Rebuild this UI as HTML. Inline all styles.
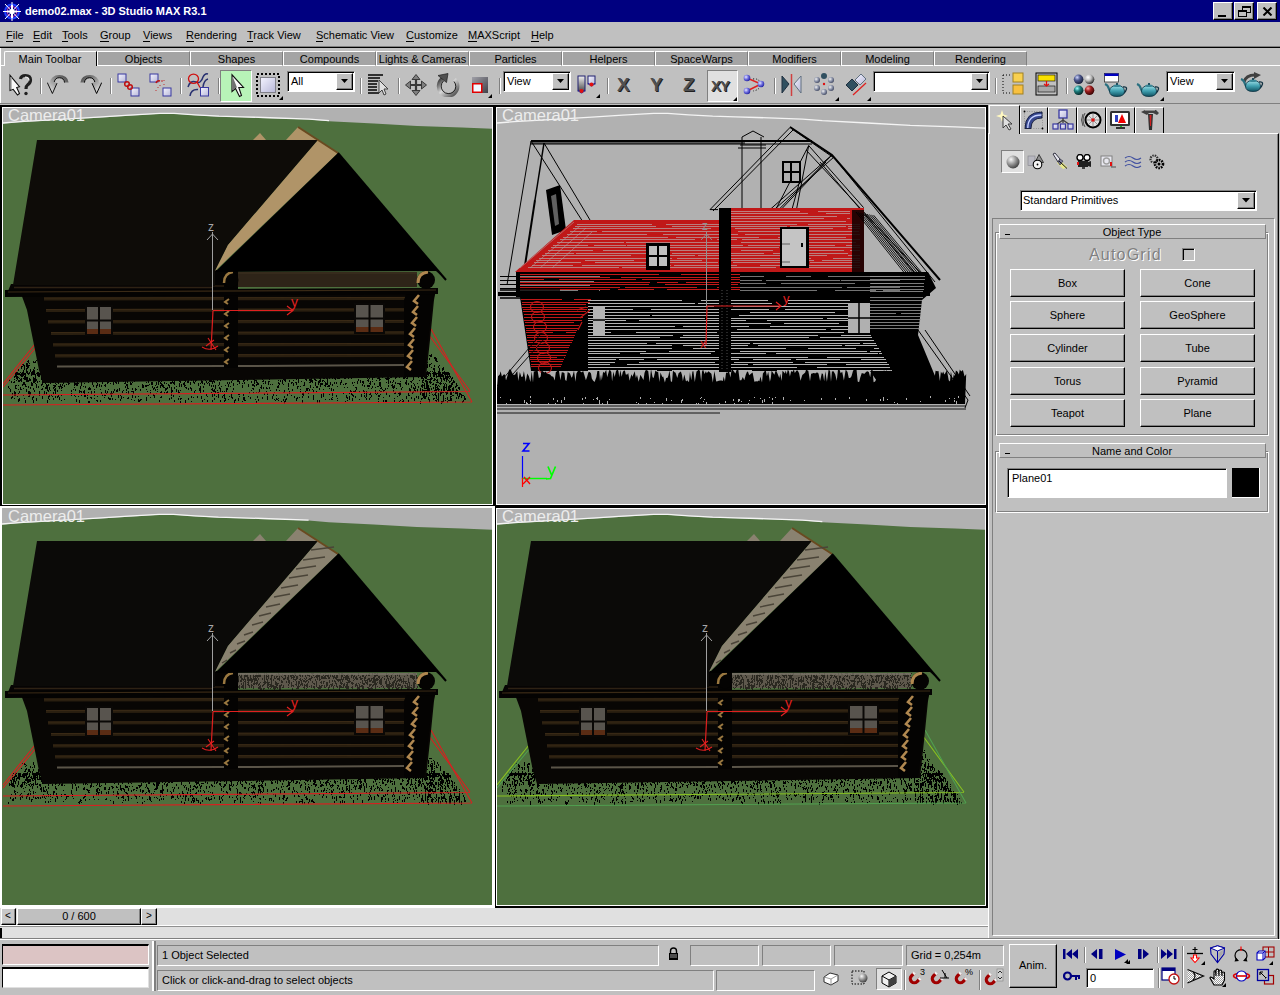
<!DOCTYPE html><html><head><meta charset="utf-8"><style>
*{margin:0;padding:0;box-sizing:border-box}
html,body{width:1280px;height:995px;overflow:hidden;background:#c0c0c0;position:relative;font-family:"Liberation Sans",sans-serif;font-size:11px;color:#000}
.a{position:absolute}
.rz{position:absolute;border-top:1px solid #fff;border-left:1px solid #fff;border-right:1px solid #000;border-bottom:1px solid #000;box-shadow:inset -1px -1px 0 #808080}
.sk{position:absolute;border-top:1px solid #808080;border-left:1px solid #808080;border-right:1px solid #fff;border-bottom:1px solid #fff;box-shadow:inset 1px 1px 0 #000}
.t{position:absolute;white-space:nowrap;line-height:1}
u{text-decoration:none;border-bottom:1px solid #000}
</style></head><body>
<div class="a" style="left:0;top:0;width:1280px;height:22px;background:#000080"></div>
<svg class="a" style="left:1px;top:1px" width="22" height="21" viewBox="0 0 22 21"><circle cx="11" cy="10.5" r="7" fill="none" stroke="#2040ff" stroke-width="2"/><circle cx="11" cy="10.5" r="5" fill="none" stroke="#e040c0" stroke-width="1"/><path d="M11 1V20M2 10.5H20M4 3L18 18M18 3L4 18" stroke="#fff" stroke-width="1"/><path d="M11 4V17M6 10.5H16" stroke="#fff" stroke-width="2"/><circle cx="11" cy="10.5" r="2.5" fill="#fff"/></svg>
<div class="t" style="left:25px;top:6px;color:#fff;font-weight:bold;font-size:11px">demo02.max - 3D Studio MAX R3.1</div>
<div class="rz" style="left:1213px;top:2px;width:20px;height:18px;background:#c0c0c0"></div>
<div class="rz" style="left:1234px;top:2px;width:20px;height:18px;background:#c0c0c0"></div>
<div class="rz" style="left:1257px;top:2px;width:20px;height:18px;background:#c0c0c0"></div>
<div class="a" style="left:1218px;top:15px;width:8px;height:2px;background:#000"></div>
<div class="a" style="left:1242px;top:6px;width:9px;height:7px;border:1px solid #000;border-top-width:2px"></div>
<div class="a" style="left:1238px;top:10px;width:9px;height:7px;border:1px solid #000;border-top-width:2px;background:#c0c0c0"></div>
<svg class="a" style="left:1262px;top:7px" width="11" height="9"><path d="M1.5 0.5L9.5 8.5M9.5 0.5L1.5 8.5" stroke="#000" stroke-width="2"/></svg>
<div class="t" style="left:6px;top:30px"><u>F</u>ile</div>
<div class="t" style="left:33px;top:30px"><u>E</u>dit</div>
<div class="t" style="left:62px;top:30px"><u>T</u>ools</div>
<div class="t" style="left:100px;top:30px"><u>G</u>roup</div>
<div class="t" style="left:143px;top:30px"><u>V</u>iews</div>
<div class="t" style="left:186px;top:30px"><u>R</u>endering</div>
<div class="t" style="left:247px;top:30px"><u>T</u>rack View</div>
<div class="t" style="left:316px;top:30px"><u>S</u>chematic View</div>
<div class="t" style="left:406px;top:30px"><u>C</u>ustomize</div>
<div class="t" style="left:468px;top:30px"><u>M</u>AXScript</div>
<div class="t" style="left:531px;top:30px"><u>H</u>elp</div>
<div class="a" style="left:0;top:46px;width:1280px;height:1px;background:#808080"></div>
<div class="a" style="left:0;top:47px;width:1280px;height:1px;background:#000"></div>
<div class="a" style="left:0;top:48px;width:1px;height:56px;background:#fff"></div>
<div class="a" style="left:0;top:65px;width:1280px;height:1px;background:#fff"></div>
<div class="a" style="left:4px;top:51px;width:93px;height:15px;background:#c0c0c0;border-left:1px solid #fff;border-top:1px solid #fff;border-right:1px solid #000;border-top-left-radius:2px"></div>
<div class="t" style="left:4px;top:54px;width:92px;text-align:center">Main Toolbar</div>
<div class="a" style="left:97px;top:51px;width:93px;height:15px;background:#a4a4a4;border-left:1px solid #fff;border-top:1px solid #fff;border-right:1px solid #808080;border-bottom:1px solid #fff"></div>
<div class="t" style="left:97px;top:54px;width:93px;text-align:center">Objects</div>
<div class="a" style="left:190px;top:51px;width:93px;height:15px;background:#a4a4a4;border-left:1px solid #fff;border-top:1px solid #fff;border-right:1px solid #808080;border-bottom:1px solid #fff"></div>
<div class="t" style="left:190px;top:54px;width:93px;text-align:center">Shapes</div>
<div class="a" style="left:283px;top:51px;width:93px;height:15px;background:#a4a4a4;border-left:1px solid #fff;border-top:1px solid #fff;border-right:1px solid #808080;border-bottom:1px solid #fff"></div>
<div class="t" style="left:283px;top:54px;width:93px;text-align:center">Compounds</div>
<div class="a" style="left:376px;top:51px;width:93px;height:15px;background:#a4a4a4;border-left:1px solid #fff;border-top:1px solid #fff;border-right:1px solid #808080;border-bottom:1px solid #fff"></div>
<div class="t" style="left:376px;top:54px;width:93px;text-align:center">Lights &amp; Cameras</div>
<div class="a" style="left:469px;top:51px;width:93px;height:15px;background:#a4a4a4;border-left:1px solid #fff;border-top:1px solid #fff;border-right:1px solid #808080;border-bottom:1px solid #fff"></div>
<div class="t" style="left:469px;top:54px;width:93px;text-align:center">Particles</div>
<div class="a" style="left:562px;top:51px;width:93px;height:15px;background:#a4a4a4;border-left:1px solid #fff;border-top:1px solid #fff;border-right:1px solid #808080;border-bottom:1px solid #fff"></div>
<div class="t" style="left:562px;top:54px;width:93px;text-align:center">Helpers</div>
<div class="a" style="left:655px;top:51px;width:93px;height:15px;background:#a4a4a4;border-left:1px solid #fff;border-top:1px solid #fff;border-right:1px solid #808080;border-bottom:1px solid #fff"></div>
<div class="t" style="left:655px;top:54px;width:93px;text-align:center">SpaceWarps</div>
<div class="a" style="left:748px;top:51px;width:93px;height:15px;background:#a4a4a4;border-left:1px solid #fff;border-top:1px solid #fff;border-right:1px solid #808080;border-bottom:1px solid #fff"></div>
<div class="t" style="left:748px;top:54px;width:93px;text-align:center">Modifiers</div>
<div class="a" style="left:841px;top:51px;width:93px;height:15px;background:#a4a4a4;border-left:1px solid #fff;border-top:1px solid #fff;border-right:1px solid #808080;border-bottom:1px solid #fff"></div>
<div class="t" style="left:841px;top:54px;width:93px;text-align:center">Modeling</div>
<div class="a" style="left:934px;top:51px;width:93px;height:15px;background:#a4a4a4;border-left:1px solid #fff;border-top:1px solid #fff;border-right:1px solid #808080;border-bottom:1px solid #fff"></div>
<div class="t" style="left:934px;top:54px;width:93px;text-align:center">Rendering</div>
<svg width="0" height="0" style="position:absolute"><defs>
<linearGradient id="gg" x1="0" y1="0" x2="0" y2="1"><stop offset="0" stop-color="#f0f0f0"/><stop offset="1" stop-color="#505050"/></linearGradient>
<linearGradient id="lav" x1="0" y1="0" x2="1" y2="1"><stop offset="0" stop-color="#f4f4ff"/><stop offset="1" stop-color="#b8b8d8"/></linearGradient>
<radialGradient id="ball" cx="0.35" cy="0.35" r="0.7"><stop offset="0" stop-color="#e8e8ff"/><stop offset="0.5" stop-color="#7070e0"/><stop offset="1" stop-color="#2020a0"/></radialGradient>
<radialGradient id="gball" cx="0.35" cy="0.35" r="0.7"><stop offset="0" stop-color="#f0f0f0"/><stop offset="0.6" stop-color="#8088a0"/><stop offset="1" stop-color="#404860"/></radialGradient>
<radialGradient id="sph" cx="0.35" cy="0.3" r="0.8"><stop offset="0" stop-color="#f8f8f8"/><stop offset="0.5" stop-color="#909090"/><stop offset="1" stop-color="#303030"/></radialGradient>
<linearGradient id="teal" x1="0" y1="0" x2="0" y2="1"><stop offset="0" stop-color="#a0e0e8"/><stop offset="0.5" stop-color="#40a0b0"/><stop offset="1" stop-color="#105060"/></linearGradient>
</defs></svg>
<svg class="a" style="left:8px;top:73px" width="25" height="24" viewBox="0 0 25 24"><path d="M2,2.3 L2,17.5 L5.2,16.3 L9.5,22 L11.5,20.5 L8.7,14.5 L11.5,13.7 Z" fill="#f8f8f8" stroke="#101010" stroke-width="1.1"/><path d="M3,4 L3,16" stroke="#909090" stroke-width="1.2"/><path d="M12.5,6 Q13,2.5 17.5,2.5 Q22.5,2.5 22.5,7 Q22.5,10 19.5,12 Q18,13 18,16" fill="none" stroke="#202020" stroke-width="3.2"/><path d="M17,4 Q21,4 21,7.5" fill="none" stroke="#f0f0f0" stroke-width="1.2"/><circle cx="18" cy="20.5" r="1.7" fill="#202020"/></svg>
<div class="a" style="left:40px;top:78px;width:1px;height:16px;background:#808080"></div><div class="a" style="left:41px;top:78px;width:1px;height:16px;background:#fff"></div>
<svg class="a" style="left:47px;top:74px" width="23" height="21" viewBox="0 0 23 21"><defs><linearGradient id="ug" x1="1" y1="0" x2="0" y2="1"><stop offset="0" stop-color="#404040"/><stop offset="0.6" stop-color="#a8a8a8"/><stop offset="1" stop-color="#f8f8f8"/></linearGradient></defs><path d="M3,8.8 A9.3,7.8 0 0 1 21.6,8.6 L17.6,8.6 A5.3,5.6 0 0 0 7.2,8 L10,9.2 L5.4,19.5 L0.3,8.6 Z" fill="url(#ug)"/><path d="M17.6,8.6 A5.3,5.6 0 0 0 7.2,8 M10,9.2 L5.4,19.5 L0.3,8.6" fill="none" stroke="#000" stroke-width="0.9"/></svg>
<svg class="a" style="left:79px;top:74px" width="23" height="21" viewBox="0 0 23 21"><g transform="translate(23,0) scale(-1,1)"><path d="M3,8.8 A9.3,7.8 0 0 1 21.6,8.6 L17.6,8.6 A5.3,5.6 0 0 0 7.2,8 L10,9.2 L5.4,19.5 L0.3,8.6 Z" fill="url(#ug)"/><path d="M17.6,8.6 A5.3,5.6 0 0 0 7.2,8 M10,9.2 L5.4,19.5 L0.3,8.6" fill="none" stroke="#000" stroke-width="1"/></g></svg>
<div class="a" style="left:110px;top:78px;width:1px;height:16px;background:#808080"></div><div class="a" style="left:111px;top:78px;width:1px;height:16px;background:#fff"></div>
<svg class="a" style="left:117px;top:73px" width="23" height="24" viewBox="0 0 23 24"><rect x="1" y="1" width="8" height="8" fill="url(#lav)" stroke="#3838a0"/><rect x="14" y="15" width="8" height="8" fill="url(#lav)" stroke="#3838a0"/><circle cx="10" cy="11" r="2.3" fill="none" stroke="#c01010" stroke-width="1.5"/><circle cx="13" cy="14" r="2.3" fill="none" stroke="#c01010" stroke-width="1.5"/></svg>
<svg class="a" style="left:149px;top:73px" width="23" height="24" viewBox="0 0 23 24"><rect x="1" y="1" width="8" height="8" fill="url(#lav)" stroke="#3838a0"/><rect x="14" y="15" width="8" height="8" fill="url(#lav)" stroke="#3838a0"/><path d="M7 10Q8 7 11 8" fill="none" stroke="#c01010" stroke-width="1.5"/><path d="M13 7V9M15 7V8M11 12V13M9 14V15M7 17V18M15 11V12" stroke="#c03030" stroke-width="1"/></svg>
<div class="a" style="left:180px;top:78px;width:1px;height:16px;background:#808080"></div><div class="a" style="left:181px;top:78px;width:1px;height:16px;background:#fff"></div>
<svg class="a" style="left:187px;top:73px" width="23" height="24" viewBox="0 0 23 24"><path d="M1,14 Q3,7 9,9 Q14,11 16,4 Q18,0 21,1 M3,23 Q4,16 11,16.5 M16,14 Q17,7 21,6" fill="none" stroke="#283070" stroke-width="1.5"/><ellipse cx="6.5" cy="5.8" rx="5" ry="4.6" fill="none" stroke="#d01010" stroke-width="1.3"/><path d="M10,9 L13,14.5" stroke="#d01010" stroke-width="1.3"/><rect x="13.5" y="14.5" width="8" height="8.5" fill="url(#lav)" stroke="#3838a0"/></svg>
<div class="a" style="left:218px;top:78px;width:1px;height:16px;background:#808080"></div><div class="a" style="left:219px;top:78px;width:1px;height:16px;background:#fff"></div>
<div class="a" style="left:220px;top:70px;width:32px;height:32px;background:#b8f4b8;border-top:1px solid #808080;border-left:1px solid #808080;border-right:1px solid #fff;border-bottom:1px solid #fff"></div>
<svg class="a" style="left:230px;top:73px" width="16" height="25" viewBox="0 0 16 25"><path d="M2,1.8 L2,18.5 L5.5,15.5 L9.5,23.5 L11.5,22.5 L8.8,14.5 L13.5,14.5 Z" fill="#f8f8f8" stroke="#101010" stroke-width="1.1"/><path d="M2.6,3.5 L2.6,17.5 L5.5,15 L7,14.5 Z" fill="#707070"/></svg>
<svg class="a" style="left:256px;top:73px" width="24" height="24" viewBox="0 0 24 24"><path d="M1,1 H23 V23 H1 Z" fill="none" stroke="#000" stroke-width="2" stroke-dasharray="2 2"/><rect x="4.5" y="4.5" width="15" height="15" fill="url(#lav)" stroke="#808088" stroke-width="1"/></svg>
<svg class="a" style="left:279px;top:96px" width="4" height="4" viewBox="0 0 4 4"><path d="M4 0V4H0Z" fill="#000"/></svg>
<div class="a" style="left:287px;top:71px;width:68px;height:21px;background:#fff;border-top:1px solid #808080;border-left:1px solid #808080;border-right:1px solid #fff;border-bottom:1px solid #fff"></div>
<div class="a" style="left:288px;top:72px;width:66px;height:19px;border-top:1px solid #000;border-left:1px solid #000"></div>
<div class="t" style="left:291px;top:76px">All</div>
<div class="rz" style="left:336px;top:73px;width:17px;height:17px;background:#c0c0c0"></div>
<svg class="a" style="left:341px;top:79px" width="7" height="4" viewBox="0 0 7 4"><path d="M0 0H7L3.5 4Z" fill="#000"/></svg>
<div class="a" style="left:360px;top:78px;width:1px;height:16px;background:#808080"></div><div class="a" style="left:361px;top:78px;width:1px;height:16px;background:#fff"></div>
<svg class="a" style="left:367px;top:73px" width="23" height="24" viewBox="0 0 23 24"><path d="M1 2H16M1 5H13M1 8H11M1 11H10M1 14H10M1 17H10M1 20H12" stroke="#000" stroke-width="1.4"/><path d="M12 7L12 20L15 17L17 22L19 21L17 16L21 16Z" fill="#e0e0e0" stroke="#404040"/></svg>
<div class="a" style="left:398px;top:78px;width:1px;height:16px;background:#808080"></div><div class="a" style="left:399px;top:78px;width:1px;height:16px;background:#fff"></div>
<svg class="a" style="left:404px;top:73px" width="24" height="24" viewBox="0 0 24 24"><path d="M12,1.5 L16,6.5 H8 Z M12,22.5 L16,17.5 H8 Z M1.5,12 L6.5,8 V16 Z M22.5,12 L17.5,8 V16 Z" fill="#808080" stroke="#303030" stroke-width="0.9"/><path d="M12,6 V18 M6,12 H18" stroke="#383838" stroke-width="2.2"/></svg>
<svg class="a" style="left:436px;top:73px" width="24" height="24" viewBox="0 0 24 24"><defs><linearGradient id="rg" x1="0" y1="0" x2="1" y2="1"><stop offset="0" stop-color="#303030"/><stop offset="0.45" stop-color="#d8d8d8"/><stop offset="1" stop-color="#404040"/></linearGradient></defs><path d="M18.5,6.5 A9.3,9.3 0 1 1 7,5.5" fill="none" stroke="url(#rg)" stroke-width="4"/><path d="M18,8.5 A7.3,7.3 0 1 1 7.5,8" fill="none" stroke="#000" stroke-width="0.8"/><path d="M2,2.5 L12,0.5 L10.5,9.5 Z" fill="#505050" stroke="#202020" stroke-width="0.7"/></svg>
<svg class="a" style="left:472px;top:77px" width="17" height="16" viewBox="0 0 17 16"><defs><linearGradient id="sg" x1="0" y1="0" x2="1" y2="1"><stop offset="0" stop-color="#a0a0a8"/><stop offset="1" stop-color="#404048"/></linearGradient></defs><rect x="0" y="0" width="16" height="16" fill="url(#sg)"/><rect x="0.75" y="6.75" width="9" height="8.5" fill="#f0f8ff" stroke="#e00000" stroke-width="1.5"/></svg>
<svg class="a" style="left:488px;top:94px" width="4" height="4" viewBox="0 0 4 4"><path d="M4 0V4H0Z" fill="#000"/></svg>
<div class="a" style="left:499px;top:78px;width:1px;height:16px;background:#808080"></div><div class="a" style="left:500px;top:78px;width:1px;height:16px;background:#fff"></div>
<div class="a" style="left:503px;top:71px;width:68px;height:21px;background:#fff;border-top:1px solid #808080;border-left:1px solid #808080;border-right:1px solid #fff;border-bottom:1px solid #fff"></div>
<div class="a" style="left:504px;top:72px;width:66px;height:19px;border-top:1px solid #000;border-left:1px solid #000"></div>
<div class="t" style="left:507px;top:76px">View</div>
<div class="rz" style="left:552px;top:73px;width:17px;height:17px;background:#c0c0c0"></div>
<svg class="a" style="left:557px;top:79px" width="7" height="4" viewBox="0 0 7 4"><path d="M0 0H7L3.5 4Z" fill="#000"/></svg>
<svg class="a" style="left:577px;top:75px" width="22" height="22" viewBox="0 0 22 22"><rect x="1" y="1" width="7" height="15" fill="url(#gg)" stroke="#202070"/><path d="M1 15Q4.5 21 8 15" fill="none" stroke="#2020a0"/><circle cx="4.5" cy="16" r="2" fill="#e01010"/><rect x="11" y="1" width="7" height="8" fill="url(#lav)" stroke="#202070"/><path d="M11 8Q14.5 14 18 8" fill="none" stroke="#2020a0"/><circle cx="14.5" cy="9.5" r="2" fill="#e01010"/></svg>
<svg class="a" style="left:596px;top:94px" width="4" height="4" viewBox="0 0 4 4"><path d="M4 0V4H0Z" fill="#000"/></svg>
<div class="a" style="left:607px;top:78px;width:1px;height:16px;background:#808080"></div><div class="a" style="left:608px;top:78px;width:1px;height:16px;background:#fff"></div>
<div class="t" style="left:617px;top:75px;font-size:19px;font-weight:bold;color:#505050;text-shadow:1px 1px 0 #202020">X</div>
<div class="t" style="left:650px;top:75px;font-size:19px;font-weight:bold;color:#505050;text-shadow:1px 1px 0 #202020">Y</div>
<div class="t" style="left:683px;top:75px;font-size:19px;font-weight:bold;color:#505050;text-shadow:1px 1px 0 #202020">Z</div>
<div class="a" style="left:707px;top:70px;width:31px;height:32px;background:#e0e0e0;border-top:1px solid #808080;border-left:1px solid #808080;border-right:1px solid #fff;border-bottom:1px solid #fff"></div>
<div class="t" style="left:711px;top:78px;font-size:15px;font-weight:bold;color:#505050;text-shadow:1px 1px 0 #202020;letter-spacing:-1px">XY</div>
<svg class="a" style="left:733px;top:97px" width="4" height="4" viewBox="0 0 4 4"><path d="M4 0V4H0Z" fill="#000"/></svg>
<svg class="a" style="left:743px;top:74px" width="23" height="22" viewBox="0 0 23 22"><path d="M4 4L18 10L4 17" fill="none" stroke="#e02020" stroke-width="1.5"/><path d="M10 5Q16 4 18 10Q17 16 10 17" fill="none" stroke="#000" stroke-dasharray="1 2"/><circle cx="4" cy="4" r="3.3" fill="url(#ball)"/><circle cx="18" cy="10" r="3.3" fill="url(#ball)"/><circle cx="4" cy="17" r="3.3" fill="url(#ball)"/></svg>
<div class="a" style="left:774px;top:78px;width:1px;height:16px;background:#808080"></div><div class="a" style="left:775px;top:78px;width:1px;height:16px;background:#fff"></div>
<svg class="a" style="left:781px;top:73px" width="22" height="24" viewBox="0 0 22 24"><path d="M1 3L8 11L1 20Z" fill="#305060" stroke="#203040"/><path d="M20 3L13 11L20 20Z" fill="url(#lav)" stroke="#607080"/><path d="M10.5 1V23" stroke="#d04040" stroke-width="1.5"/></svg>
<svg class="a" style="left:813px;top:73px" width="23" height="24" viewBox="0 0 23 24"><circle cx="11" cy="3" r="3" fill="#305060"/><circle cx="4" cy="7" r="3" fill="url(#gball)"/><circle cx="18" cy="7" r="3" fill="url(#gball)"/><circle cx="4" cy="15" r="3" fill="url(#gball)"/><circle cx="18" cy="15" r="3" fill="url(#gball)"/><circle cx="11" cy="19" r="3" fill="url(#gball)"/><circle cx="11" cy="11" r="1.2" fill="#e01010"/></svg>
<svg class="a" style="left:835px;top:97px" width="4" height="4" viewBox="0 0 4 4"><path d="M4 0V4H0Z" fill="#000"/></svg>
<svg class="a" style="left:845px;top:73px" width="23" height="24" viewBox="0 0 23 24"><path d="M1 12L7 6L13 12L7 18Z" fill="#305060" stroke="#203040"/><path d="M10 7L16 1L21 6L15 12Z" fill="url(#lav)" stroke="#607080"/><path d="M8 22L21 10" stroke="#e02020" stroke-width="1.3"/></svg>
<svg class="a" style="left:867px;top:97px" width="4" height="4" viewBox="0 0 4 4"><path d="M4 0V4H0Z" fill="#000"/></svg>
<div class="a" style="left:873px;top:71px;width:117px;height:21px;background:#fff;border-top:1px solid #808080;border-left:1px solid #808080;border-right:1px solid #fff;border-bottom:1px solid #fff"></div>
<div class="a" style="left:874px;top:72px;width:115px;height:19px;border-top:1px solid #000;border-left:1px solid #000"></div>
<div class="t" style="left:877px;top:76px"></div>
<div class="rz" style="left:971px;top:73px;width:17px;height:17px;background:#c0c0c0"></div>
<svg class="a" style="left:976px;top:79px" width="7" height="4" viewBox="0 0 7 4"><path d="M0 0H7L3.5 4Z" fill="#000"/></svg>
<div class="a" style="left:995px;top:78px;width:1px;height:16px;background:#808080"></div><div class="a" style="left:996px;top:78px;width:1px;height:16px;background:#fff"></div>
<svg class="a" style="left:1002px;top:72px" width="23" height="25" viewBox="0 0 23 25"><path d="M1 3V21M1 3H10M1 21H10" stroke="#000" stroke-dasharray="1 2"/><rect x="11" y="1" width="10" height="9" fill="#f8d050" stroke="#a08020"/><rect x="11" y="13" width="10" height="9" fill="#f8c040" stroke="#a08020"/></svg>
<svg class="a" style="left:1035px;top:72px" width="23" height="25" viewBox="0 0 23 25"><rect x="1" y="1" width="21" height="22" fill="#c0c0c0" stroke="#000"/><rect x="3" y="3" width="17" height="6" fill="#f8e000" stroke="#000" stroke-width="0.6"/><rect x="3" y="14" width="17" height="6" fill="#a8a8a8" stroke="#000" stroke-width="0.6"/><path d="M11.5 9V14M9 12L11.5 14L14 12" stroke="#e01010" stroke-width="1.3" fill="none"/></svg>
<div class="a" style="left:1066px;top:78px;width:1px;height:16px;background:#808080"></div><div class="a" style="left:1067px;top:78px;width:1px;height:16px;background:#fff"></div>
<svg class="a" style="left:1073px;top:73px" width="22" height="23" viewBox="0 0 22 23"><defs><radialGradient id="b1" cx="0.35" cy="0.3" r="0.75"><stop offset="0" stop-color="#d0d8ff"/><stop offset="0.4" stop-color="#505a90"/><stop offset="1" stop-color="#101830"/></radialGradient><radialGradient id="b2" cx="0.35" cy="0.3" r="0.75"><stop offset="0" stop-color="#ffffff"/><stop offset="0.45" stop-color="#c0c0c0"/><stop offset="1" stop-color="#202020"/></radialGradient><radialGradient id="b3" cx="0.35" cy="0.3" r="0.75"><stop offset="0" stop-color="#a0ffff"/><stop offset="0.4" stop-color="#208080"/><stop offset="1" stop-color="#002020"/></radialGradient><radialGradient id="b4" cx="0.35" cy="0.3" r="0.75"><stop offset="0" stop-color="#ffa0a0"/><stop offset="0.4" stop-color="#a02020"/><stop offset="1" stop-color="#300000"/></radialGradient></defs><circle cx="5.6" cy="6.3" r="4.8" fill="url(#b1)"/><circle cx="16.5" cy="6.3" r="4.8" fill="url(#b2)"/><circle cx="5.6" cy="17.3" r="4.8" fill="url(#b3)"/><circle cx="16.5" cy="17.3" r="4.8" fill="url(#b4)"/></svg>
<svg class="a" style="left:1103px;top:72px" width="25" height="25" viewBox="0 0 25 25"><rect x="1.5" y="1.5" width="14" height="8.5" fill="#fff" stroke="#303030" stroke-width="0.8"/><rect x="1.5" y="1.5" width="14" height="2.5" fill="#0000c0"/><g transform="translate(1,11)"><path d="M1,1 Q4,2 5,6 Q6,9 8,9" fill="none" stroke="#2a7080" stroke-width="2.2"/><path d="M19,4 Q23,3.5 22.5,6 Q22,9 19,11" fill="none" stroke="#103040" stroke-width="1.4"/><path d="M5.5,8 Q6,2.5 13,2.5 Q20,2.5 20.5,8 Q20.5,13.5 13,13.5 Q5.5,13.5 5.5,8 Z" fill="url(#teal)" stroke="#0a3040" stroke-width="0.8"/><ellipse cx="13" cy="2.8" rx="3.5" ry="1.2" fill="#3a8898"/><rect x="12" y="0" width="2" height="2" fill="#205060"/></g></svg>
<svg class="a" style="left:1135px;top:72px" width="25" height="25" viewBox="0 0 25 25"><g transform="translate(1,11)"><path d="M1,1 Q4,2 5,6 Q6,9 8,9" fill="none" stroke="#2a7080" stroke-width="2.2"/><path d="M19,4 Q23,3.5 22.5,6 Q22,9 19,11" fill="none" stroke="#103040" stroke-width="1.4"/><path d="M5.5,8 Q6,2.5 13,2.5 Q20,2.5 20.5,8 Q20.5,13.5 13,13.5 Q5.5,13.5 5.5,8 Z" fill="url(#teal)" stroke="#0a3040" stroke-width="0.8"/><ellipse cx="13" cy="2.8" rx="3.5" ry="1.2" fill="#3a8898"/><rect x="12" y="0" width="2" height="2" fill="#205060"/></g></svg>
<svg class="a" style="left:1160px;top:97px" width="4" height="4" viewBox="0 0 4 4"><path d="M4 0V4H0Z" fill="#000"/></svg>
<div class="a" style="left:1166px;top:71px;width:69px;height:21px;background:#fff;border-top:1px solid #808080;border-left:1px solid #808080;border-right:1px solid #fff;border-bottom:1px solid #fff"></div>
<div class="a" style="left:1167px;top:72px;width:67px;height:19px;border-top:1px solid #000;border-left:1px solid #000"></div>
<div class="t" style="left:1170px;top:76px">View</div>
<div class="rz" style="left:1216px;top:73px;width:17px;height:17px;background:#c0c0c0"></div>
<svg class="a" style="left:1221px;top:79px" width="7" height="4" viewBox="0 0 7 4"><path d="M0 0H7L3.5 4Z" fill="#000"/></svg>
<svg class="a" style="left:1240px;top:72px" width="24" height="25" viewBox="0 0 24 25"><path d="M4 10Q6 3 15 3" fill="none" stroke="#404040" stroke-width="3"/><path d="M14 0L21 3L14 7Z" fill="#404040"/><g transform="translate(0,6)"><path d="M1,1 Q4,2 5,6 Q6,9 8,9" fill="none" stroke="#2a7080" stroke-width="2.2"/><path d="M19,4 Q23,3.5 22.5,6 Q22,9 19,11" fill="none" stroke="#103040" stroke-width="1.4"/><path d="M5.5,8 Q6,2.5 13,2.5 Q20,2.5 20.5,8 Q20.5,13.5 13,13.5 Q5.5,13.5 5.5,8 Z" fill="url(#teal)" stroke="#0a3040" stroke-width="0.8"/><ellipse cx="13" cy="2.8" rx="3.5" ry="1.2" fill="#3a8898"/><rect x="12" y="0" width="2" height="2" fill="#205060"/></g></svg>
<div class="a" style="left:0;top:103px;width:1280px;height:1px;background:#808080"></div>
<svg class="a" style="left:0;top:0" width="1280" height="995" viewBox="0 0 1280 995">
<rect x="0" y="105" width="988" height="803" fill="#000"/>
<defs><clipPath id="c1"><rect x="3" y="108" width="489" height="396"/></clipPath><clipPath id="c2"><rect x="497" y="108" width="488" height="396"/></clipPath><clipPath id="c3"><rect x="2" y="508" width="490" height="397"/></clipPath><clipPath id="c4"><rect x="497" y="509" width="488" height="396"/></clipPath></defs>
<rect x="2" y="107" width="491" height="398" fill="#fff"/>
<g clip-path="url(#c1)"><rect x="3" y="108" width="489" height="396" fill="#4e703e"/><path d="M3,106 L3.0,123.5 L20.0,122.2 L65.0,119.6 L98.0,117.7 L129.0,115.7 L160.0,113.8 L174.0,113.8 L195.0,115.3 L219.0,116.7 L242.0,117.3 L263.0,118.0 L309.0,119.6 L329.0,121.2 L374.0,123.5 L417.0,125.9 L462.0,127.4 L495.0,128.8 L492,106 Z" fill="#b1b1b1"/><path d="M3.0,123.0 L20.0,121.7 L65.0,119.1 L98.0,117.2 L129.0,115.2 L160.0,113.3 L174.0,113.3 L195.0,114.8 L219.0,116.2 L242.0,116.8 L263.0,117.5 L309.0,119.1 L329.0,120.7" fill="none" stroke="#f4f4f4" stroke-width="1.3"/><path fill="#000" shape-rendering="crispEdges" d="M157,372h1v1h-1zM41,378h1v2h-1zM276,395h1v1h-1zM25,376h1v1h-1zM119,379h1v1h-1zM388,372h1v1h-1zM298,380h1v1h-1zM273,375h1v1h-1zM29,392h1v2h-1zM201,379h1v3h-1zM150,390h1v1h-1zM55,380h1v1h-1zM179,379h1v1h-1zM268,381h1v2h-1zM321,376h1v2h-1zM222,396h1v2h-1zM146,389h1v1h-1zM46,374h1v2h-1zM411,386h1v2h-1zM288,372h1v3h-1zM200,387h1v1h-1zM437,376h1v1h-1zM360,380h1v2h-1zM164,374h1v2h-1zM275,376h1v1h-1zM443,377h1v1h-1zM36,384h1v3h-1zM139,375h1v2h-1zM18,377h1v1h-1zM289,377h1v1h-1zM361,372h1v1h-1zM191,396h1v2h-1zM45,376h1v3h-1zM136,372h1v2h-1zM405,373h1v2h-1zM183,373h1v1h-1zM89,373h1v1h-1zM14,391h1v1h-1zM129,372h1v2h-1zM254,381h1v2h-1zM446,384h1v3h-1zM445,383h1v1h-1zM218,393h1v3h-1zM188,375h1v1h-1zM230,375h1v1h-1zM39,373h1v1h-1zM59,381h1v1h-1zM55,375h1v1h-1zM40,373h1v2h-1zM76,373h1v2h-1zM285,377h1v1h-1zM399,401h1v2h-1zM229,374h1v1h-1zM55,374h1v2h-1zM228,384h1v3h-1zM19,398h1v3h-1zM174,384h1v1h-1zM357,374h1v1h-1zM328,373h1v2h-1zM426,374h1v1h-1zM253,388h1v2h-1zM301,381h1v1h-1zM379,390h1v1h-1zM100,377h1v1h-1zM225,373h1v3h-1zM448,376h1v2h-1zM447,375h1v1h-1zM55,377h1v2h-1zM102,381h1v3h-1zM395,377h1v2h-1zM376,372h1v1h-1zM426,388h1v1h-1zM228,372h1v2h-1zM48,397h1v2h-1zM221,386h1v1h-1zM341,372h1v1h-1zM21,380h1v2h-1zM379,372h1v3h-1zM169,379h1v1h-1zM18,389h1v1h-1zM250,397h1v2h-1zM410,372h1v1h-1zM143,373h1v3h-1zM158,379h1v1h-1zM36,386h1v2h-1zM313,390h1v3h-1zM201,396h1v3h-1zM68,372h1v3h-1zM17,376h1v1h-1zM288,388h1v1h-1zM87,377h1v1h-1zM264,374h1v3h-1zM252,377h1v1h-1zM414,372h1v1h-1zM135,388h1v3h-1zM216,372h1v1h-1zM212,381h1v3h-1zM287,373h1v2h-1zM216,378h1v2h-1zM242,373h1v3h-1zM411,397h1v2h-1zM432,394h1v1h-1zM394,372h1v1h-1zM188,374h1v1h-1zM205,373h1v2h-1zM369,394h1v1h-1zM440,382h1v2h-1zM74,394h1v2h-1zM109,398h1v2h-1zM415,372h1v1h-1zM82,376h1v3h-1zM194,376h1v2h-1zM155,385h1v1h-1zM163,376h1v1h-1zM185,378h1v2h-1zM244,372h1v1h-1zM130,372h1v1h-1zM132,372h1v2h-1zM399,383h1v2h-1zM195,379h1v3h-1zM270,384h1v1h-1zM136,389h1v1h-1zM204,372h1v1h-1zM300,389h1v1h-1zM288,373h1v2h-1zM405,376h1v2h-1zM429,381h1v1h-1zM250,373h1v1h-1zM91,397h1v2h-1zM252,373h1v2h-1zM238,372h1v2h-1zM378,401h1v1h-1zM15,386h1v3h-1zM121,376h1v2h-1zM310,379h1v2h-1zM107,373h1v1h-1zM391,385h1v1h-1zM194,374h1v1h-1zM393,372h1v2h-1zM206,372h1v2h-1zM408,383h1v2h-1zM283,384h1v1h-1zM219,372h1v2h-1zM159,400h1v2h-1zM120,399h1v2h-1zM108,372h1v2h-1zM184,377h1v3h-1zM310,373h1v1h-1zM50,390h1v1h-1zM192,372h1v1h-1zM146,382h1v1h-1zM277,378h1v1h-1zM310,385h1v3h-1zM187,374h1v2h-1zM77,385h1v1h-1zM28,391h1v3h-1zM297,386h1v3h-1zM72,378h1v3h-1zM270,390h1v1h-1zM388,380h1v1h-1zM47,372h1v2h-1zM449,375h1v2h-1zM265,381h1v3h-1zM321,377h1v1h-1zM218,372h1v3h-1zM421,372h1v3h-1zM38,386h1v2h-1zM380,391h1v1h-1zM343,373h1v2h-1zM235,375h1v2h-1zM427,373h1v1h-1zM292,382h1v1h-1zM284,374h1v2h-1zM294,372h1v2h-1zM36,373h1v1h-1zM326,383h1v2h-1zM334,373h1v2h-1zM223,372h1v3h-1zM100,400h1v2h-1zM16,376h1v3h-1zM132,373h1v1h-1zM42,372h1v3h-1zM128,374h1v3h-1zM385,378h1v1h-1zM332,373h1v2h-1zM189,372h1v2h-1zM322,375h1v1h-1zM199,375h1v1h-1zM395,372h1v2h-1zM394,372h1v1h-1zM336,395h1v2h-1zM124,372h1v2h-1zM174,376h1v2h-1zM401,373h1v1h-1zM392,373h1v1h-1zM123,373h1v3h-1zM153,388h1v2h-1zM415,390h1v2h-1zM428,397h1v3h-1zM102,372h1v2h-1zM215,387h1v2h-1zM231,395h1v3h-1zM67,377h1v2h-1zM138,373h1v2h-1zM195,373h1v2h-1zM264,375h1v1h-1zM304,372h1v3h-1zM425,377h1v1h-1zM216,374h1v2h-1zM205,379h1v1h-1zM50,374h1v1h-1zM155,375h1v3h-1zM101,372h1v2h-1zM184,386h1v1h-1zM181,374h1v1h-1zM237,380h1v2h-1zM66,378h1v1h-1zM51,394h1v2h-1zM192,376h1v2h-1zM398,393h1v1h-1zM67,376h1v2h-1zM42,396h1v3h-1zM402,399h1v1h-1zM368,373h1v1h-1zM248,384h1v2h-1zM47,388h1v1h-1zM368,373h1v1h-1zM305,374h1v1h-1zM296,378h1v2h-1zM329,372h1v1h-1zM146,397h1v1h-1zM187,373h1v3h-1zM9,379h1v2h-1zM136,374h1v1h-1zM227,373h1v1h-1zM21,375h1v2h-1zM33,373h1v2h-1zM45,373h1v2h-1zM434,373h1v1h-1zM328,385h1v2h-1zM322,373h1v2h-1zM348,378h1v1h-1zM236,373h1v1h-1zM114,373h1v2h-1zM58,381h1v3h-1zM94,373h1v2h-1zM427,372h1v3h-1zM75,375h1v1h-1zM19,380h1v2h-1zM32,372h1v2h-1zM215,385h1v2h-1zM345,401h1v1h-1zM159,373h1v3h-1zM351,372h1v2h-1zM394,400h1v2h-1zM86,372h1v2h-1zM45,376h1v1h-1zM266,387h1v2h-1zM172,390h1v2h-1zM48,385h1v1h-1zM179,396h1v1h-1zM157,386h1v2h-1zM22,375h1v2h-1zM27,372h1v1h-1zM378,372h1v1h-1zM352,394h1v2h-1zM175,374h1v3h-1zM28,386h1v2h-1zM433,374h1v3h-1zM430,382h1v1h-1zM19,373h1v2h-1zM337,377h1v2h-1zM371,395h1v2h-1zM69,377h1v1h-1zM377,386h1v1h-1zM287,374h1v2h-1zM220,388h1v3h-1zM44,373h1v1h-1zM122,372h1v1h-1zM230,379h1v1h-1zM459,394h1v1h-1zM130,372h1v1h-1zM202,400h1v2h-1zM88,372h1v2h-1zM293,383h1v3h-1zM398,383h1v1h-1zM367,374h1v2h-1zM269,375h1v2h-1zM100,373h1v1h-1zM116,373h1v3h-1zM95,372h1v2h-1zM114,389h1v2h-1zM226,390h1v2h-1zM429,372h1v2h-1zM115,372h1v3h-1zM436,375h1v1h-1zM215,373h1v1h-1zM57,380h1v3h-1zM169,372h1v2h-1zM73,373h1v2h-1zM26,386h1v1h-1zM383,390h1v2h-1zM320,373h1v2h-1zM44,372h1v2h-1zM260,372h1v1h-1zM374,383h1v1h-1zM302,372h1v1h-1zM191,373h1v2h-1zM315,376h1v1h-1zM152,379h1v2h-1zM198,372h1v2h-1zM304,375h1v2h-1zM102,372h1v1h-1zM203,390h1v2h-1zM274,375h1v1h-1zM68,372h1v1h-1zM303,395h1v1h-1zM272,396h1v3h-1zM87,374h1v1h-1zM248,396h1v1h-1zM185,387h1v1h-1zM147,391h1v1h-1zM33,396h1v2h-1zM48,385h1v1h-1zM303,392h1v3h-1zM194,391h1v2h-1zM92,373h1v2h-1zM440,372h1v2h-1zM65,373h1v1h-1zM27,379h1v1h-1zM315,374h1v2h-1zM284,379h1v2h-1zM307,374h1v1h-1zM204,383h1v2h-1zM240,372h1v1h-1zM293,377h1v1h-1zM214,381h1v2h-1zM393,390h1v2h-1zM57,372h1v2h-1zM176,389h1v3h-1zM243,372h1v1h-1zM46,386h1v3h-1zM45,387h1v2h-1zM308,388h1v1h-1zM402,401h1v1h-1zM97,400h1v2h-1zM140,390h1v1h-1zM324,385h1v1h-1zM38,374h1v2h-1zM81,394h1v2h-1zM424,376h1v2h-1zM239,396h1v1h-1zM280,381h1v1h-1zM155,372h1v1h-1zM194,382h1v2h-1zM321,394h1v1h-1zM372,373h1v3h-1zM30,392h1v2h-1zM263,380h1v1h-1zM124,378h1v2h-1zM347,375h1v2h-1zM174,387h1v2h-1zM114,381h1v1h-1zM144,378h1v2h-1zM302,400h1v3h-1zM435,394h1v1h-1zM352,373h1v2h-1zM291,376h1v3h-1zM175,372h1v2h-1zM113,382h1v1h-1zM33,379h1v2h-1zM57,374h1v1h-1zM198,374h1v1h-1zM102,381h1v2h-1zM81,372h1v1h-1zM333,376h1v1h-1zM302,393h1v2h-1zM193,373h1v1h-1zM34,390h1v2h-1zM282,380h1v3h-1zM439,386h1v1h-1zM84,372h1v1h-1zM253,375h1v1h-1zM81,395h1v1h-1zM14,379h1v1h-1zM73,373h1v3h-1zM304,382h1v2h-1zM382,372h1v2h-1zM37,381h1v2h-1zM337,372h1v2h-1zM351,377h1v2h-1zM89,401h1v2h-1zM115,372h1v2h-1zM418,396h1v2h-1zM335,373h1v3h-1zM320,384h1v3h-1zM435,394h1v1h-1zM413,372h1v2h-1zM424,391h1v1h-1zM443,386h1v2h-1zM96,375h1v3h-1zM118,395h1v3h-1zM224,391h1v1h-1zM402,376h1v1h-1zM270,374h1v1h-1zM188,380h1v3h-1zM427,372h1v1h-1zM59,381h1v1h-1zM167,372h1v1h-1zM22,372h1v1h-1zM329,386h1v1h-1zM402,387h1v1h-1zM384,390h1v1h-1zM413,387h1v2h-1zM57,373h1v1h-1zM24,398h1v1h-1zM388,382h1v2h-1zM227,372h1v1h-1zM143,374h1v2h-1zM18,373h1v2h-1zM30,387h1v2h-1zM362,381h1v2h-1zM400,381h1v1h-1zM371,372h1v3h-1zM364,374h1v1h-1zM255,373h1v1h-1zM272,373h1v2h-1zM359,399h1v1h-1zM168,372h1v1h-1zM453,380h1v3h-1zM128,397h1v2h-1zM383,397h1v1h-1zM237,372h1v1h-1zM234,400h1v3h-1zM370,381h1v2h-1zM52,396h1v1h-1zM202,382h1v2h-1zM103,373h1v3h-1zM239,375h1v1h-1zM442,372h1v3h-1zM355,387h1v1h-1zM168,374h1v1h-1zM407,376h1v3h-1zM349,372h1v2h-1zM325,373h1v1h-1zM66,377h1v1h-1zM242,373h1v3h-1zM79,372h1v1h-1zM341,381h1v2h-1zM82,374h1v1h-1zM127,398h1v1h-1zM84,383h1v1h-1zM185,400h1v2h-1zM345,376h1v1h-1zM58,395h1v2h-1zM103,375h1v1h-1zM14,392h1v2h-1zM327,378h1v2h-1zM221,372h1v3h-1zM348,372h1v1h-1zM426,376h1v3h-1zM278,382h1v1h-1zM315,382h1v3h-1zM400,383h1v1h-1zM217,374h1v1h-1zM420,373h1v2h-1zM336,382h1v2h-1zM399,377h1v1h-1zM294,375h1v1h-1zM419,374h1v1h-1zM187,377h1v1h-1zM26,379h1v1h-1zM337,398h1v1h-1zM247,372h1v3h-1zM218,373h1v2h-1zM244,382h1v2h-1zM248,375h1v2h-1zM105,384h1v2h-1zM244,397h1v3h-1zM172,372h1v2h-1zM184,372h1v1h-1zM201,376h1v2h-1zM275,372h1v2h-1zM349,397h1v3h-1zM455,401h1v2h-1zM221,372h1v1h-1zM380,382h1v2h-1zM303,385h1v1h-1zM170,382h1v2h-1zM223,374h1v3h-1zM307,388h1v2h-1zM171,392h1v2h-1zM332,384h1v2h-1zM320,377h1v2h-1zM173,382h1v2h-1zM229,376h1v1h-1zM311,375h1v2h-1zM401,372h1v3h-1zM425,388h1v1h-1zM252,374h1v3h-1zM15,372h1v1h-1zM310,373h1v1h-1zM274,392h1v1h-1zM365,374h1v1h-1zM104,375h1v3h-1zM85,394h1v3h-1zM423,379h1v2h-1zM99,384h1v3h-1zM44,391h1v1h-1zM263,373h1v1h-1zM388,377h1v3h-1zM35,377h1v1h-1zM330,373h1v1h-1zM256,392h1v1h-1zM82,374h1v3h-1zM237,374h1v2h-1zM180,376h1v1h-1zM91,375h1v1h-1zM17,372h1v2h-1zM380,372h1v2h-1zM231,394h1v1h-1zM106,376h1v1h-1zM164,392h1v2h-1zM165,388h1v3h-1zM362,373h1v2h-1zM165,373h1v1h-1zM388,374h1v2h-1zM194,378h1v2h-1zM410,374h1v1h-1zM309,389h1v2h-1zM96,385h1v1h-1zM278,382h1v1h-1zM191,379h1v2h-1zM259,372h1v2h-1zM58,372h1v2h-1zM288,383h1v3h-1zM427,381h1v3h-1zM76,383h1v3h-1zM411,372h1v1h-1zM315,376h1v1h-1zM55,372h1v1h-1zM202,372h1v1h-1zM178,390h1v2h-1zM267,373h1v2h-1zM93,372h1v1h-1zM206,382h1v1h-1zM237,378h1v1h-1zM364,376h1v2h-1zM213,372h1v2h-1zM281,401h1v1h-1zM227,375h1v1h-1zM46,377h1v1h-1zM296,376h1v1h-1zM323,372h1v1h-1zM108,372h1v2h-1zM16,385h1v1h-1zM215,386h1v1h-1zM176,386h1v1h-1zM344,372h1v3h-1zM334,377h1v2h-1zM428,372h1v1h-1zM307,390h1v1h-1zM187,374h1v3h-1zM84,392h1v2h-1zM288,374h1v3h-1zM343,377h1v1h-1zM75,389h1v2h-1zM447,372h1v2h-1zM227,388h1v2h-1zM443,388h1v3h-1zM162,373h1v3h-1zM456,384h1v3h-1zM161,381h1v1h-1zM390,381h1v2h-1zM277,399h1v1h-1zM181,384h1v3h-1zM363,373h1v2h-1zM138,372h1v2h-1zM131,372h1v1h-1zM141,372h1v3h-1zM76,399h1v3h-1zM323,395h1v2h-1zM254,379h1v2h-1zM375,373h1v1h-1zM150,372h1v2h-1zM222,373h1v2h-1zM278,372h1v2h-1zM219,372h1v2h-1zM363,373h1v3h-1zM248,373h1v3h-1zM156,378h1v1h-1zM95,373h1v1h-1zM379,373h1v3h-1zM268,375h1v3h-1zM402,373h1v2h-1zM180,372h1v2h-1zM370,372h1v3h-1zM22,373h1v3h-1zM17,372h1v3h-1zM232,379h1v2h-1zM434,373h1v1h-1zM443,387h1v3h-1zM25,373h1v1h-1zM182,372h1v1h-1zM264,393h1v2h-1zM232,391h1v1h-1zM405,382h1v1h-1zM333,372h1v2h-1zM268,382h1v3h-1zM189,376h1v1h-1zM179,373h1v1h-1zM87,397h1v2h-1zM35,379h1v1h-1zM393,372h1v3h-1zM334,382h1v2h-1zM34,372h1v1h-1zM440,383h1v2h-1zM279,376h1v1h-1zM225,375h1v2h-1zM65,377h1v1h-1zM211,389h1v1h-1zM223,395h1v1h-1zM80,391h1v1h-1zM438,393h1v1h-1zM366,398h1v2h-1zM395,382h1v2h-1zM116,372h1v2h-1zM74,373h1v1h-1zM91,376h1v1h-1zM210,372h1v2h-1zM197,372h1v2h-1zM271,374h1v1h-1zM128,372h1v2h-1zM423,372h1v3h-1zM34,394h1v1h-1zM266,391h1v1h-1zM127,373h1v2h-1zM207,373h1v1h-1zM434,372h1v2h-1zM199,372h1v2h-1zM74,382h1v2h-1zM379,374h1v1h-1zM212,388h1v3h-1zM140,374h1v1h-1zM428,373h1v3h-1zM91,391h1v3h-1zM362,385h1v1h-1zM284,390h1v3h-1zM344,387h1v1h-1zM103,381h1v1h-1zM276,373h1v1h-1zM326,378h1v1h-1zM246,374h1v2h-1zM395,392h1v2h-1zM50,375h1v2h-1zM69,383h1v1h-1zM94,391h1v2h-1zM25,384h1v3h-1zM282,372h1v3h-1zM437,399h1v1h-1zM64,385h1v2h-1zM366,393h1v3h-1zM354,372h1v1h-1zM447,377h1v3h-1zM20,389h1v1h-1zM18,399h1v1h-1zM293,372h1v2h-1zM123,390h1v1h-1zM17,396h1v1h-1zM128,391h1v3h-1zM221,373h1v2h-1zM55,393h1v1h-1zM29,372h1v2h-1zM278,387h1v1h-1zM64,375h1v1h-1zM257,373h1v1h-1zM76,380h1v2h-1zM84,390h1v2h-1zM327,380h1v3h-1zM250,375h1v1h-1zM365,374h1v1h-1zM394,385h1v3h-1zM378,395h1v2h-1zM398,372h1v3h-1zM75,383h1v2h-1zM123,376h1v1h-1zM176,378h1v1h-1zM157,373h1v1h-1zM112,376h1v2h-1zM365,397h1v1h-1zM380,394h1v1h-1zM24,382h1v2h-1zM430,381h1v3h-1zM379,372h1v1h-1zM123,378h1v2h-1zM117,372h1v1h-1zM148,382h1v1h-1zM36,398h1v3h-1zM423,372h1v3h-1zM254,372h1v1h-1zM243,394h1v2h-1zM274,373h1v1h-1zM349,373h1v2h-1zM289,380h1v2h-1zM101,385h1v2h-1zM418,374h1v2h-1zM224,374h1v1h-1zM161,373h1v3h-1zM184,380h1v1h-1zM433,372h1v1h-1zM157,374h1v2h-1zM139,400h1v2h-1zM34,372h1v3h-1zM39,393h1v2h-1zM311,378h1v2h-1zM171,387h1v3h-1zM112,398h1v1h-1zM200,383h1v1h-1zM319,381h1v2h-1zM386,378h1v2h-1zM132,382h1v1h-1zM198,372h1v2h-1zM360,380h1v2h-1zM191,401h1v1h-1zM200,388h1v3h-1zM287,375h1v2h-1zM327,373h1v2h-1zM143,375h1v3h-1zM282,382h1v1h-1zM370,392h1v2h-1zM183,374h1v3h-1zM148,372h1v3h-1zM181,373h1v2h-1zM157,391h1v1h-1zM449,373h1v2h-1zM418,398h1v1h-1zM30,379h1v2h-1zM146,379h1v2h-1zM256,401h1v3h-1zM388,385h1v2h-1zM187,374h1v3h-1zM319,376h1v1h-1zM319,378h1v1h-1zM196,378h1v3h-1zM435,372h1v1h-1zM452,377h1v2h-1zM361,394h1v3h-1zM166,378h1v1h-1zM87,374h1v1h-1zM388,378h1v1h-1zM310,374h1v2h-1zM385,400h1v2h-1zM298,378h1v3h-1zM104,394h1v2h-1zM92,382h1v3h-1zM57,380h1v1h-1zM326,372h1v1h-1zM149,384h1v1h-1zM430,375h1v1h-1zM278,383h1v1h-1zM89,387h1v3h-1zM130,382h1v3h-1zM245,372h1v1h-1zM197,372h1v1h-1zM246,378h1v1h-1zM54,372h1v3h-1zM234,377h1v2h-1zM379,372h1v1h-1zM323,380h1v1h-1zM337,374h1v1h-1zM23,382h1v3h-1zM37,373h1v3h-1zM185,372h1v2h-1zM276,398h1v2h-1zM33,373h1v1h-1zM28,396h1v1h-1zM153,394h1v2h-1zM148,381h1v2h-1zM320,383h1v3h-1zM110,374h1v2h-1zM18,393h1v1h-1zM88,374h1v1h-1zM12,393h1v2h-1zM266,372h1v3h-1zM409,374h1v1h-1zM450,376h1v2h-1zM263,375h1v2h-1zM138,373h1v1h-1zM136,372h1v1h-1zM119,372h1v1h-1zM132,391h1v1h-1zM263,377h1v1h-1zM81,374h1v2h-1zM181,398h1v1h-1zM145,377h1v1h-1zM113,376h1v1h-1zM441,401h1v3h-1zM422,380h1v2h-1zM254,375h1v3h-1zM106,393h1v1h-1zM320,372h1v2h-1zM347,387h1v1h-1zM310,379h1v2h-1zM15,385h1v1h-1zM365,373h1v1h-1zM313,372h1v3h-1zM428,389h1v2h-1zM97,385h1v1h-1zM112,372h1v2h-1zM138,375h1v2h-1zM364,393h1v1h-1zM439,372h1v2h-1zM321,383h1v2h-1zM421,372h1v2h-1zM122,391h1v2h-1zM425,372h1v2h-1zM61,395h1v1h-1zM336,372h1v1h-1zM288,376h1v2h-1zM80,386h1v3h-1zM151,382h1v1h-1zM268,373h1v2h-1zM338,373h1v2h-1zM316,380h1v1h-1zM59,387h1v2h-1zM422,393h1v3h-1zM287,372h1v1h-1zM321,372h1v2h-1zM105,395h1v1h-1zM200,386h1v3h-1zM389,373h1v1h-1zM169,398h1v2h-1zM436,384h1v2h-1zM242,383h1v1h-1zM205,378h1v1h-1zM233,373h1v3h-1zM128,379h1v1h-1zM258,373h1v1h-1zM85,374h1v1h-1zM101,374h1v1h-1zM324,377h1v2h-1zM117,373h1v3h-1zM326,372h1v2h-1zM329,372h1v1h-1zM278,373h1v1h-1zM260,387h1v1h-1zM319,372h1v2h-1zM394,375h1v1h-1zM61,373h1v2h-1zM232,372h1v2h-1zM148,372h1v2h-1zM214,372h1v2h-1zM213,379h1v2h-1zM85,372h1v1h-1zM224,400h1v2h-1zM47,385h1v3h-1zM130,382h1v2h-1zM233,388h1v2h-1zM12,396h1v2h-1zM297,397h1v2h-1zM308,372h1v1h-1zM20,375h1v1h-1zM144,373h1v3h-1zM397,396h1v1h-1zM55,385h1v2h-1zM349,374h1v1h-1zM306,374h1v1h-1zM178,379h1v2h-1zM393,373h1v1h-1zM27,379h1v2h-1zM424,397h1v2h-1zM203,386h1v2h-1zM285,381h1v1h-1zM324,372h1v2h-1zM301,375h1v1h-1zM399,377h1v1h-1zM341,372h1v3h-1zM401,388h1v2h-1zM74,372h1v1h-1zM245,376h1v2h-1zM37,372h1v1h-1zM424,372h1v2h-1zM10,389h1v2h-1zM269,377h1v3h-1zM157,377h1v3h-1zM426,392h1v2h-1zM450,381h1v1h-1zM340,374h1v2h-1zM268,376h1v2h-1zM229,382h1v2h-1zM406,378h1v1h-1zM398,373h1v2h-1zM326,372h1v3h-1zM179,380h1v2h-1zM174,373h1v2h-1zM190,372h1v1h-1zM353,373h1v2h-1zM307,373h1v2h-1zM334,373h1v2h-1zM112,380h1v1h-1zM346,395h1v3h-1zM45,375h1v1h-1zM376,372h1v3h-1zM261,385h1v1h-1zM296,398h1v3h-1zM55,391h1v2h-1zM258,399h1v1h-1zM267,388h1v1h-1zM180,381h1v2h-1zM117,375h1v1h-1zM331,398h1v2h-1zM146,385h1v2h-1zM426,372h1v1h-1zM267,396h1v2h-1zM85,386h1v2h-1zM378,386h1v1h-1zM388,372h1v2h-1zM244,378h1v2h-1zM340,372h1v3h-1zM171,374h1v2h-1zM377,372h1v1h-1zM125,373h1v2h-1zM18,400h1v2h-1zM60,372h1v1h-1zM42,373h1v1h-1zM263,373h1v2h-1zM393,380h1v2h-1zM256,384h1v2h-1zM444,372h1v2h-1zM231,372h1v1h-1zM42,381h1v3h-1zM189,377h1v1h-1zM327,376h1v1h-1zM410,381h1v1h-1zM174,378h1v2h-1zM419,380h1v1h-1zM105,390h1v2h-1zM160,377h1v2h-1zM153,374h1v2h-1zM162,372h1v2h-1zM411,381h1v1h-1zM342,372h1v2h-1zM134,377h1v2h-1zM172,380h1v3h-1zM448,400h1v1h-1zM429,395h1v1h-1zM409,388h1v3h-1zM300,375h1v2h-1zM373,373h1v1h-1zM321,374h1v2h-1zM348,378h1v1h-1zM169,379h1v2h-1zM162,384h1v2h-1zM414,388h1v3h-1zM177,373h1v1h-1zM102,394h1v2h-1zM194,375h1v2h-1zM436,380h1v1h-1zM147,374h1v3h-1zM262,397h1v2h-1zM42,373h1v1h-1zM277,374h1v2h-1zM364,376h1v1h-1zM394,374h1v1h-1zM135,373h1v1h-1zM357,381h1v1h-1zM332,373h1v2h-1zM214,394h1v2h-1zM405,382h1v1h-1zM119,372h1v1h-1zM284,372h1v3h-1zM165,372h1v1h-1zM132,382h1v1h-1zM302,396h1v1h-1zM156,393h1v1h-1zM307,375h1v2h-1zM88,392h1v1h-1zM48,381h1v2h-1zM441,393h1v1h-1zM434,379h1v2h-1zM34,381h1v2h-1zM80,372h1v1h-1zM74,387h1v1h-1zM173,375h1v2h-1zM256,380h1v3h-1zM79,400h1v3h-1zM160,386h1v2h-1zM382,377h1v1h-1zM365,374h1v3h-1zM136,378h1v2h-1zM69,372h1v2h-1zM54,389h1v2h-1zM77,382h1v2h-1zM356,372h1v1h-1zM295,372h1v3h-1zM239,379h1v1h-1zM127,381h1v1h-1zM423,393h1v1h-1zM251,374h1v1h-1zM211,392h1v1h-1zM301,374h1v2h-1zM220,374h1v1h-1zM58,386h1v1h-1zM379,395h1v2h-1zM36,379h1v2h-1zM425,375h1v1h-1zM22,372h1v2h-1zM119,374h1v2h-1zM357,382h1v2h-1zM413,377h1v3h-1zM372,377h1v2h-1zM447,372h1v2h-1zM138,374h1v2h-1zM409,373h1v2h-1zM322,380h1v2h-1zM106,372h1v1h-1zM400,386h1v1h-1zM367,392h1v1h-1zM208,372h1v2h-1zM323,389h1v1h-1zM427,372h1v2h-1zM53,372h1v2h-1zM50,374h1v2h-1zM414,400h1v1h-1zM277,373h1v1h-1zM25,378h1v1h-1zM272,384h1v1h-1zM30,394h1v1h-1zM412,372h1v2h-1zM257,382h1v3h-1zM238,372h1v2h-1zM394,398h1v1h-1zM169,373h1v1h-1zM344,373h1v1h-1zM15,373h1v1h-1zM98,372h1v3h-1zM446,373h1v2h-1zM325,382h1v3h-1zM138,374h1v2h-1zM460,393h1v2h-1zM192,374h1v2h-1zM184,372h1v2h-1zM414,389h1v1h-1zM118,378h1v2h-1zM327,386h1v1h-1zM388,383h1v1h-1zM396,388h1v1h-1zM195,379h1v2h-1zM261,374h1v3h-1zM8,386h1v2h-1zM243,380h1v2h-1zM116,382h1v2h-1zM171,372h1v3h-1zM131,383h1v2h-1zM41,389h1v1h-1zM433,387h1v2h-1zM426,377h1v2h-1zM248,377h1v1h-1zM356,375h1v1h-1zM251,390h1v1h-1zM318,372h1v2h-1zM90,397h1v1h-1zM156,375h1v2h-1zM65,372h1v2h-1zM181,375h1v3h-1zM248,376h1v1h-1zM135,373h1v2h-1zM328,376h1v2h-1zM344,372h1v3h-1zM77,383h1v2h-1zM233,383h1v3h-1zM179,374h1v2h-1zM124,379h1v1h-1zM270,372h1v1h-1zM149,379h1v2h-1zM126,373h1v2h-1zM50,382h1v1h-1zM101,376h1v2h-1zM292,375h1v1h-1zM338,375h1v1h-1zM336,374h1v2h-1zM206,381h1v2h-1zM170,375h1v3h-1zM68,381h1v3h-1zM179,383h1v2h-1zM404,372h1v2h-1zM183,378h1v2h-1zM438,382h1v1h-1zM58,379h1v2h-1zM330,376h1v2h-1zM89,372h1v2h-1zM234,378h1v1h-1zM316,386h1v2h-1zM257,396h1v2h-1zM263,387h1v2h-1zM62,373h1v1h-1zM271,372h1v2h-1zM49,387h1v3h-1zM217,390h1v1h-1zM335,377h1v1h-1zM261,386h1v3h-1zM73,375h1v1h-1zM409,372h1v2h-1zM96,400h1v1h-1zM129,374h1v2h-1zM313,374h1v2h-1zM243,376h1v1h-1zM149,373h1v2h-1zM377,392h1v2h-1zM148,372h1v1h-1zM255,375h1v2h-1zM310,385h1v1h-1zM176,389h1v1h-1zM218,385h1v1h-1zM343,372h1v1h-1zM196,379h1v2h-1zM24,373h1v2h-1zM142,385h1v3h-1zM289,375h1v2h-1zM102,373h1v1h-1zM208,382h1v1h-1zM71,393h1v3h-1zM237,372h1v3h-1zM347,372h1v1h-1zM318,383h1v2h-1zM377,378h1v1h-1zM75,396h1v1h-1zM245,377h1v1h-1zM369,398h1v2h-1zM111,391h1v2h-1zM324,372h1v1h-1zM433,372h1v1h-1zM393,374h1v1h-1zM410,389h1v3h-1zM339,374h1v2h-1zM157,391h1v1h-1zM443,383h1v1h-1zM188,372h1v2h-1zM80,373h1v3h-1zM327,373h1v1h-1zM343,376h1v2h-1zM61,390h1v1h-1zM310,373h1v3h-1zM250,373h1v2h-1zM16,388h1v1h-1zM100,373h1v2h-1zM283,379h1v1h-1zM101,377h1v1h-1zM274,374h1v3h-1zM283,399h1v2h-1zM97,372h1v2h-1zM31,374h1v2h-1zM229,374h1v2h-1zM90,388h1v2h-1zM380,385h1v2h-1zM52,379h1v1h-1zM282,377h1v1h-1zM26,380h1v2h-1zM306,372h1v3h-1zM393,372h1v1h-1zM173,383h1v1h-1zM161,391h1v2h-1zM148,373h1v1h-1zM412,372h1v2h-1zM132,379h1v2h-1zM223,372h1v3h-1zM27,373h1v1h-1zM138,379h1v1h-1zM426,385h1v3h-1zM239,394h1v1h-1zM57,372h1v3h-1zM105,386h1v1h-1zM353,372h1v2h-1zM295,372h1v3h-1zM418,372h1v3h-1zM108,373h1v3h-1zM335,372h1v1h-1zM42,374h1v1h-1zM27,381h1v1h-1zM383,374h1v2h-1zM280,372h1v2h-1zM441,375h1v2h-1zM23,388h1v1h-1zM346,383h1v1h-1zM375,387h1v1h-1zM99,373h1v2h-1zM334,372h1v1h-1zM372,377h1v2h-1zM250,374h1v1h-1zM354,382h1v1h-1zM407,372h1v2h-1zM370,372h1v2h-1zM276,389h1v2h-1zM317,386h1v1h-1zM127,384h1v2h-1zM424,386h1v3h-1zM84,375h1v3h-1zM146,398h1v3h-1zM309,382h1v1h-1zM453,388h1v2h-1zM353,391h1v1h-1zM99,376h1v1h-1zM412,380h1v1h-1zM188,388h1v2h-1zM388,375h1v1h-1zM113,383h1v2h-1zM313,395h1v2h-1zM373,372h1v2h-1zM286,398h1v2h-1zM201,381h1v2h-1zM75,379h1v1h-1zM171,391h1v3h-1zM23,374h1v2h-1zM94,394h1v2h-1zM312,389h1v1h-1zM108,381h1v2h-1zM387,372h1v2h-1zM161,372h1v1h-1zM111,394h1v3h-1zM414,398h1v2h-1zM238,398h1v3h-1zM372,381h1v1h-1zM188,372h1v1h-1zM56,373h1v3h-1zM380,373h1v2h-1zM319,400h1v3h-1zM314,372h1v2h-1zM315,372h1v3h-1zM160,373h1v2h-1zM174,383h1v2h-1zM439,389h1v1h-1zM425,377h1v2h-1zM326,372h1v1h-1zM264,376h1v3h-1zM418,386h1v2h-1zM24,374h1v1h-1zM11,397h1v2h-1zM74,380h1v3h-1zM242,401h1v1h-1zM352,382h1v2h-1zM297,373h1v3h-1zM20,379h1v2h-1zM306,389h1v2h-1zM235,399h1v2h-1zM326,373h1v1h-1zM391,377h1v1h-1zM373,374h1v1h-1zM100,389h1v1h-1zM83,386h1v1h-1zM321,395h1v3h-1zM145,375h1v2h-1zM150,397h1v1h-1zM294,396h1v2h-1zM58,373h1v2h-1zM155,389h1v2h-1zM131,373h1v3h-1zM215,391h1v1h-1zM366,374h1v1h-1zM136,378h1v3h-1zM398,375h1v1h-1zM135,375h1v2h-1zM251,373h1v1h-1zM127,388h1v1h-1zM253,384h1v2h-1zM171,397h1v2h-1zM459,394h1v3h-1zM52,381h1v2h-1zM392,385h1v2h-1zM84,372h1v1h-1zM364,375h1v2h-1zM192,377h1v2h-1zM169,373h1v1h-1zM253,378h1v2h-1zM69,374h1v1h-1zM433,372h1v1h-1zM400,383h1v3h-1zM207,373h1v2h-1zM369,383h1v1h-1zM78,383h1v1h-1zM238,394h1v1h-1zM350,390h1v2h-1zM412,372h1v2h-1zM290,373h1v1h-1zM363,381h1v3h-1zM134,373h1v1h-1zM150,374h1v3h-1zM456,389h1v2h-1zM19,378h1v1h-1zM394,374h1v1h-1zM219,387h1v2h-1zM135,372h1v2h-1zM280,380h1v1h-1zM26,390h1v1h-1zM231,374h1v2h-1zM452,378h1v1h-1zM108,389h1v1h-1zM138,399h1v3h-1zM255,372h1v1h-1zM21,378h1v2h-1zM180,398h1v2h-1zM341,380h1v2h-1zM188,398h1v2h-1zM112,393h1v1h-1zM378,398h1v2h-1zM311,373h1v2h-1zM273,376h1v3h-1zM217,374h1v1h-1zM59,372h1v1h-1zM43,394h1v1h-1zM210,373h1v1h-1zM364,373h1v2h-1zM352,398h1v3h-1zM339,372h1v1h-1zM200,391h1v3h-1zM129,374h1v1h-1zM268,374h1v2h-1zM149,372h1v1h-1zM326,376h1v1h-1zM378,376h1v1h-1zM166,392h1v2h-1zM366,377h1v1h-1zM427,389h1v2h-1zM421,399h1v1h-1zM251,373h1v2h-1zM104,373h1v1h-1zM439,373h1v2h-1zM443,400h1v2h-1zM364,385h1v1h-1zM381,391h1v1h-1zM72,372h1v3h-1zM252,372h1v1h-1zM221,372h1v3h-1zM254,372h1v2h-1zM164,379h1v2h-1zM231,382h1v1h-1zM171,393h1v1h-1zM280,372h1v1h-1zM210,380h1v2h-1zM358,380h1v1h-1zM404,372h1v1h-1zM338,377h1v2h-1zM287,372h1v2h-1zM284,372h1v1h-1zM376,394h1v1h-1zM188,388h1v1h-1zM300,386h1v1h-1zM120,395h1v1h-1zM377,372h1v1h-1zM193,397h1v1h-1zM365,372h1v3h-1zM302,396h1v2h-1zM27,377h1v2h-1zM356,372h1v1h-1zM94,389h1v1h-1zM291,374h1v3h-1zM370,394h1v1h-1zM41,372h1v1h-1zM239,381h1v3h-1zM372,379h1v1h-1zM312,381h1v2h-1zM191,372h1v1h-1zM19,391h1v2h-1zM104,385h1v1h-1zM317,400h1v3h-1zM170,372h1v1h-1zM399,392h1v1h-1zM49,373h1v2h-1zM359,372h1v3h-1zM273,374h1v1h-1zM60,384h1v3h-1zM106,375h1v2h-1zM433,380h1v1h-1zM430,386h1v1h-1zM428,391h1v1h-1zM316,372h1v2h-1zM377,372h1v3h-1zM442,376h1v1h-1zM124,374h1v2h-1zM21,375h1v1h-1zM212,400h1v2h-1zM359,391h1v2h-1zM134,373h1v2h-1zM255,374h1v3h-1zM416,396h1v2h-1zM9,388h1v1h-1zM417,389h1v3h-1zM82,372h1v2h-1zM204,374h1v1h-1zM255,399h1v1h-1zM105,372h1v3h-1zM121,396h1v3h-1zM325,399h1v1h-1zM306,373h1v1h-1zM337,376h1v1h-1zM209,384h1v2h-1zM354,373h1v2h-1zM406,382h1v3h-1zM452,382h1v3h-1zM73,372h1v1h-1zM328,374h1v1h-1zM344,378h1v1h-1zM174,372h1v1h-1zM340,382h1v3h-1zM324,373h1v2h-1zM90,372h1v2h-1zM190,384h1v1h-1zM213,386h1v1h-1zM404,377h1v2h-1zM391,372h1v1h-1zM57,373h1v2h-1zM317,373h1v1h-1zM397,372h1v1h-1zM81,383h1v3h-1zM152,373h1v1h-1zM74,372h1v1h-1zM184,382h1v3h-1zM276,372h1v2h-1zM15,392h1v1h-1zM439,374h1v3h-1zM340,372h1v2h-1zM178,372h1v1h-1zM409,395h1v1h-1zM139,375h1v1h-1zM111,373h1v1h-1zM359,392h1v1h-1zM303,377h1v1h-1zM31,383h1v2h-1zM116,372h1v2h-1zM232,372h1v3h-1zM335,372h1v1h-1zM231,396h1v1h-1zM204,372h1v1h-1zM39,375h1v2h-1zM118,374h1v1h-1zM41,373h1v1h-1zM267,393h1v2h-1zM59,397h1v3h-1zM34,378h1v3h-1zM406,373h1v1h-1zM228,377h1v2h-1zM369,372h1v2h-1zM298,372h1v2h-1zM313,375h1v1h-1zM332,377h1v2h-1zM91,372h1v3h-1zM423,382h1v1h-1zM255,373h1v2h-1zM314,372h1v2h-1zM75,389h1v2h-1zM349,392h1v2h-1zM310,382h1v1h-1zM15,376h1v1h-1zM215,392h1v2h-1zM210,372h1v1h-1zM148,374h1v1h-1zM440,375h1v1h-1zM14,398h1v1h-1zM38,375h1v2h-1zM317,373h1v1h-1zM97,377h1v2h-1zM112,398h1v2h-1zM23,372h1v2h-1zM316,372h1v2h-1zM362,373h1v1h-1zM79,390h1v3h-1zM217,379h1v2h-1zM71,373h1v1h-1zM134,376h1v1h-1zM156,387h1v1h-1zM116,372h1v3h-1zM385,388h1v2h-1zM417,383h1v1h-1zM448,373h1v2h-1zM52,376h1v1h-1zM453,395h1v1h-1zM141,399h1v1h-1zM201,378h1v2h-1zM379,382h1v3h-1zM276,376h1v2h-1zM311,380h1v2h-1zM421,398h1v1h-1zM209,380h1v2h-1zM270,372h1v2h-1zM304,375h1v3h-1zM126,390h1v1h-1zM295,377h1v2h-1zM376,372h1v2h-1zM164,387h1v1h-1zM222,374h1v1h-1zM192,372h1v1h-1zM179,385h1v2h-1zM313,387h1v1h-1zM412,372h1v3h-1zM71,375h1v2h-1zM305,377h1v2h-1zM441,380h1v2h-1zM167,387h1v2h-1zM89,377h1v1h-1zM319,388h1v2h-1zM178,398h1v2h-1zM392,382h1v1h-1zM332,399h1v1h-1zM178,392h1v2h-1zM83,372h1v2h-1zM399,393h1v3h-1zM29,394h1v3h-1zM254,385h1v2h-1zM21,389h1v1h-1zM47,373h1v1h-1zM114,373h1v1h-1zM17,372h1v1h-1zM162,378h1v2h-1zM142,386h1v2h-1zM161,396h1v2h-1zM83,372h1v3h-1zM32,399h1v1h-1zM372,386h1v2h-1zM239,372h1v3h-1zM435,379h1v1h-1zM354,391h1v2h-1zM185,385h1v1h-1zM151,372h1v2h-1zM51,380h1v1h-1zM373,376h1v2h-1zM372,373h1v1h-1zM387,377h1v2h-1zM72,373h1v3h-1zM107,391h1v2h-1zM119,373h1v2h-1zM248,374h1v1h-1zM22,385h1v1h-1zM244,373h1v2h-1zM291,395h1v1h-1zM462,401h1v2h-1zM68,372h1v2h-1zM363,390h1v2h-1zM190,378h1v2h-1zM34,381h1v1h-1zM143,374h1v1h-1zM78,396h1v1h-1zM220,373h1v1h-1zM369,385h1v2h-1zM323,377h1v2h-1zM365,372h1v1h-1zM295,376h1v1h-1zM124,383h1v1h-1zM215,392h1v2h-1zM362,375h1v2h-1zM367,385h1v2h-1zM293,372h1v2h-1zM48,396h1v1h-1zM25,400h1v3h-1zM67,377h1v3h-1zM24,383h1v2h-1zM209,372h1v2h-1zM329,385h1v1h-1zM23,395h1v1h-1zM252,384h1v2h-1zM83,378h1v2h-1zM86,372h1v2h-1zM334,375h1v1h-1zM219,379h1v1h-1zM127,386h1v2h-1zM225,398h1v3h-1zM381,387h1v2h-1zM337,386h1v1h-1zM353,395h1v2h-1zM57,390h1v2h-1zM377,372h1v3h-1zM224,400h1v1h-1zM152,386h1v2h-1zM322,383h1v1h-1zM386,392h1v3h-1zM166,388h1v2h-1zM287,394h1v2h-1zM113,374h1v2h-1zM445,374h1v3h-1zM170,375h1v1h-1zM442,372h1v2h-1zM356,387h1v3h-1zM356,373h1v1h-1zM355,390h1v2h-1zM240,374h1v2h-1zM394,372h1v3h-1zM336,383h1v1h-1zM167,391h1v2h-1zM412,372h1v3h-1zM308,372h1v3h-1zM458,397h1v2h-1zM368,388h1v1h-1zM344,375h1v1h-1zM54,374h1v1h-1zM423,372h1v2h-1zM41,372h1v1h-1zM99,377h1v2h-1zM151,377h1v2h-1zM151,382h1v3h-1zM224,395h1v2h-1zM348,374h1v1h-1zM284,401h1v3h-1zM39,376h1v1h-1zM413,383h1v1h-1zM104,379h1v1h-1zM309,379h1v2h-1zM280,376h1v1h-1zM205,372h1v3h-1zM142,378h1v2h-1zM55,389h1v3h-1zM377,373h1v2h-1zM81,382h1v1h-1zM436,373h1v2h-1zM354,372h1v1h-1zM286,375h1v3h-1zM422,372h1v1h-1zM427,379h1v1h-1zM407,375h1v1h-1zM103,372h1v3h-1zM400,385h1v1h-1zM243,397h1v3h-1zM106,372h1v2h-1zM378,376h1v3h-1zM324,381h1v1h-1zM201,378h1v2h-1zM33,388h1v2h-1zM423,372h1v1h-1zM256,373h1v1h-1zM115,372h1v1h-1zM457,385h1v1h-1zM353,385h1v1h-1zM133,391h1v3h-1zM32,397h1v2h-1zM408,393h1v3h-1zM320,372h1v2h-1zM87,373h1v3h-1zM163,387h1v1h-1zM408,374h1v2h-1zM147,372h1v1h-1zM213,372h1v3h-1zM153,378h1v1h-1zM200,391h1v3h-1zM232,397h1v2h-1zM247,377h1v3h-1zM75,372h1v1h-1zM170,375h1v1h-1zM194,374h1v2h-1zM162,385h1v2h-1zM305,377h1v3h-1zM260,372h1v2h-1zM171,382h1v2h-1zM446,381h1v1h-1zM263,383h1v1h-1zM445,372h1v2h-1zM320,375h1v2h-1zM279,383h1v2h-1zM376,372h1v3h-1zM193,372h1v1h-1zM71,395h1v1h-1zM292,389h1v2h-1zM236,375h1v1h-1zM169,378h1v2h-1zM302,377h1v2h-1zM125,381h1v3h-1zM370,373h1v2h-1zM376,372h1v3h-1zM14,394h1v2h-1zM386,372h1v2h-1zM18,373h1v1h-1zM347,372h1v2h-1zM113,372h1v2h-1zM64,399h1v1h-1zM444,379h1v1h-1zM364,372h1v1h-1zM26,377h1v2h-1zM202,382h1v1h-1zM283,399h1v1h-1zM47,372h1v1h-1zM18,385h1v1h-1zM60,372h1v1h-1zM99,374h1v1h-1zM174,400h1v2h-1zM158,375h1v2h-1zM115,399h1v1h-1zM84,394h1v2h-1zM296,383h1v2h-1zM252,384h1v1h-1zM368,379h1v3h-1zM14,376h1v1h-1zM284,374h1v2h-1zM243,372h1v1h-1zM429,379h1v1h-1zM237,384h1v1h-1zM326,372h1v3h-1zM440,391h1v2h-1zM198,383h1v3h-1zM183,383h1v2h-1zM450,398h1v3h-1zM82,394h1v1h-1zM132,395h1v3h-1zM386,400h1v2h-1zM154,387h1v2h-1zM376,374h1v3h-1zM403,377h1v2h-1zM403,400h1v2h-1zM436,387h1v1h-1zM205,372h1v2h-1zM425,380h1v2h-1zM332,372h1v3h-1zM365,372h1v2h-1zM411,381h1v2h-1zM211,385h1v2h-1zM45,376h1v2h-1zM53,377h1v2h-1zM107,382h1v2h-1zM368,373h1v3h-1zM442,401h1v2h-1zM362,384h1v2h-1zM218,392h1v2h-1zM322,384h1v1h-1zM29,391h1v2h-1zM33,400h1v3h-1zM347,397h1v2h-1zM301,375h1v1h-1zM127,378h1v2h-1zM228,372h1v1h-1zM107,381h1v1h-1zM343,374h1v3h-1zM93,372h1v1h-1zM305,391h1v2h-1zM163,372h1v1h-1zM226,388h1v2h-1zM127,372h1v1h-1zM425,381h1v1h-1zM298,378h1v2h-1zM106,376h1v2h-1zM379,384h1v2h-1zM115,377h1v3h-1zM451,396h1v1h-1zM248,372h1v2h-1zM194,372h1v1h-1zM421,377h1v2h-1zM267,372h1v2h-1zM358,380h1v1h-1zM166,372h1v2h-1zM449,400h1v1h-1zM237,373h1v2h-1zM185,379h1v2h-1zM362,374h1v2h-1zM65,373h1v2h-1zM267,398h1v2h-1zM229,396h1v1h-1zM258,392h1v1h-1zM174,381h1v2h-1zM143,385h1v3h-1zM38,372h1v3h-1zM41,378h1v1h-1zM354,373h1v1h-1zM323,396h1v1h-1zM320,385h1v1h-1zM131,399h1v1h-1zM269,372h1v2h-1zM169,385h1v3h-1zM387,372h1v1h-1zM463,395h1v1h-1zM55,396h1v2h-1zM277,386h1v2h-1zM318,375h1v1h-1zM39,391h1v2h-1zM59,386h1v2h-1zM245,376h1v1h-1zM447,401h1v2h-1zM295,382h1v1h-1zM179,375h1v1h-1zM173,395h1v2h-1zM258,372h1v1h-1zM77,380h1v1h-1zM82,378h1v3h-1zM52,377h1v2h-1zM258,372h1v1h-1zM117,372h1v1h-1zM119,390h1v1h-1zM364,391h1v3h-1zM186,374h1v1h-1zM110,383h1v1h-1zM216,378h1v1h-1zM286,372h1v1h-1zM128,388h1v1h-1zM164,372h1v2h-1zM42,388h1v2h-1zM120,372h1v2h-1zM207,396h1v1h-1zM333,376h1v1h-1zM278,377h1v1h-1zM385,388h1v2h-1zM241,374h1v1h-1zM248,386h1v1h-1zM243,372h1v1h-1zM207,383h1v1h-1zM118,377h1v1h-1zM312,372h1v2h-1zM48,384h1v2h-1zM162,373h1v2h-1zM110,375h1v2h-1zM40,372h1v1h-1zM258,400h1v1h-1zM184,384h1v2h-1zM97,383h1v2h-1zM267,376h1v1h-1zM438,390h1v2h-1zM66,372h1v2h-1zM66,384h1v1h-1zM274,399h1v1h-1zM371,388h1v1h-1zM60,374h1v1h-1zM110,398h1v2h-1zM168,384h1v2h-1zM195,390h1v1h-1zM342,392h1v1h-1zM311,373h1v1h-1zM61,375h1v1h-1zM171,393h1v3h-1zM154,395h1v3h-1zM406,380h1v3h-1zM253,374h1v1h-1zM230,374h1v2h-1zM171,379h1v1h-1zM293,383h1v1h-1zM240,376h1v3h-1zM93,378h1v2h-1zM63,382h1v2h-1zM367,378h1v1h-1zM332,393h1v3h-1zM181,373h1v2h-1zM390,372h1v2h-1zM230,386h1v1h-1zM343,392h1v2h-1zM217,372h1v2h-1zM345,373h1v1h-1zM346,373h1v2h-1zM327,373h1v1h-1zM165,375h1v2h-1zM451,378h1v2h-1zM378,373h1v2h-1zM225,385h1v1h-1zM232,375h1v2h-1zM420,372h1v1h-1zM420,392h1v2h-1zM141,372h1v1h-1zM81,373h1v1h-1zM160,392h1v1h-1zM205,373h1v2h-1zM242,372h1v2h-1zM210,375h1v3h-1zM463,400h1v2h-1zM187,375h1v1h-1zM346,372h1v2h-1zM161,383h1v3h-1zM338,373h1v3h-1zM318,381h1v2h-1zM53,385h1v1h-1zM115,380h1v3h-1zM414,372h1v3h-1zM158,382h1v3h-1zM49,377h1v1h-1zM106,374h1v2h-1zM429,372h1v1h-1zM61,400h1v1h-1zM309,376h1v2h-1zM278,375h1v1h-1zM247,379h1v2h-1zM132,388h1v2h-1zM223,372h1v2h-1zM220,380h1v1h-1zM366,391h1v3h-1zM448,372h1v1h-1zM458,387h1v2h-1zM440,393h1v2h-1zM220,373h1v1h-1zM39,395h1v1h-1zM178,376h1v3h-1zM218,396h1v2h-1zM245,400h1v1h-1zM54,378h1v1h-1zM179,392h1v1h-1zM109,375h1v2h-1zM285,379h1v2h-1zM139,372h1v2h-1zM396,375h1v3h-1zM303,372h1v1h-1zM164,376h1v2h-1zM110,372h1v1h-1zM314,376h1v2h-1zM127,372h1v2h-1zM84,396h1v1h-1zM21,373h1v2h-1zM322,383h1v2h-1zM259,389h1v3h-1zM88,382h1v1h-1zM127,382h1v1h-1zM331,388h1v3h-1zM408,373h1v3h-1zM70,377h1v3h-1zM59,373h1v2h-1zM320,379h1v3h-1zM370,397h1v1h-1zM317,386h1v2h-1zM269,387h1v2h-1zM235,379h1v1h-1zM386,382h1v1h-1zM45,381h1v3h-1zM438,399h1v1h-1zM131,391h1v1h-1zM425,398h1v1h-1zM15,394h1v2h-1zM48,390h1v2h-1zM253,392h1v1h-1zM152,382h1v3h-1zM20,374h1v1h-1zM426,372h1v1h-1zM31,384h1v2h-1zM146,386h1v1h-1zM408,400h1v2h-1zM285,399h1v3h-1zM434,390h1v2h-1zM113,372h1v3h-1zM231,381h1v1h-1zM184,379h1v2h-1zM370,376h1v1h-1zM440,373h1v2h-1zM351,391h1v1h-1zM69,374h1v1h-1zM111,373h1v2h-1zM220,374h1v2h-1zM20,387h1v2h-1zM193,372h1v2h-1zM345,383h1v2h-1zM80,387h1v2h-1zM431,377h1v3h-1zM104,397h1v1h-1zM171,390h1v1h-1zM129,374h1v1h-1zM230,375h1v3h-1zM395,374h1v1h-1zM409,374h1v1h-1zM262,381h1v1h-1zM330,372h1v1h-1zM370,383h1v2h-1zM209,383h1v2h-1zM95,372h1v2h-1zM87,394h1v2h-1zM110,393h1v2h-1zM136,372h1v3h-1zM395,372h1v3h-1zM255,376h1v3h-1zM232,372h1v1h-1zM212,394h1v3h-1zM55,376h1v2h-1zM298,380h1v3h-1zM87,374h1v1h-1zM229,372h1v1h-1zM326,372h1v3h-1zM382,389h1v1h-1zM394,393h1v1h-1zM99,373h1v2h-1zM124,372h1v2h-1zM92,372h1v2h-1zM111,373h1v2h-1zM60,373h1v1h-1zM61,387h1v2h-1zM329,388h1v1h-1zM104,372h1v2h-1zM197,396h1v2h-1zM111,376h1v3h-1zM444,378h1v2h-1zM319,380h1v3h-1zM390,377h1v1h-1zM389,395h1v2h-1zM105,372h1v1h-1zM220,380h1v1h-1zM62,384h1v2h-1zM296,382h1v1h-1zM224,372h1v2h-1zM208,382h1v1h-1zM74,375h1v1h-1zM311,372h1v2h-1zM339,378h1v1h-1zM163,372h1v1h-1zM140,389h1v2h-1zM374,384h1v1h-1zM61,386h1v1h-1zM366,396h1v1h-1zM291,382h1v2h-1zM420,372h1v2h-1zM146,399h1v2h-1zM57,396h1v2h-1zM305,391h1v2h-1zM247,379h1v1h-1zM278,382h1v2h-1zM410,373h1v2h-1zM187,381h1v2h-1zM78,378h1v2h-1zM76,373h1v1h-1zM64,372h1v1h-1zM24,376h1v2h-1zM427,376h1v1h-1zM55,389h1v2h-1zM147,385h1v1h-1zM381,375h1v2h-1zM49,372h1v3h-1zM110,372h1v1h-1zM262,381h1v1h-1zM71,390h1v2h-1zM211,380h1v2h-1zM394,372h1v1h-1zM258,383h1v2h-1zM283,392h1v1h-1zM205,380h1v1h-1zM278,385h1v2h-1zM320,373h1v3h-1zM209,373h1v3h-1zM158,379h1v3h-1zM47,389h1v2h-1zM165,375h1v2h-1zM242,378h1v2h-1zM180,375h1v3h-1zM134,400h1v1h-1zM464,397h1v2h-1zM443,392h1v1h-1zM70,379h1v1h-1zM380,379h1v1h-1zM126,384h1v2h-1zM127,381h1v1h-1zM192,372h1v1h-1zM146,389h1v1h-1zM227,382h1v2h-1zM28,373h1v2h-1zM188,376h1v2h-1zM315,379h1v2h-1zM193,380h1v3h-1zM190,375h1v1h-1zM452,388h1v3h-1zM222,391h1v1h-1zM322,372h1v3h-1zM440,391h1v2h-1zM418,376h1v2h-1zM152,375h1v1h-1zM397,383h1v1h-1zM49,394h1v3h-1zM106,374h1v1h-1zM249,372h1v3h-1zM111,392h1v2h-1zM46,373h1v1h-1zM445,373h1v2h-1zM14,392h1v2h-1zM370,372h1v1h-1zM193,373h1v3h-1zM54,385h1v3h-1zM315,372h1v2h-1zM140,399h1v2h-1zM272,372h1v1h-1zM360,380h1v3h-1zM380,384h1v3h-1zM75,375h1v3h-1zM221,374h1v1h-1zM96,385h1v3h-1zM370,383h1v2h-1zM284,396h1v2h-1zM269,374h1v3h-1zM179,372h1v2h-1zM125,386h1v2h-1zM313,397h1v3h-1zM213,377h1v3h-1zM154,372h1v3h-1zM89,372h1v1h-1zM104,373h1v2h-1zM95,374h1v2h-1zM230,372h1v1h-1zM382,372h1v2h-1zM43,376h1v1h-1zM415,386h1v3h-1zM447,375h1v1h-1zM367,380h1v1h-1zM164,382h1v2h-1zM190,382h1v3h-1zM370,376h1v1h-1zM162,372h1v1h-1zM395,392h1v2h-1zM329,399h1v1h-1zM278,380h1v1h-1zM449,381h1v2h-1zM294,372h1v3h-1zM250,372h1v1h-1zM194,372h1v2h-1zM376,380h1v1h-1zM345,377h1v2h-1zM29,393h1v3h-1zM135,396h1v2h-1zM420,373h1v3h-1zM224,372h1v3h-1zM292,374h1v3h-1zM116,390h1v2h-1zM428,379h1v1h-1zM206,393h1v3h-1zM454,381h1v2h-1zM148,395h1v1h-1zM332,397h1v1h-1zM76,385h1v1h-1zM360,373h1v1h-1zM376,373h1v2h-1zM393,386h1v3h-1zM459,387h1v3h-1zM278,398h1v1h-1zM122,378h1v2h-1zM446,372h1v2h-1zM88,379h1v2h-1zM438,372h1v2h-1zM374,372h1v1h-1zM83,391h1v2h-1zM392,384h1v1h-1zM158,372h1v2h-1zM70,374h1v1h-1zM275,372h1v2h-1zM241,372h1v1h-1zM108,397h1v2h-1zM113,372h1v2h-1zM53,387h1v2h-1zM300,391h1v2h-1zM93,385h1v2h-1zM323,392h1v3h-1zM214,389h1v3h-1zM258,372h1v2h-1zM417,373h1v1h-1zM318,372h1v2h-1zM361,374h1v1h-1zM349,396h1v2h-1zM379,379h1v2h-1zM57,374h1v1h-1zM82,372h1v1h-1zM50,383h1v1h-1zM66,376h1v1h-1zM410,375h1v2h-1zM62,375h1v1h-1zM119,388h1v2h-1zM369,378h1v1h-1zM411,372h1v2h-1zM138,386h1v1h-1zM209,376h1v1h-1zM405,382h1v2h-1zM148,381h1v1h-1zM440,376h1v3h-1zM212,376h1v2h-1zM127,372h1v3h-1zM330,382h1v3h-1zM207,400h1v2h-1zM413,391h1v2h-1zM181,372h1v1h-1zM433,383h1v2h-1zM197,372h1v2h-1zM213,377h1v3h-1zM228,399h1v1h-1zM88,373h1v3h-1zM409,375h1v1h-1zM134,378h1v2h-1zM180,390h1v1h-1zM204,372h1v2h-1zM343,384h1v1h-1zM49,399h1v1h-1zM151,373h1v2h-1zM273,394h1v2h-1zM299,375h1v1h-1zM112,374h1v1h-1zM276,376h1v2h-1zM312,380h1v1h-1zM118,381h1v3h-1zM258,376h1v2h-1zM185,401h1v2h-1zM25,377h1v3h-1zM103,372h1v1h-1zM34,374h1v1h-1zM417,373h1v2h-1zM211,379h1v3h-1zM43,386h1v1h-1zM315,384h1v2h-1zM78,378h1v2h-1zM174,372h1v2h-1zM309,373h1v1h-1zM44,374h1v2h-1zM296,373h1v2h-1zM223,372h1v2h-1zM443,395h1v1h-1zM282,382h1v2h-1zM359,372h1v2h-1zM456,383h1v3h-1zM117,389h1v3h-1zM162,373h1v2h-1zM14,376h1v2h-1zM368,385h1v2h-1zM238,380h1v1h-1zM145,385h1v2h-1zM266,377h1v2h-1zM383,400h1v2h-1zM46,392h1v3h-1zM412,372h1v3h-1zM327,382h1v2h-1zM237,376h1v3h-1zM283,373h1v1h-1zM224,394h1v2h-1zM225,372h1v2h-1zM142,384h1v1h-1zM301,376h1v3h-1zM316,373h1v3h-1zM234,372h1v1h-1zM18,374h1v1h-1zM274,372h1v2h-1zM62,387h1v1h-1zM358,375h1v2h-1zM440,373h1v3h-1zM166,383h1v1h-1zM110,373h1v1h-1zM375,373h1v2h-1zM19,391h1v2h-1zM138,378h1v2h-1zM71,375h1v2h-1zM165,378h1v2h-1zM123,380h1v2h-1zM237,375h1v3h-1zM364,385h1v2h-1zM202,381h1v2h-1zM266,377h1v2h-1zM428,373h1v2h-1zM288,372h1v1h-1zM416,372h1v3h-1zM118,378h1v2h-1zM169,377h1v1h-1zM96,381h1v2h-1zM246,377h1v1h-1zM335,372h1v2h-1zM169,377h1v3h-1zM251,372h1v1h-1zM246,372h1v2h-1zM66,373h1v2h-1zM224,397h1v2h-1zM369,373h1v2h-1zM17,377h1v2h-1zM100,379h1v1h-1zM325,377h1v1h-1zM284,372h1v1h-1zM55,388h1v2h-1zM174,372h1v1h-1zM353,372h1v2h-1zM379,377h1v2h-1zM382,374h1v3h-1zM390,373h1v1h-1zM44,392h1v3h-1zM204,399h1v1h-1zM448,372h1v1h-1zM287,372h1v2h-1zM210,380h1v2h-1zM135,372h1v3h-1zM132,372h1v1h-1zM220,373h1v1h-1zM120,372h1v3h-1zM132,377h1v2h-1zM443,372h1v2h-1zM329,378h1v1h-1zM237,380h1v1h-1zM194,372h1v2h-1zM88,388h1v2h-1zM377,372h1v2h-1zM136,372h1v1h-1zM219,382h1v3h-1zM53,392h1v3h-1zM244,400h1v1h-1zM71,372h1v1h-1zM152,372h1v2h-1zM91,372h1v2h-1zM231,393h1v1h-1zM357,374h1v1h-1zM74,384h1v2h-1zM365,372h1v2h-1zM264,373h1v2h-1zM105,372h1v2h-1zM306,388h1v3h-1zM274,372h1v1h-1zM310,380h1v2h-1zM274,376h1v1h-1zM67,376h1v2h-1zM39,373h1v3h-1zM174,375h1v2h-1zM128,374h1v3h-1zM50,372h1v1h-1zM190,376h1v3h-1zM63,372h1v3h-1zM15,393h1v2h-1zM408,383h1v1h-1zM426,373h1v1h-1zM214,390h1v2h-1zM212,372h1v1h-1zM375,392h1v2h-1zM61,380h1v2h-1zM429,399h1v2h-1zM345,372h1v2h-1zM314,377h1v3h-1zM68,384h1v1h-1zM202,373h1v1h-1zM278,376h1v1h-1zM272,374h1v2h-1zM289,391h1v3h-1zM160,397h1v1h-1zM159,381h1v1h-1zM123,397h1v1h-1zM302,374h1v1h-1zM214,374h1v1h-1zM87,374h1v3h-1zM76,400h1v2h-1zM125,380h1v2h-1zM213,385h1v2h-1zM129,376h1v3h-1zM84,373h1v1h-1zM411,385h1v1h-1zM190,387h1v2h-1zM400,400h1v1h-1zM364,395h1v2h-1zM388,382h1v1h-1zM322,375h1v2h-1zM388,372h1v2h-1zM244,380h1v1h-1zM89,374h1v3h-1zM130,383h1v2h-1zM94,398h1v1h-1zM105,390h1v3h-1zM238,380h1v2h-1zM387,388h1v1h-1zM329,394h1v1h-1zM271,372h1v3h-1zM127,378h1v3h-1zM406,373h1v2h-1zM165,372h1v2h-1zM126,392h1v1h-1zM191,388h1v3h-1zM145,372h1v1h-1zM446,392h1v3h-1zM304,384h1v2h-1zM134,381h1v1h-1zM290,374h1v1h-1zM309,374h1v2h-1zM122,372h1v3h-1zM243,372h1v1h-1zM262,372h1v2h-1zM244,377h1v3h-1zM445,376h1v3h-1zM223,372h1v1h-1zM16,374h1v1h-1zM20,372h1v1h-1zM67,374h1v1h-1zM241,372h1v2h-1zM306,379h1v2h-1zM155,372h1v1h-1zM213,372h1v2h-1zM185,379h1v3h-1zM118,375h1v1h-1zM251,381h1v2h-1zM406,396h1v3h-1zM263,381h1v1h-1zM269,381h1v1h-1zM411,374h1v2h-1zM17,372h1v1h-1zM333,389h1v2h-1zM154,372h1v2h-1zM327,375h1v2h-1zM308,396h1v2h-1zM220,390h1v2h-1zM148,385h1v1h-1zM351,393h1v2h-1zM335,378h1v2h-1zM358,379h1v2h-1zM215,372h1v1h-1zM376,374h1v1h-1zM327,383h1v2h-1zM26,389h1v3h-1zM138,396h1v1h-1zM197,379h1v1h-1zM69,373h1v1h-1zM447,376h1v3h-1zM379,384h1v1h-1zM32,372h1v1h-1zM355,396h1v2h-1zM252,388h1v1h-1zM400,392h1v3h-1zM191,377h1v2h-1zM10,391h1v1h-1zM321,374h1v2h-1zM433,372h1v2h-1zM414,384h1v2h-1zM67,380h1v3h-1zM160,382h1v2h-1zM262,379h1v1h-1zM163,385h1v2h-1zM180,401h1v2h-1zM29,372h1v1h-1zM49,375h1v1h-1zM128,376h1v1h-1zM213,379h1v3h-1zM437,380h1v3h-1zM285,374h1v1h-1zM388,372h1v1h-1zM242,385h1v3h-1zM202,400h1v1h-1zM449,373h1v1h-1zM165,375h1v2h-1zM34,378h1v2h-1zM431,388h1v2h-1zM283,374h1v3h-1zM325,385h1v2h-1zM217,392h1v2h-1zM26,377h1v3h-1zM156,382h1v3h-1zM412,392h1v2h-1zM407,373h1v2h-1zM347,400h1v1h-1zM159,380h1v2h-1zM186,387h1v2h-1zM160,385h1v2h-1zM73,389h1v1h-1zM279,390h1v1h-1zM220,400h1v2h-1zM461,397h1v1h-1zM196,373h1v2h-1zM125,372h1v3h-1zM129,379h1v2h-1zM42,379h1v2h-1zM411,373h1v1h-1zM167,372h1v2h-1zM125,375h1v3h-1zM35,379h1v3h-1zM308,372h1v2h-1zM41,384h1v2h-1zM53,398h1v2h-1zM215,373h1v1h-1zM434,378h1v2h-1zM438,374h1v2h-1zM316,391h1v2h-1zM293,380h1v1h-1zM47,400h1v3h-1zM255,380h1v1h-1zM375,390h1v2h-1zM93,375h1v3h-1zM144,373h1v1h-1zM387,379h1v1h-1zM126,389h1v1h-1zM337,400h1v1h-1zM283,375h1v1h-1zM36,373h1v1h-1zM278,400h1v1h-1zM437,382h1v1h-1zM58,373h1v2h-1zM277,372h1v2h-1zM153,377h1v1h-1zM374,377h1v1h-1zM157,389h1v1h-1zM254,383h1v1h-1zM216,396h1v1h-1zM42,373h1v2h-1zM400,372h1v2h-1zM225,377h1v1h-1zM288,376h1v1h-1zM436,373h1v1h-1zM420,401h1v3h-1zM81,375h1v3h-1zM298,386h1v1h-1zM213,390h1v2h-1zM240,377h1v3h-1zM308,393h1v1h-1zM113,391h1v2h-1zM38,374h1v2h-1zM91,377h1v2h-1zM25,376h1v1h-1zM461,397h1v1h-1zM101,392h1v2h-1zM158,373h1v3h-1zM97,396h1v1h-1zM367,372h1v1h-1zM448,386h1v3h-1zM35,383h1v1h-1zM288,389h1v1h-1zM19,398h1v3h-1zM392,386h1v2h-1zM464,396h1v3h-1zM330,372h1v1h-1zM81,391h1v2h-1zM152,373h1v3h-1zM223,373h1v2h-1zM16,388h1v1h-1zM423,390h1v1h-1zM249,392h1v2h-1zM380,388h1v1h-1zM132,375h1v3h-1zM389,378h1v1h-1zM190,373h1v2h-1zM288,384h1v3h-1zM199,388h1v3h-1zM275,400h1v1h-1zM46,387h1v1h-1zM88,401h1v2h-1zM208,372h1v2h-1zM100,374h1v1h-1zM361,374h1v2h-1zM103,376h1v1h-1zM150,392h1v2h-1zM272,375h1v3h-1zM185,372h1v1h-1zM151,372h1v1h-1zM405,372h1v3h-1zM23,372h1v1h-1zM388,381h1v1h-1zM294,376h1v1h-1zM132,372h1v2h-1zM299,397h1v1h-1zM214,398h1v2h-1zM35,374h1v3h-1zM113,374h1v3h-1z"/><path fill="#000" shape-rendering="crispEdges" d="M43,374h1v3h-1zM28,360h1v3h-1zM50,363h1v1h-1zM60,378h1v1h-1zM52,364h1v1h-1zM29,365h1v1h-1zM51,376h1v2h-1zM26,364h1v3h-1zM52,378h1v2h-1zM43,376h1v1h-1zM55,371h1v1h-1zM52,372h1v1h-1zM16,372h1v3h-1zM59,360h1v1h-1zM41,376h1v3h-1zM41,369h1v1h-1zM43,365h1v3h-1zM53,382h1v1h-1zM54,363h1v2h-1zM27,365h1v2h-1zM24,365h1v2h-1zM39,376h1v1h-1zM23,370h1v2h-1zM50,364h1v1h-1zM53,364h1v1h-1zM36,380h1v1h-1zM35,383h1v1h-1zM22,364h1v1h-1zM33,377h1v2h-1zM43,362h1v1h-1zM13,382h1v1h-1zM38,374h1v1h-1zM57,370h1v2h-1zM29,378h1v3h-1zM31,373h1v1h-1zM48,373h1v1h-1zM59,378h1v1h-1zM18,370h1v1h-1zM32,371h1v1h-1zM34,370h1v2h-1zM46,384h1v2h-1zM50,366h1v2h-1zM45,361h1v2h-1zM28,361h1v2h-1zM18,380h1v2h-1zM15,372h1v1h-1zM54,371h1v2h-1zM34,367h1v2h-1zM29,363h1v1h-1zM41,362h1v2h-1zM24,368h1v2h-1zM26,370h1v3h-1zM50,360h1v1h-1zM58,382h1v1h-1zM30,369h1v3h-1zM32,374h1v1h-1zM42,374h1v1h-1zM27,361h1v1h-1zM37,374h1v1h-1zM55,367h1v2h-1zM42,367h1v3h-1zM28,367h1v1h-1zM21,367h1v2h-1zM47,373h1v1h-1zM33,381h1v2h-1zM35,377h1v2h-1zM50,363h1v1h-1zM28,380h1v2h-1zM14,381h1v2h-1zM23,364h1v2h-1zM16,380h1v1h-1zM39,381h1v1h-1zM21,366h1v1h-1zM56,377h1v3h-1zM52,367h1v1h-1zM58,374h1v1h-1zM23,375h1v1h-1zM42,375h1v3h-1zM58,363h1v1h-1zM17,377h1v3h-1zM27,367h1v1h-1zM56,384h1v1h-1zM22,366h1v1h-1zM23,378h1v1h-1zM17,372h1v1h-1zM54,371h1v1h-1zM26,368h1v2h-1zM49,364h1v2h-1zM58,370h1v3h-1zM34,362h1v1h-1zM31,382h1v1h-1zM47,363h1v1h-1zM59,369h1v1h-1zM51,363h1v3h-1zM15,374h1v2h-1zM52,362h1v2h-1zM45,363h1v1h-1zM27,366h1v3h-1zM42,383h1v2h-1zM53,363h1v2h-1zM58,366h1v2h-1zM16,375h1v3h-1zM48,377h1v1h-1zM39,365h1v1h-1zM22,384h1v1h-1zM31,372h1v1h-1zM43,362h1v1h-1zM24,378h1v2h-1zM37,369h1v1h-1zM39,366h1v3h-1zM33,361h1v2h-1zM33,369h1v3h-1zM42,364h1v3h-1zM52,374h1v1h-1zM46,360h1v3h-1zM23,373h1v2h-1zM51,371h1v1h-1zM24,366h1v3h-1zM11,381h1v2h-1zM48,372h1v2h-1zM26,363h1v2h-1zM55,383h1v1h-1zM25,374h1v3h-1zM11,381h1v2h-1zM27,371h1v2h-1zM18,369h1v1h-1zM44,374h1v1h-1zM16,372h1v1h-1zM25,376h1v2h-1zM56,373h1v2h-1zM33,372h1v2h-1zM57,369h1v2h-1zM28,365h1v3h-1zM28,366h1v1h-1zM45,374h1v3h-1zM35,361h1v2h-1zM36,360h1v1h-1zM55,373h1v1h-1zM20,380h1v1h-1zM23,383h1v2h-1zM27,363h1v3h-1zM45,360h1v1h-1zM57,380h1v3h-1zM32,383h1v3h-1z"/><path fill="#000" shape-rendering="crispEdges" d="M424,393h1v4h-1zM439,365h1v1h-1zM436,395h1v4h-1zM435,357h1v4h-1zM434,368h1v4h-1zM431,354h1v3h-1zM438,366h1v2h-1zM425,350h1v1h-1zM422,384h1v4h-1zM441,389h1v1h-1zM435,392h1v4h-1zM433,373h1v1h-1zM450,386h1v2h-1zM435,390h1v1h-1zM433,368h1v2h-1zM448,387h1v4h-1zM447,393h1v1h-1zM423,349h1v1h-1zM447,372h1v2h-1zM423,346h1v4h-1zM465,398h1v2h-1zM425,361h1v4h-1zM445,398h1v1h-1zM423,397h1v1h-1zM439,368h1v4h-1zM438,388h1v2h-1zM420,388h1v4h-1zM424,349h1v2h-1zM445,400h1v1h-1zM430,380h1v1h-1zM436,373h1v4h-1zM428,387h1v2h-1zM447,390h1v4h-1zM429,364h1v2h-1zM444,386h1v1h-1zM435,400h1v1h-1zM423,370h1v1h-1zM423,357h1v3h-1zM447,390h1v4h-1zM434,374h1v3h-1zM440,395h1v1h-1zM425,370h1v3h-1zM436,389h1v2h-1zM423,373h1v1h-1zM459,396h1v1h-1zM443,376h1v4h-1zM424,351h1v1h-1zM437,379h1v2h-1zM432,391h1v1h-1zM455,386h1v2h-1zM424,349h1v3h-1zM441,378h1v4h-1zM438,397h1v2h-1zM426,349h1v3h-1zM459,393h1v2h-1zM436,400h1v2h-1zM421,392h1v1h-1zM464,397h1v3h-1zM421,352h1v2h-1zM426,393h1v4h-1zM449,387h1v4h-1zM424,391h1v1h-1zM424,372h1v4h-1zM439,373h1v1h-1zM424,384h1v3h-1zM438,373h1v2h-1zM437,361h1v1h-1zM458,396h1v1h-1zM422,385h1v1h-1zM439,391h1v1h-1zM431,367h1v1h-1zM422,370h1v3h-1zM456,397h1v2h-1zM438,373h1v4h-1zM433,395h1v1h-1zM443,367h1v3h-1zM421,371h1v1h-1zM422,377h1v1h-1zM427,386h1v3h-1zM438,385h1v1h-1zM441,383h1v1h-1zM427,371h1v1h-1zM437,373h1v1h-1zM444,384h1v2h-1zM437,388h1v2h-1zM423,356h1v1h-1zM427,382h1v4h-1zM436,382h1v1h-1zM432,378h1v1h-1zM450,389h1v3h-1zM435,386h1v4h-1zM429,388h1v4h-1zM429,355h1v1h-1zM423,368h1v2h-1zM446,394h1v1h-1zM444,374h1v1h-1zM428,391h1v1h-1zM421,385h1v2h-1zM424,383h1v1h-1zM428,386h1v1h-1zM436,373h1v1h-1zM437,386h1v3h-1zM424,372h1v1h-1zM430,379h1v2h-1zM423,365h1v2h-1zM424,392h1v4h-1zM438,399h1v3h-1zM450,398h1v2h-1zM427,362h1v1h-1zM427,390h1v2h-1zM444,371h1v1h-1zM443,379h1v1h-1zM426,374h1v3h-1zM444,387h1v4h-1zM424,390h1v1h-1zM435,384h1v3h-1zM443,395h1v2h-1zM449,385h1v3h-1zM447,397h1v3h-1zM446,377h1v4h-1zM420,369h1v3h-1zM430,371h1v1h-1zM434,370h1v1h-1zM422,389h1v3h-1zM443,397h1v4h-1zM424,385h1v3h-1zM425,390h1v1h-1zM448,380h1v1h-1zM462,395h1v1h-1zM426,363h1v3h-1zM432,371h1v1h-1zM457,392h1v4h-1zM447,373h1v4h-1zM433,398h1v2h-1zM453,392h1v1h-1zM429,399h1v4h-1zM445,392h1v1h-1zM434,365h1v2h-1zM443,375h1v4h-1zM434,394h1v1h-1zM432,384h1v1h-1zM432,373h1v1h-1zM450,391h1v4h-1zM426,363h1v1h-1zM427,383h1v4h-1zM422,389h1v1h-1zM422,398h1v1h-1zM426,390h1v1h-1zM435,372h1v3h-1zM423,394h1v4h-1zM430,378h1v4h-1zM420,374h1v1h-1zM430,373h1v4h-1zM420,347h1v3h-1zM426,359h1v2h-1zM434,357h1v2h-1zM436,374h1v4h-1zM451,398h1v3h-1zM444,378h1v3h-1zM438,371h1v3h-1zM430,364h1v1h-1zM431,363h1v1h-1zM433,383h1v1h-1zM420,394h1v1h-1zM434,368h1v1h-1zM451,380h1v1h-1zM457,390h1v1h-1zM429,358h1v1h-1zM431,392h1v1h-1zM434,398h1v1h-1zM434,394h1v1h-1zM422,375h1v1h-1zM445,387h1v1h-1zM439,383h1v1h-1zM428,385h1v1h-1zM450,385h1v1h-1zM422,380h1v3h-1zM420,391h1v4h-1zM438,374h1v3h-1zM446,387h1v3h-1zM431,382h1v1h-1zM446,386h1v3h-1zM443,395h1v4h-1zM429,392h1v2h-1zM453,387h1v4h-1zM449,378h1v1h-1zM449,378h1v1h-1zM450,396h1v2h-1zM452,395h1v1h-1zM461,394h1v4h-1zM427,357h1v3h-1zM427,364h1v4h-1zM429,366h1v1h-1zM424,348h1v1h-1zM427,389h1v1h-1zM436,358h1v4h-1zM426,382h1v3h-1zM422,377h1v2h-1zM421,367h1v1h-1zM442,374h1v3h-1zM423,367h1v3h-1zM427,351h1v4h-1zM423,385h1v1h-1zM430,355h1v2h-1zM464,399h1v1h-1zM451,391h1v4h-1zM442,392h1v1h-1zM429,381h1v2h-1zM424,374h1v4h-1zM431,355h1v2h-1zM442,368h1v3h-1zM449,388h1v3h-1zM438,393h1v4h-1zM455,391h1v3h-1zM441,374h1v1h-1zM446,376h1v1h-1zM437,387h1v3h-1zM451,383h1v4h-1zM431,377h1v1h-1zM425,396h1v3h-1zM456,392h1v2h-1zM423,378h1v1h-1zM436,389h1v4h-1zM421,364h1v4h-1zM429,358h1v2h-1zM445,372h1v1h-1zM441,390h1v3h-1zM426,380h1v4h-1z"/><path d="M3,395 L470,391.5 M3,384 L35,344 M426,331 L470,391" fill="none" stroke="#d82020" stroke-width="1.1"/><path d="M3,405 L472,402 M3,387 L37,346 M431,329 L472,402" fill="none" stroke="#d82020" stroke-width="1.1"/><path d="M20,291 L436,289 L434,300 L430,340 L426,377 L43,383 L39,370 L35,350 L31,330 L27,310 Z" fill="#080604"/><path d="M11,284 L216,284 L216,291 L8,291 Z" fill="#070504"/><path d="M14,287.5 H214" stroke="#2e2214" stroke-width="1.5"/><path d="M44,299 L224,298.7" stroke="#2a1f10" stroke-width="3"/><path d="M44,298 L224,297.7" stroke="#3a2a16" stroke-width="1"/><path d="M238,298.7 L410,298.4" stroke="#2a1f10" stroke-width="3"/><path d="M238,297.7 L410,297.4" stroke="#3a2a16" stroke-width="1"/><path d="M46,310.5 L224,310.2" stroke="#2a1f10" stroke-width="3"/><path d="M46,309.5 L224,309.2" stroke="#3a2a16" stroke-width="1"/><path d="M238,310.2 L410,309.9" stroke="#2a1f10" stroke-width="3"/><path d="M238,309.2 L410,308.9" stroke="#3a2a16" stroke-width="1"/><path d="M48,322 L224,321.7" stroke="#2a1f10" stroke-width="3"/><path d="M48,321 L224,320.7" stroke="#3a2a16" stroke-width="1"/><path d="M238,321.7 L410,321.4" stroke="#2a1f10" stroke-width="3"/><path d="M238,320.7 L410,320.4" stroke="#3a2a16" stroke-width="1"/><path d="M51,333.5 L224,333.2" stroke="#2a1f10" stroke-width="3"/><path d="M51,332.5 L224,332.2" stroke="#3a2a16" stroke-width="1"/><path d="M238,333.2 L410,332.9" stroke="#2a1f10" stroke-width="3"/><path d="M238,332.2 L410,331.9" stroke="#3a2a16" stroke-width="1"/><path d="M53,345 L224,344.7" stroke="#2a1f10" stroke-width="3"/><path d="M53,344 L224,343.7" stroke="#3a2a16" stroke-width="1"/><path d="M238,344.7 L410,344.4" stroke="#2a1f10" stroke-width="3"/><path d="M238,343.7 L410,343.4" stroke="#3a2a16" stroke-width="1"/><path d="M55,356 L224,355.7" stroke="#2a1f10" stroke-width="3"/><path d="M55,355 L224,354.7" stroke="#3a2a16" stroke-width="1"/><path d="M238,355.7 L410,355.4" stroke="#2a1f10" stroke-width="3"/><path d="M238,354.7 L410,354.4" stroke="#3a2a16" stroke-width="1"/><path d="M57,366.5 L224,366 M238,366 L405,365" stroke="#5a5448" stroke-width="2"/><rect x="224" y="272" width="14" height="96" fill="#040302"/><path d="M229,299 L225,302 L228,304" stroke="#9a7840" stroke-width="2" fill="none"/><path d="M229,311 L225,314 L228,316" stroke="#9a7840" stroke-width="2" fill="none"/><path d="M229,323 L225,326 L228,328" stroke="#9a7840" stroke-width="2" fill="none"/><path d="M229,335 L225,338 L228,340" stroke="#9a7840" stroke-width="2" fill="none"/><path d="M229,347 L225,350 L228,352" stroke="#9a7840" stroke-width="2" fill="none"/><path d="M229,359 L225,362 L228,364" stroke="#9a7840" stroke-width="2" fill="none"/><path d="M408,289 L436,289 L432,305 L428,340 L424,377 L404,377 L404,300 Z" fill="#040302"/><path d="M419,295 L414,301 L418,304" stroke="#b08850" stroke-width="2.6" fill="none"/><path d="M418,306 L413,312 L417,315" stroke="#b08850" stroke-width="2.6" fill="none"/><path d="M417,317 L412,323 L416,326" stroke="#b08850" stroke-width="2.6" fill="none"/><path d="M415,328 L410,334 L414,337" stroke="#b08850" stroke-width="2.6" fill="none"/><path d="M414,339 L409,345 L413,348" stroke="#b08850" stroke-width="2.6" fill="none"/><path d="M413,350 L408,356 L412,359" stroke="#b08850" stroke-width="2.6" fill="none"/><path d="M412,361 L407,367 L411,370" stroke="#b08850" stroke-width="2.6" fill="none"/><rect x="238" y="272" width="179" height="15" fill="#2e2418"/><path d="M238,273 H417" stroke="#3a2e1e" stroke-width="1.5"/><circle cx="426" cy="280" r="9" fill="#040302"/><path d="M418,283 Q418,273 428,272" stroke="#b08850" stroke-width="3" fill="none"/><rect x="212" y="270" width="26" height="20" fill="#040302"/><circle cx="231" cy="280" r="7.5" fill="#040302"/><path d="M224,283 Q224,273 233,272" stroke="#9a7840" stroke-width="2.5" fill="none"/><path d="M5,290 L438,288 L438,294 L5,297 Z" fill="#040302"/><path d="M8,292 L436,290" stroke="#3a2a16" stroke-width="1.2"/><path d="M213,286 H224" stroke="#3a2a16" stroke-width="1"/><rect x="85" y="305" width="28" height="31" fill="#0a0806"/><rect x="87" y="307" width="24" height="26" fill="#58544e"/><rect x="87" y="329" width="24" height="5" fill="#5a2c14"/><path d="M99.0,305 V336 M85,320.5 H113" stroke="#0a0806" stroke-width="2"/><rect x="354" y="303" width="31" height="31" fill="#0a0806"/><rect x="356" y="305" width="27" height="26" fill="#58544e"/><rect x="356" y="327" width="27" height="5" fill="#5a2c14"/><path d="M369.5,303 V334 M354,318.5 H385" stroke="#0a0806" stroke-width="2"/><path d="M37,140 L318,140 L228,245 L215,271 L215,286 L13,285 Z" fill="#0e0c08"/><path d="M298,127 L338,153 L215,271 L228,245 L318,140 L286,140 Z" fill="#b09468"/><path d="M298,127 L338,153" stroke="#6a4a20" stroke-width="2"/><path d="M253,140 L260,133 L266,140 Z" fill="#b09468"/><path d="M338,153 L446,280 L436,271 L215,272 Z" fill="#000"/><path d="M338,153 L446,280" stroke="#000" stroke-width="2"/><path d="M212.5,232 V310" stroke="#a0a0a0" stroke-width="1"/><path d="M207,240 L212.5,234 L218,240" stroke="#a0a0a0" fill="none"/><text x="208" y="231" font-size="12" fill="#a8a8a8" font-family="Liberation Sans">z</text><path d="M213,310.5 H293 M287,306 L293,310.5 L287,315 M213,310.5 L211,350" stroke="#e02020" stroke-width="1.2" fill="none"/><text x="291" y="307" font-size="14" fill="#e02020" font-family="Liberation Sans">y</text><path d="M206,346 L214,340 M208,338 L216,350 M202,347 Q210,352 218,346" stroke="#e02020" stroke-width="1.1" fill="none"/></g>
<rect x="496" y="107" width="490" height="398" fill="#fff"/>
<g clip-path="url(#c2)"><rect x="497" y="108" width="488" height="396" fill="#b1b1b1"/><path d="M497.0,123.0 L514.0,121.7 L558.9,119.1 L591.8,117.2 L622.7,115.2 L653.7,113.3 L667.7,113.3 L688.6,114.8 L712.6,116.2 L735.5,116.8 L756.5,117.5 L802.4,119.1 L822.3,120.7 L867.2,123.0 L910.2,125.4 L955.1,126.9 L988.0,128.3" fill="none" stroke="#f4f4f4" stroke-width="1.3"/><g fill="none" stroke="#000" stroke-width="1"><path d="M531,141 H745 M531,143 H745 M531,141 L507,285 M544,143 L590,220 M531,141 L583,222"/><path d="M790,127 L832,155 L940,280 M792,129 L834,158 M790,127.5 L710,209.6 M793,130 L713,211 M831,155.7 L735.5,240 M834,157 L738.5,241 M808.7,145.6 L760,240 M808.7,145.6 L794.5,219.8 M808.7,145.6 L863.6,207.6 M832,155 L935,282 M806,150 L930,283 M820,162 L925,285 M710,209.6 H718"/><path d="M742,137 L753,131 L764,137 M742,137 V262 M761,137 V262 M740,145 H766 M738,148 L766,148" stroke="#000"/><path d="M832,155 L720,270 M826,162 L705,290 M800,180 L770,290 M790,210 L760,270"/></g><path d="M531,141 H812" stroke="#000" stroke-width="2"/><path d="M531,144 H812" stroke="#000" stroke-width="1"/><path d="M535,200 L524,272" stroke="#000" stroke-width="2"/><path d="M544,143 L535,200" stroke="#000" stroke-width="1.5"/><path d="M790,127 L832,155 L940,280" stroke="#000" stroke-width="2" fill="none"/><path d="M546,190 L560,185 L566,230 L552,235 Z" fill="#000"/><path d="M551,196 L556,194 L559,224 L555,226 Z" fill="#606060"/><path d="M574,220 H720 V272 H515 Z" fill="#c01818"/><rect x="720" y="208" width="144" height="64" fill="#c01818"/><path d="M577,224.5H652M666,224.5H797M808,224.5H860M575,226.5H656M672,226.5H787M790,226.5H846M848,226.5H860M573,228.5H711M735,228.5H833M848,228.5H860M570,231.5H597M602,231.5H651M651,231.5H727M738,231.5H859M567,234.5H647M663,234.5H738M745,234.5H860M563,237.5H668M676,237.5H724M731,237.5H759M778,237.5H846M560,239.5H695M717,239.5H737M742,239.5H860M557,242.5H624M626,242.5H722M741,242.5H794M796,242.5H856M553,245.5H588M594,245.5H626M627,245.5H743M748,245.5H835M846,245.5H860M551,247.5H648M651,247.5H722M727,247.5H779M804,247.5H860M548,250.5H593M603,250.5H725M741,250.5H773M798,250.5H844M850,250.5H860M545,253.5H574M576,253.5H666M672,253.5H764M773,253.5H848M542,255.5H631M653,255.5H695M698,255.5H827M848,255.5H860M539,258.5H672M677,258.5H811M833,258.5H860M536,260.5H561M585,260.5H634M651,260.5H702M723,260.5H814M822,260.5H860M534,262.5H581M595,262.5H718M733,262.5H787M810,262.5H854M854,262.5H860M532,265.5H573M582,265.5H671M674,265.5H737M760,265.5H860M528,267.5H619M622,267.5H646M647,267.5H776M794,267.5H860" stroke="#b8a8a8" stroke-width="0.7" fill="none" shape-rendering="crispEdges"/><path d="M722,211.5H800M818,211.5H850M722,213.5H808M826,213.5H850M722,216.5H837M722,218.5H824M847,218.5H850M722,221.5H846" stroke="#c0a8a8" stroke-width="0.7" fill="none" shape-rendering="crispEdges"/><path d="M520,268 L574,222 M530,268 L580,226 M540,268 L586,228 M552,268 L592,232" stroke="#b0a0a0" stroke-width="0.6" fill="none"/><path d="M852,210 L864,210 L864,272 L852,272 Z" fill="#200000" opacity="0.7"/><path d="M856.0,212.0 L918.0,290.0M858.2,212.4 L919.6,289.2M860.4,212.8 L921.2,288.4M862.6,213.2 L922.8,287.6M864.8,213.6 L924.4,286.8M867.0,214.0 L926.0,286.0M869.2,214.4 L927.6,285.2M871.4,214.8 L929.2,284.4M873.6,215.2 L930.8,283.6" stroke="#000" stroke-width="0.9" fill="none"/><path d="M852,210 L864,210 L864,272 L852,272 Z" fill="#000" opacity="0.5"/><rect x="646" y="243" width="24" height="27" fill="#000"/><rect x="649" y="246" width="8" height="9" fill="#c0c0c0"/><rect x="659" y="246" width="8" height="9" fill="#c0c0c0"/><rect x="649" y="257" width="8" height="9" fill="#c0c0c0"/><rect x="659" y="257" width="8" height="9" fill="#c0c0c0"/><rect x="780" y="227" width="29" height="41" fill="#000"/><rect x="782" y="229" width="24" height="37" fill="#c4c4c4"/><rect x="801" y="243" width="2" height="4" fill="#000"/><path d="M782,244 H790 M782,262 H790" stroke="#606060"/><rect x="782" y="161" width="19" height="22" fill="#000"/><rect x="784" y="163" width="6" height="8" fill="#b0b0b0"/><rect x="792" y="163" width="7" height="8" fill="#b0b0b0"/><rect x="784" y="173" width="6" height="8" fill="#b0b0b0"/><rect x="792" y="173" width="7" height="8" fill="#b0b0b0"/><path d="M516,272 H928 L936,288 L922,300 L918,335 L945,400 L890,400 L870,371 H531 L520,297 L516,297 Z" fill="#000"/><path d="M500,276.5H516M500,280.5H516M500,284.5H516M500,288.5H516M500,292.5H516" stroke="#000" stroke-width="1" fill="none" shape-rendering="crispEdges"/><path d="M520,274.5H659M681,274.5H740M520,277.5H610M621,277.5H740M520,279.5H544M559,279.5H636M642,279.5H740M520,282.5H650M657,282.5H678M686,282.5H740M520,284.5H649M665,284.5H738M520,287.5H620M625,287.5H697M717,287.5H740M520,289.5H610M618,289.5H654M667,289.5H740" stroke="#c01818" stroke-width="1.1" fill="none" shape-rendering="crispEdges"/><path d="M520,276.5H600M520,281.5H594M520,285.5H590M520,290.5H578M599,290.5H600" stroke="#a0a0a0" stroke-width="0.8" fill="none" shape-rendering="crispEdges"/><path d="M740,276.5H764M786,276.5H811M828,276.5H900M740,280.5H762M766,280.5H840M841,280.5H900M740,283.5H766M781,283.5H855M871,283.5H900M740,287.5H842M847,287.5H900M740,290.5H817M835,290.5H876M883,290.5H900" stroke="#909090" stroke-width="0.8" fill="none" shape-rendering="crispEdges"/><path d="M588,300.5H682M701,300.5H768M788,300.5H850M588,303.5H695M698,303.5H772M788,303.5H852M588,306.5H714M733,306.5H854M588,309.5H633M651,309.5H769M785,309.5H855M588,312.5H726M750,312.5H835M854,312.5H857M588,315.5H650M652,315.5H725M739,315.5H851M588,318.5H705M707,318.5H823M827,318.5H861M588,320.5H626M639,320.5H746M767,320.5H862M588,323.5H722M724,323.5H771M784,323.5H839M857,323.5H864M588,326.5H675M683,326.5H749M770,326.5H866M588,329.5H724M737,329.5H826M831,329.5H868M588,332.5H611M636,332.5H717M728,332.5H844M858,332.5H869M588,335.5H673M683,335.5H818M841,335.5H871M588,337.5H660M680,337.5H809M820,337.5H872M588,340.5H719M722,340.5H836M836,340.5H874M588,343.5H647M656,343.5H750M753,343.5H860M863,343.5H876M588,345.5H672M683,345.5H748M758,345.5H842M845,345.5H877M588,348.5H672M693,348.5H786M808,348.5H856M874,348.5H879M588,351.5H646M669,351.5H715M740,351.5H867M870,351.5H881M588,353.5H620M640,353.5H711M731,353.5H766M776,353.5H878M879,353.5H882M588,357.5H724M727,357.5H808M827,357.5H884M588,359.5H616M619,359.5H644M657,359.5H739M753,359.5H791M796,359.5H840M861,359.5H886M588,362.5H615M639,362.5H715M734,362.5H793M805,362.5H887M588,364.5H610M627,364.5H748M753,364.5H827M846,364.5H889M588,367.5H670M670,367.5H797M817,367.5H890M588,370.5H657M672,370.5H752M777,370.5H892" stroke="#b4b4b4" stroke-width="1.5" fill="none" shape-rendering="crispEdges"/><path d="M870,276.5H925M870,279.5H925M870,283.5H924M870,286.5H924M870,289.5H924M870,291.5H923M870,294.5H918M870,297.5H923M870,300.5H922M870,304.5H922M870,307.5H922M870,310.5H921M870,313.5H896M901,313.5H921M870,316.5H921M870,319.5H921M870,322.5H920M870,325.5H920M870,328.5H920" stroke="#9a9a9a" stroke-width="0.8" fill="none" shape-rendering="crispEdges"/><path d="M521,299.5H562M574,299.5H591M522,302.5H590M522,304.5H586M522,307.5H588M523,309.5H578M579,309.5H587M523,311.5H586M524,314.5H584M524,317.5H583M524,320.5H582M525,322.5H574M525,325.5H579M526,328.5H578M526,330.5H577M526,332.5H553M566,332.5H576M527,335.5H575M527,337.5H574M527,340.5H573M528,342.5H572M528,345.5H570M529,347.5H569M529,350.5H568M529,352.5H567M530,355.5H566M530,357.5H557M564,357.5H565M530,359.5H564M531,361.5H563M531,364.5H562M531,366.5H561" stroke="#c01818" stroke-width="1" fill="none" shape-rendering="crispEdges"/><ellipse cx="537" cy="307" rx="6.5" ry="5.5" fill="none" stroke="#c01818" stroke-width="1.1"/><ellipse cx="538" cy="317" rx="6.5" ry="5.5" fill="none" stroke="#c01818" stroke-width="1.1"/><ellipse cx="540" cy="327" rx="6.5" ry="5.5" fill="none" stroke="#c01818" stroke-width="1.1"/><ellipse cx="541" cy="338" rx="6.5" ry="5.5" fill="none" stroke="#c01818" stroke-width="1.1"/><ellipse cx="543" cy="348" rx="6.5" ry="5.5" fill="none" stroke="#c01818" stroke-width="1.1"/><ellipse cx="544" cy="358" rx="6.5" ry="5.5" fill="none" stroke="#c01818" stroke-width="1.1"/><ellipse cx="545" cy="368" rx="6.5" ry="5.5" fill="none" stroke="#c01818" stroke-width="1.1"/><path d="M577,310 L586,307 M580,318 L590,310 M582,322 L578,330" stroke="#c01818" stroke-width="1.2"/><path d="M498,294 H930" stroke="#000" stroke-width="4"/><path d="M500,290 H560 M500,298 H540" stroke="#000" stroke-width="1.5"/><rect x="593" y="306" width="12" height="30" fill="#b4b4b4"/><path d="M593,320 H605" stroke="#000" stroke-width="1.5"/><rect x="848" y="303" width="22" height="30" fill="#b0b0b0"/><path d="M848,318 H870 M859,303 V333" stroke="#000" stroke-width="1.5"/><rect x="719" y="208" width="12" height="164" fill="#000"/><path d="M722,290 V370 M727,290 V370" stroke="#707070" stroke-width="0.7" stroke-dasharray="1 2"/><path d="M497,404 L497,388 L498.0,376.3 L499.8,374.6 L500.6,371.3 L501.9,376.6 L503.7,374.4 L505.0,374.6 L506.0,380.4 L507.7,374.9 L509.2,369.4 L510.9,369.8 L511.8,372.2 L513.3,374.8 L515.0,374.8 L516.4,372.2 L517.3,371.2 L518.3,381.1 L519.8,372.1 L521.4,376.9 L522.8,376.6 L523.9,371.1 L525.7,381.7 L527.2,373.4 L528.9,376.3 L530.4,382.1 L531.7,371.3 L533.0,382.5 L533.9,370.0 L534.9,372.1 L536.1,369.1 L537.5,369.9 L538.9,378.2 L540.7,376.6 L541.5,369.2 L542.9,371.4 L544.7,372.5 L545.6,371.4 L546.8,373.4 L548.5,373.9 L550.1,374.6 L551.5,376.3 L553.3,376.7 L554.7,380.6 L555.8,372.3 L557.2,371.0 L559.0,371.1 L560.4,380.3 L561.8,372.2 L563.3,372.5 L564.4,373.1 L565.2,380.1 L566.4,381.1 L567.8,371.4 L568.8,373.1 L569.9,373.3 L571.5,377.7 L572.4,376.6 L574.0,370.8 L575.5,381.7 L576.4,373.4 L577.9,371.1 L579.5,370.2 L581.1,372.2 L582.3,372.0 L583.1,370.8 L584.8,376.5 L585.9,380.2 L587.3,376.3 L588.4,372.2 L589.8,372.0 L591.0,373.4 L591.8,378.5 L593.0,380.6 L594.6,381.9 L596.4,376.9 L597.4,371.1 L599.2,371.0 L600.0,381.3 L601.0,374.4 L601.8,380.3 L603.1,371.7 L604.4,373.1 L606.2,369.9 L607.2,377.2 L608.8,371.6 L609.7,369.4 L611.3,372.1 L612.1,381.4 L613.3,371.6 L614.7,377.1 L616.0,371.1 L617.6,369.3 L618.4,371.1 L619.3,377.2 L620.3,369.9 L621.7,376.8 L622.8,372.1 L623.7,370.8 L624.9,370.4 L625.8,374.5 L627.3,374.6 L628.2,373.1 L629.6,380.8 L631.4,374.2 L632.4,376.7 L633.8,373.6 L634.7,371.3 L635.9,378.0 L637.0,374.7 L638.7,381.7 L640.4,374.7 L641.9,377.3 L643.5,380.0 L644.5,373.1 L645.4,370.6 L646.5,369.9 L648.2,371.1 L649.7,382.4 L651.0,369.1 L652.6,377.3 L653.7,377.9 L655.4,370.4 L657.1,372.1 L658.1,371.6 L659.4,381.9 L660.5,372.5 L662.3,377.0 L663.2,376.6 L664.9,382.4 L666.1,377.9 L667.6,377.7 L668.5,375.2 L669.5,370.2 L670.8,381.3 L672.0,382.1 L673.0,370.4 L674.3,372.1 L675.6,372.7 L677.3,378.1 L678.6,373.2 L679.8,372.2 L680.9,371.4 L682.0,374.9 L682.9,381.2 L684.3,374.5 L686.0,381.4 L687.3,380.2 L689.0,382.2 L689.9,372.2 L691.3,380.2 L692.4,371.6 L693.4,371.3 L694.8,382.1 L696.5,371.4 L697.3,371.1 L698.8,369.3 L699.9,371.1 L701.2,381.7 L702.0,371.8 L703.1,369.5 L704.5,374.0 L705.9,371.2 L706.8,373.3 L708.4,371.2 L710.2,372.7 L711.4,373.7 L712.8,382.4 L714.4,370.9 L716.2,381.4 L717.5,381.2 L718.7,380.7 L720.2,380.5 L721.7,380.4 L722.8,381.1 L723.7,376.4 L724.9,381.6 L726.1,372.6 L727.3,373.0 L728.9,370.8 L730.4,377.4 L731.6,369.7 L732.8,370.1 L734.1,371.7 L735.4,373.4 L736.6,369.9 L738.3,369.4 L739.7,380.3 L741.3,380.3 L742.8,377.0 L744.3,380.3 L745.7,375.0 L747.1,371.4 L748.1,371.9 L749.2,375.2 L750.9,373.8 L752.6,372.6 L754.4,381.8 L756.1,381.2 L757.5,381.6 L758.4,380.6 L759.4,381.2 L760.4,376.5 L762.0,382.4 L762.9,373.4 L764.6,371.2 L765.5,369.1 L766.9,376.2 L768.2,371.8 L769.9,381.7 L770.8,377.9 L771.6,370.8 L772.7,372.3 L774.4,374.7 L775.4,371.3 L776.3,371.1 L777.8,374.2 L779.3,378.1 L780.3,373.8 L781.6,381.0 L782.5,370.8 L783.7,372.1 L784.9,373.6 L785.7,370.6 L786.8,374.3 L787.8,369.4 L789.0,371.6 L789.9,376.4 L791.2,371.1 L792.4,372.0 L793.9,369.6 L794.8,373.1 L796.5,370.6 L797.7,370.4 L799.1,373.3 L800.5,380.7 L802.3,375.0 L804.1,373.6 L805.2,372.6 L806.3,369.1 L807.5,370.5 L808.3,370.7 L809.2,376.1 L810.0,381.3 L811.1,373.8 L812.4,373.4 L813.3,372.9 L814.7,373.2 L815.8,373.3 L817.0,372.3 L818.5,373.4 L820.1,381.0 L821.8,373.3 L823.0,374.1 L824.2,381.2 L825.3,371.3 L826.9,381.7 L828.6,369.4 L830.1,371.1 L831.0,381.7 L831.9,371.5 L833.5,371.2 L835.2,374.2 L836.8,380.8 L838.0,369.5 L839.6,369.8 L840.7,373.2 L842.2,371.7 L843.9,380.4 L845.7,369.6 L847.5,372.1 L848.8,378.0 L850.2,378.0 L851.5,376.2 L853.1,370.5 L854.8,369.5 L856.5,369.3 L857.7,381.5 L859.1,382.2 L860.2,377.7 L861.8,373.1 L863.2,373.5 L864.6,373.7 L866.0,371.9 L867.3,371.3 L868.8,372.1 L870.2,377.3 L871.3,369.8 L872.5,369.6 L873.6,382.3 L875.1,381.5 L876.9,378.1 L878.0,372.3 L879.8,375.2 L881.6,375.5 L883.3,373.4 L884.1,369.1 L885.1,377.3 L886.5,369.5 L887.5,374.1 L888.7,380.5 L890.2,370.3 L891.3,374.1 L892.3,374.9 L893.8,375.4 L895.5,373.4 L896.8,374.2 L898.6,370.9 L900.2,371.1 L901.4,373.0 L902.5,372.3 L903.8,369.3 L905.1,376.1 L906.9,369.5 L908.4,373.9 L910.2,373.4 L911.0,370.6 L912.1,373.1 L913.5,370.1 L914.6,382.0 L915.8,371.8 L916.6,370.6 L918.1,376.6 L919.0,374.3 L920.7,376.3 L921.5,369.0 L922.9,374.2 L924.4,377.3 L925.6,380.4 L926.6,380.3 L928.2,370.0 L929.3,373.7 L930.4,373.4 L931.4,371.3 L932.2,375.1 L933.8,377.5 L934.6,377.5 L935.6,370.7 L937.1,371.3 L938.5,371.1 L939.8,381.1 L940.9,371.5 L942.1,373.8 L943.2,371.4 L944.3,374.4 L945.1,373.6 L946.9,370.2 L948.7,380.2 L950.0,381.6 L950.9,371.4 L952.7,380.2 L953.8,374.2 L954.9,376.1 L955.9,370.4 L957.6,371.7 L958.9,374.6 L959.8,369.5 L961.2,371.5 L962.9,370.1 L964.6,376.5 L966.2,374.0 L965,404 Z" fill="#000"/><path fill="#b0b0b0" shape-rendering="crispEdges" d="M954,398h1v1h-1zM553,398h1v2h-1zM662,403h1v1h-1zM930,396h1v2h-1zM959,404h1v1h-1zM530,400h1v2h-1zM548,403h1v2h-1zM510,399h1v2h-1zM762,400h1v3h-1zM640,397h1v2h-1zM883,398h1v3h-1zM636,402h1v1h-1zM638,403h1v1h-1zM646,403h1v1h-1zM524,404h1v2h-1zM783,397h1v3h-1zM506,403h1v2h-1zM956,401h1v3h-1zM821,398h1v2h-1zM749,400h1v1h-1zM772,398h1v2h-1zM733,399h1v2h-1zM772,402h1v2h-1zM897,403h1v2h-1zM949,398h1v1h-1zM557,400h1v2h-1zM835,398h1v2h-1zM945,400h1v2h-1zM654,402h1v1h-1zM954,400h1v2h-1zM958,396h1v2h-1zM696,403h1v2h-1zM527,403h1v2h-1zM597,397h1v3h-1zM599,400h1v1h-1zM698,403h1v3h-1zM666,398h1v3h-1zM671,400h1v1h-1zM769,397h1v1h-1zM500,397h1v1h-1zM564,397h1v2h-1zM700,398h1v1h-1zM748,403h1v3h-1zM704,399h1v1h-1zM703,401h1v1h-1zM734,403h1v1h-1zM719,403h1v2h-1zM754,397h1v1h-1zM775,397h1v1h-1zM866,399h1v2h-1zM883,397h1v2h-1zM564,398h1v2h-1zM770,404h1v2h-1zM701,397h1v1h-1zM530,403h1v2h-1zM530,396h1v2h-1zM920,401h1v1h-1zM880,399h1v2h-1zM906,398h1v2h-1zM593,399h1v1h-1zM524,400h1v3h-1zM741,401h1v1h-1zM583,403h1v3h-1zM682,399h1v2h-1zM804,400h1v1h-1zM764,399h1v3h-1zM561,400h1v3h-1zM738,399h1v3h-1zM894,402h1v1h-1zM706,402h1v2h-1zM790,400h1v1h-1zM585,397h1v2h-1zM555,403h1v2h-1zM887,399h1v1h-1zM650,398h1v1h-1zM609,399h1v1h-1zM582,398h1v2h-1zM524,404h1v1h-1zM596,398h1v1h-1zM760,398h1v1h-1zM599,401h1v3h-1zM607,401h1v3h-1zM681,400h1v3h-1zM582,398h1v2h-1zM526,402h1v2h-1zM725,401h1v2h-1zM739,399h1v2h-1zM602,403h1v2h-1zM659,404h1v2h-1zM849,397h1v2h-1z"/><path d="M497,386 L540,335 M497,392 L545,338" stroke="#000" stroke-width="0.9"/><path d="M918,330 L968,400 L965,408 M925,330 L970,396" stroke="#000" stroke-width="1" fill="none"/><path d="M497,406 H966 M497,409 H966 M497,413 H720" stroke="#000" stroke-width="0.9"/><path d="M706.5,232 V306" stroke="#909090"/><path d="M701,240 L706.5,234 L712,240" stroke="#909090" fill="none"/><text x="702" y="230" font-size="12" fill="#909090" font-family="Liberation Sans">z</text><path d="M707,306 H780 M776,302 L781,306 L776,310 M707,306 L706,345" stroke="#e02020" stroke-width="1.2" fill="none"/><text x="783" y="303" font-size="13" fill="#e02020" font-family="Liberation Sans">y</text><text x="700" y="348" font-size="12" fill="#e02020" font-family="Liberation Sans">x</text><path d="M522.5,456 V479" stroke="#0000ff" stroke-width="1.2"/><path d="M522,478.5 H547" stroke="#00ff00" stroke-width="1.4"/><path d="M522.5,478 V487" stroke="#ff0000" stroke-width="1.2"/><path d="M524,477 L530,484 M530,477 L523,484" stroke="#ff0000" stroke-width="1.3"/><path d="M523,443.5 H529 L523,451 H529.5" stroke="#0000ff" stroke-width="1.6" fill="none"/><path d="M548,466.5 L552,476 M555.5,466.5 L550.5,478.5 L546,479" stroke="#00ff00" stroke-width="1.7" fill="none"/></g>
<rect x="0" y="506" width="495" height="402" fill="#fff"/>
<g clip-path="url(#c3)"><rect x="2" y="508" width="490" height="397" fill="#4e703e"/><path d="M2,507 L2.0,524.5 L19.0,523.2 L64.1,520.6 L97.2,518.7 L128.3,516.7 L159.3,514.8 L173.3,514.8 L194.4,516.3 L218.4,517.7 L241.5,518.3 L262.5,519.0 L308.6,520.6 L328.7,522.2 L373.8,524.5 L416.8,526.9 L461.9,528.4 L495.0,529.8 L492,507 Z" fill="#b1b1b1"/><path d="M2.0,524.0 L19.0,522.7 L64.1,520.1 L97.2,518.2 L128.3,516.2 L159.3,514.3 L173.3,514.3 L194.4,515.8 L218.4,517.2 L241.5,517.8 L262.5,518.5 L308.6,520.1" fill="none" stroke="#f4f4f4" stroke-width="1.3"/><g transform="translate(0,401)"><path fill="#000" shape-rendering="crispEdges" d="M85,393h1v1h-1zM209,373h1v2h-1zM131,389h1v2h-1zM284,374h1v1h-1zM48,383h1v2h-1zM55,383h1v1h-1zM379,372h1v2h-1zM202,372h1v2h-1zM120,386h1v3h-1zM276,372h1v1h-1zM38,396h1v2h-1zM19,372h1v2h-1zM103,373h1v1h-1zM147,377h1v3h-1zM400,373h1v1h-1zM153,383h1v1h-1zM31,377h1v1h-1zM292,372h1v1h-1zM394,383h1v1h-1zM275,380h1v2h-1zM167,373h1v2h-1zM37,396h1v1h-1zM312,398h1v3h-1zM117,372h1v2h-1zM110,372h1v2h-1zM216,372h1v3h-1zM60,376h1v2h-1zM411,381h1v3h-1zM209,376h1v2h-1zM114,374h1v1h-1zM415,374h1v1h-1zM101,372h1v2h-1zM365,374h1v1h-1zM339,374h1v1h-1zM233,372h1v2h-1zM308,383h1v1h-1zM251,374h1v1h-1zM357,379h1v1h-1zM190,392h1v1h-1zM73,397h1v1h-1zM263,378h1v1h-1zM232,377h1v3h-1zM415,372h1v3h-1zM242,379h1v1h-1zM322,395h1v1h-1zM79,372h1v2h-1zM432,389h1v2h-1zM33,373h1v1h-1zM156,386h1v1h-1zM338,374h1v3h-1zM333,374h1v2h-1zM322,395h1v2h-1zM83,382h1v2h-1zM394,373h1v2h-1zM189,381h1v2h-1zM79,400h1v3h-1zM51,372h1v1h-1zM131,382h1v1h-1zM142,373h1v2h-1zM154,372h1v2h-1zM441,372h1v1h-1zM231,373h1v3h-1zM156,374h1v1h-1zM353,381h1v1h-1zM200,385h1v3h-1zM357,397h1v2h-1zM304,372h1v2h-1zM307,372h1v1h-1zM213,376h1v2h-1zM221,373h1v2h-1zM33,373h1v3h-1zM138,374h1v3h-1zM29,380h1v1h-1zM111,372h1v2h-1zM394,380h1v3h-1zM415,372h1v1h-1zM17,376h1v2h-1zM70,376h1v2h-1zM221,385h1v1h-1zM201,382h1v1h-1zM225,372h1v1h-1zM415,372h1v1h-1zM78,401h1v1h-1zM359,372h1v3h-1zM144,372h1v2h-1zM374,374h1v1h-1zM143,372h1v3h-1zM144,380h1v1h-1zM381,399h1v2h-1zM372,373h1v2h-1zM280,377h1v1h-1zM401,375h1v2h-1zM339,391h1v2h-1zM355,385h1v1h-1zM431,398h1v3h-1zM166,374h1v1h-1zM80,372h1v2h-1zM437,372h1v2h-1zM372,372h1v2h-1zM233,372h1v3h-1zM358,377h1v3h-1zM82,376h1v2h-1zM227,377h1v2h-1zM162,388h1v2h-1zM321,390h1v1h-1zM422,397h1v1h-1zM183,374h1v2h-1zM419,380h1v3h-1zM139,378h1v3h-1zM106,375h1v2h-1zM339,387h1v2h-1zM293,373h1v3h-1zM412,385h1v1h-1zM287,377h1v2h-1zM370,389h1v2h-1zM457,395h1v1h-1zM118,372h1v3h-1zM283,379h1v2h-1zM146,383h1v2h-1zM393,391h1v3h-1zM304,401h1v2h-1zM114,374h1v1h-1zM249,382h1v2h-1zM232,375h1v2h-1zM342,391h1v2h-1zM379,373h1v2h-1zM79,373h1v1h-1zM92,372h1v3h-1zM242,379h1v1h-1zM410,375h1v2h-1zM370,387h1v1h-1zM400,382h1v2h-1zM345,383h1v1h-1zM356,384h1v2h-1zM93,379h1v2h-1zM340,381h1v2h-1zM442,373h1v2h-1zM98,380h1v1h-1zM262,380h1v3h-1zM318,376h1v3h-1zM454,381h1v2h-1zM170,373h1v2h-1zM282,372h1v3h-1zM81,401h1v1h-1zM229,373h1v1h-1zM124,372h1v1h-1zM147,374h1v1h-1zM216,372h1v1h-1zM302,374h1v3h-1zM77,372h1v3h-1zM237,372h1v1h-1zM155,374h1v2h-1zM434,384h1v1h-1zM193,385h1v1h-1zM408,393h1v1h-1zM426,387h1v2h-1zM277,378h1v2h-1zM464,396h1v2h-1zM418,379h1v3h-1zM207,375h1v1h-1zM46,395h1v1h-1zM307,373h1v1h-1zM274,388h1v1h-1zM295,382h1v1h-1zM305,383h1v1h-1zM230,379h1v2h-1zM448,391h1v2h-1zM189,376h1v1h-1zM343,381h1v2h-1zM50,375h1v1h-1zM360,384h1v3h-1zM232,372h1v3h-1zM191,400h1v2h-1zM350,373h1v2h-1zM139,386h1v1h-1zM235,375h1v1h-1zM444,393h1v1h-1zM62,372h1v2h-1zM354,376h1v1h-1zM409,374h1v3h-1zM404,372h1v1h-1zM385,373h1v3h-1zM32,383h1v1h-1zM114,373h1v1h-1zM50,372h1v3h-1zM349,386h1v3h-1zM337,380h1v1h-1zM161,372h1v2h-1zM109,372h1v1h-1zM402,399h1v2h-1zM217,377h1v1h-1zM404,387h1v2h-1zM50,372h1v1h-1zM397,398h1v2h-1zM379,372h1v3h-1zM411,374h1v1h-1zM433,398h1v1h-1zM307,387h1v2h-1zM450,400h1v3h-1zM339,395h1v2h-1zM399,376h1v3h-1zM233,372h1v1h-1zM125,372h1v1h-1zM244,397h1v1h-1zM150,374h1v1h-1zM326,376h1v1h-1zM350,373h1v1h-1zM202,399h1v2h-1zM282,382h1v2h-1zM43,388h1v3h-1zM33,375h1v2h-1zM62,374h1v2h-1zM442,396h1v2h-1zM263,372h1v2h-1zM309,372h1v2h-1zM358,373h1v1h-1zM191,374h1v1h-1zM153,375h1v1h-1zM205,372h1v2h-1zM433,379h1v2h-1zM418,374h1v1h-1zM26,382h1v1h-1zM296,390h1v1h-1zM251,384h1v1h-1zM153,392h1v1h-1zM149,397h1v2h-1zM196,380h1v2h-1zM440,374h1v2h-1zM270,397h1v1h-1zM353,379h1v1h-1zM432,372h1v2h-1zM62,382h1v2h-1zM81,372h1v2h-1zM395,386h1v2h-1zM241,372h1v3h-1zM416,379h1v1h-1zM346,385h1v2h-1zM98,387h1v1h-1zM84,395h1v2h-1zM226,390h1v2h-1zM328,372h1v2h-1zM196,372h1v1h-1zM85,376h1v1h-1zM261,379h1v2h-1zM342,373h1v1h-1zM76,378h1v1h-1zM99,381h1v3h-1zM188,387h1v3h-1zM227,391h1v3h-1zM321,389h1v2h-1zM412,372h1v2h-1zM250,395h1v1h-1zM436,381h1v2h-1zM336,375h1v2h-1zM32,372h1v2h-1zM357,373h1v2h-1zM73,373h1v2h-1zM248,387h1v3h-1zM98,374h1v3h-1zM373,380h1v2h-1zM68,394h1v1h-1zM288,387h1v2h-1zM195,379h1v3h-1zM148,372h1v1h-1zM178,386h1v2h-1zM328,372h1v2h-1zM374,373h1v1h-1zM168,381h1v1h-1zM177,380h1v1h-1zM251,391h1v1h-1zM409,376h1v2h-1zM355,385h1v2h-1zM406,387h1v3h-1zM81,381h1v1h-1zM120,384h1v2h-1zM346,387h1v3h-1zM48,386h1v2h-1zM127,374h1v2h-1zM378,376h1v1h-1zM108,378h1v1h-1zM14,389h1v3h-1zM231,382h1v3h-1zM323,393h1v2h-1zM160,372h1v1h-1zM263,374h1v1h-1zM282,375h1v2h-1zM409,391h1v3h-1zM136,374h1v3h-1zM255,374h1v2h-1zM418,383h1v3h-1zM13,383h1v3h-1zM195,385h1v2h-1zM53,390h1v3h-1zM48,372h1v2h-1zM97,390h1v2h-1zM45,390h1v1h-1zM205,381h1v1h-1zM77,380h1v1h-1zM413,387h1v2h-1zM223,372h1v3h-1zM334,373h1v2h-1zM209,385h1v2h-1zM129,385h1v1h-1zM34,374h1v3h-1zM30,392h1v2h-1zM265,375h1v1h-1zM332,372h1v2h-1zM425,372h1v3h-1zM448,373h1v1h-1zM414,374h1v1h-1zM153,372h1v3h-1zM310,374h1v2h-1zM157,384h1v3h-1zM118,374h1v2h-1zM166,384h1v2h-1zM241,376h1v2h-1zM227,372h1v2h-1zM94,373h1v2h-1zM336,395h1v2h-1zM321,374h1v1h-1zM126,385h1v2h-1zM212,392h1v1h-1zM19,375h1v2h-1zM414,389h1v3h-1zM240,379h1v2h-1zM192,378h1v1h-1zM26,372h1v1h-1zM275,373h1v2h-1zM351,391h1v2h-1zM87,383h1v1h-1zM14,376h1v1h-1zM350,395h1v2h-1zM55,380h1v3h-1zM384,379h1v1h-1zM213,394h1v1h-1zM229,372h1v2h-1zM109,373h1v2h-1zM345,372h1v1h-1zM323,372h1v2h-1zM315,374h1v1h-1zM252,374h1v3h-1zM197,375h1v1h-1zM433,384h1v2h-1zM162,377h1v2h-1zM249,386h1v1h-1zM205,376h1v2h-1zM242,372h1v2h-1zM165,379h1v1h-1zM387,379h1v3h-1zM69,372h1v1h-1zM148,387h1v3h-1zM334,375h1v3h-1zM363,383h1v1h-1zM185,398h1v2h-1zM317,376h1v3h-1zM145,375h1v1h-1zM390,380h1v2h-1zM203,372h1v2h-1zM192,373h1v3h-1zM292,374h1v2h-1zM197,372h1v1h-1zM213,377h1v2h-1zM142,396h1v1h-1zM229,387h1v2h-1zM156,377h1v3h-1zM245,386h1v2h-1zM302,400h1v1h-1zM208,373h1v1h-1zM319,373h1v2h-1zM382,389h1v1h-1zM315,372h1v2h-1zM299,381h1v2h-1zM57,372h1v1h-1zM170,377h1v2h-1zM283,395h1v1h-1zM392,382h1v1h-1zM89,375h1v2h-1zM68,378h1v3h-1zM205,372h1v1h-1zM85,381h1v3h-1zM141,382h1v3h-1zM456,386h1v1h-1zM403,379h1v1h-1zM330,384h1v2h-1zM388,389h1v1h-1zM223,385h1v1h-1zM345,375h1v1h-1zM75,372h1v3h-1zM210,373h1v1h-1zM100,385h1v1h-1zM70,372h1v3h-1zM298,372h1v2h-1zM260,397h1v2h-1zM309,390h1v3h-1zM120,379h1v2h-1zM332,383h1v3h-1zM58,374h1v2h-1zM29,388h1v2h-1zM80,377h1v2h-1zM374,397h1v2h-1zM123,399h1v1h-1zM104,376h1v1h-1zM150,396h1v3h-1zM196,377h1v1h-1zM156,384h1v2h-1zM433,372h1v1h-1zM315,378h1v3h-1zM380,378h1v1h-1zM322,373h1v2h-1zM118,396h1v2h-1zM354,374h1v1h-1zM449,400h1v3h-1zM207,373h1v3h-1zM200,376h1v1h-1zM145,376h1v1h-1zM149,379h1v2h-1zM69,374h1v2h-1zM390,379h1v3h-1zM273,393h1v1h-1zM76,375h1v2h-1zM333,376h1v2h-1zM249,377h1v1h-1zM39,372h1v3h-1zM27,393h1v3h-1zM205,374h1v1h-1zM196,374h1v2h-1zM176,373h1v3h-1zM244,386h1v2h-1zM444,373h1v2h-1zM438,400h1v3h-1zM310,378h1v3h-1zM319,393h1v1h-1zM125,385h1v2h-1zM137,378h1v1h-1zM18,373h1v3h-1zM120,374h1v3h-1zM92,378h1v2h-1zM40,373h1v2h-1zM193,387h1v2h-1zM325,373h1v2h-1zM288,382h1v1h-1zM362,373h1v1h-1zM432,383h1v1h-1zM114,373h1v2h-1zM56,393h1v3h-1zM321,373h1v2h-1zM208,396h1v3h-1zM166,373h1v1h-1zM91,376h1v2h-1zM117,386h1v1h-1zM206,373h1v2h-1zM127,377h1v1h-1zM74,372h1v2h-1zM177,374h1v2h-1zM178,379h1v1h-1zM41,389h1v2h-1zM384,395h1v1h-1zM97,373h1v2h-1zM307,379h1v2h-1zM112,372h1v3h-1zM288,376h1v1h-1zM301,372h1v1h-1zM358,376h1v2h-1zM35,380h1v2h-1zM328,375h1v3h-1zM28,392h1v2h-1zM83,387h1v2h-1zM305,372h1v1h-1zM167,373h1v3h-1zM223,372h1v1h-1zM433,384h1v2h-1zM202,376h1v1h-1zM86,382h1v1h-1zM139,395h1v1h-1zM406,372h1v2h-1zM131,378h1v3h-1zM253,379h1v1h-1zM200,389h1v2h-1zM87,388h1v2h-1zM201,372h1v3h-1zM331,384h1v1h-1zM334,379h1v2h-1zM220,382h1v2h-1zM430,374h1v3h-1zM309,398h1v3h-1zM26,384h1v1h-1zM257,372h1v1h-1zM183,392h1v3h-1zM236,395h1v2h-1zM415,381h1v2h-1zM61,393h1v3h-1zM280,390h1v3h-1zM148,388h1v3h-1zM229,385h1v2h-1zM419,378h1v2h-1zM179,372h1v2h-1zM292,376h1v1h-1zM240,376h1v3h-1zM96,392h1v3h-1zM159,374h1v3h-1zM363,373h1v2h-1zM34,372h1v3h-1zM355,375h1v1h-1zM433,373h1v1h-1zM167,388h1v2h-1zM279,397h1v2h-1zM139,384h1v3h-1zM173,395h1v2h-1zM126,374h1v1h-1zM211,395h1v1h-1zM176,372h1v3h-1zM251,386h1v1h-1zM310,372h1v1h-1zM163,373h1v3h-1zM48,373h1v2h-1zM226,372h1v2h-1zM50,395h1v1h-1zM427,383h1v2h-1zM340,395h1v2h-1zM123,380h1v1h-1zM134,388h1v1h-1zM372,374h1v2h-1zM165,373h1v2h-1zM134,393h1v2h-1zM89,391h1v1h-1zM270,374h1v1h-1zM256,380h1v2h-1zM449,398h1v2h-1zM275,393h1v3h-1zM177,395h1v2h-1zM140,372h1v1h-1zM55,385h1v3h-1zM193,396h1v2h-1zM258,389h1v3h-1zM262,372h1v3h-1zM201,373h1v2h-1zM293,379h1v1h-1zM234,376h1v1h-1zM382,396h1v2h-1zM177,379h1v2h-1zM356,372h1v1h-1zM154,396h1v1h-1zM411,372h1v3h-1zM106,397h1v2h-1zM159,381h1v1h-1zM164,382h1v2h-1zM321,383h1v2h-1zM40,376h1v2h-1zM115,372h1v3h-1zM26,374h1v2h-1zM145,375h1v2h-1zM364,377h1v3h-1zM267,372h1v2h-1zM382,378h1v3h-1zM287,372h1v1h-1zM69,372h1v1h-1zM27,376h1v3h-1zM432,373h1v3h-1zM216,381h1v2h-1zM445,374h1v3h-1zM64,379h1v2h-1zM72,375h1v1h-1zM176,383h1v2h-1zM63,373h1v2h-1zM31,375h1v2h-1zM154,384h1v1h-1zM47,373h1v1h-1zM251,381h1v1h-1zM419,372h1v2h-1zM167,389h1v2h-1zM192,372h1v1h-1zM341,390h1v3h-1zM35,378h1v3h-1zM198,381h1v2h-1zM208,374h1v2h-1zM219,396h1v3h-1zM40,377h1v2h-1zM230,377h1v3h-1zM116,394h1v2h-1zM235,399h1v1h-1zM263,374h1v1h-1zM305,396h1v1h-1zM207,373h1v2h-1zM266,372h1v1h-1zM360,372h1v1h-1zM225,383h1v2h-1zM18,372h1v1h-1zM71,389h1v3h-1zM433,385h1v2h-1zM329,374h1v3h-1zM305,387h1v2h-1zM162,374h1v1h-1zM333,388h1v2h-1zM118,373h1v1h-1zM19,373h1v3h-1zM333,372h1v2h-1zM383,394h1v2h-1zM20,396h1v3h-1zM181,372h1v1h-1zM271,397h1v3h-1zM410,383h1v1h-1zM90,373h1v2h-1zM293,374h1v1h-1zM406,383h1v2h-1zM125,384h1v1h-1zM339,388h1v1h-1zM444,375h1v3h-1zM100,375h1v2h-1zM454,401h1v3h-1zM233,383h1v2h-1zM65,373h1v2h-1zM243,396h1v1h-1zM108,388h1v1h-1zM57,395h1v3h-1zM385,378h1v2h-1zM236,378h1v2h-1zM119,374h1v2h-1zM412,374h1v1h-1zM117,393h1v1h-1zM437,388h1v1h-1zM108,392h1v1h-1zM379,373h1v2h-1zM344,394h1v3h-1zM120,386h1v3h-1zM214,380h1v3h-1zM426,373h1v1h-1zM349,388h1v2h-1zM246,372h1v2h-1zM326,389h1v1h-1zM101,390h1v3h-1zM347,372h1v3h-1zM426,387h1v2h-1zM164,375h1v2h-1zM349,384h1v2h-1zM145,386h1v1h-1zM374,378h1v1h-1zM360,381h1v2h-1zM328,377h1v3h-1zM462,392h1v1h-1zM149,389h1v1h-1zM452,384h1v3h-1zM192,388h1v1h-1zM442,386h1v2h-1zM298,394h1v2h-1zM205,375h1v1h-1zM251,397h1v1h-1zM136,386h1v2h-1zM282,373h1v3h-1zM258,388h1v2h-1zM171,395h1v3h-1zM49,372h1v2h-1zM78,373h1v2h-1zM308,401h1v2h-1zM410,387h1v2h-1zM283,375h1v2h-1zM276,377h1v2h-1zM326,374h1v1h-1zM287,384h1v2h-1zM194,399h1v2h-1zM219,375h1v1h-1zM318,377h1v1h-1zM303,372h1v2h-1zM59,379h1v3h-1zM166,383h1v3h-1zM194,375h1v1h-1zM214,396h1v2h-1zM379,372h1v2h-1zM429,375h1v3h-1zM313,379h1v2h-1zM448,377h1v3h-1zM209,379h1v1h-1zM14,375h1v3h-1zM85,378h1v3h-1zM250,377h1v3h-1zM202,400h1v1h-1zM112,385h1v3h-1zM184,375h1v2h-1zM121,372h1v2h-1zM405,373h1v3h-1zM208,372h1v3h-1zM345,378h1v2h-1zM427,395h1v2h-1zM166,374h1v1h-1zM58,384h1v1h-1zM189,374h1v3h-1zM48,393h1v3h-1zM105,386h1v3h-1zM112,385h1v2h-1zM49,378h1v1h-1zM177,374h1v1h-1zM148,374h1v3h-1zM29,396h1v3h-1zM80,398h1v3h-1zM394,374h1v1h-1zM303,372h1v2h-1zM302,372h1v1h-1zM393,400h1v2h-1zM163,380h1v1h-1zM48,377h1v2h-1zM313,400h1v2h-1zM370,373h1v1h-1zM273,399h1v2h-1zM16,374h1v2h-1zM72,374h1v3h-1zM416,389h1v2h-1zM148,378h1v1h-1zM403,386h1v2h-1zM73,372h1v1h-1zM139,372h1v1h-1zM44,373h1v3h-1zM133,373h1v3h-1zM157,373h1v2h-1zM58,381h1v1h-1zM377,393h1v2h-1zM263,373h1v2h-1zM10,396h1v1h-1zM366,391h1v1h-1zM217,379h1v2h-1zM244,394h1v2h-1zM352,374h1v3h-1zM214,385h1v1h-1zM236,374h1v2h-1zM308,392h1v1h-1zM426,372h1v2h-1zM436,372h1v3h-1zM436,373h1v2h-1zM287,376h1v1h-1zM49,378h1v2h-1zM371,386h1v1h-1zM88,373h1v1h-1zM34,372h1v3h-1zM53,374h1v1h-1zM293,386h1v3h-1zM338,373h1v2h-1zM37,375h1v1h-1zM194,379h1v1h-1zM313,372h1v3h-1zM340,376h1v2h-1zM32,385h1v2h-1zM340,373h1v2h-1zM42,395h1v2h-1zM19,372h1v2h-1zM142,389h1v3h-1zM121,373h1v2h-1zM116,376h1v3h-1zM338,373h1v2h-1zM88,375h1v1h-1zM126,378h1v1h-1zM52,373h1v2h-1zM93,385h1v1h-1zM63,372h1v1h-1zM277,380h1v3h-1zM465,399h1v2h-1zM178,393h1v1h-1zM448,372h1v1h-1zM459,395h1v3h-1zM450,374h1v3h-1zM357,379h1v2h-1zM254,395h1v1h-1zM100,377h1v1h-1zM163,377h1v2h-1zM390,379h1v1h-1zM233,372h1v2h-1zM233,375h1v1h-1zM71,391h1v2h-1zM452,383h1v1h-1zM330,373h1v1h-1zM175,376h1v3h-1zM228,374h1v1h-1zM206,372h1v1h-1zM300,372h1v2h-1zM238,372h1v2h-1zM273,373h1v1h-1zM239,391h1v3h-1zM325,381h1v2h-1zM46,372h1v1h-1zM150,375h1v2h-1zM136,372h1v1h-1zM75,383h1v2h-1zM121,372h1v1h-1zM385,384h1v1h-1zM48,383h1v2h-1zM156,386h1v3h-1zM309,386h1v2h-1zM50,372h1v2h-1zM262,381h1v1h-1zM301,398h1v1h-1zM348,389h1v1h-1zM99,383h1v3h-1zM242,400h1v2h-1zM435,372h1v3h-1zM59,377h1v2h-1zM358,387h1v1h-1zM292,372h1v1h-1zM332,395h1v3h-1zM443,397h1v1h-1zM351,382h1v1h-1zM427,372h1v3h-1zM398,375h1v1h-1zM179,373h1v1h-1zM101,373h1v2h-1zM123,394h1v2h-1zM172,380h1v2h-1zM72,393h1v1h-1zM264,372h1v2h-1zM26,373h1v2h-1zM202,393h1v1h-1zM402,385h1v3h-1zM351,392h1v1h-1zM285,399h1v1h-1zM342,373h1v2h-1zM97,387h1v2h-1zM188,380h1v1h-1zM82,375h1v3h-1zM431,374h1v2h-1zM415,384h1v3h-1zM371,387h1v2h-1zM457,397h1v1h-1zM177,372h1v1h-1zM228,375h1v2h-1zM359,374h1v3h-1zM416,373h1v2h-1zM39,383h1v2h-1zM438,396h1v3h-1zM316,372h1v3h-1zM299,395h1v1h-1zM245,376h1v1h-1zM21,395h1v1h-1zM169,372h1v2h-1zM35,373h1v1h-1zM265,372h1v2h-1zM136,389h1v1h-1zM304,381h1v1h-1zM402,378h1v3h-1zM252,373h1v1h-1zM113,386h1v1h-1zM154,373h1v3h-1zM339,374h1v2h-1zM22,395h1v2h-1zM105,398h1v1h-1zM31,398h1v3h-1zM93,394h1v3h-1zM427,372h1v1h-1zM196,377h1v1h-1zM309,372h1v1h-1zM258,389h1v1h-1zM368,395h1v1h-1zM96,375h1v1h-1zM161,397h1v2h-1zM353,372h1v1h-1zM341,373h1v2h-1zM286,372h1v1h-1zM332,395h1v3h-1zM361,383h1v1h-1zM116,377h1v1h-1zM343,379h1v2h-1zM318,374h1v2h-1zM211,384h1v1h-1zM291,380h1v1h-1zM368,372h1v1h-1zM386,383h1v1h-1zM314,388h1v3h-1zM282,378h1v1h-1zM157,381h1v3h-1zM59,375h1v2h-1zM149,390h1v2h-1zM96,380h1v1h-1zM223,373h1v1h-1zM308,377h1v3h-1zM379,392h1v1h-1zM36,372h1v1h-1zM180,374h1v1h-1zM252,374h1v1h-1zM151,400h1v1h-1zM425,372h1v1h-1zM292,374h1v1h-1zM233,378h1v2h-1zM311,384h1v1h-1zM381,372h1v3h-1zM253,395h1v2h-1zM29,373h1v3h-1zM231,376h1v2h-1zM293,379h1v3h-1zM111,378h1v2h-1zM68,372h1v1h-1zM338,384h1v2h-1zM263,389h1v2h-1zM446,372h1v1h-1zM201,375h1v1h-1zM229,376h1v3h-1zM203,373h1v2h-1zM36,397h1v1h-1zM363,374h1v2h-1zM65,398h1v1h-1zM364,385h1v3h-1zM389,373h1v1h-1zM391,388h1v3h-1zM334,400h1v2h-1zM33,391h1v1h-1zM129,372h1v2h-1zM407,396h1v2h-1zM158,381h1v2h-1zM160,372h1v3h-1zM71,372h1v2h-1zM428,373h1v1h-1zM338,373h1v2h-1zM254,373h1v3h-1zM127,392h1v2h-1zM69,378h1v2h-1zM434,396h1v1h-1zM260,397h1v1h-1zM300,384h1v3h-1zM244,373h1v3h-1zM430,376h1v1h-1zM181,400h1v2h-1zM212,372h1v3h-1zM222,372h1v2h-1zM195,392h1v1h-1zM9,382h1v3h-1zM190,373h1v3h-1zM340,378h1v2h-1zM448,386h1v1h-1zM169,374h1v2h-1zM392,394h1v2h-1zM122,387h1v1h-1zM74,373h1v2h-1zM147,376h1v2h-1zM382,397h1v2h-1zM154,372h1v2h-1zM229,395h1v2h-1zM235,372h1v1h-1zM321,375h1v2h-1zM138,376h1v3h-1zM124,388h1v3h-1zM263,380h1v1h-1zM423,372h1v2h-1zM398,389h1v2h-1zM211,372h1v2h-1zM48,372h1v3h-1zM31,375h1v2h-1zM407,390h1v3h-1zM156,382h1v1h-1zM447,384h1v2h-1zM373,372h1v3h-1zM313,374h1v1h-1zM190,375h1v1h-1zM123,394h1v1h-1zM104,372h1v3h-1zM435,373h1v1h-1zM259,382h1v1h-1zM112,376h1v1h-1zM211,372h1v2h-1zM131,376h1v1h-1zM168,374h1v2h-1zM10,383h1v1h-1zM150,373h1v3h-1zM349,389h1v3h-1zM205,374h1v1h-1zM168,372h1v3h-1zM104,374h1v1h-1zM50,377h1v2h-1zM320,380h1v2h-1zM214,373h1v1h-1zM82,375h1v2h-1zM128,373h1v3h-1zM418,377h1v1h-1zM396,373h1v1h-1zM86,388h1v1h-1zM283,397h1v2h-1zM133,372h1v2h-1zM405,396h1v2h-1zM111,372h1v1h-1zM103,379h1v3h-1zM414,398h1v1h-1zM318,375h1v1h-1zM283,373h1v2h-1zM389,376h1v1h-1zM378,394h1v2h-1zM355,386h1v3h-1zM438,381h1v1h-1zM342,373h1v1h-1zM271,389h1v2h-1zM212,384h1v2h-1zM210,378h1v2h-1zM319,379h1v1h-1zM186,375h1v1h-1zM377,385h1v1h-1zM128,387h1v3h-1zM127,395h1v1h-1zM45,380h1v3h-1zM41,376h1v2h-1zM147,386h1v2h-1zM192,379h1v1h-1zM144,400h1v1h-1zM405,396h1v1h-1zM356,374h1v1h-1zM95,375h1v2h-1zM280,372h1v2h-1zM394,397h1v1h-1zM272,378h1v1h-1zM315,383h1v3h-1zM182,397h1v1h-1zM358,372h1v2h-1zM448,382h1v1h-1zM331,386h1v1h-1zM93,376h1v2h-1zM140,384h1v2h-1zM351,379h1v3h-1zM410,384h1v1h-1zM368,398h1v2h-1zM120,372h1v1h-1zM258,373h1v2h-1zM143,374h1v1h-1zM170,390h1v1h-1zM248,374h1v2h-1zM163,397h1v2h-1zM420,380h1v3h-1zM179,374h1v1h-1zM49,372h1v3h-1zM437,372h1v2h-1zM98,398h1v1h-1zM38,373h1v1h-1zM263,373h1v3h-1zM331,389h1v1h-1zM99,391h1v1h-1zM372,372h1v1h-1zM286,377h1v2h-1zM245,374h1v1h-1zM231,379h1v3h-1zM41,379h1v1h-1zM322,376h1v3h-1zM263,387h1v2h-1zM394,374h1v1h-1zM24,374h1v3h-1zM85,373h1v3h-1zM396,374h1v1h-1zM205,373h1v1h-1zM54,390h1v2h-1zM164,373h1v2h-1zM96,378h1v3h-1zM344,391h1v3h-1zM371,372h1v1h-1zM59,373h1v2h-1zM199,383h1v2h-1zM75,373h1v2h-1zM382,373h1v2h-1zM126,385h1v1h-1zM211,375h1v1h-1zM334,379h1v3h-1zM319,375h1v1h-1zM235,374h1v2h-1zM27,380h1v2h-1zM141,376h1v1h-1zM287,396h1v2h-1zM229,372h1v2h-1zM300,392h1v1h-1zM78,377h1v2h-1zM309,372h1v2h-1zM50,393h1v1h-1zM284,373h1v3h-1zM133,372h1v2h-1zM177,394h1v2h-1zM326,391h1v1h-1zM293,377h1v2h-1zM232,396h1v1h-1zM380,373h1v3h-1zM407,379h1v2h-1zM30,382h1v1h-1zM448,373h1v2h-1zM284,394h1v3h-1zM369,373h1v2h-1zM221,373h1v3h-1zM335,375h1v3h-1zM318,378h1v1h-1zM290,373h1v2h-1zM456,391h1v1h-1zM156,380h1v3h-1zM121,375h1v3h-1zM413,394h1v2h-1zM371,375h1v2h-1zM323,372h1v2h-1zM441,389h1v2h-1zM242,380h1v1h-1zM352,382h1v1h-1zM175,374h1v1h-1zM300,379h1v1h-1zM361,373h1v2h-1zM292,373h1v1h-1zM194,374h1v1h-1zM101,377h1v2h-1zM44,395h1v2h-1zM125,374h1v2h-1zM175,375h1v2h-1zM118,374h1v2h-1zM103,372h1v2h-1zM429,374h1v2h-1zM24,380h1v3h-1zM370,394h1v2h-1zM112,373h1v1h-1zM284,390h1v2h-1zM196,386h1v2h-1zM364,373h1v1h-1zM10,397h1v1h-1zM273,373h1v1h-1zM244,376h1v2h-1zM424,372h1v2h-1zM41,386h1v3h-1zM94,375h1v3h-1zM407,372h1v3h-1zM100,373h1v3h-1zM167,372h1v3h-1zM327,372h1v1h-1zM226,381h1v2h-1zM271,380h1v1h-1zM306,395h1v2h-1zM286,379h1v1h-1zM249,372h1v2h-1zM192,375h1v3h-1zM297,377h1v1h-1zM432,372h1v1h-1zM441,384h1v2h-1zM248,372h1v1h-1zM201,374h1v1h-1zM282,372h1v2h-1zM362,372h1v1h-1zM241,374h1v2h-1zM435,382h1v2h-1zM139,375h1v1h-1zM167,382h1v3h-1zM109,386h1v3h-1zM442,373h1v2h-1zM344,400h1v2h-1zM110,399h1v1h-1zM209,398h1v2h-1zM96,380h1v2h-1zM143,380h1v1h-1zM34,372h1v3h-1zM235,378h1v2h-1zM65,393h1v1h-1zM385,383h1v2h-1zM128,397h1v3h-1zM116,372h1v1h-1zM254,391h1v3h-1zM50,395h1v1h-1zM181,381h1v3h-1zM185,394h1v2h-1zM237,373h1v1h-1zM285,375h1v3h-1zM123,376h1v1h-1zM45,374h1v1h-1zM78,378h1v1h-1zM46,372h1v1h-1zM436,396h1v1h-1zM138,384h1v1h-1zM427,382h1v1h-1zM25,372h1v1h-1zM299,400h1v2h-1zM371,374h1v1h-1zM13,379h1v2h-1zM246,372h1v3h-1zM200,373h1v1h-1zM265,382h1v2h-1zM353,382h1v1h-1zM131,378h1v1h-1zM15,392h1v1h-1zM329,391h1v1h-1zM72,385h1v3h-1zM401,373h1v2h-1zM428,401h1v3h-1zM127,385h1v2h-1zM309,374h1v2h-1zM374,395h1v2h-1zM430,379h1v1h-1zM228,376h1v1h-1zM97,373h1v3h-1zM13,376h1v1h-1zM145,380h1v2h-1zM429,372h1v3h-1zM416,386h1v2h-1zM145,378h1v2h-1zM432,373h1v3h-1zM204,390h1v2h-1zM269,397h1v1h-1zM292,378h1v2h-1zM64,384h1v1h-1zM263,386h1v3h-1zM436,398h1v2h-1zM68,372h1v3h-1zM211,375h1v2h-1zM448,373h1v1h-1zM64,375h1v2h-1zM301,383h1v2h-1zM321,383h1v3h-1zM60,373h1v1h-1zM308,374h1v3h-1zM68,394h1v2h-1zM12,377h1v2h-1zM258,401h1v1h-1zM354,375h1v2h-1zM112,373h1v2h-1zM251,374h1v2h-1zM397,375h1v1h-1zM208,372h1v2h-1zM98,378h1v1h-1zM417,372h1v3h-1zM93,373h1v2h-1zM221,388h1v1h-1zM258,392h1v1h-1zM414,374h1v3h-1zM336,397h1v3h-1zM80,374h1v1h-1zM322,372h1v1h-1zM154,390h1v1h-1zM118,388h1v1h-1zM158,383h1v2h-1zM350,372h1v1h-1zM152,372h1v1h-1zM441,379h1v2h-1zM260,401h1v2h-1zM251,372h1v2h-1zM48,393h1v2h-1zM219,378h1v2h-1zM335,377h1v1h-1zM279,374h1v2h-1zM319,372h1v1h-1zM186,386h1v1h-1zM439,383h1v1h-1zM155,372h1v1h-1zM15,390h1v1h-1zM312,373h1v2h-1zM317,374h1v1h-1zM264,374h1v2h-1zM50,382h1v1h-1zM254,374h1v2h-1zM424,385h1v3h-1zM255,394h1v3h-1zM224,379h1v2h-1zM377,386h1v2h-1zM199,375h1v2h-1zM297,372h1v3h-1zM429,388h1v2h-1zM243,377h1v1h-1zM160,393h1v3h-1zM267,388h1v3h-1zM247,376h1v3h-1zM375,380h1v1h-1zM76,387h1v3h-1zM354,373h1v3h-1zM343,390h1v1h-1zM421,400h1v1h-1zM325,374h1v1h-1zM162,372h1v2h-1zM35,396h1v2h-1zM237,377h1v1h-1zM359,377h1v2h-1zM310,372h1v3h-1zM101,384h1v1h-1zM103,377h1v2h-1zM297,380h1v2h-1zM37,385h1v2h-1zM257,375h1v3h-1zM89,389h1v1h-1zM418,373h1v2h-1zM15,393h1v1h-1zM374,376h1v3h-1zM240,396h1v2h-1zM78,385h1v2h-1zM440,375h1v3h-1zM439,372h1v1h-1zM257,393h1v2h-1zM202,382h1v1h-1zM348,379h1v1h-1zM33,372h1v1h-1zM202,377h1v1h-1zM435,372h1v3h-1zM380,386h1v1h-1zM237,390h1v2h-1zM380,373h1v2h-1zM339,377h1v1h-1zM166,377h1v2h-1zM463,394h1v1h-1zM340,372h1v1h-1zM337,372h1v1h-1zM49,374h1v2h-1zM360,387h1v2h-1zM178,397h1v1h-1zM231,372h1v2h-1zM288,372h1v3h-1zM350,374h1v3h-1zM171,375h1v3h-1zM85,398h1v2h-1zM382,388h1v1h-1zM385,393h1v2h-1zM379,381h1v1h-1zM204,373h1v2h-1zM77,377h1v1h-1zM157,385h1v3h-1zM177,393h1v2h-1zM407,382h1v2h-1zM302,401h1v1h-1zM263,379h1v2h-1zM356,374h1v2h-1zM309,372h1v3h-1zM113,378h1v2h-1zM305,382h1v1h-1zM438,372h1v2h-1zM33,394h1v3h-1zM90,372h1v2h-1zM442,399h1v2h-1zM131,372h1v3h-1zM203,389h1v1h-1zM293,372h1v3h-1zM142,401h1v2h-1zM385,383h1v2h-1zM97,375h1v3h-1zM409,377h1v1h-1zM168,377h1v1h-1zM191,375h1v2h-1zM335,372h1v2h-1zM246,376h1v3h-1zM147,398h1v1h-1zM265,383h1v2h-1zM351,374h1v2h-1zM276,373h1v1h-1zM259,373h1v2h-1zM445,390h1v1h-1zM279,373h1v2h-1zM205,380h1v1h-1zM16,372h1v1h-1zM115,381h1v1h-1zM175,376h1v1h-1zM122,381h1v2h-1zM409,386h1v1h-1zM365,378h1v1h-1zM335,380h1v2h-1zM360,374h1v2h-1zM270,372h1v3h-1zM260,388h1v2h-1zM95,376h1v3h-1zM355,372h1v2h-1zM23,387h1v1h-1zM93,381h1v1h-1zM428,373h1v1h-1zM32,378h1v1h-1zM343,372h1v1h-1zM296,380h1v3h-1zM344,395h1v1h-1zM237,372h1v2h-1zM32,398h1v1h-1zM383,372h1v2h-1zM74,382h1v1h-1zM359,385h1v3h-1zM131,376h1v1h-1zM62,383h1v2h-1zM277,375h1v1h-1zM145,392h1v2h-1zM430,388h1v1h-1zM18,380h1v2h-1zM183,372h1v2h-1zM217,372h1v1h-1zM333,384h1v1h-1zM72,379h1v2h-1zM361,380h1v2h-1zM57,372h1v1h-1zM244,373h1v3h-1zM283,394h1v3h-1zM429,395h1v1h-1zM77,372h1v1h-1zM56,375h1v2h-1zM450,397h1v1h-1zM20,384h1v2h-1zM272,378h1v2h-1zM350,372h1v2h-1zM434,373h1v2h-1zM95,375h1v1h-1zM434,373h1v3h-1zM148,372h1v2h-1zM301,374h1v1h-1zM419,381h1v2h-1zM365,372h1v1h-1zM277,376h1v1h-1zM147,373h1v3h-1zM322,377h1v2h-1zM37,372h1v2h-1zM161,375h1v2h-1zM165,381h1v1h-1zM222,376h1v2h-1zM399,373h1v1h-1zM145,374h1v2h-1zM249,375h1v2h-1zM407,372h1v2h-1zM116,377h1v2h-1zM232,377h1v2h-1zM101,372h1v3h-1zM377,378h1v1h-1zM392,383h1v1h-1zM205,397h1v1h-1zM227,376h1v3h-1zM96,373h1v3h-1zM314,378h1v1h-1zM131,377h1v2h-1zM69,375h1v3h-1zM98,372h1v2h-1zM393,373h1v3h-1zM142,397h1v1h-1zM283,375h1v1h-1zM421,397h1v1h-1zM322,383h1v2h-1zM132,385h1v1h-1zM290,378h1v1h-1zM368,372h1v2h-1zM217,379h1v3h-1zM176,373h1v2h-1zM101,376h1v1h-1zM80,372h1v2h-1zM146,391h1v1h-1zM99,372h1v2h-1zM392,380h1v1h-1zM379,372h1v3h-1zM113,400h1v3h-1zM398,372h1v1h-1zM52,374h1v1h-1zM317,373h1v1h-1zM402,394h1v1h-1zM284,372h1v1h-1zM324,374h1v2h-1zM422,374h1v1h-1zM126,385h1v1h-1zM431,388h1v2h-1zM391,375h1v3h-1zM14,384h1v2h-1zM449,387h1v1h-1zM277,381h1v1h-1zM376,382h1v2h-1zM332,396h1v1h-1zM301,372h1v2h-1zM34,373h1v3h-1zM201,384h1v2h-1zM305,382h1v2h-1zM198,380h1v1h-1zM97,388h1v2h-1zM344,374h1v1h-1zM140,372h1v2h-1zM182,390h1v3h-1zM211,383h1v2h-1zM159,373h1v3h-1zM220,380h1v1h-1zM206,372h1v3h-1zM339,375h1v1h-1zM353,386h1v1h-1zM435,373h1v3h-1zM85,395h1v1h-1zM391,380h1v1h-1zM81,373h1v3h-1zM385,374h1v2h-1zM302,373h1v1h-1zM296,400h1v2h-1zM227,375h1v1h-1zM443,395h1v1h-1zM397,377h1v1h-1zM192,397h1v1h-1zM61,372h1v2h-1zM438,387h1v2h-1zM119,378h1v1h-1zM281,385h1v2h-1zM22,394h1v1h-1zM55,398h1v3h-1zM223,393h1v2h-1zM22,385h1v1h-1zM376,377h1v2h-1zM35,373h1v2h-1zM268,372h1v3h-1zM269,398h1v2h-1zM350,372h1v2h-1zM146,374h1v2h-1zM348,380h1v1h-1zM33,373h1v3h-1zM35,376h1v3h-1zM345,375h1v1h-1zM299,372h1v2h-1zM260,384h1v1h-1zM15,372h1v2h-1zM444,384h1v1h-1zM145,373h1v2h-1zM349,372h1v3h-1zM136,395h1v3h-1zM362,399h1v3h-1zM346,374h1v1h-1zM229,383h1v2h-1zM320,384h1v2h-1zM388,378h1v3h-1zM81,373h1v2h-1zM29,372h1v2h-1zM212,391h1v2h-1zM170,378h1v2h-1zM399,395h1v2h-1zM113,393h1v1h-1zM251,397h1v2h-1zM329,382h1v2h-1zM398,376h1v2h-1zM373,375h1v2h-1zM314,381h1v3h-1zM77,374h1v1h-1zM220,400h1v2h-1zM159,372h1v1h-1zM96,384h1v1h-1zM35,374h1v2h-1zM231,372h1v1h-1zM183,395h1v1h-1zM213,373h1v3h-1zM118,392h1v2h-1zM286,385h1v1h-1zM120,373h1v1h-1zM431,381h1v2h-1zM64,394h1v1h-1zM275,373h1v2h-1zM245,380h1v2h-1zM249,377h1v1h-1zM226,380h1v2h-1zM377,372h1v1h-1zM280,372h1v1h-1zM40,383h1v3h-1zM463,395h1v1h-1zM386,372h1v1h-1zM446,375h1v3h-1zM323,389h1v2h-1zM385,374h1v3h-1zM428,391h1v3h-1zM328,376h1v2h-1zM75,372h1v2h-1zM452,398h1v2h-1zM63,373h1v2h-1zM400,372h1v1h-1zM191,372h1v1h-1zM279,396h1v2h-1zM68,375h1v1h-1zM408,372h1v1h-1zM404,394h1v1h-1zM242,376h1v2h-1zM185,393h1v1h-1zM346,375h1v1h-1zM361,374h1v2h-1zM403,372h1v2h-1zM374,374h1v3h-1zM206,385h1v2h-1zM128,394h1v2h-1zM429,381h1v2h-1zM186,386h1v3h-1zM208,376h1v3h-1zM439,396h1v2h-1zM286,397h1v3h-1zM254,372h1v3h-1zM374,373h1v2h-1zM378,375h1v1h-1zM108,390h1v3h-1zM32,386h1v1h-1zM281,372h1v3h-1zM162,384h1v2h-1zM209,379h1v1h-1zM321,376h1v2h-1zM88,372h1v1h-1zM282,388h1v1h-1zM59,380h1v2h-1zM177,395h1v1h-1zM307,372h1v2h-1zM139,374h1v1h-1zM294,389h1v2h-1zM152,374h1v3h-1zM241,375h1v1h-1zM70,374h1v3h-1zM207,372h1v1h-1zM33,372h1v3h-1zM154,383h1v1h-1zM29,372h1v1h-1zM90,384h1v1h-1zM306,374h1v2h-1zM223,385h1v2h-1zM419,382h1v3h-1zM99,374h1v2h-1zM73,376h1v1h-1zM46,388h1v2h-1zM205,374h1v3h-1zM142,379h1v2h-1zM252,391h1v3h-1zM357,394h1v2h-1zM188,373h1v2h-1zM441,372h1v1h-1zM75,374h1v1h-1zM125,398h1v2h-1zM343,372h1v2h-1zM449,374h1v2h-1zM96,379h1v1h-1zM397,401h1v1h-1zM366,376h1v1h-1zM265,375h1v2h-1zM387,375h1v1h-1zM395,399h1v1h-1zM236,375h1v3h-1zM121,396h1v1h-1zM413,376h1v2h-1zM340,400h1v3h-1zM58,373h1v1h-1zM114,372h1v1h-1zM327,387h1v1h-1zM37,374h1v1h-1zM442,379h1v1h-1zM158,376h1v3h-1zM315,375h1v1h-1zM53,392h1v3h-1zM417,373h1v2h-1zM281,373h1v2h-1zM195,372h1v2h-1zM136,379h1v2h-1zM162,386h1v2h-1zM128,398h1v2h-1zM344,375h1v2h-1zM178,386h1v2h-1zM50,398h1v1h-1zM25,372h1v3h-1zM33,373h1v2h-1zM45,397h1v1h-1zM95,379h1v2h-1zM20,393h1v2h-1zM285,373h1v2h-1zM318,375h1v3h-1zM273,373h1v2h-1zM48,400h1v2h-1zM353,372h1v1h-1zM143,389h1v2h-1zM194,375h1v2h-1zM127,372h1v1h-1zM439,377h1v2h-1zM316,374h1v1h-1zM223,390h1v1h-1zM355,380h1v1h-1zM279,378h1v2h-1zM164,372h1v2h-1zM16,377h1v2h-1zM193,399h1v3h-1zM184,372h1v1h-1zM45,374h1v2h-1zM110,376h1v1h-1zM117,372h1v2h-1zM328,372h1v2h-1zM259,384h1v1h-1zM170,379h1v2h-1zM341,374h1v3h-1zM381,387h1v1h-1zM363,372h1v1h-1zM259,372h1v1h-1zM155,378h1v2h-1zM399,397h1v2h-1zM294,394h1v2h-1zM179,392h1v2h-1zM330,373h1v1h-1zM434,372h1v3h-1zM64,372h1v2h-1zM248,376h1v2h-1zM197,385h1v2h-1zM13,372h1v1h-1zM79,374h1v2h-1zM370,372h1v2h-1zM337,372h1v1h-1zM442,378h1v2h-1zM335,382h1v1h-1zM314,401h1v1h-1zM49,375h1v1h-1zM416,392h1v2h-1zM50,372h1v2h-1zM256,375h1v2h-1zM191,379h1v1h-1zM199,372h1v2h-1zM27,373h1v1h-1zM45,385h1v2h-1zM54,378h1v3h-1zM93,374h1v1h-1zM342,373h1v2h-1zM275,373h1v1h-1zM292,390h1v3h-1zM284,373h1v1h-1zM447,380h1v1h-1zM35,375h1v2h-1zM23,375h1v2h-1zM123,374h1v1h-1zM432,375h1v3h-1zM373,374h1v1h-1zM20,373h1v3h-1zM211,375h1v2h-1zM24,390h1v1h-1zM428,398h1v1h-1zM444,373h1v1h-1zM42,372h1v3h-1zM259,397h1v1h-1zM354,384h1v2h-1zM216,373h1v1h-1zM353,373h1v1h-1zM168,375h1v1h-1zM309,388h1v1h-1zM172,394h1v3h-1zM446,376h1v2h-1zM220,375h1v2h-1zM302,401h1v2h-1zM412,372h1v1h-1zM267,392h1v1h-1zM13,397h1v3h-1zM367,372h1v2h-1zM220,382h1v3h-1zM414,374h1v1h-1zM185,378h1v2h-1zM52,396h1v1h-1zM236,373h1v2h-1zM380,384h1v1h-1zM38,378h1v1h-1zM66,372h1v1h-1zM447,372h1v3h-1zM433,390h1v3h-1zM198,380h1v3h-1zM407,373h1v2h-1zM185,384h1v1h-1zM59,382h1v2h-1zM343,372h1v1h-1zM351,388h1v1h-1zM353,374h1v1h-1zM344,393h1v3h-1zM301,372h1v1h-1zM111,380h1v2h-1zM240,398h1v3h-1zM155,387h1v2h-1zM283,385h1v1h-1zM238,373h1v2h-1zM201,373h1v2h-1zM220,377h1v3h-1zM120,374h1v1h-1zM144,372h1v1h-1zM206,396h1v3h-1zM193,372h1v1h-1zM407,373h1v1h-1zM47,376h1v1h-1zM80,377h1v3h-1zM307,397h1v2h-1zM109,375h1v1h-1zM159,375h1v1h-1zM61,379h1v2h-1zM360,377h1v1h-1zM48,372h1v2h-1zM353,373h1v2h-1zM366,385h1v2h-1zM138,372h1v1h-1zM203,382h1v1h-1zM183,384h1v1h-1zM259,378h1v1h-1zM161,389h1v3h-1zM91,383h1v3h-1zM277,378h1v2h-1zM341,372h1v2h-1zM265,398h1v1h-1zM135,394h1v2h-1zM198,399h1v3h-1zM123,372h1v2h-1zM285,373h1v1h-1zM411,373h1v2h-1zM409,377h1v2h-1zM135,373h1v2h-1zM237,388h1v2h-1zM50,373h1v2h-1zM214,374h1v1h-1zM113,390h1v1h-1zM43,393h1v1h-1zM201,372h1v1h-1zM319,377h1v3h-1zM99,388h1v2h-1zM193,375h1v1h-1zM43,388h1v2h-1zM100,372h1v2h-1zM107,372h1v1h-1zM390,372h1v1h-1zM172,374h1v2h-1zM237,392h1v3h-1zM283,401h1v2h-1zM154,373h1v3h-1zM246,381h1v2h-1zM234,399h1v3h-1zM252,384h1v2h-1zM236,384h1v1h-1zM40,396h1v2h-1zM145,377h1v1h-1zM145,375h1v2h-1zM387,372h1v2h-1zM353,373h1v2h-1zM75,383h1v1h-1zM312,374h1v1h-1zM131,380h1v1h-1zM456,396h1v1h-1zM363,372h1v2h-1zM180,379h1v1h-1zM262,384h1v3h-1zM357,397h1v2h-1zM73,373h1v1h-1zM182,376h1v2h-1zM196,391h1v3h-1zM392,372h1v2h-1zM324,388h1v2h-1zM50,380h1v2h-1zM185,396h1v2h-1zM306,374h1v2h-1zM369,385h1v1h-1zM378,386h1v1h-1zM430,372h1v2h-1zM70,374h1v2h-1zM243,373h1v2h-1zM78,376h1v1h-1zM373,376h1v2h-1zM136,373h1v2h-1zM443,372h1v3h-1zM206,385h1v3h-1zM184,401h1v2h-1zM360,372h1v2h-1zM438,378h1v1h-1zM83,396h1v2h-1zM17,391h1v1h-1zM230,387h1v3h-1zM245,394h1v1h-1zM294,376h1v2h-1zM261,390h1v1h-1zM259,384h1v3h-1zM416,376h1v2h-1zM415,377h1v3h-1zM136,372h1v3h-1zM254,376h1v2h-1zM421,373h1v1h-1zM340,372h1v3h-1zM272,372h1v3h-1zM319,374h1v1h-1zM236,387h1v1h-1zM169,376h1v1h-1zM323,384h1v1h-1zM21,392h1v1h-1zM303,392h1v1h-1zM238,372h1v2h-1zM262,385h1v2h-1zM423,372h1v1h-1zM408,379h1v2h-1zM194,397h1v2h-1zM273,373h1v2h-1zM263,374h1v3h-1zM375,378h1v2h-1zM262,391h1v1h-1zM15,380h1v2h-1zM241,375h1v3h-1zM80,377h1v1h-1zM50,373h1v2h-1zM190,388h1v3h-1zM94,373h1v1h-1zM363,382h1v3h-1zM129,375h1v2h-1zM249,394h1v1h-1zM84,386h1v2h-1zM30,376h1v1h-1zM366,382h1v2h-1zM103,380h1v2h-1zM98,392h1v3h-1zM161,373h1v1h-1zM332,372h1v1h-1zM120,374h1v3h-1zM215,378h1v1h-1zM425,395h1v3h-1zM46,377h1v1h-1zM142,372h1v1h-1zM212,372h1v1h-1zM104,376h1v3h-1zM253,390h1v2h-1zM398,375h1v1h-1zM300,386h1v1h-1zM174,386h1v2h-1zM192,399h1v1h-1zM441,375h1v2h-1zM186,373h1v1h-1zM200,401h1v2h-1zM35,391h1v1h-1zM276,386h1v2h-1zM249,372h1v1h-1zM25,372h1v1h-1zM302,372h1v2h-1zM207,372h1v2h-1zM122,395h1v2h-1zM316,378h1v1h-1zM171,378h1v1h-1zM163,374h1v2h-1zM365,379h1v3h-1zM75,372h1v1h-1zM303,372h1v3h-1zM357,381h1v2h-1zM254,372h1v1h-1zM116,373h1v1h-1zM40,372h1v1h-1zM76,386h1v3h-1zM367,372h1v3h-1zM137,401h1v1h-1zM156,373h1v2h-1zM148,387h1v2h-1zM280,379h1v2h-1zM137,372h1v3h-1zM306,378h1v2h-1zM196,397h1v3h-1zM289,381h1v3h-1zM258,384h1v2h-1zM358,372h1v1h-1zM47,372h1v2h-1zM435,397h1v1h-1zM36,383h1v1h-1zM203,372h1v2h-1zM317,389h1v2h-1zM50,373h1v1h-1zM143,380h1v2h-1zM301,390h1v1h-1zM358,377h1v2h-1zM156,396h1v1h-1zM401,382h1v2h-1zM56,392h1v1h-1zM185,373h1v3h-1zM153,372h1v1h-1zM75,379h1v3h-1zM248,373h1v3h-1zM206,373h1v1h-1zM387,377h1v1h-1zM123,387h1v2h-1zM25,381h1v1h-1zM112,376h1v1h-1zM246,392h1v2h-1zM289,383h1v2h-1zM177,380h1v1h-1zM122,387h1v1h-1zM324,392h1v1h-1zM157,397h1v1h-1zM434,377h1v2h-1zM64,375h1v1h-1zM165,373h1v1h-1zM272,381h1v2h-1zM100,374h1v2h-1zM316,372h1v1h-1zM230,384h1v1h-1zM106,391h1v2h-1zM160,389h1v3h-1zM263,395h1v2h-1zM306,397h1v2h-1zM224,372h1v1h-1zM341,377h1v1h-1zM100,380h1v1h-1zM369,372h1v2h-1zM360,393h1v2h-1zM324,387h1v2h-1zM259,387h1v3h-1zM343,374h1v3h-1zM438,372h1v1h-1zM173,372h1v3h-1zM409,396h1v1h-1zM72,373h1v2h-1zM159,398h1v2h-1zM278,377h1v1h-1zM381,373h1v3h-1zM152,373h1v1h-1zM21,386h1v1h-1zM207,372h1v1h-1zM196,381h1v3h-1zM415,378h1v2h-1zM194,384h1v2h-1zM91,382h1v1h-1zM149,380h1v3h-1zM207,381h1v2h-1zM271,372h1v1h-1zM157,375h1v1h-1zM154,388h1v1h-1zM297,372h1v2h-1zM319,372h1v1h-1zM271,373h1v1h-1zM241,383h1v1h-1zM230,372h1v1h-1zM200,373h1v1h-1zM27,379h1v1h-1zM98,373h1v3h-1zM266,374h1v3h-1zM9,383h1v2h-1zM347,387h1v2h-1zM114,377h1v2h-1zM190,394h1v2h-1zM122,401h1v1h-1zM429,376h1v3h-1zM172,386h1v1h-1zM188,397h1v3h-1zM267,374h1v1h-1zM30,390h1v1h-1zM113,373h1v3h-1zM116,385h1v2h-1zM76,388h1v2h-1zM414,383h1v1h-1zM128,379h1v1h-1zM342,386h1v3h-1zM157,383h1v2h-1zM110,375h1v2h-1zM22,382h1v3h-1zM392,372h1v1h-1zM187,377h1v1h-1zM67,372h1v1h-1zM28,394h1v1h-1zM67,395h1v1h-1zM167,389h1v1h-1zM176,372h1v1h-1zM308,385h1v2h-1zM169,372h1v3h-1zM271,382h1v1h-1zM238,379h1v2h-1zM51,373h1v2h-1zM237,374h1v3h-1zM90,384h1v3h-1zM416,375h1v2h-1zM165,377h1v1h-1zM87,372h1v2h-1zM82,373h1v1h-1zM239,375h1v2h-1zM420,381h1v2h-1zM369,392h1v2h-1zM331,389h1v1h-1zM16,378h1v2h-1zM27,372h1v2h-1zM337,384h1v1h-1zM408,380h1v3h-1zM73,376h1v2h-1zM96,388h1v3h-1zM71,380h1v3h-1zM398,375h1v2h-1zM386,372h1v1h-1zM419,401h1v1h-1zM219,395h1v3h-1zM128,381h1v2h-1zM40,373h1v1h-1zM318,372h1v1h-1zM387,389h1v2h-1zM211,397h1v2h-1zM375,387h1v1h-1zM343,372h1v2h-1zM173,373h1v3h-1zM184,377h1v2h-1zM341,396h1v1h-1zM229,387h1v2h-1zM404,398h1v3h-1zM317,372h1v1h-1zM243,376h1v2h-1zM443,396h1v1h-1zM201,376h1v1h-1zM163,388h1v2h-1zM291,373h1v1h-1zM342,390h1v3h-1zM387,392h1v2h-1zM385,397h1v2h-1zM156,396h1v1h-1zM323,373h1v3h-1zM270,377h1v3h-1zM38,372h1v2h-1zM147,398h1v1h-1zM439,373h1v1h-1zM190,384h1v3h-1zM232,385h1v1h-1zM74,372h1v1h-1zM192,394h1v2h-1zM343,389h1v2h-1zM188,374h1v1h-1zM311,373h1v3h-1zM334,396h1v2h-1zM254,385h1v2h-1zM104,374h1v1h-1zM331,373h1v1h-1zM353,399h1v3h-1zM257,379h1v2h-1zM311,399h1v2h-1zM346,378h1v3h-1zM260,390h1v3h-1zM288,380h1v2h-1zM400,390h1v3h-1zM379,377h1v2h-1zM185,372h1v3h-1zM162,380h1v2h-1zM156,382h1v3h-1zM253,372h1v1h-1zM59,381h1v1h-1zM349,374h1v1h-1zM317,373h1v2h-1zM305,385h1v2h-1zM448,379h1v1h-1zM328,381h1v1h-1zM287,372h1v2h-1zM134,376h1v1h-1zM444,375h1v3h-1zM153,382h1v2h-1zM173,373h1v2h-1zM240,391h1v3h-1zM253,374h1v1h-1zM304,373h1v1h-1zM318,375h1v1h-1zM84,388h1v1h-1zM383,374h1v3h-1zM128,396h1v1h-1zM406,376h1v2h-1zM360,378h1v3h-1zM114,373h1v2h-1zM30,385h1v1h-1zM218,377h1v3h-1zM12,398h1v2h-1zM106,377h1v1h-1zM351,374h1v1h-1zM130,381h1v1h-1zM387,372h1v1h-1zM383,378h1v1h-1zM366,383h1v2h-1zM414,373h1v2h-1zM52,383h1v2h-1zM199,375h1v1h-1zM447,375h1v1h-1zM104,379h1v3h-1zM328,372h1v1h-1zM33,390h1v3h-1zM344,372h1v1h-1zM123,396h1v2h-1zM335,373h1v2h-1zM180,373h1v1h-1zM148,380h1v3h-1zM182,390h1v1h-1zM430,382h1v3h-1zM419,393h1v3h-1zM427,376h1v3h-1zM381,396h1v3h-1zM401,372h1v1h-1zM64,373h1v1h-1zM239,377h1v2h-1zM373,377h1v1h-1zM163,395h1v1h-1zM340,372h1v3h-1zM307,387h1v3h-1zM240,378h1v1h-1zM128,374h1v3h-1zM360,374h1v1h-1zM379,387h1v3h-1zM184,385h1v2h-1zM15,373h1v3h-1zM72,377h1v1h-1zM186,373h1v1h-1zM118,382h1v2h-1zM265,373h1v1h-1zM58,373h1v2h-1zM89,398h1v1h-1zM232,374h1v2h-1zM420,373h1v2h-1zM381,389h1v1h-1zM148,377h1v3h-1zM135,372h1v2h-1zM308,372h1v2h-1zM56,381h1v2h-1zM190,372h1v3h-1zM243,372h1v2h-1zM290,381h1v1h-1zM240,381h1v2h-1zM121,387h1v3h-1zM388,397h1v3h-1zM250,372h1v1h-1zM372,375h1v2h-1zM120,385h1v1h-1zM459,391h1v2h-1zM210,372h1v2h-1zM111,385h1v1h-1zM404,372h1v2h-1zM150,399h1v1h-1zM126,391h1v2h-1zM47,390h1v3h-1zM330,373h1v2h-1zM172,372h1v1h-1zM45,400h1v2h-1zM428,389h1v1h-1zM353,394h1v2h-1zM285,376h1v2h-1zM149,373h1v1h-1zM304,377h1v2h-1zM200,376h1v1h-1zM137,374h1v2h-1zM23,372h1v1h-1zM61,383h1v2h-1zM91,376h1v2h-1zM377,376h1v2h-1zM183,376h1v2h-1zM283,372h1v2h-1zM8,401h1v2h-1zM106,376h1v1h-1zM364,388h1v3h-1zM94,398h1v1h-1zM274,372h1v1h-1zM383,372h1v3h-1zM159,382h1v1h-1zM317,372h1v2h-1zM146,385h1v1h-1zM206,393h1v1h-1zM451,379h1v2h-1zM388,386h1v1h-1zM434,374h1v3h-1zM269,376h1v3h-1zM253,384h1v2h-1zM177,372h1v3h-1zM113,380h1v2h-1zM248,372h1v3h-1zM25,386h1v1h-1zM388,372h1v1h-1zM99,380h1v2h-1zM371,396h1v3h-1zM302,398h1v2h-1zM37,376h1v3h-1zM271,372h1v2h-1zM221,396h1v2h-1zM54,390h1v1h-1zM382,380h1v3h-1zM148,377h1v2h-1zM171,391h1v2h-1zM220,372h1v3h-1zM84,386h1v1h-1zM432,378h1v2h-1zM383,381h1v2h-1zM247,374h1v1h-1zM434,375h1v1h-1zM373,384h1v2h-1zM102,375h1v1h-1zM221,373h1v1h-1zM347,377h1v1h-1zM87,378h1v1h-1zM18,372h1v2h-1zM263,377h1v2h-1zM398,372h1v1h-1zM443,372h1v3h-1zM187,391h1v3h-1zM449,395h1v1h-1zM297,391h1v2h-1zM304,393h1v2h-1zM18,376h1v2h-1zM397,373h1v2h-1zM219,374h1v1h-1zM422,372h1v2h-1zM305,378h1v2h-1zM281,375h1v2h-1zM11,383h1v1h-1zM420,380h1v1h-1zM147,372h1v2h-1zM411,378h1v3h-1zM303,373h1v1h-1zM335,372h1v1h-1zM87,372h1v3h-1zM369,396h1v3h-1zM81,374h1v3h-1zM56,387h1v2h-1zM133,388h1v2h-1zM17,384h1v2h-1zM422,373h1v2h-1zM278,387h1v2h-1zM391,372h1v1h-1zM20,374h1v1h-1zM437,375h1v1h-1zM311,375h1v2h-1zM417,396h1v1h-1zM46,377h1v3h-1zM393,398h1v1h-1zM208,390h1v1h-1zM117,375h1v2h-1zM264,372h1v2h-1zM184,386h1v1h-1zM32,377h1v3h-1zM406,372h1v1h-1zM237,397h1v2h-1zM208,396h1v2h-1zM391,372h1v1h-1zM391,373h1v2h-1zM175,398h1v1h-1zM88,389h1v3h-1zM330,380h1v1h-1zM425,377h1v3h-1zM79,379h1v2h-1zM56,395h1v1h-1zM440,376h1v1h-1zM323,381h1v1h-1zM385,400h1v1h-1zM66,395h1v3h-1zM435,375h1v1h-1zM174,377h1v3h-1zM44,389h1v2h-1zM35,372h1v2h-1zM163,372h1v3h-1zM214,381h1v1h-1zM245,373h1v2h-1zM332,373h1v3h-1zM159,378h1v2h-1zM124,373h1v1h-1zM26,395h1v3h-1zM72,386h1v1h-1zM155,372h1v2h-1zM84,376h1v3h-1zM300,372h1v3h-1zM40,387h1v2h-1zM445,375h1v3h-1zM327,379h1v3h-1zM326,395h1v2h-1zM197,381h1v2h-1zM163,379h1v2h-1zM330,380h1v1h-1zM11,393h1v1h-1zM326,380h1v2h-1zM320,381h1v2h-1zM305,375h1v2h-1zM120,372h1v2h-1zM357,372h1v3h-1zM131,397h1v1h-1zM443,379h1v3h-1zM175,375h1v2h-1zM351,397h1v1h-1zM242,375h1v3h-1zM434,390h1v2h-1zM359,384h1v2h-1zM219,372h1v2h-1zM198,389h1v2h-1zM316,383h1v2h-1zM259,378h1v3h-1zM125,391h1v1h-1zM313,382h1v2h-1zM240,377h1v3h-1zM50,400h1v1h-1zM280,389h1v2h-1zM427,372h1v3h-1zM242,374h1v2h-1zM114,382h1v1h-1zM318,386h1v1h-1zM393,377h1v2h-1zM105,381h1v3h-1zM222,395h1v1h-1zM74,380h1v1h-1zM354,385h1v1h-1zM446,379h1v2h-1zM363,373h1v1h-1zM384,372h1v1h-1zM98,391h1v3h-1zM289,386h1v3h-1zM271,380h1v2h-1zM231,377h1v2h-1zM186,394h1v2h-1zM237,381h1v3h-1zM314,379h1v2h-1zM32,386h1v1h-1zM162,390h1v3h-1zM401,372h1v3h-1zM62,373h1v1h-1zM371,385h1v2h-1zM223,375h1v2h-1zM347,385h1v1h-1zM292,377h1v1h-1zM254,383h1v3h-1zM422,375h1v3h-1zM139,376h1v2h-1zM186,373h1v1h-1zM234,393h1v1h-1zM32,387h1v1h-1zM415,387h1v1h-1zM97,382h1v2h-1zM88,372h1v2h-1zM305,372h1v1h-1zM300,400h1v1h-1zM395,388h1v3h-1zM253,400h1v1h-1zM342,399h1v3h-1zM343,380h1v1h-1zM221,387h1v3h-1zM58,372h1v2h-1zM365,375h1v1h-1zM299,378h1v1h-1zM158,374h1v2h-1zM151,392h1v2h-1zM15,396h1v2h-1zM374,372h1v1h-1zM200,372h1v2h-1zM149,372h1v2h-1zM156,382h1v1h-1zM219,382h1v2h-1zM63,389h1v1h-1zM196,380h1v2h-1zM315,379h1v3h-1zM367,372h1v2h-1zM191,393h1v2h-1zM12,374h1v2h-1zM335,373h1v2h-1zM239,372h1v1h-1zM245,373h1v1h-1zM197,399h1v1h-1zM261,383h1v3h-1zM459,388h1v1h-1zM92,380h1v2h-1zM457,391h1v1h-1zM346,381h1v3h-1zM374,388h1v2h-1zM387,379h1v1h-1zM433,383h1v1h-1zM57,375h1v2h-1zM113,390h1v2h-1zM81,399h1v1h-1zM19,394h1v1h-1zM210,398h1v1h-1zM344,400h1v2h-1zM245,380h1v1h-1zM98,375h1v2h-1zM104,386h1v3h-1zM201,394h1v1h-1zM369,391h1v1h-1zM443,374h1v2h-1zM363,383h1v1h-1zM367,372h1v3h-1zM391,372h1v3h-1zM387,373h1v1h-1zM357,372h1v1h-1zM161,374h1v1h-1zM88,372h1v1h-1zM289,374h1v1h-1zM364,379h1v2h-1zM36,373h1v2h-1zM137,386h1v2h-1zM326,382h1v3h-1zM372,372h1v1h-1zM358,372h1v1h-1zM195,375h1v1h-1zM408,377h1v3h-1zM39,373h1v1h-1zM337,386h1v2h-1zM171,380h1v2h-1zM332,390h1v3h-1zM65,394h1v1h-1zM278,372h1v1h-1zM324,375h1v2h-1zM301,400h1v1h-1zM136,372h1v2h-1zM408,372h1v2h-1zM180,393h1v3h-1zM64,393h1v2h-1zM259,387h1v1h-1zM116,377h1v1h-1zM328,372h1v2h-1zM117,390h1v3h-1zM169,379h1v3h-1zM282,397h1v1h-1zM12,385h1v1h-1zM72,383h1v2h-1zM364,374h1v3h-1zM173,388h1v3h-1zM306,372h1v2h-1zM89,377h1v2h-1zM434,376h1v1h-1zM84,372h1v2h-1zM332,374h1v2h-1zM63,400h1v1h-1zM26,373h1v2h-1zM288,383h1v2h-1zM24,372h1v2h-1zM273,388h1v2h-1zM446,377h1v2h-1zM237,372h1v2h-1zM222,398h1v2h-1zM271,373h1v3h-1zM423,382h1v2h-1zM87,376h1v1h-1zM20,374h1v1h-1zM140,388h1v3h-1zM72,395h1v1h-1zM253,386h1v2h-1zM429,381h1v2h-1zM240,399h1v3h-1zM440,400h1v3h-1zM359,380h1v1h-1zM282,373h1v1h-1zM300,372h1v2h-1zM102,378h1v2h-1zM386,374h1v1h-1zM210,391h1v1h-1zM28,381h1v1h-1zM13,378h1v2h-1zM272,372h1v2h-1zM233,373h1v1h-1zM314,394h1v1h-1zM331,392h1v2h-1zM192,398h1v2h-1zM166,394h1v1h-1zM223,372h1v1h-1zM394,394h1v2h-1zM287,373h1v3h-1zM332,392h1v1h-1zM329,388h1v1h-1zM412,383h1v1h-1zM242,383h1v3h-1zM343,396h1v1h-1zM55,397h1v1h-1zM47,376h1v3h-1zM291,378h1v3h-1zM21,375h1v1h-1zM41,377h1v2h-1zM149,395h1v2h-1zM361,384h1v3h-1zM331,390h1v2h-1zM43,386h1v2h-1zM241,392h1v2h-1zM255,386h1v3h-1zM224,383h1v3h-1zM172,375h1v2h-1z"/><path fill="#000" shape-rendering="crispEdges" d="M49,366h1v3h-1zM40,368h1v1h-1zM13,381h1v2h-1zM28,368h1v3h-1zM50,373h1v3h-1zM42,365h1v3h-1zM51,381h1v1h-1zM24,370h1v1h-1zM11,379h1v2h-1zM57,377h1v2h-1zM38,368h1v2h-1zM59,371h1v1h-1zM60,377h1v2h-1zM53,373h1v1h-1zM28,380h1v2h-1zM39,375h1v2h-1zM50,375h1v2h-1zM44,362h1v1h-1zM43,376h1v1h-1zM25,363h1v1h-1zM49,367h1v2h-1zM23,373h1v2h-1zM20,372h1v1h-1zM14,378h1v3h-1zM32,379h1v1h-1zM59,374h1v1h-1zM43,380h1v2h-1zM42,381h1v2h-1zM39,367h1v1h-1zM22,375h1v1h-1zM26,367h1v2h-1zM56,372h1v1h-1zM33,368h1v2h-1zM22,362h1v2h-1zM25,378h1v2h-1zM29,368h1v3h-1zM57,373h1v2h-1zM33,376h1v2h-1zM54,373h1v3h-1zM22,373h1v1h-1zM39,369h1v1h-1zM51,365h1v1h-1zM52,371h1v3h-1zM49,376h1v1h-1zM25,365h1v1h-1zM30,365h1v2h-1zM17,376h1v2h-1zM25,368h1v3h-1zM18,376h1v2h-1zM30,370h1v2h-1zM45,365h1v2h-1zM47,370h1v1h-1zM14,376h1v2h-1zM33,382h1v3h-1zM50,370h1v1h-1zM40,361h1v2h-1zM35,382h1v2h-1zM39,361h1v3h-1zM11,382h1v3h-1zM47,363h1v2h-1zM35,376h1v3h-1zM19,376h1v3h-1zM59,368h1v2h-1zM39,368h1v1h-1zM57,378h1v3h-1zM29,372h1v3h-1zM44,380h1v1h-1zM43,382h1v1h-1zM39,377h1v2h-1zM30,366h1v1h-1zM31,383h1v2h-1zM24,362h1v2h-1zM42,372h1v2h-1zM45,382h1v1h-1zM52,380h1v1h-1zM26,376h1v2h-1zM21,383h1v3h-1zM11,381h1v3h-1zM36,376h1v1h-1zM42,380h1v1h-1zM12,376h1v2h-1zM22,373h1v2h-1zM41,379h1v2h-1zM58,370h1v3h-1zM24,382h1v2h-1zM54,372h1v2h-1zM33,361h1v3h-1zM28,383h1v1h-1zM59,372h1v3h-1zM18,380h1v3h-1zM55,382h1v2h-1zM32,370h1v2h-1zM29,379h1v2h-1zM57,381h1v1h-1zM26,364h1v1h-1zM18,374h1v3h-1zM33,379h1v1h-1zM34,364h1v3h-1zM60,362h1v1h-1zM24,373h1v2h-1zM28,375h1v2h-1zM60,380h1v1h-1zM37,382h1v2h-1zM43,366h1v1h-1zM29,378h1v2h-1zM32,371h1v3h-1zM54,361h1v2h-1zM52,363h1v1h-1zM37,373h1v2h-1zM46,379h1v1h-1zM59,364h1v2h-1zM59,381h1v3h-1zM42,375h1v2h-1zM21,367h1v1h-1zM22,382h1v1h-1zM18,381h1v3h-1zM32,366h1v1h-1zM27,378h1v2h-1zM29,383h1v2h-1zM15,371h1v1h-1zM57,378h1v2h-1zM58,362h1v1h-1zM51,367h1v2h-1zM41,365h1v2h-1zM34,376h1v3h-1zM26,378h1v2h-1zM22,381h1v3h-1zM12,382h1v3h-1zM51,366h1v2h-1zM28,378h1v3h-1zM23,381h1v1h-1zM15,381h1v1h-1zM27,371h1v3h-1zM36,371h1v3h-1zM59,361h1v1h-1zM48,379h1v2h-1zM55,376h1v2h-1zM30,378h1v3h-1zM10,378h1v2h-1zM32,373h1v1h-1zM37,371h1v1h-1zM15,380h1v3h-1zM38,370h1v3h-1zM47,371h1v1h-1zM14,384h1v3h-1zM56,361h1v1h-1z"/><path fill="#000" shape-rendering="crispEdges" d="M427,355h1v1h-1zM430,357h1v1h-1zM426,382h1v1h-1zM424,360h1v1h-1zM428,393h1v4h-1zM447,379h1v1h-1zM436,395h1v1h-1zM457,398h1v2h-1zM430,396h1v1h-1zM438,382h1v4h-1zM431,378h1v1h-1zM432,373h1v3h-1zM441,395h1v4h-1zM429,357h1v1h-1zM431,367h1v3h-1zM438,375h1v1h-1zM433,359h1v1h-1zM437,361h1v2h-1zM431,396h1v1h-1zM441,376h1v4h-1zM445,397h1v4h-1zM447,380h1v3h-1zM423,363h1v2h-1zM429,370h1v1h-1zM435,386h1v3h-1zM454,399h1v2h-1zM431,357h1v1h-1zM431,379h1v1h-1zM440,387h1v2h-1zM424,371h1v3h-1zM440,365h1v2h-1zM432,388h1v1h-1zM454,386h1v4h-1zM427,354h1v2h-1zM427,355h1v1h-1zM448,374h1v4h-1zM440,366h1v4h-1zM453,389h1v1h-1zM426,351h1v3h-1zM428,364h1v2h-1zM428,389h1v4h-1zM446,374h1v1h-1zM445,381h1v1h-1zM430,380h1v4h-1zM440,382h1v3h-1zM430,378h1v2h-1zM449,396h1v2h-1zM431,360h1v1h-1zM429,390h1v2h-1zM459,393h1v3h-1zM427,398h1v4h-1zM452,380h1v3h-1zM429,393h1v2h-1zM422,382h1v1h-1zM454,399h1v4h-1zM456,388h1v2h-1zM456,385h1v3h-1zM440,390h1v1h-1zM441,381h1v2h-1zM450,397h1v4h-1zM442,380h1v4h-1zM425,385h1v4h-1zM439,372h1v3h-1zM425,369h1v2h-1zM433,370h1v4h-1zM436,372h1v4h-1zM427,386h1v2h-1zM435,400h1v1h-1zM434,365h1v1h-1zM432,397h1v1h-1zM440,389h1v4h-1zM434,384h1v3h-1zM458,397h1v1h-1zM428,382h1v1h-1zM453,396h1v1h-1zM434,375h1v2h-1zM444,387h1v1h-1zM429,373h1v1h-1zM436,373h1v2h-1zM429,384h1v3h-1zM436,383h1v1h-1zM431,370h1v3h-1zM451,394h1v4h-1zM440,365h1v1h-1zM435,381h1v2h-1zM424,375h1v4h-1zM423,356h1v1h-1zM428,396h1v1h-1zM455,388h1v2h-1zM434,360h1v4h-1zM436,393h1v2h-1zM430,393h1v4h-1zM444,370h1v4h-1zM459,391h1v2h-1zM450,392h1v4h-1zM440,377h1v2h-1zM437,366h1v1h-1zM430,387h1v4h-1zM421,383h1v2h-1zM435,388h1v4h-1zM444,395h1v3h-1zM453,388h1v1h-1zM464,399h1v1h-1zM424,384h1v2h-1zM433,390h1v3h-1zM450,389h1v2h-1zM422,398h1v2h-1zM438,398h1v3h-1zM426,357h1v1h-1zM447,381h1v3h-1zM449,382h1v1h-1zM447,375h1v2h-1zM459,390h1v1h-1zM433,383h1v3h-1zM433,383h1v3h-1zM448,379h1v1h-1zM442,385h1v2h-1zM434,371h1v1h-1zM425,355h1v2h-1zM425,390h1v2h-1zM428,373h1v2h-1zM422,377h1v4h-1zM449,399h1v4h-1zM423,374h1v1h-1zM461,400h1v4h-1zM436,364h1v3h-1zM433,384h1v1h-1zM435,388h1v2h-1zM434,362h1v1h-1zM428,383h1v1h-1zM443,392h1v1h-1zM446,400h1v3h-1zM432,370h1v1h-1zM425,369h1v1h-1zM432,367h1v1h-1zM429,394h1v2h-1zM455,395h1v2h-1zM438,383h1v1h-1zM441,372h1v1h-1zM429,372h1v4h-1zM422,346h1v3h-1zM421,385h1v1h-1zM427,388h1v1h-1zM435,397h1v1h-1zM449,379h1v3h-1zM442,389h1v3h-1zM438,372h1v3h-1zM427,397h1v1h-1zM439,378h1v2h-1zM456,398h1v3h-1zM456,395h1v2h-1zM446,375h1v2h-1zM425,395h1v3h-1zM433,370h1v3h-1zM426,358h1v2h-1zM454,391h1v4h-1zM429,371h1v2h-1zM432,381h1v3h-1zM440,381h1v3h-1zM453,396h1v1h-1zM446,398h1v1h-1zM449,396h1v3h-1zM420,377h1v1h-1zM464,397h1v4h-1zM442,396h1v1h-1zM430,393h1v4h-1zM432,363h1v1h-1zM428,359h1v4h-1zM422,394h1v3h-1zM431,374h1v1h-1zM442,383h1v1h-1zM429,372h1v2h-1zM426,372h1v4h-1zM447,391h1v1h-1zM431,362h1v1h-1zM434,367h1v1h-1zM459,398h1v4h-1zM421,389h1v1h-1zM443,370h1v3h-1zM426,375h1v4h-1zM440,380h1v1h-1zM434,375h1v1h-1zM421,397h1v3h-1zM426,365h1v1h-1zM433,373h1v4h-1zM430,363h1v3h-1zM431,392h1v1h-1zM425,375h1v1h-1zM434,369h1v4h-1zM450,400h1v1h-1zM438,379h1v1h-1zM445,382h1v1h-1zM446,391h1v1h-1zM427,349h1v4h-1zM451,384h1v1h-1zM442,379h1v4h-1zM425,392h1v4h-1zM432,362h1v4h-1zM427,368h1v1h-1zM438,363h1v2h-1zM441,391h1v3h-1zM448,384h1v2h-1zM420,373h1v2h-1zM435,381h1v2h-1zM423,399h1v3h-1zM425,356h1v1h-1zM458,395h1v4h-1zM444,394h1v3h-1zM448,374h1v4h-1zM450,399h1v2h-1zM437,372h1v1h-1zM442,378h1v1h-1zM454,384h1v1h-1zM434,374h1v4h-1zM456,396h1v4h-1zM431,364h1v4h-1zM421,392h1v1h-1zM445,385h1v4h-1zM426,362h1v1h-1zM431,383h1v3h-1zM452,380h1v2h-1zM447,390h1v2h-1zM426,381h1v2h-1zM425,397h1v3h-1zM440,386h1v4h-1zM427,389h1v1h-1zM438,388h1v1h-1zM432,365h1v4h-1zM445,387h1v1h-1zM425,388h1v3h-1zM427,368h1v1h-1zM432,398h1v4h-1z"/><path d="M3,395 L470,391.5 M3,384 L35,344 M426,331 L470,391" fill="none" stroke="#d82020" stroke-width="1.1"/><path d="M3,405 L472,402 M3,387 L37,346 M431,329 L472,402" fill="none" stroke="#d82020" stroke-width="1.1"/><path d="M20,291 L436,289 L434,300 L430,340 L426,377 L43,383 L39,370 L35,350 L31,330 L27,310 Z" fill="#080604"/><path d="M11,284 L216,284 L216,291 L8,291 Z" fill="#070504"/><path d="M14,287.5 H214" stroke="#2e2214" stroke-width="1.5"/><path d="M44,299 L224,298.7" stroke="#2a1f10" stroke-width="3"/><path d="M44,298 L224,297.7" stroke="#3a2a16" stroke-width="1"/><path d="M238,298.7 L410,298.4" stroke="#2a1f10" stroke-width="3"/><path d="M238,297.7 L410,297.4" stroke="#3a2a16" stroke-width="1"/><path d="M46,310.5 L224,310.2" stroke="#2a1f10" stroke-width="3"/><path d="M46,309.5 L224,309.2" stroke="#3a2a16" stroke-width="1"/><path d="M238,310.2 L410,309.9" stroke="#2a1f10" stroke-width="3"/><path d="M238,309.2 L410,308.9" stroke="#3a2a16" stroke-width="1"/><path d="M48,322 L224,321.7" stroke="#2a1f10" stroke-width="3"/><path d="M48,321 L224,320.7" stroke="#3a2a16" stroke-width="1"/><path d="M238,321.7 L410,321.4" stroke="#2a1f10" stroke-width="3"/><path d="M238,320.7 L410,320.4" stroke="#3a2a16" stroke-width="1"/><path d="M51,333.5 L224,333.2" stroke="#2a1f10" stroke-width="3"/><path d="M51,332.5 L224,332.2" stroke="#3a2a16" stroke-width="1"/><path d="M238,333.2 L410,332.9" stroke="#2a1f10" stroke-width="3"/><path d="M238,332.2 L410,331.9" stroke="#3a2a16" stroke-width="1"/><path d="M53,345 L224,344.7" stroke="#2a1f10" stroke-width="3"/><path d="M53,344 L224,343.7" stroke="#3a2a16" stroke-width="1"/><path d="M238,344.7 L410,344.4" stroke="#2a1f10" stroke-width="3"/><path d="M238,343.7 L410,343.4" stroke="#3a2a16" stroke-width="1"/><path d="M55,356 L224,355.7" stroke="#2a1f10" stroke-width="3"/><path d="M55,355 L224,354.7" stroke="#3a2a16" stroke-width="1"/><path d="M238,355.7 L410,355.4" stroke="#2a1f10" stroke-width="3"/><path d="M238,354.7 L410,354.4" stroke="#3a2a16" stroke-width="1"/><path d="M57,366.5 L224,366 M238,366 L405,365" stroke="#5a5448" stroke-width="2"/><rect x="224" y="272" width="14" height="96" fill="#040302"/><path d="M229,299 L225,302 L228,304" stroke="#9a7840" stroke-width="2" fill="none"/><path d="M229,311 L225,314 L228,316" stroke="#9a7840" stroke-width="2" fill="none"/><path d="M229,323 L225,326 L228,328" stroke="#9a7840" stroke-width="2" fill="none"/><path d="M229,335 L225,338 L228,340" stroke="#9a7840" stroke-width="2" fill="none"/><path d="M229,347 L225,350 L228,352" stroke="#9a7840" stroke-width="2" fill="none"/><path d="M229,359 L225,362 L228,364" stroke="#9a7840" stroke-width="2" fill="none"/><path d="M408,289 L436,289 L432,305 L428,340 L424,377 L404,377 L404,300 Z" fill="#040302"/><path d="M419,295 L414,301 L418,304" stroke="#b08850" stroke-width="2.6" fill="none"/><path d="M418,306 L413,312 L417,315" stroke="#b08850" stroke-width="2.6" fill="none"/><path d="M417,317 L412,323 L416,326" stroke="#b08850" stroke-width="2.6" fill="none"/><path d="M415,328 L410,334 L414,337" stroke="#b08850" stroke-width="2.6" fill="none"/><path d="M414,339 L409,345 L413,348" stroke="#b08850" stroke-width="2.6" fill="none"/><path d="M413,350 L408,356 L412,359" stroke="#b08850" stroke-width="2.6" fill="none"/><path d="M412,361 L407,367 L411,370" stroke="#b08850" stroke-width="2.6" fill="none"/><rect x="238" y="272" width="179" height="15" fill="#5e584c"/><path fill="#2a2820" shape-rendering="crispEdges" d="M248,283h1v2h-1zM260,273h1v3h-1zM348,285h1v2h-1zM266,281h1v1h-1zM246,274h1v2h-1zM386,272h1v2h-1zM388,273h1v1h-1zM393,282h1v3h-1zM297,275h1v1h-1zM389,275h1v1h-1zM275,285h1v3h-1zM342,272h1v3h-1zM408,285h1v2h-1zM302,282h1v2h-1zM304,279h1v2h-1zM343,273h1v1h-1zM355,284h1v2h-1zM401,286h1v3h-1zM387,274h1v2h-1zM340,281h1v2h-1zM351,274h1v2h-1zM253,276h1v3h-1zM412,287h1v2h-1zM341,277h1v2h-1zM359,287h1v2h-1zM293,280h1v1h-1zM413,284h1v2h-1zM390,276h1v3h-1zM395,282h1v2h-1zM400,283h1v2h-1zM355,283h1v2h-1zM346,275h1v2h-1zM339,284h1v1h-1zM381,277h1v3h-1zM280,284h1v2h-1zM296,280h1v3h-1zM341,285h1v2h-1zM412,275h1v2h-1zM315,275h1v1h-1zM256,281h1v3h-1zM271,273h1v3h-1zM401,278h1v1h-1zM370,280h1v1h-1zM267,279h1v2h-1zM352,286h1v1h-1zM319,274h1v3h-1zM322,284h1v1h-1zM271,280h1v2h-1zM260,286h1v3h-1zM270,283h1v1h-1zM359,283h1v2h-1zM285,275h1v3h-1zM253,282h1v2h-1zM292,276h1v1h-1zM326,274h1v1h-1zM407,283h1v1h-1zM403,281h1v2h-1zM291,276h1v2h-1zM381,285h1v1h-1zM382,284h1v1h-1zM354,274h1v2h-1zM367,286h1v1h-1zM346,283h1v2h-1zM372,287h1v1h-1zM316,281h1v3h-1zM415,272h1v2h-1zM386,279h1v2h-1zM386,273h1v2h-1zM281,279h1v3h-1zM323,273h1v1h-1zM348,285h1v2h-1zM271,278h1v3h-1zM360,285h1v1h-1zM243,281h1v3h-1zM309,274h1v2h-1zM399,283h1v2h-1zM292,284h1v1h-1zM379,279h1v2h-1zM279,287h1v1h-1zM285,275h1v1h-1zM395,274h1v1h-1zM288,279h1v2h-1zM409,286h1v2h-1zM275,281h1v3h-1zM305,278h1v1h-1zM345,275h1v2h-1zM305,280h1v2h-1zM284,277h1v2h-1zM306,279h1v2h-1zM310,279h1v1h-1zM410,286h1v1h-1zM413,286h1v2h-1zM358,286h1v2h-1zM238,279h1v2h-1zM378,278h1v1h-1zM251,283h1v1h-1zM389,282h1v2h-1zM262,278h1v1h-1zM254,275h1v1h-1zM258,275h1v1h-1zM340,278h1v2h-1zM363,282h1v2h-1zM290,274h1v2h-1zM253,273h1v2h-1zM388,283h1v3h-1zM314,286h1v2h-1zM252,278h1v2h-1zM370,283h1v2h-1zM326,283h1v1h-1zM263,287h1v2h-1zM272,273h1v2h-1zM388,277h1v3h-1zM410,275h1v2h-1zM393,276h1v1h-1zM288,280h1v2h-1zM388,286h1v2h-1zM368,286h1v3h-1zM264,287h1v1h-1zM403,277h1v3h-1zM329,284h1v2h-1zM370,287h1v1h-1zM267,278h1v2h-1zM262,284h1v2h-1zM250,275h1v3h-1zM339,278h1v2h-1zM323,280h1v2h-1zM258,273h1v2h-1zM361,277h1v1h-1zM372,285h1v1h-1zM369,287h1v2h-1zM276,273h1v1h-1zM308,280h1v1h-1zM333,276h1v1h-1zM380,282h1v2h-1zM243,279h1v1h-1zM357,284h1v1h-1zM346,278h1v1h-1zM259,274h1v2h-1zM291,283h1v3h-1zM330,273h1v3h-1zM367,286h1v1h-1zM274,285h1v2h-1zM336,274h1v2h-1zM303,280h1v1h-1zM404,284h1v1h-1zM395,275h1v2h-1zM367,279h1v2h-1zM282,276h1v1h-1zM301,279h1v3h-1zM414,279h1v3h-1zM351,281h1v2h-1zM362,284h1v3h-1zM417,276h1v3h-1zM324,284h1v1h-1zM293,278h1v1h-1zM356,276h1v3h-1zM299,280h1v2h-1zM296,276h1v2h-1zM390,284h1v2h-1zM405,280h1v3h-1zM357,277h1v2h-1zM412,274h1v3h-1zM356,275h1v2h-1zM332,283h1v2h-1zM357,278h1v1h-1zM294,278h1v1h-1zM386,274h1v2h-1zM360,281h1v1h-1zM276,275h1v1h-1zM320,278h1v1h-1zM320,285h1v1h-1zM342,279h1v2h-1zM414,284h1v2h-1zM302,278h1v1h-1zM298,283h1v3h-1zM269,285h1v1h-1zM368,277h1v1h-1zM362,284h1v3h-1zM316,274h1v3h-1zM300,283h1v2h-1zM364,282h1v1h-1zM346,274h1v3h-1zM371,277h1v3h-1zM412,276h1v1h-1zM323,276h1v2h-1zM411,286h1v3h-1zM379,280h1v3h-1zM414,282h1v3h-1zM247,283h1v1h-1zM327,274h1v2h-1zM280,286h1v1h-1zM254,283h1v1h-1zM277,278h1v1h-1zM398,278h1v2h-1zM409,281h1v1h-1zM251,283h1v2h-1zM243,278h1v2h-1zM352,285h1v3h-1zM259,273h1v2h-1zM273,285h1v3h-1zM410,286h1v1h-1zM382,276h1v1h-1zM271,280h1v3h-1zM331,283h1v3h-1zM257,279h1v1h-1zM309,277h1v2h-1zM334,275h1v1h-1zM397,287h1v2h-1zM264,279h1v2h-1zM372,280h1v2h-1zM372,284h1v1h-1zM387,284h1v2h-1zM367,280h1v1h-1zM401,279h1v3h-1zM412,273h1v3h-1zM398,282h1v3h-1zM296,287h1v1h-1zM306,284h1v1h-1zM279,276h1v1h-1zM373,278h1v3h-1zM271,273h1v1h-1zM300,283h1v1h-1zM362,281h1v1h-1zM372,277h1v1h-1zM353,279h1v1h-1zM375,282h1v2h-1zM286,280h1v1h-1zM266,276h1v3h-1zM258,283h1v2h-1zM348,280h1v1h-1zM359,286h1v1h-1zM351,276h1v1h-1zM372,272h1v2h-1zM288,283h1v1h-1zM346,276h1v1h-1zM395,278h1v1h-1zM409,285h1v2h-1zM297,285h1v2h-1zM375,284h1v3h-1zM238,275h1v3h-1zM391,274h1v1h-1zM255,277h1v2h-1zM341,281h1v3h-1zM415,280h1v1h-1zM285,274h1v2h-1zM355,276h1v2h-1zM305,284h1v1h-1zM309,285h1v1h-1zM320,286h1v2h-1zM326,282h1v2h-1zM269,283h1v1h-1zM400,278h1v2h-1zM387,276h1v2h-1zM241,273h1v3h-1zM387,284h1v3h-1zM288,279h1v2h-1zM401,287h1v1h-1zM253,275h1v2h-1zM395,285h1v1h-1zM243,286h1v2h-1zM298,285h1v3h-1zM379,280h1v1h-1zM347,282h1v1h-1zM252,284h1v1h-1zM331,284h1v2h-1zM403,279h1v1h-1zM394,279h1v2h-1zM347,283h1v2h-1zM413,283h1v1h-1zM347,281h1v2h-1zM340,279h1v2h-1zM328,287h1v1h-1zM338,279h1v2h-1zM389,280h1v3h-1zM313,272h1v1h-1zM413,282h1v1h-1zM312,280h1v2h-1zM357,284h1v2h-1zM411,273h1v1h-1zM374,272h1v1h-1zM395,285h1v2h-1zM414,276h1v2h-1zM385,281h1v2h-1zM273,284h1v1h-1zM274,287h1v3h-1zM357,285h1v1h-1zM325,274h1v2h-1zM261,287h1v2h-1zM416,277h1v1h-1zM335,276h1v2h-1zM348,276h1v2h-1zM380,281h1v3h-1zM288,275h1v1h-1zM395,277h1v3h-1zM253,286h1v2h-1zM304,277h1v1h-1zM311,284h1v3h-1zM244,276h1v2h-1zM299,285h1v1h-1zM303,279h1v2h-1zM346,274h1v2h-1zM307,285h1v2h-1zM263,287h1v3h-1zM255,282h1v1h-1zM247,277h1v3h-1zM361,277h1v2h-1zM342,278h1v1h-1zM402,286h1v1h-1zM392,277h1v1h-1zM319,285h1v3h-1zM308,278h1v1h-1zM245,282h1v1h-1zM303,286h1v1h-1zM369,279h1v1h-1zM266,277h1v1h-1zM363,285h1v3h-1zM386,279h1v3h-1zM368,273h1v2h-1zM291,274h1v2h-1zM311,277h1v1h-1zM310,277h1v3h-1zM411,275h1v2h-1zM351,276h1v1h-1zM377,285h1v1h-1zM414,273h1v1h-1zM308,274h1v1h-1zM389,284h1v2h-1zM300,279h1v1h-1zM306,283h1v1h-1zM337,285h1v1h-1zM349,280h1v2h-1zM345,285h1v2h-1zM324,276h1v2h-1zM270,277h1v2h-1zM406,282h1v1h-1zM380,278h1v2h-1zM244,276h1v3h-1zM377,274h1v1h-1zM311,272h1v1h-1zM413,272h1v1h-1zM407,287h1v2h-1zM323,282h1v1h-1zM289,281h1v2h-1zM346,278h1v1h-1zM409,283h1v3h-1zM247,281h1v1h-1zM397,279h1v1h-1zM408,286h1v3h-1zM277,278h1v1h-1zM249,278h1v2h-1zM367,280h1v2h-1zM262,277h1v1h-1zM299,273h1v1h-1zM362,280h1v3h-1zM364,282h1v1h-1zM282,273h1v1h-1zM415,280h1v1h-1zM299,274h1v1h-1zM381,280h1v1h-1zM307,282h1v3h-1zM362,286h1v2h-1zM393,276h1v1h-1zM359,276h1v1h-1zM414,272h1v2h-1zM289,282h1v1h-1zM324,284h1v3h-1zM260,284h1v1h-1zM386,281h1v3h-1zM334,275h1v2h-1zM391,274h1v2h-1zM369,283h1v3h-1zM400,276h1v3h-1zM399,278h1v1h-1zM347,277h1v2h-1zM266,275h1v1h-1zM254,281h1v1h-1zM295,278h1v2h-1zM337,275h1v2h-1zM249,286h1v1h-1zM394,280h1v2h-1zM362,279h1v2h-1zM258,286h1v2h-1zM259,285h1v2h-1zM375,280h1v2h-1zM291,282h1v1h-1zM298,280h1v3h-1zM365,275h1v3h-1zM241,285h1v2h-1zM414,275h1v1h-1zM391,274h1v3h-1zM270,284h1v2h-1zM255,274h1v2h-1zM247,275h1v2h-1zM267,281h1v3h-1zM410,274h1v2h-1zM253,285h1v2h-1zM278,277h1v2h-1zM396,282h1v2h-1zM358,282h1v1h-1zM253,277h1v2h-1zM415,282h1v1h-1zM413,281h1v1h-1zM347,277h1v2h-1zM351,286h1v1h-1zM259,286h1v2h-1zM281,283h1v2h-1zM256,277h1v3h-1zM392,281h1v3h-1zM412,276h1v2h-1zM374,274h1v2h-1zM318,274h1v2h-1zM245,273h1v3h-1zM270,287h1v1h-1zM381,278h1v1h-1zM336,276h1v3h-1zM296,275h1v3h-1zM373,276h1v1h-1zM264,281h1v2h-1zM293,284h1v2h-1zM359,285h1v2h-1zM263,283h1v2h-1zM279,275h1v3h-1zM367,278h1v3h-1zM328,275h1v3h-1zM238,285h1v2h-1zM336,284h1v2h-1zM364,282h1v2h-1zM330,283h1v1h-1zM412,274h1v3h-1zM267,286h1v1h-1zM296,278h1v1h-1zM317,273h1v2h-1zM299,281h1v1h-1zM305,275h1v1h-1zM277,287h1v1h-1zM397,280h1v1h-1zM416,287h1v3h-1zM380,280h1v3h-1zM384,275h1v1h-1zM376,282h1v2h-1zM296,284h1v1h-1zM333,285h1v3h-1zM389,280h1v1h-1zM241,279h1v2h-1zM416,274h1v2h-1zM289,281h1v2h-1zM381,281h1v1h-1zM250,274h1v1h-1zM248,281h1v2h-1zM352,281h1v2h-1zM379,276h1v1h-1zM365,276h1v2h-1zM277,277h1v2h-1zM375,278h1v2h-1zM406,280h1v1h-1zM280,285h1v2h-1zM258,272h1v2h-1zM324,275h1v2h-1zM267,284h1v2h-1zM306,287h1v1h-1zM306,277h1v1h-1zM318,286h1v2h-1zM313,274h1v1h-1zM245,278h1v2h-1zM288,284h1v1h-1zM248,278h1v1h-1zM250,274h1v2h-1zM357,286h1v3h-1zM353,275h1v3h-1zM242,277h1v2h-1zM306,276h1v2h-1zM364,277h1v3h-1zM347,273h1v3h-1zM374,281h1v3h-1zM386,282h1v1h-1zM408,281h1v1h-1zM342,282h1v1h-1zM297,287h1v1h-1zM300,277h1v2h-1zM343,276h1v3h-1zM408,278h1v3h-1zM403,280h1v1h-1zM336,282h1v3h-1zM260,274h1v1h-1zM284,274h1v1h-1zM271,282h1v1h-1zM374,275h1v2h-1zM243,284h1v1h-1zM333,287h1v1h-1zM342,274h1v2h-1zM239,286h1v2h-1zM260,284h1v2h-1zM315,278h1v2h-1zM314,282h1v2h-1zM275,280h1v3h-1zM283,277h1v2h-1zM387,283h1v2h-1zM356,283h1v2h-1zM294,272h1v2h-1zM260,281h1v1h-1zM332,282h1v2h-1zM328,286h1v3h-1zM260,274h1v1h-1zM254,281h1v1h-1zM250,276h1v3h-1zM310,277h1v1h-1zM360,275h1v3h-1zM366,273h1v2h-1zM361,284h1v2h-1zM363,285h1v1h-1zM367,279h1v2h-1zM267,279h1v1h-1zM279,278h1v2h-1zM324,275h1v1h-1zM262,284h1v1h-1zM274,275h1v3h-1zM274,287h1v3h-1zM326,284h1v1h-1zM266,273h1v3h-1zM407,286h1v2h-1zM288,276h1v3h-1zM358,272h1v2h-1zM278,272h1v1h-1zM404,280h1v1h-1zM414,275h1v2h-1zM401,278h1v1h-1zM245,286h1v2h-1zM291,275h1v1h-1zM343,285h1v2h-1zM366,279h1v1h-1zM272,284h1v2h-1zM268,281h1v3h-1zM271,285h1v2h-1zM255,279h1v1h-1zM256,282h1v2h-1zM365,279h1v3h-1zM313,282h1v1h-1zM413,275h1v3h-1zM354,278h1v1h-1zM338,278h1v1h-1zM265,280h1v2h-1zM395,279h1v1h-1zM352,273h1v2h-1zM341,275h1v2h-1zM289,282h1v1h-1zM319,284h1v1h-1zM289,279h1v1h-1zM243,284h1v2h-1zM292,273h1v2h-1zM413,278h1v1h-1zM324,280h1v1h-1zM323,273h1v2h-1zM334,279h1v2h-1zM325,276h1v2h-1zM293,274h1v1h-1zM350,280h1v1h-1zM293,275h1v2h-1zM281,283h1v2h-1zM373,283h1v2h-1zM395,284h1v2h-1zM360,278h1v1h-1zM251,279h1v3h-1zM391,283h1v2h-1zM264,283h1v1h-1zM375,272h1v1h-1zM405,284h1v3h-1zM392,273h1v1h-1zM400,277h1v1h-1zM278,282h1v1h-1zM411,286h1v3h-1zM406,286h1v1h-1zM302,275h1v1h-1zM414,285h1v2h-1zM282,280h1v2h-1zM311,275h1v3h-1zM240,275h1v2h-1zM322,276h1v2h-1zM322,275h1v2h-1zM396,286h1v2h-1zM393,280h1v2h-1zM310,278h1v1h-1zM393,286h1v1h-1zM276,281h1v2h-1zM343,277h1v1h-1zM340,284h1v3h-1zM264,277h1v2h-1zM279,287h1v3h-1zM241,277h1v1h-1zM251,278h1v1h-1zM413,283h1v3h-1zM297,276h1v2h-1zM325,272h1v1h-1zM347,275h1v2h-1zM363,274h1v2h-1zM348,286h1v2h-1zM248,276h1v2h-1zM281,283h1v1h-1zM367,281h1v1h-1zM339,287h1v2h-1zM238,278h1v2h-1zM393,282h1v1h-1zM379,280h1v1h-1zM390,282h1v1h-1zM288,274h1v2h-1zM353,282h1v1h-1zM341,272h1v3h-1zM397,277h1v1h-1zM241,276h1v3h-1zM329,279h1v2h-1zM398,286h1v2h-1zM377,279h1v1h-1zM341,275h1v1h-1zM373,280h1v2h-1zM362,274h1v2h-1zM338,278h1v3h-1zM384,287h1v1h-1zM239,273h1v2h-1zM384,277h1v2h-1zM362,277h1v1h-1zM379,280h1v3h-1zM256,272h1v2h-1zM249,284h1v3h-1zM383,285h1v2h-1zM376,277h1v3h-1zM329,286h1v1h-1zM280,286h1v3h-1zM292,287h1v3h-1zM245,279h1v1h-1zM277,282h1v1h-1zM326,283h1v3h-1zM399,279h1v2h-1zM294,278h1v1h-1zM337,278h1v1h-1zM320,272h1v1h-1zM250,279h1v1h-1zM349,277h1v1h-1zM282,286h1v1h-1zM346,281h1v1h-1zM375,274h1v2h-1zM309,274h1v2h-1zM402,280h1v1h-1zM304,283h1v2h-1zM395,276h1v1h-1zM372,272h1v1h-1zM317,274h1v3h-1zM257,282h1v1h-1zM325,286h1v1h-1zM244,276h1v1h-1zM305,274h1v1h-1zM374,277h1v2h-1zM334,274h1v1h-1zM276,276h1v1h-1zM329,279h1v3h-1zM404,275h1v1h-1zM414,284h1v2h-1zM264,272h1v2h-1zM313,285h1v1h-1zM392,286h1v1h-1zM379,275h1v3h-1zM406,273h1v1h-1zM254,280h1v3h-1zM376,273h1v2h-1zM407,282h1v1h-1zM389,275h1v1h-1zM368,278h1v1h-1zM344,274h1v1h-1zM348,273h1v1h-1zM247,276h1v2h-1zM376,273h1v2h-1zM398,286h1v2h-1zM316,280h1v3h-1zM416,276h1v2h-1zM349,278h1v2h-1zM402,284h1v3h-1zM304,285h1v3h-1zM371,286h1v2h-1zM275,277h1v1h-1zM313,285h1v2h-1zM321,280h1v2h-1zM387,277h1v1h-1zM381,282h1v2h-1zM321,281h1v2h-1zM373,277h1v2h-1zM374,275h1v2h-1zM399,286h1v1h-1zM411,284h1v1h-1zM407,273h1v2h-1zM351,275h1v1h-1zM247,273h1v3h-1zM347,273h1v2h-1zM388,279h1v1h-1zM343,285h1v1h-1zM320,281h1v1h-1zM291,281h1v2h-1zM329,276h1v2h-1zM377,272h1v1h-1zM332,279h1v2h-1zM268,283h1v2h-1zM314,276h1v1h-1zM379,279h1v2h-1zM409,282h1v2h-1zM279,284h1v3h-1zM395,274h1v2h-1zM335,280h1v3h-1zM287,276h1v3h-1zM412,275h1v3h-1zM258,277h1v2h-1zM297,275h1v2h-1zM281,275h1v1h-1zM408,272h1v1h-1zM392,286h1v2h-1zM342,275h1v1h-1zM241,282h1v2h-1zM338,272h1v1h-1zM375,285h1v3h-1zM294,275h1v2h-1zM244,275h1v2h-1zM379,286h1v1h-1zM360,276h1v2h-1zM306,284h1v2h-1zM300,273h1v3h-1zM337,279h1v1h-1zM319,277h1v2h-1zM413,277h1v2h-1zM377,277h1v2h-1zM314,285h1v1h-1zM389,282h1v1h-1zM399,273h1v3h-1zM312,273h1v1h-1zM356,277h1v2h-1zM295,274h1v1h-1zM238,276h1v3h-1zM397,284h1v2h-1zM339,285h1v2h-1zM307,285h1v1h-1zM248,278h1v1h-1zM255,276h1v1h-1zM273,278h1v2h-1zM283,284h1v2h-1zM321,284h1v2h-1zM356,278h1v1h-1zM332,274h1v2h-1zM343,283h1v2h-1zM265,282h1v1h-1zM242,284h1v3h-1zM332,279h1v2h-1zM244,274h1v1h-1zM258,284h1v1h-1zM364,279h1v1h-1zM341,276h1v2h-1zM312,272h1v1h-1zM248,279h1v3h-1zM245,278h1v2h-1zM276,282h1v3h-1zM366,281h1v2h-1zM295,283h1v1h-1zM321,284h1v3h-1zM379,275h1v3h-1zM256,274h1v2h-1zM271,283h1v2h-1zM316,284h1v2h-1zM241,285h1v2h-1zM251,277h1v2h-1zM392,283h1v2h-1zM408,277h1v1h-1zM351,273h1v2h-1zM254,277h1v3h-1zM253,276h1v3h-1zM245,283h1v3h-1zM278,273h1v1h-1zM264,280h1v3h-1zM266,272h1v2h-1zM286,280h1v2h-1zM345,276h1v2h-1zM296,283h1v2h-1zM348,275h1v3h-1zM268,286h1v2h-1zM343,273h1v1h-1zM346,277h1v1h-1zM360,275h1v2h-1zM367,282h1v2h-1zM328,273h1v2h-1zM327,281h1v2h-1zM245,283h1v1h-1zM403,277h1v1h-1zM358,273h1v2h-1zM389,286h1v3h-1zM289,280h1v3h-1zM377,281h1v1h-1zM414,281h1v3h-1zM369,272h1v3h-1zM254,279h1v3h-1zM251,285h1v2h-1zM247,277h1v1h-1zM308,280h1v2h-1zM397,273h1v2h-1zM347,285h1v3h-1zM299,281h1v2h-1zM277,275h1v1h-1zM410,273h1v1h-1zM246,274h1v2h-1zM317,286h1v1h-1zM396,280h1v3h-1zM403,282h1v1h-1zM345,278h1v1h-1zM330,273h1v2h-1zM371,283h1v1h-1zM252,279h1v2h-1zM276,284h1v3h-1zM312,276h1v1h-1zM277,286h1v1h-1zM347,278h1v2h-1zM267,286h1v1h-1zM414,282h1v3h-1zM388,273h1v1h-1zM245,286h1v1h-1zM344,282h1v3h-1zM342,286h1v1h-1zM282,280h1v2h-1zM307,279h1v1h-1zM293,275h1v3h-1zM257,280h1v3h-1zM301,282h1v2h-1zM267,275h1v1h-1zM407,286h1v1h-1zM320,281h1v1h-1zM326,277h1v1h-1zM289,280h1v1h-1zM317,276h1v3h-1zM378,275h1v2h-1zM239,284h1v2h-1zM259,282h1v2h-1zM396,287h1v2h-1zM348,279h1v3h-1zM321,275h1v3h-1zM240,279h1v2h-1zM337,274h1v2h-1zM386,278h1v2h-1zM349,278h1v2h-1zM241,280h1v1h-1zM263,281h1v1h-1zM245,280h1v3h-1zM243,285h1v3h-1zM356,282h1v1h-1zM417,285h1v2h-1zM391,284h1v2h-1zM374,278h1v3h-1zM393,283h1v3h-1zM277,283h1v2h-1zM393,272h1v1h-1zM335,281h1v1h-1zM337,285h1v2h-1zM377,273h1v1h-1zM319,276h1v2h-1zM269,281h1v1h-1zM255,276h1v2h-1zM334,284h1v1h-1zM407,284h1v3h-1zM288,286h1v1h-1zM339,272h1v2h-1zM271,276h1v2h-1zM367,280h1v3h-1zM327,283h1v2h-1zM283,286h1v1h-1zM244,280h1v1h-1zM299,278h1v1h-1zM386,284h1v2h-1zM308,280h1v1h-1zM268,276h1v2h-1zM247,275h1v1h-1zM307,273h1v2h-1zM260,286h1v1h-1zM257,274h1v3h-1zM370,279h1v2h-1zM364,276h1v2h-1zM302,274h1v2h-1zM333,277h1v1h-1zM302,283h1v2h-1zM333,275h1v2h-1zM268,273h1v3h-1zM369,277h1v3h-1zM411,274h1v2h-1zM385,280h1v1h-1zM267,273h1v1h-1zM264,274h1v3h-1zM413,277h1v2h-1zM275,281h1v1h-1zM352,281h1v3h-1zM279,273h1v1h-1zM346,285h1v3h-1zM326,281h1v2h-1zM340,281h1v1h-1zM344,276h1v1h-1zM319,277h1v3h-1zM261,287h1v2h-1zM369,280h1v1h-1zM401,285h1v3h-1zM348,281h1v1h-1zM364,278h1v2h-1zM295,272h1v3h-1z"/><path d="M238,273 H417" stroke="#7a7468" stroke-width="1.5"/><circle cx="426" cy="280" r="9" fill="#040302"/><path d="M418,283 Q418,273 428,272" stroke="#b08850" stroke-width="3" fill="none"/><rect x="212" y="270" width="26" height="20" fill="#040302"/><circle cx="231" cy="280" r="7.5" fill="#040302"/><path d="M224,283 Q224,273 233,272" stroke="#9a7840" stroke-width="2.5" fill="none"/><path d="M5,290 L438,288 L438,294 L5,297 Z" fill="#040302"/><path d="M8,292 L436,290" stroke="#3a2a16" stroke-width="1.2"/><path d="M213,286 H224" stroke="#3a2a16" stroke-width="1"/><rect x="85" y="305" width="28" height="31" fill="#0a0806"/><rect x="87" y="307" width="24" height="26" fill="#58544e"/><rect x="87" y="329" width="24" height="5" fill="#5a2c14"/><path d="M99.0,305 V336 M85,320.5 H113" stroke="#0a0806" stroke-width="2"/><rect x="354" y="303" width="31" height="31" fill="#0a0806"/><rect x="356" y="305" width="27" height="26" fill="#58544e"/><rect x="356" y="327" width="27" height="5" fill="#5a2c14"/><path d="M369.5,303 V334 M354,318.5 H385" stroke="#0a0806" stroke-width="2"/><path d="M37,140 L318,140 L228,245 L215,271 L215,286 L13,285 Z" fill="#0b0a08"/><path d="M298,127 L338,153 L215,271 L228,245 L318,140 L286,140 Z" fill="#8a8270"/><path d="M298,127 L338,153" stroke="#6a4a20" stroke-width="2"/><path d="M253,140 L260,133 L266,140 Z" fill="#8a8270"/><path d="M311,149 l23,-3" stroke="#4a4438" stroke-width="1.4"/><path d="M303,159 l22,-3" stroke="#4a4438" stroke-width="1.4"/><path d="M296,168 l20,-3" stroke="#4a4438" stroke-width="1.4"/><path d="M289,177 l19,-3" stroke="#4a4438" stroke-width="1.4"/><path d="M281,187 l17,-3" stroke="#4a4438" stroke-width="1.4"/><path d="M274,196 l16,-3" stroke="#4a4438" stroke-width="1.4"/><path d="M266,206 l14,-3" stroke="#4a4438" stroke-width="1.4"/><path d="M259,215 l12,-3" stroke="#4a4438" stroke-width="1.4"/><path d="M252,224 l11,-3" stroke="#4a4438" stroke-width="1.4"/><path d="M244,234 l9,-3" stroke="#4a4438" stroke-width="1.4"/><path d="M237,243 l8,-3" stroke="#4a4438" stroke-width="1.4"/><path d="M230,252 l6,-3" stroke="#4a4438" stroke-width="1.4"/><path d="M222,262 l5,-3" stroke="#4a4438" stroke-width="1.4"/><path d="M338,153 L446,280 L436,271 L215,272 Z" fill="#000"/><path d="M338,153 L446,280" stroke="#000" stroke-width="2"/><path d="M212.5,232 V310" stroke="#a0a0a0" stroke-width="1"/><path d="M207,240 L212.5,234 L218,240" stroke="#a0a0a0" fill="none"/><text x="208" y="231" font-size="12" fill="#a8a8a8" font-family="Liberation Sans">z</text><path d="M213,310.5 H293 M287,306 L293,310.5 L287,315 M213,310.5 L211,350" stroke="#e02020" stroke-width="1.2" fill="none"/><text x="291" y="307" font-size="14" fill="#e02020" font-family="Liberation Sans">y</text><path d="M206,346 L214,340 M208,338 L216,350 M202,347 Q210,352 218,346" stroke="#e02020" stroke-width="1.1" fill="none"/></g></g>
<rect x="496" y="508" width="490" height="398" fill="#fff"/>
<g clip-path="url(#c4)"><rect x="497" y="509" width="488" height="396" fill="#4e703e"/><path d="M497,507 L497.0,524.5 L514.0,523.2 L558.9,520.6 L591.8,518.7 L622.7,516.7 L653.7,514.8 L667.7,514.8 L688.6,516.3 L712.6,517.7 L735.5,518.3 L756.5,519.0 L802.4,520.6 L822.3,522.2 L867.2,524.5 L910.2,526.9 L955.1,528.4 L988.0,529.8 L985,507 Z" fill="#b1b1b1"/><path d="M497.0,524.0 L514.0,522.7 L558.9,520.1 L591.8,518.2 L622.7,516.2 L653.7,514.3 L667.7,514.3 L688.6,515.8 L712.6,517.2 L735.5,517.8 L756.5,518.5 L802.4,520.1 L822.3,521.7" fill="none" stroke="#f4f4f4" stroke-width="1.3"/><g transform="translate(494,401)"><path fill="#000" shape-rendering="crispEdges" d="M385,373h1v1h-1zM93,376h1v1h-1zM280,373h1v2h-1zM217,384h1v3h-1zM55,398h1v1h-1zM213,372h1v1h-1zM343,372h1v1h-1zM359,372h1v1h-1zM360,375h1v2h-1zM341,372h1v3h-1zM56,373h1v2h-1zM63,381h1v3h-1zM128,386h1v2h-1zM226,394h1v1h-1zM136,387h1v1h-1zM15,374h1v2h-1zM308,373h1v2h-1zM339,377h1v1h-1zM90,383h1v2h-1zM18,372h1v1h-1zM173,384h1v1h-1zM453,397h1v3h-1zM451,394h1v1h-1zM315,372h1v3h-1zM247,372h1v3h-1zM288,372h1v2h-1zM213,374h1v3h-1zM225,385h1v2h-1zM167,384h1v3h-1zM265,380h1v1h-1zM218,372h1v1h-1zM45,374h1v1h-1zM335,372h1v1h-1zM278,372h1v2h-1zM195,380h1v2h-1zM258,372h1v2h-1zM279,400h1v3h-1zM125,385h1v2h-1zM83,372h1v3h-1zM75,372h1v2h-1zM165,379h1v2h-1zM199,372h1v1h-1zM347,381h1v1h-1zM339,377h1v1h-1zM228,375h1v2h-1zM372,398h1v1h-1zM297,376h1v1h-1zM108,373h1v3h-1zM361,391h1v1h-1zM314,373h1v1h-1zM46,373h1v2h-1zM253,394h1v1h-1zM183,377h1v1h-1zM185,372h1v3h-1zM208,381h1v3h-1zM409,387h1v2h-1zM424,375h1v2h-1zM260,388h1v1h-1zM222,373h1v1h-1zM18,373h1v2h-1zM311,372h1v2h-1zM125,372h1v1h-1zM151,380h1v1h-1zM359,376h1v1h-1zM310,373h1v2h-1zM21,383h1v3h-1zM29,399h1v2h-1zM147,375h1v2h-1zM315,397h1v2h-1zM388,386h1v2h-1zM45,391h1v2h-1zM224,372h1v2h-1zM223,378h1v2h-1zM37,386h1v3h-1zM9,379h1v3h-1zM438,385h1v1h-1zM443,377h1v2h-1zM61,375h1v1h-1zM175,375h1v3h-1zM413,372h1v1h-1zM410,388h1v2h-1zM253,374h1v2h-1zM184,394h1v3h-1zM416,383h1v2h-1zM351,388h1v2h-1zM316,372h1v2h-1zM398,374h1v2h-1zM266,387h1v1h-1zM442,372h1v2h-1zM69,376h1v1h-1zM205,389h1v2h-1zM34,372h1v2h-1zM176,394h1v1h-1zM127,373h1v1h-1zM364,373h1v1h-1zM321,390h1v1h-1zM332,380h1v1h-1zM36,378h1v1h-1zM149,373h1v1h-1zM166,389h1v1h-1zM360,379h1v3h-1zM387,380h1v3h-1zM397,376h1v1h-1zM463,393h1v1h-1zM226,377h1v1h-1zM289,384h1v2h-1zM237,375h1v2h-1zM56,372h1v1h-1zM435,399h1v2h-1zM92,393h1v1h-1zM417,387h1v3h-1zM367,381h1v1h-1zM250,398h1v3h-1zM262,382h1v2h-1zM265,379h1v1h-1zM33,375h1v2h-1zM380,372h1v1h-1zM140,372h1v1h-1zM46,400h1v3h-1zM108,378h1v1h-1zM393,372h1v2h-1zM107,382h1v1h-1zM114,373h1v3h-1zM306,372h1v2h-1zM265,372h1v2h-1zM444,373h1v2h-1zM219,374h1v2h-1zM395,400h1v1h-1zM49,390h1v3h-1zM214,372h1v1h-1zM387,373h1v1h-1zM350,372h1v1h-1zM320,372h1v1h-1zM262,377h1v1h-1zM282,377h1v2h-1zM221,372h1v2h-1zM422,387h1v1h-1zM213,372h1v2h-1zM257,393h1v1h-1zM173,382h1v2h-1zM453,380h1v3h-1zM258,372h1v2h-1zM70,373h1v1h-1zM322,377h1v1h-1zM143,395h1v2h-1zM16,373h1v1h-1zM371,378h1v2h-1zM97,372h1v2h-1zM17,394h1v2h-1zM349,389h1v3h-1zM213,376h1v1h-1zM72,381h1v2h-1zM63,381h1v2h-1zM172,372h1v3h-1zM397,389h1v2h-1zM176,386h1v1h-1zM352,396h1v1h-1zM204,395h1v1h-1zM441,394h1v2h-1zM80,387h1v3h-1zM26,375h1v3h-1zM453,381h1v2h-1zM318,387h1v3h-1zM80,372h1v2h-1zM17,373h1v2h-1zM415,372h1v3h-1zM429,373h1v3h-1zM162,374h1v2h-1zM246,396h1v2h-1zM76,374h1v3h-1zM52,385h1v1h-1zM314,374h1v2h-1zM291,381h1v2h-1zM301,378h1v2h-1zM441,374h1v1h-1zM133,378h1v1h-1zM334,373h1v2h-1zM273,375h1v2h-1zM104,374h1v1h-1zM155,377h1v1h-1zM439,372h1v3h-1zM289,374h1v1h-1zM389,375h1v3h-1zM399,389h1v2h-1zM441,400h1v3h-1zM271,385h1v2h-1zM273,380h1v2h-1zM217,377h1v3h-1zM124,372h1v3h-1zM105,399h1v3h-1zM143,386h1v2h-1zM51,379h1v2h-1zM314,378h1v1h-1zM200,396h1v1h-1zM460,395h1v3h-1zM167,375h1v3h-1zM225,382h1v1h-1zM356,394h1v2h-1zM394,373h1v3h-1zM279,380h1v2h-1zM43,372h1v2h-1zM20,391h1v2h-1zM187,400h1v3h-1zM89,377h1v3h-1zM121,379h1v1h-1zM38,372h1v2h-1zM337,378h1v3h-1zM101,397h1v3h-1zM196,380h1v1h-1zM302,374h1v2h-1zM349,385h1v1h-1zM259,385h1v1h-1zM427,374h1v1h-1zM233,384h1v2h-1zM314,391h1v1h-1zM406,376h1v3h-1zM346,382h1v2h-1zM395,373h1v3h-1zM274,400h1v3h-1zM264,381h1v1h-1zM45,376h1v3h-1zM26,388h1v2h-1zM265,380h1v3h-1zM323,386h1v2h-1zM352,400h1v1h-1zM38,372h1v2h-1zM162,374h1v1h-1zM141,374h1v3h-1zM71,372h1v2h-1zM106,386h1v1h-1zM187,376h1v3h-1zM350,381h1v1h-1zM350,374h1v1h-1zM341,374h1v2h-1zM405,391h1v2h-1zM148,399h1v2h-1zM278,380h1v1h-1zM36,401h1v3h-1zM40,373h1v1h-1zM277,390h1v3h-1zM184,372h1v2h-1zM416,375h1v1h-1zM259,381h1v2h-1zM324,378h1v2h-1zM97,372h1v2h-1zM367,386h1v2h-1zM264,401h1v3h-1zM389,373h1v1h-1zM170,395h1v1h-1zM136,376h1v1h-1zM342,378h1v2h-1zM200,373h1v3h-1zM306,382h1v2h-1zM137,374h1v2h-1zM108,375h1v3h-1zM57,373h1v3h-1zM452,387h1v3h-1zM20,376h1v1h-1zM159,375h1v1h-1zM123,372h1v1h-1zM18,401h1v1h-1zM299,373h1v1h-1zM367,373h1v2h-1zM94,381h1v2h-1zM44,395h1v3h-1zM192,384h1v1h-1zM216,379h1v1h-1zM17,387h1v1h-1zM26,380h1v1h-1zM50,381h1v1h-1zM32,390h1v2h-1zM16,391h1v2h-1zM253,385h1v1h-1zM291,372h1v2h-1zM197,382h1v1h-1zM289,373h1v2h-1zM342,383h1v1h-1zM373,401h1v2h-1zM68,387h1v1h-1zM293,380h1v1h-1zM149,399h1v2h-1zM153,381h1v1h-1zM62,398h1v2h-1zM337,398h1v1h-1zM141,376h1v2h-1zM269,372h1v2h-1zM130,372h1v2h-1zM437,385h1v2h-1zM253,376h1v1h-1zM79,382h1v1h-1zM323,372h1v1h-1zM324,372h1v3h-1zM412,373h1v1h-1zM323,372h1v1h-1zM127,384h1v3h-1zM184,373h1v1h-1zM301,382h1v2h-1zM231,389h1v1h-1zM149,383h1v3h-1zM157,383h1v2h-1zM386,382h1v3h-1zM103,390h1v2h-1zM331,372h1v1h-1zM360,386h1v2h-1zM60,389h1v1h-1zM178,385h1v2h-1zM47,392h1v3h-1zM136,374h1v1h-1zM412,399h1v1h-1zM41,374h1v2h-1zM369,372h1v1h-1zM201,394h1v3h-1zM401,390h1v1h-1zM101,372h1v1h-1zM196,379h1v3h-1zM442,383h1v3h-1zM257,384h1v2h-1zM432,378h1v2h-1zM189,379h1v2h-1zM99,377h1v3h-1zM66,376h1v1h-1zM411,394h1v1h-1zM226,377h1v1h-1zM307,376h1v1h-1zM163,381h1v3h-1zM312,373h1v1h-1zM150,398h1v1h-1zM256,385h1v2h-1zM179,372h1v2h-1zM25,377h1v1h-1zM166,386h1v1h-1zM242,372h1v3h-1zM186,372h1v3h-1zM244,384h1v1h-1zM453,384h1v2h-1zM202,382h1v3h-1zM353,399h1v2h-1zM224,372h1v1h-1zM288,374h1v3h-1zM227,379h1v1h-1zM224,373h1v2h-1zM353,387h1v2h-1zM362,393h1v1h-1zM208,393h1v2h-1zM52,372h1v2h-1zM188,398h1v2h-1zM292,385h1v1h-1zM106,375h1v1h-1zM359,372h1v1h-1zM148,394h1v3h-1zM277,372h1v2h-1zM234,374h1v1h-1zM389,386h1v2h-1zM311,374h1v3h-1zM82,373h1v1h-1zM186,381h1v1h-1zM319,396h1v3h-1zM251,374h1v2h-1zM325,372h1v2h-1zM97,377h1v1h-1zM103,372h1v2h-1zM423,373h1v3h-1zM105,386h1v2h-1zM196,382h1v2h-1zM63,379h1v2h-1zM131,382h1v2h-1zM423,372h1v1h-1zM182,373h1v2h-1zM141,377h1v3h-1zM231,398h1v2h-1zM421,391h1v2h-1zM121,374h1v2h-1zM109,379h1v3h-1zM79,392h1v1h-1zM57,372h1v1h-1zM338,378h1v2h-1zM262,373h1v1h-1zM414,372h1v3h-1zM175,399h1v1h-1zM215,372h1v3h-1zM442,394h1v2h-1zM15,377h1v2h-1zM77,396h1v2h-1zM200,390h1v2h-1zM437,373h1v2h-1zM266,372h1v2h-1zM384,374h1v1h-1zM330,372h1v2h-1zM21,386h1v2h-1zM161,395h1v2h-1zM73,375h1v2h-1zM446,372h1v1h-1zM277,389h1v2h-1zM224,372h1v1h-1zM342,373h1v3h-1zM392,372h1v3h-1zM64,386h1v2h-1zM399,373h1v2h-1zM234,373h1v1h-1zM28,398h1v2h-1zM176,397h1v3h-1zM228,375h1v2h-1zM228,378h1v3h-1zM285,389h1v1h-1zM303,374h1v3h-1zM268,380h1v2h-1zM72,373h1v2h-1zM272,379h1v2h-1zM467,401h1v2h-1zM370,372h1v2h-1zM101,372h1v3h-1zM65,372h1v3h-1zM126,388h1v2h-1zM436,395h1v1h-1zM415,374h1v1h-1zM365,395h1v3h-1zM48,375h1v2h-1zM132,372h1v1h-1zM348,375h1v3h-1zM442,386h1v2h-1zM254,379h1v1h-1zM205,375h1v3h-1zM384,396h1v3h-1zM283,400h1v2h-1zM38,383h1v2h-1zM252,384h1v1h-1zM461,393h1v3h-1zM393,378h1v3h-1zM328,377h1v1h-1zM137,373h1v1h-1zM9,382h1v2h-1zM107,382h1v1h-1zM285,386h1v1h-1zM439,373h1v1h-1zM204,376h1v2h-1zM399,397h1v1h-1zM368,400h1v1h-1zM281,398h1v2h-1zM206,395h1v3h-1zM352,388h1v2h-1zM463,397h1v3h-1zM160,377h1v1h-1zM64,377h1v3h-1zM170,390h1v1h-1zM177,383h1v3h-1zM161,384h1v3h-1zM402,385h1v3h-1zM421,397h1v3h-1zM157,372h1v2h-1zM100,401h1v3h-1zM367,377h1v1h-1zM302,373h1v3h-1zM376,380h1v3h-1zM16,372h1v2h-1zM205,376h1v1h-1zM198,392h1v3h-1zM426,387h1v1h-1zM449,377h1v1h-1zM226,375h1v1h-1zM191,379h1v3h-1zM282,393h1v2h-1zM293,373h1v1h-1zM134,372h1v3h-1zM426,390h1v1h-1zM139,380h1v2h-1zM380,372h1v1h-1zM126,372h1v1h-1zM420,387h1v1h-1zM243,393h1v2h-1zM186,375h1v3h-1zM351,376h1v2h-1zM204,374h1v1h-1zM345,374h1v2h-1zM63,372h1v2h-1zM358,383h1v2h-1zM334,380h1v2h-1zM285,377h1v1h-1zM143,389h1v2h-1zM45,384h1v1h-1zM219,372h1v3h-1zM85,379h1v2h-1zM169,373h1v3h-1zM294,372h1v3h-1zM354,388h1v3h-1zM118,399h1v1h-1zM287,372h1v2h-1zM77,396h1v1h-1zM429,374h1v2h-1zM393,372h1v1h-1zM331,375h1v1h-1zM118,385h1v2h-1zM22,372h1v3h-1zM322,373h1v2h-1zM267,378h1v1h-1zM379,382h1v2h-1zM37,377h1v2h-1zM144,385h1v3h-1zM216,374h1v1h-1zM56,376h1v3h-1zM94,372h1v1h-1zM78,392h1v1h-1zM407,381h1v3h-1zM347,384h1v2h-1zM240,372h1v2h-1zM222,373h1v2h-1zM426,373h1v1h-1zM422,379h1v2h-1zM410,390h1v3h-1zM249,395h1v2h-1zM328,398h1v2h-1zM102,377h1v2h-1zM124,391h1v1h-1zM412,388h1v2h-1zM360,386h1v1h-1zM261,372h1v2h-1zM215,373h1v3h-1zM199,384h1v1h-1zM224,374h1v3h-1zM14,378h1v2h-1zM452,400h1v1h-1zM19,378h1v1h-1zM177,375h1v3h-1zM258,386h1v2h-1zM52,374h1v1h-1zM27,389h1v2h-1zM78,386h1v2h-1zM361,390h1v2h-1zM91,382h1v2h-1zM346,376h1v2h-1zM215,373h1v1h-1zM154,392h1v1h-1zM289,372h1v2h-1zM9,382h1v1h-1zM309,386h1v3h-1zM419,373h1v3h-1zM456,383h1v1h-1zM122,396h1v3h-1zM367,397h1v2h-1zM126,389h1v1h-1zM396,385h1v3h-1zM116,401h1v1h-1zM301,373h1v2h-1zM120,373h1v1h-1zM151,372h1v2h-1zM84,383h1v1h-1zM325,372h1v2h-1zM113,381h1v1h-1zM297,372h1v2h-1zM391,372h1v1h-1zM292,389h1v2h-1zM59,398h1v1h-1zM67,388h1v3h-1zM123,378h1v1h-1zM342,373h1v1h-1zM237,372h1v2h-1zM47,377h1v1h-1zM152,390h1v1h-1zM250,372h1v2h-1zM332,372h1v3h-1zM313,389h1v1h-1zM393,380h1v2h-1zM313,373h1v2h-1zM462,399h1v3h-1zM87,387h1v1h-1zM65,394h1v2h-1zM272,373h1v2h-1zM395,378h1v1h-1zM333,373h1v3h-1zM13,376h1v2h-1zM170,378h1v1h-1zM218,372h1v3h-1zM152,376h1v2h-1zM191,377h1v3h-1zM63,396h1v1h-1zM191,394h1v1h-1zM85,372h1v2h-1zM416,384h1v1h-1zM127,374h1v2h-1zM316,377h1v1h-1zM217,379h1v1h-1zM138,376h1v2h-1zM120,382h1v2h-1zM307,378h1v2h-1zM363,373h1v1h-1zM323,372h1v2h-1zM159,396h1v2h-1zM301,383h1v3h-1zM129,376h1v1h-1zM132,391h1v1h-1zM304,379h1v1h-1zM360,400h1v2h-1zM297,372h1v1h-1zM33,379h1v1h-1zM91,382h1v3h-1zM260,387h1v2h-1zM178,375h1v1h-1zM149,391h1v2h-1zM267,382h1v1h-1zM218,379h1v1h-1zM127,391h1v3h-1zM136,372h1v2h-1zM228,375h1v3h-1zM56,398h1v2h-1zM13,392h1v1h-1zM293,397h1v2h-1zM224,375h1v1h-1zM431,374h1v3h-1zM181,379h1v3h-1zM284,378h1v2h-1zM15,387h1v2h-1zM283,372h1v1h-1zM341,374h1v1h-1zM124,394h1v2h-1zM334,389h1v2h-1zM170,377h1v2h-1zM112,377h1v1h-1zM72,379h1v1h-1zM189,374h1v2h-1zM16,372h1v1h-1zM101,384h1v2h-1zM126,386h1v2h-1zM173,372h1v3h-1zM442,378h1v1h-1zM247,372h1v2h-1zM127,386h1v2h-1zM242,375h1v1h-1zM187,382h1v1h-1zM20,373h1v2h-1zM126,374h1v3h-1zM286,387h1v3h-1zM196,376h1v2h-1zM130,372h1v2h-1zM146,387h1v1h-1zM395,385h1v2h-1zM276,385h1v2h-1zM202,380h1v1h-1zM219,372h1v1h-1zM13,383h1v1h-1zM229,396h1v3h-1zM121,374h1v2h-1zM305,373h1v2h-1zM147,373h1v2h-1zM96,389h1v2h-1zM387,382h1v1h-1zM295,372h1v2h-1zM109,392h1v1h-1zM41,372h1v1h-1zM249,372h1v2h-1zM57,389h1v2h-1zM380,372h1v2h-1zM72,379h1v1h-1zM356,373h1v3h-1zM286,401h1v2h-1zM248,375h1v1h-1zM317,374h1v2h-1zM127,372h1v3h-1zM143,385h1v1h-1zM332,392h1v2h-1zM14,372h1v1h-1zM343,383h1v2h-1zM376,389h1v1h-1zM64,375h1v3h-1zM289,372h1v1h-1zM183,374h1v1h-1zM336,374h1v3h-1zM275,381h1v2h-1zM149,377h1v1h-1zM176,394h1v2h-1zM235,375h1v1h-1zM51,373h1v1h-1zM267,372h1v1h-1zM399,380h1v1h-1zM272,372h1v1h-1zM376,384h1v1h-1zM386,374h1v2h-1zM310,379h1v1h-1zM160,387h1v1h-1zM20,384h1v1h-1zM44,399h1v3h-1zM331,373h1v3h-1zM406,375h1v1h-1zM126,374h1v1h-1zM274,385h1v1h-1zM309,375h1v2h-1zM267,379h1v1h-1zM299,373h1v2h-1zM58,378h1v2h-1zM54,385h1v2h-1zM374,383h1v2h-1zM83,374h1v2h-1zM17,372h1v1h-1zM317,395h1v3h-1zM256,379h1v1h-1zM138,379h1v2h-1zM153,373h1v1h-1zM424,384h1v1h-1zM433,379h1v3h-1zM388,372h1v1h-1zM385,372h1v2h-1zM161,372h1v1h-1zM197,394h1v2h-1zM279,390h1v1h-1zM206,377h1v1h-1zM334,372h1v1h-1zM380,376h1v3h-1zM452,385h1v1h-1zM186,395h1v3h-1zM360,382h1v1h-1zM374,373h1v2h-1zM341,385h1v2h-1zM450,385h1v1h-1zM345,372h1v2h-1zM198,373h1v2h-1zM446,372h1v1h-1zM325,401h1v3h-1zM315,373h1v3h-1zM325,372h1v1h-1zM223,372h1v2h-1zM267,388h1v1h-1zM100,373h1v1h-1zM162,373h1v1h-1zM84,372h1v2h-1zM36,400h1v1h-1zM376,381h1v1h-1zM328,377h1v1h-1zM129,373h1v3h-1zM172,373h1v1h-1zM276,375h1v2h-1zM167,387h1v2h-1zM149,375h1v2h-1zM390,374h1v3h-1zM162,399h1v3h-1zM390,374h1v1h-1zM339,372h1v1h-1zM272,374h1v2h-1zM122,373h1v1h-1zM211,389h1v2h-1zM262,372h1v1h-1zM408,375h1v1h-1zM259,372h1v1h-1zM114,372h1v2h-1zM115,384h1v2h-1zM407,376h1v1h-1zM118,399h1v3h-1zM404,372h1v3h-1zM357,393h1v1h-1zM276,375h1v2h-1zM276,381h1v3h-1zM164,391h1v1h-1zM106,379h1v2h-1zM341,372h1v3h-1zM35,383h1v2h-1zM138,376h1v1h-1zM371,386h1v3h-1zM451,377h1v3h-1zM50,372h1v2h-1zM306,395h1v1h-1zM430,372h1v1h-1zM96,380h1v3h-1zM223,372h1v1h-1zM41,374h1v3h-1zM410,379h1v2h-1zM288,373h1v2h-1zM421,373h1v3h-1zM419,373h1v1h-1zM434,389h1v1h-1zM456,385h1v1h-1zM20,397h1v2h-1zM197,372h1v2h-1zM148,382h1v2h-1zM290,381h1v2h-1zM102,394h1v2h-1zM128,400h1v3h-1zM341,388h1v2h-1zM276,400h1v1h-1zM266,385h1v3h-1zM351,372h1v1h-1zM255,376h1v1h-1zM122,389h1v1h-1zM387,389h1v3h-1zM85,380h1v2h-1zM417,376h1v2h-1zM452,382h1v2h-1zM166,388h1v3h-1zM200,397h1v1h-1zM58,376h1v1h-1zM88,396h1v3h-1zM359,393h1v2h-1zM135,384h1v2h-1zM360,385h1v2h-1zM343,388h1v2h-1zM105,378h1v1h-1zM245,372h1v1h-1zM71,373h1v3h-1zM297,372h1v2h-1zM248,378h1v1h-1zM279,394h1v2h-1zM121,383h1v2h-1zM342,377h1v3h-1zM177,398h1v2h-1zM237,386h1v2h-1zM154,374h1v1h-1zM398,376h1v3h-1zM284,372h1v2h-1zM444,372h1v2h-1zM92,374h1v1h-1zM179,381h1v1h-1zM333,374h1v3h-1zM118,372h1v1h-1zM143,377h1v3h-1zM18,372h1v2h-1zM241,390h1v1h-1zM252,372h1v2h-1zM50,375h1v1h-1zM21,389h1v3h-1zM158,375h1v3h-1zM267,390h1v1h-1zM182,387h1v2h-1zM209,388h1v1h-1zM18,389h1v1h-1zM214,372h1v1h-1zM457,392h1v3h-1zM216,379h1v2h-1zM219,372h1v2h-1zM179,375h1v2h-1zM434,388h1v3h-1zM336,374h1v1h-1zM179,397h1v1h-1zM412,383h1v3h-1zM119,398h1v2h-1zM309,395h1v2h-1zM312,382h1v2h-1zM170,397h1v3h-1zM454,387h1v2h-1zM181,392h1v1h-1zM308,400h1v2h-1zM268,372h1v2h-1zM328,377h1v2h-1zM318,392h1v3h-1zM375,374h1v1h-1zM81,375h1v2h-1zM31,379h1v1h-1zM223,379h1v3h-1zM342,375h1v2h-1zM347,379h1v2h-1zM182,389h1v1h-1zM193,373h1v1h-1zM107,373h1v1h-1zM423,400h1v3h-1zM158,373h1v2h-1zM16,372h1v3h-1zM405,375h1v1h-1zM265,372h1v1h-1zM343,375h1v3h-1zM382,378h1v1h-1zM10,381h1v1h-1zM307,375h1v2h-1zM363,376h1v3h-1zM205,377h1v3h-1zM388,394h1v1h-1zM296,393h1v1h-1zM184,374h1v1h-1zM434,373h1v3h-1zM34,377h1v3h-1zM278,374h1v2h-1zM331,380h1v1h-1zM361,372h1v1h-1zM114,383h1v1h-1zM80,374h1v1h-1zM191,380h1v1h-1zM403,376h1v1h-1zM239,397h1v3h-1zM178,373h1v3h-1zM451,379h1v2h-1zM368,373h1v3h-1zM166,399h1v2h-1zM122,381h1v1h-1zM463,398h1v2h-1zM460,392h1v2h-1zM90,373h1v2h-1zM115,373h1v2h-1zM15,390h1v1h-1zM113,393h1v2h-1zM448,382h1v3h-1zM421,398h1v1h-1zM43,390h1v3h-1zM61,372h1v2h-1zM19,377h1v2h-1zM244,372h1v3h-1zM276,376h1v1h-1zM29,379h1v1h-1zM19,385h1v1h-1zM302,393h1v1h-1zM55,373h1v1h-1zM157,379h1v1h-1zM401,396h1v1h-1zM377,373h1v1h-1zM115,384h1v1h-1zM429,400h1v1h-1zM321,381h1v1h-1zM58,384h1v3h-1zM115,389h1v1h-1zM318,375h1v1h-1zM88,393h1v1h-1zM338,395h1v2h-1zM451,399h1v2h-1zM287,372h1v2h-1zM177,374h1v2h-1zM210,372h1v1h-1zM92,397h1v1h-1zM200,383h1v2h-1zM210,385h1v3h-1zM423,379h1v2h-1zM306,372h1v2h-1zM167,374h1v3h-1zM411,396h1v1h-1zM359,372h1v1h-1zM177,373h1v1h-1zM326,372h1v2h-1zM241,373h1v3h-1zM123,377h1v1h-1zM332,395h1v1h-1zM353,379h1v1h-1zM86,391h1v1h-1zM36,372h1v1h-1zM130,379h1v2h-1zM81,372h1v2h-1zM112,382h1v1h-1zM56,383h1v1h-1zM415,386h1v2h-1zM262,372h1v2h-1zM308,372h1v3h-1zM170,389h1v1h-1zM142,392h1v2h-1zM264,373h1v2h-1zM42,375h1v2h-1zM308,372h1v3h-1zM369,382h1v1h-1zM334,396h1v3h-1zM395,372h1v2h-1zM300,384h1v1h-1zM421,373h1v1h-1zM383,396h1v2h-1zM110,375h1v3h-1zM363,372h1v1h-1zM219,374h1v2h-1zM29,372h1v2h-1zM210,380h1v2h-1zM226,383h1v2h-1zM442,390h1v1h-1zM139,397h1v2h-1zM312,372h1v1h-1zM193,373h1v1h-1zM327,384h1v2h-1zM36,392h1v3h-1zM309,372h1v1h-1zM259,396h1v1h-1zM360,376h1v2h-1zM147,377h1v2h-1zM109,397h1v1h-1zM437,380h1v2h-1zM146,376h1v2h-1zM290,373h1v3h-1zM465,400h1v3h-1zM280,372h1v1h-1zM329,396h1v3h-1zM439,391h1v1h-1zM270,400h1v3h-1zM343,373h1v1h-1zM181,375h1v1h-1zM212,390h1v3h-1zM451,398h1v1h-1zM404,389h1v2h-1zM218,377h1v2h-1zM172,375h1v3h-1zM216,376h1v1h-1zM20,372h1v2h-1zM400,374h1v2h-1zM356,375h1v2h-1zM118,372h1v3h-1zM266,377h1v3h-1zM291,372h1v2h-1zM84,381h1v3h-1zM102,390h1v1h-1zM451,389h1v2h-1zM355,375h1v1h-1zM120,381h1v2h-1zM96,386h1v2h-1zM374,378h1v1h-1zM410,376h1v1h-1zM199,381h1v2h-1zM295,372h1v1h-1zM429,372h1v2h-1zM129,384h1v1h-1zM240,380h1v3h-1zM74,378h1v2h-1zM397,400h1v1h-1zM365,375h1v1h-1zM330,390h1v1h-1zM322,378h1v2h-1zM31,388h1v1h-1zM241,372h1v2h-1zM416,397h1v1h-1zM332,386h1v3h-1zM411,389h1v2h-1zM244,372h1v1h-1zM221,385h1v2h-1zM22,391h1v1h-1zM220,383h1v3h-1zM174,390h1v1h-1zM242,377h1v1h-1zM345,373h1v1h-1zM376,382h1v2h-1zM37,380h1v2h-1zM35,385h1v1h-1zM401,379h1v2h-1zM351,378h1v2h-1zM414,373h1v1h-1zM172,384h1v1h-1zM257,386h1v1h-1zM243,373h1v3h-1zM224,384h1v1h-1zM264,378h1v2h-1zM330,374h1v3h-1zM318,378h1v1h-1zM182,382h1v3h-1zM18,381h1v1h-1zM335,373h1v2h-1zM391,374h1v1h-1zM27,372h1v3h-1zM247,376h1v1h-1zM440,372h1v1h-1zM427,384h1v1h-1zM36,373h1v1h-1zM102,396h1v2h-1zM284,374h1v1h-1zM104,376h1v1h-1zM347,375h1v1h-1zM253,384h1v1h-1zM307,372h1v2h-1zM394,380h1v2h-1zM314,373h1v3h-1zM39,383h1v2h-1zM382,372h1v3h-1zM234,375h1v1h-1zM128,382h1v2h-1zM131,387h1v1h-1zM214,386h1v1h-1zM25,372h1v3h-1zM244,380h1v2h-1zM212,384h1v2h-1zM54,383h1v1h-1zM260,382h1v2h-1zM232,391h1v3h-1zM392,388h1v1h-1zM307,373h1v2h-1zM425,374h1v2h-1zM120,401h1v3h-1zM206,375h1v1h-1zM69,382h1v2h-1zM263,384h1v3h-1zM182,372h1v2h-1zM348,373h1v1h-1zM203,372h1v3h-1zM410,373h1v1h-1zM153,395h1v1h-1zM207,384h1v3h-1zM68,380h1v1h-1zM48,388h1v2h-1zM248,372h1v3h-1zM310,395h1v2h-1zM40,377h1v2h-1zM118,373h1v1h-1zM389,385h1v1h-1zM437,400h1v3h-1zM444,378h1v3h-1zM306,385h1v1h-1zM40,373h1v2h-1zM254,373h1v2h-1zM444,383h1v2h-1zM375,374h1v1h-1zM325,373h1v3h-1zM186,380h1v2h-1zM414,372h1v3h-1zM283,394h1v3h-1zM42,395h1v2h-1zM110,389h1v1h-1zM303,372h1v2h-1zM178,377h1v1h-1zM436,375h1v2h-1zM119,397h1v2h-1zM35,372h1v2h-1zM288,377h1v2h-1zM443,372h1v2h-1zM134,372h1v1h-1zM60,394h1v1h-1zM110,395h1v1h-1zM343,373h1v1h-1zM291,373h1v2h-1zM337,381h1v1h-1zM49,388h1v2h-1zM33,389h1v1h-1zM186,374h1v2h-1zM433,374h1v2h-1zM261,376h1v1h-1zM162,375h1v3h-1zM159,372h1v2h-1zM197,373h1v1h-1zM30,373h1v2h-1zM380,380h1v2h-1zM365,383h1v1h-1zM108,373h1v1h-1zM441,392h1v1h-1zM120,377h1v3h-1zM412,374h1v1h-1zM316,373h1v2h-1zM356,380h1v1h-1zM321,376h1v1h-1zM216,397h1v2h-1zM264,381h1v1h-1zM289,377h1v1h-1zM374,394h1v2h-1zM20,378h1v2h-1zM298,380h1v1h-1zM99,377h1v2h-1zM69,375h1v2h-1zM328,382h1v1h-1zM354,377h1v2h-1zM61,372h1v3h-1zM306,372h1v1h-1zM138,396h1v2h-1zM242,387h1v3h-1zM128,389h1v3h-1zM13,400h1v2h-1zM363,373h1v1h-1zM134,374h1v3h-1zM137,382h1v1h-1zM314,375h1v2h-1zM299,376h1v2h-1zM93,386h1v1h-1zM416,397h1v2h-1zM50,378h1v3h-1zM237,390h1v2h-1zM198,374h1v1h-1zM82,374h1v2h-1zM282,372h1v1h-1zM203,395h1v3h-1zM393,384h1v3h-1zM8,388h1v3h-1zM178,398h1v3h-1zM266,388h1v2h-1zM342,372h1v1h-1zM437,385h1v2h-1zM280,372h1v2h-1zM236,372h1v2h-1zM391,375h1v2h-1zM299,374h1v3h-1zM25,382h1v3h-1zM452,389h1v1h-1zM411,397h1v1h-1zM409,372h1v2h-1zM49,376h1v2h-1zM323,395h1v1h-1zM457,400h1v2h-1zM121,379h1v1h-1zM115,381h1v1h-1zM141,382h1v1h-1zM228,386h1v1h-1zM61,372h1v2h-1zM384,381h1v2h-1zM22,389h1v1h-1zM359,388h1v2h-1zM125,391h1v2h-1zM434,393h1v2h-1zM185,397h1v2h-1zM282,391h1v1h-1zM375,388h1v3h-1zM185,374h1v1h-1zM99,372h1v1h-1zM175,372h1v3h-1zM184,372h1v1h-1zM377,391h1v2h-1zM254,392h1v2h-1zM289,372h1v3h-1zM234,372h1v1h-1zM433,372h1v3h-1zM14,388h1v3h-1zM391,391h1v1h-1zM240,373h1v1h-1zM337,377h1v1h-1zM347,374h1v2h-1zM348,375h1v2h-1zM419,376h1v1h-1zM391,373h1v1h-1zM226,372h1v1h-1zM32,378h1v1h-1zM348,380h1v2h-1zM304,392h1v2h-1zM22,373h1v2h-1zM29,372h1v2h-1zM292,377h1v1h-1zM174,375h1v2h-1zM175,372h1v3h-1zM201,372h1v2h-1zM210,382h1v1h-1zM290,372h1v1h-1zM275,392h1v2h-1zM50,398h1v2h-1zM22,373h1v1h-1zM148,372h1v3h-1zM181,376h1v3h-1zM137,376h1v3h-1zM160,377h1v3h-1zM180,372h1v2h-1zM340,380h1v1h-1zM453,384h1v2h-1zM324,374h1v2h-1zM368,377h1v2h-1zM126,374h1v2h-1zM34,381h1v3h-1zM353,382h1v1h-1zM20,378h1v2h-1zM172,379h1v2h-1zM340,372h1v2h-1zM447,384h1v2h-1zM268,372h1v1h-1zM121,391h1v2h-1zM47,392h1v1h-1zM197,372h1v2h-1zM341,376h1v2h-1zM432,400h1v3h-1zM287,373h1v2h-1zM24,375h1v2h-1zM333,372h1v2h-1zM240,379h1v2h-1zM418,375h1v2h-1zM436,395h1v3h-1zM109,374h1v1h-1zM20,380h1v2h-1zM24,372h1v3h-1zM429,373h1v1h-1zM186,385h1v2h-1zM44,384h1v1h-1zM265,377h1v1h-1zM328,391h1v1h-1zM437,383h1v2h-1zM387,381h1v2h-1zM143,394h1v2h-1zM373,374h1v2h-1zM111,372h1v1h-1zM136,385h1v2h-1zM403,372h1v1h-1zM337,396h1v1h-1zM113,379h1v2h-1zM286,399h1v1h-1zM175,380h1v3h-1zM58,373h1v1h-1zM354,375h1v2h-1zM209,384h1v3h-1zM336,394h1v3h-1zM123,372h1v2h-1zM375,400h1v1h-1zM34,374h1v3h-1zM23,379h1v2h-1zM222,377h1v3h-1zM200,372h1v1h-1zM184,381h1v2h-1zM290,387h1v2h-1zM124,385h1v1h-1zM300,372h1v1h-1zM357,401h1v1h-1zM192,373h1v1h-1zM356,393h1v1h-1zM57,373h1v1h-1zM54,397h1v2h-1zM370,372h1v2h-1zM59,372h1v1h-1zM104,380h1v3h-1zM38,373h1v1h-1zM49,372h1v2h-1zM131,397h1v1h-1zM228,385h1v3h-1zM395,378h1v1h-1zM363,389h1v2h-1zM111,388h1v1h-1zM15,383h1v1h-1zM76,372h1v3h-1zM31,397h1v1h-1zM276,384h1v1h-1zM171,375h1v3h-1zM108,395h1v1h-1zM141,378h1v1h-1zM249,372h1v3h-1zM284,372h1v3h-1zM79,379h1v2h-1zM162,378h1v1h-1zM349,374h1v3h-1zM175,372h1v1h-1zM240,378h1v1h-1zM390,372h1v2h-1zM431,380h1v1h-1zM275,375h1v2h-1zM165,380h1v2h-1zM251,380h1v2h-1zM352,388h1v1h-1zM68,394h1v1h-1zM285,373h1v1h-1zM416,388h1v2h-1zM197,373h1v1h-1zM104,392h1v1h-1zM189,380h1v1h-1zM101,372h1v2h-1zM435,381h1v2h-1zM90,380h1v3h-1zM244,375h1v1h-1zM322,373h1v1h-1zM198,375h1v2h-1zM98,387h1v1h-1zM258,376h1v1h-1zM236,376h1v1h-1zM106,374h1v2h-1zM253,373h1v1h-1zM130,392h1v2h-1zM424,389h1v3h-1zM84,381h1v1h-1zM311,393h1v2h-1zM231,373h1v1h-1zM320,374h1v1h-1zM51,392h1v2h-1zM45,399h1v2h-1zM270,372h1v2h-1zM325,385h1v1h-1zM149,372h1v3h-1zM196,372h1v3h-1zM366,372h1v2h-1zM175,378h1v2h-1zM204,395h1v1h-1zM56,372h1v2h-1zM401,373h1v2h-1zM402,373h1v1h-1zM277,376h1v2h-1zM188,383h1v3h-1zM152,388h1v2h-1zM369,375h1v2h-1zM406,373h1v1h-1zM66,387h1v1h-1zM429,374h1v2h-1zM107,380h1v1h-1zM361,377h1v2h-1zM280,395h1v1h-1zM419,372h1v2h-1zM331,374h1v3h-1zM86,372h1v3h-1zM145,373h1v1h-1zM291,380h1v1h-1zM167,373h1v2h-1zM352,372h1v1h-1zM330,378h1v1h-1zM283,390h1v1h-1zM189,372h1v2h-1zM209,373h1v1h-1zM353,397h1v1h-1zM347,377h1v1h-1zM156,374h1v1h-1zM330,375h1v2h-1zM52,382h1v1h-1zM37,374h1v2h-1zM272,376h1v2h-1zM102,374h1v3h-1zM277,385h1v2h-1zM58,390h1v2h-1zM209,373h1v1h-1zM64,379h1v2h-1zM329,372h1v1h-1zM423,382h1v2h-1zM344,393h1v1h-1zM162,394h1v2h-1zM112,382h1v3h-1zM443,373h1v2h-1zM319,372h1v2h-1zM100,383h1v3h-1zM253,379h1v1h-1zM202,383h1v1h-1zM164,374h1v1h-1zM339,398h1v3h-1zM230,374h1v1h-1zM206,376h1v1h-1zM286,378h1v1h-1zM34,372h1v2h-1zM23,399h1v1h-1zM51,381h1v2h-1zM317,384h1v2h-1zM161,383h1v1h-1zM261,388h1v1h-1zM401,373h1v2h-1zM304,372h1v1h-1zM71,380h1v2h-1zM208,390h1v2h-1zM267,400h1v1h-1zM65,379h1v3h-1zM225,372h1v2h-1zM100,392h1v2h-1zM261,373h1v2h-1zM99,375h1v1h-1zM187,372h1v1h-1zM318,380h1v2h-1zM242,396h1v3h-1zM102,390h1v2h-1zM250,372h1v2h-1zM122,388h1v2h-1zM238,398h1v3h-1zM161,372h1v3h-1zM26,395h1v2h-1zM44,392h1v1h-1zM42,390h1v2h-1zM151,373h1v2h-1zM329,395h1v1h-1zM269,394h1v2h-1zM221,372h1v2h-1zM337,377h1v3h-1zM441,372h1v2h-1zM119,375h1v2h-1zM256,377h1v1h-1zM251,375h1v1h-1zM52,372h1v1h-1zM151,374h1v1h-1zM259,384h1v2h-1zM429,381h1v2h-1zM131,372h1v1h-1zM249,388h1v3h-1zM133,381h1v2h-1zM393,375h1v1h-1zM60,389h1v2h-1zM173,374h1v1h-1zM83,387h1v1h-1zM74,399h1v2h-1zM364,393h1v2h-1zM143,384h1v2h-1zM65,372h1v2h-1zM377,381h1v2h-1zM149,391h1v3h-1zM55,377h1v1h-1zM117,380h1v1h-1zM242,372h1v2h-1zM123,372h1v1h-1zM317,374h1v2h-1zM343,377h1v2h-1zM291,373h1v3h-1zM342,392h1v2h-1zM72,389h1v1h-1zM215,383h1v2h-1zM85,382h1v2h-1zM66,377h1v2h-1zM116,380h1v2h-1zM98,376h1v2h-1zM83,376h1v2h-1zM166,372h1v2h-1zM414,374h1v1h-1zM375,376h1v2h-1zM448,386h1v1h-1zM236,372h1v3h-1zM182,379h1v1h-1zM316,386h1v2h-1zM440,373h1v1h-1zM105,391h1v1h-1zM250,372h1v1h-1zM103,389h1v1h-1zM352,376h1v1h-1zM222,372h1v3h-1zM169,373h1v1h-1zM31,373h1v1h-1zM41,373h1v2h-1zM195,380h1v2h-1zM296,375h1v2h-1zM410,374h1v2h-1zM187,373h1v2h-1zM155,376h1v1h-1zM362,376h1v3h-1zM106,390h1v1h-1zM423,372h1v2h-1zM393,373h1v2h-1zM127,375h1v1h-1zM236,386h1v2h-1zM280,383h1v3h-1zM287,375h1v1h-1zM174,384h1v1h-1zM358,374h1v3h-1zM388,399h1v2h-1zM301,383h1v3h-1zM147,378h1v3h-1zM160,388h1v3h-1zM179,386h1v1h-1zM200,372h1v2h-1zM117,372h1v1h-1zM203,380h1v2h-1zM128,383h1v3h-1zM12,378h1v2h-1zM366,390h1v2h-1zM210,385h1v1h-1zM60,378h1v2h-1zM355,383h1v2h-1zM356,380h1v1h-1zM22,394h1v3h-1zM53,389h1v1h-1zM136,378h1v2h-1zM251,380h1v3h-1zM369,373h1v2h-1zM430,389h1v1h-1zM208,373h1v2h-1zM339,374h1v2h-1zM322,396h1v1h-1zM38,386h1v2h-1zM209,384h1v2h-1zM278,372h1v2h-1zM139,374h1v2h-1zM305,373h1v1h-1zM216,372h1v2h-1zM50,385h1v1h-1zM115,372h1v3h-1zM317,389h1v2h-1zM14,373h1v1h-1zM396,382h1v2h-1zM333,385h1v1h-1zM361,389h1v2h-1zM246,372h1v2h-1zM242,373h1v2h-1zM104,379h1v1h-1zM14,375h1v1h-1zM446,379h1v2h-1zM251,375h1v1h-1zM307,376h1v2h-1zM399,372h1v1h-1zM52,372h1v2h-1zM129,379h1v1h-1zM174,381h1v1h-1zM153,389h1v1h-1zM192,372h1v1h-1zM315,379h1v3h-1zM442,395h1v3h-1zM59,372h1v2h-1zM211,380h1v1h-1zM217,376h1v2h-1zM46,372h1v1h-1zM225,395h1v2h-1zM155,396h1v2h-1zM208,375h1v3h-1zM401,373h1v3h-1zM85,400h1v1h-1zM337,385h1v2h-1zM91,374h1v3h-1zM365,394h1v1h-1zM102,373h1v2h-1zM391,396h1v2h-1zM237,372h1v2h-1zM213,393h1v1h-1zM188,383h1v2h-1zM144,375h1v2h-1zM354,372h1v1h-1zM142,374h1v2h-1zM25,377h1v2h-1zM334,373h1v1h-1zM159,372h1v1h-1zM282,391h1v2h-1zM453,383h1v1h-1zM251,374h1v2h-1zM312,373h1v2h-1zM337,375h1v1h-1zM274,376h1v3h-1zM279,380h1v3h-1zM238,379h1v1h-1zM232,374h1v2h-1zM110,398h1v1h-1zM376,379h1v1h-1zM145,397h1v1h-1zM363,372h1v3h-1zM43,389h1v1h-1zM441,377h1v3h-1zM311,398h1v3h-1zM27,372h1v2h-1zM342,372h1v2h-1zM230,382h1v2h-1zM137,400h1v1h-1zM50,372h1v2h-1zM194,373h1v1h-1zM164,373h1v2h-1zM435,377h1v2h-1zM209,379h1v1h-1zM81,380h1v1h-1zM29,376h1v3h-1zM316,372h1v1h-1zM392,377h1v1h-1zM228,397h1v1h-1zM400,376h1v2h-1zM125,374h1v1h-1zM347,373h1v2h-1zM450,385h1v3h-1zM252,389h1v2h-1zM426,397h1v3h-1zM436,372h1v2h-1zM26,372h1v2h-1zM20,382h1v2h-1zM197,374h1v3h-1zM191,373h1v1h-1zM380,383h1v1h-1zM117,373h1v3h-1zM311,381h1v1h-1zM400,384h1v2h-1zM271,385h1v2h-1zM141,372h1v2h-1zM127,399h1v2h-1zM82,380h1v2h-1zM146,398h1v3h-1zM204,391h1v2h-1zM54,378h1v3h-1zM247,378h1v3h-1zM447,372h1v1h-1zM251,373h1v1h-1zM433,372h1v1h-1zM239,380h1v1h-1zM89,378h1v1h-1zM414,382h1v3h-1zM48,400h1v2h-1zM439,377h1v3h-1zM147,382h1v3h-1zM207,375h1v2h-1zM395,392h1v2h-1zM275,373h1v1h-1zM246,373h1v1h-1zM102,373h1v1h-1zM324,374h1v3h-1zM392,372h1v2h-1zM148,372h1v1h-1zM359,393h1v1h-1zM450,397h1v2h-1zM256,389h1v2h-1zM322,380h1v2h-1zM378,395h1v3h-1zM271,379h1v3h-1zM383,395h1v2h-1zM245,396h1v3h-1zM40,375h1v2h-1zM369,373h1v1h-1zM37,381h1v2h-1zM392,376h1v1h-1zM131,376h1v2h-1zM451,390h1v2h-1zM384,372h1v2h-1zM362,372h1v1h-1zM311,373h1v1h-1zM65,373h1v3h-1zM327,372h1v1h-1zM107,394h1v2h-1zM194,373h1v2h-1zM280,374h1v1h-1zM301,386h1v2h-1zM156,382h1v2h-1zM425,372h1v1h-1zM368,373h1v2h-1zM302,394h1v1h-1zM379,372h1v1h-1zM369,374h1v2h-1zM98,396h1v1h-1zM438,373h1v3h-1zM144,382h1v3h-1zM383,397h1v2h-1zM128,372h1v2h-1zM107,376h1v1h-1zM198,374h1v2h-1zM236,377h1v1h-1zM194,383h1v1h-1zM184,372h1v2h-1zM248,395h1v1h-1zM234,382h1v2h-1zM281,388h1v2h-1zM267,373h1v3h-1zM18,400h1v1h-1zM105,372h1v1h-1zM21,373h1v2h-1zM416,386h1v3h-1zM158,372h1v3h-1zM34,372h1v3h-1zM446,372h1v2h-1zM36,383h1v2h-1zM220,375h1v2h-1zM182,397h1v3h-1zM55,376h1v3h-1zM385,384h1v1h-1zM394,376h1v1h-1zM338,379h1v2h-1zM61,372h1v1h-1zM55,380h1v1h-1zM392,376h1v1h-1zM363,384h1v2h-1zM56,376h1v3h-1zM39,393h1v2h-1zM409,372h1v2h-1zM213,387h1v1h-1zM297,382h1v3h-1zM261,378h1v3h-1zM30,392h1v2h-1zM95,372h1v1h-1zM237,390h1v1h-1zM88,392h1v2h-1zM91,374h1v3h-1zM197,393h1v1h-1zM284,391h1v1h-1zM140,372h1v1h-1zM355,372h1v2h-1zM180,377h1v1h-1zM375,375h1v1h-1zM72,401h1v3h-1zM269,398h1v3h-1zM211,377h1v1h-1zM91,377h1v1h-1zM450,376h1v2h-1zM95,392h1v3h-1zM160,379h1v2h-1zM266,373h1v2h-1zM359,372h1v1h-1zM347,372h1v1h-1zM69,372h1v3h-1zM124,401h1v1h-1zM124,376h1v2h-1zM54,386h1v2h-1zM204,372h1v2h-1zM263,373h1v2h-1zM87,376h1v3h-1zM369,372h1v1h-1zM281,387h1v2h-1zM334,372h1v3h-1zM302,375h1v1h-1zM224,382h1v3h-1zM308,378h1v2h-1zM446,388h1v1h-1zM431,376h1v2h-1zM19,393h1v3h-1zM239,380h1v1h-1zM338,372h1v1h-1zM16,372h1v2h-1zM31,372h1v3h-1zM224,378h1v2h-1zM381,372h1v1h-1zM445,379h1v3h-1zM95,374h1v3h-1zM72,372h1v1h-1zM452,382h1v2h-1zM221,375h1v3h-1zM157,390h1v3h-1zM358,374h1v1h-1zM397,375h1v3h-1zM146,373h1v1h-1zM42,375h1v1h-1zM225,373h1v3h-1zM212,376h1v1h-1zM31,394h1v3h-1zM266,377h1v2h-1zM128,398h1v1h-1zM173,373h1v1h-1zM23,380h1v2h-1zM345,386h1v1h-1zM408,398h1v1h-1zM348,374h1v1h-1zM62,390h1v2h-1zM229,381h1v2h-1zM66,389h1v1h-1zM146,372h1v2h-1zM187,372h1v1h-1zM32,372h1v2h-1zM96,372h1v3h-1zM372,388h1v3h-1zM407,382h1v2h-1zM147,379h1v3h-1zM108,383h1v2h-1zM231,390h1v1h-1zM239,373h1v1h-1zM38,373h1v1h-1zM257,378h1v2h-1zM150,379h1v1h-1zM226,372h1v3h-1zM118,392h1v3h-1zM328,382h1v3h-1zM200,372h1v1h-1zM365,384h1v1h-1zM71,394h1v1h-1zM424,375h1v1h-1zM232,378h1v2h-1zM26,374h1v2h-1zM105,389h1v1h-1zM20,400h1v1h-1zM218,376h1v2h-1zM241,381h1v3h-1zM350,382h1v3h-1zM140,379h1v1h-1zM247,375h1v1h-1zM189,373h1v2h-1zM125,373h1v1h-1zM34,372h1v1h-1zM316,372h1v2h-1zM184,379h1v1h-1zM100,380h1v2h-1zM277,383h1v2h-1zM339,373h1v2h-1zM86,372h1v3h-1zM357,372h1v2h-1zM152,384h1v1h-1zM76,372h1v3h-1zM104,372h1v2h-1zM231,378h1v1h-1zM429,397h1v2h-1zM383,373h1v3h-1zM200,373h1v1h-1zM282,386h1v2h-1zM374,376h1v1h-1zM183,372h1v2h-1zM172,392h1v2h-1zM299,392h1v1h-1zM238,379h1v3h-1zM277,383h1v1h-1zM121,383h1v2h-1zM129,372h1v2h-1zM111,372h1v2h-1zM431,390h1v2h-1zM230,373h1v3h-1zM414,374h1v1h-1zM112,387h1v1h-1zM379,381h1v3h-1zM260,393h1v2h-1zM399,372h1v2h-1zM458,393h1v1h-1zM413,385h1v3h-1zM71,400h1v3h-1zM157,376h1v1h-1zM147,372h1v2h-1zM27,373h1v3h-1zM237,373h1v2h-1zM313,374h1v2h-1zM296,372h1v2h-1zM292,392h1v3h-1zM63,373h1v1h-1zM300,390h1v2h-1zM117,395h1v1h-1zM297,374h1v2h-1zM192,378h1v2h-1zM438,390h1v1h-1zM439,378h1v3h-1zM130,373h1v1h-1zM60,372h1v2h-1zM78,372h1v1h-1zM436,382h1v2h-1zM246,373h1v2h-1zM160,375h1v1h-1zM27,393h1v1h-1zM190,396h1v1h-1zM266,372h1v3h-1zM337,372h1v3h-1zM77,390h1v1h-1zM124,373h1v2h-1zM403,398h1v3h-1zM305,381h1v2h-1zM313,372h1v2h-1zM285,400h1v1h-1zM248,401h1v2h-1zM430,372h1v1h-1zM216,375h1v1h-1zM267,395h1v2h-1zM159,379h1v2h-1zM390,372h1v2h-1zM118,374h1v1h-1zM328,372h1v2h-1zM261,372h1v2h-1zM285,393h1v1h-1zM46,378h1v1h-1zM325,384h1v2h-1zM434,372h1v1h-1zM351,398h1v2h-1zM346,381h1v1h-1zM71,379h1v1h-1zM460,397h1v2h-1zM39,372h1v1h-1zM34,380h1v2h-1zM367,374h1v3h-1zM272,387h1v3h-1zM442,379h1v2h-1zM114,387h1v1h-1zM295,394h1v1h-1zM340,373h1v2h-1zM181,399h1v2h-1zM285,378h1v2h-1zM346,377h1v2h-1zM56,374h1v3h-1zM127,372h1v2h-1zM400,383h1v3h-1zM292,396h1v1h-1zM395,375h1v1h-1zM278,373h1v2h-1zM408,373h1v1h-1zM18,392h1v1h-1zM137,395h1v1h-1zM82,373h1v3h-1zM55,380h1v1h-1zM210,372h1v1h-1zM263,380h1v2h-1zM224,374h1v1h-1zM314,377h1v3h-1zM234,373h1v1h-1zM338,377h1v2h-1zM119,373h1v2h-1zM176,374h1v3h-1zM249,374h1v2h-1zM8,385h1v2h-1zM372,376h1v2h-1zM313,388h1v3h-1zM237,380h1v3h-1zM40,383h1v1h-1zM127,375h1v2h-1zM436,373h1v2h-1zM84,386h1v1h-1zM102,375h1v1h-1zM255,373h1v1h-1zM409,377h1v2h-1zM64,377h1v3h-1zM281,373h1v3h-1zM440,386h1v2h-1zM228,381h1v3h-1zM240,373h1v1h-1zM67,372h1v1h-1zM184,372h1v1h-1zM214,372h1v1h-1zM44,387h1v1h-1zM336,392h1v1h-1zM114,373h1v1h-1zM343,373h1v1h-1zM83,372h1v1h-1zM91,384h1v3h-1zM124,373h1v2h-1zM281,378h1v2h-1zM260,392h1v3h-1zM118,381h1v2h-1zM66,386h1v1h-1zM22,383h1v2h-1zM263,388h1v3h-1zM415,373h1v1h-1zM178,379h1v1h-1zM190,390h1v2h-1zM383,373h1v1h-1zM331,385h1v2h-1zM426,387h1v1h-1zM136,375h1v2h-1zM42,372h1v2h-1zM300,393h1v2h-1zM205,376h1v3h-1zM231,378h1v2h-1zM170,373h1v2h-1zM396,384h1v1h-1zM433,378h1v2h-1zM40,383h1v1h-1zM122,373h1v1h-1zM211,392h1v2h-1zM182,372h1v1h-1zM313,390h1v3h-1zM164,372h1v1h-1zM87,385h1v1h-1zM416,372h1v2h-1zM303,376h1v2h-1zM16,372h1v1h-1zM58,392h1v1h-1zM342,391h1v1h-1zM113,378h1v1h-1zM141,372h1v2h-1zM146,372h1v3h-1zM318,372h1v1h-1zM72,382h1v3h-1zM266,393h1v1h-1zM122,397h1v3h-1zM56,373h1v2h-1zM46,381h1v2h-1zM151,375h1v1h-1zM243,393h1v3h-1zM415,379h1v1h-1zM97,373h1v1h-1zM311,387h1v2h-1zM374,372h1v3h-1zM86,382h1v1h-1zM333,375h1v3h-1zM322,387h1v2h-1zM355,375h1v1h-1zM126,384h1v3h-1zM223,394h1v1h-1zM257,378h1v2h-1zM330,394h1v1h-1zM148,378h1v1h-1zM92,400h1v2h-1zM291,374h1v1h-1zM385,400h1v3h-1zM240,372h1v2h-1zM27,376h1v1h-1zM193,381h1v1h-1zM287,372h1v1h-1zM135,386h1v3h-1zM147,373h1v1h-1zM390,377h1v3h-1zM159,381h1v1h-1zM244,385h1v1h-1zM199,394h1v1h-1zM100,388h1v2h-1zM198,400h1v1h-1zM309,372h1v3h-1zM80,388h1v1h-1zM337,394h1v3h-1zM373,373h1v2h-1zM334,375h1v3h-1zM121,390h1v1h-1zM449,379h1v2h-1zM218,389h1v2h-1zM39,389h1v1h-1zM44,384h1v2h-1zM74,383h1v2h-1zM317,400h1v2h-1zM193,373h1v1h-1zM223,378h1v2h-1zM92,390h1v1h-1zM413,397h1v2h-1zM409,373h1v2h-1zM275,372h1v1h-1zM206,384h1v2h-1zM370,388h1v1h-1zM394,372h1v3h-1zM396,373h1v2h-1zM182,383h1v3h-1zM301,394h1v2h-1zM262,372h1v1h-1zM369,396h1v2h-1zM309,381h1v1h-1zM204,396h1v2h-1zM328,380h1v2h-1zM140,373h1v1h-1zM296,377h1v2h-1zM24,374h1v2h-1zM388,375h1v1h-1zM148,381h1v2h-1zM310,375h1v2h-1zM412,389h1v2h-1zM393,400h1v1h-1zM189,383h1v1h-1zM140,377h1v2h-1zM259,374h1v3h-1zM334,378h1v1h-1zM328,401h1v1h-1zM253,392h1v1h-1zM260,375h1v2h-1zM251,373h1v2h-1zM371,373h1v1h-1zM163,379h1v2h-1zM226,388h1v1h-1zM314,386h1v2h-1zM302,373h1v2h-1zM191,372h1v1h-1zM307,382h1v1h-1zM179,387h1v1h-1zM233,378h1v2h-1zM58,383h1v1h-1zM450,398h1v1h-1zM176,374h1v2h-1zM283,393h1v2h-1zM339,389h1v1h-1zM396,390h1v1h-1zM328,374h1v1h-1zM216,399h1v1h-1zM76,396h1v1h-1zM48,400h1v1h-1zM261,398h1v3h-1zM28,381h1v1h-1zM226,375h1v2h-1zM428,377h1v1h-1zM459,390h1v2h-1zM136,374h1v1h-1zM326,380h1v1h-1zM386,380h1v2h-1zM166,375h1v2h-1zM342,390h1v2h-1zM138,400h1v1h-1zM27,373h1v1h-1zM122,398h1v2h-1zM443,398h1v2h-1zM311,377h1v3h-1zM380,374h1v2h-1zM290,376h1v2h-1zM419,373h1v2h-1zM34,373h1v2h-1zM174,390h1v2h-1zM247,400h1v2h-1zM143,399h1v1h-1zM383,385h1v3h-1zM426,376h1v2h-1zM176,372h1v2h-1zM177,382h1v3h-1zM426,386h1v1h-1zM303,376h1v2h-1zM308,373h1v2h-1zM38,372h1v2h-1zM133,374h1v3h-1zM375,372h1v1h-1zM239,385h1v2h-1zM153,372h1v3h-1zM21,379h1v1h-1zM93,380h1v2h-1zM297,397h1v2h-1zM431,374h1v3h-1zM192,375h1v1h-1zM157,378h1v1h-1zM289,380h1v3h-1zM44,373h1v1h-1zM151,382h1v2h-1zM213,389h1v1h-1zM216,377h1v2h-1zM388,386h1v1h-1zM228,387h1v1h-1zM305,374h1v2h-1zM98,374h1v2h-1zM388,375h1v2h-1zM141,372h1v1h-1zM415,377h1v2h-1zM19,373h1v1h-1zM130,395h1v1h-1zM215,376h1v2h-1zM447,377h1v2h-1zM455,389h1v2h-1zM215,394h1v2h-1zM448,372h1v2h-1zM36,388h1v2h-1zM91,378h1v1h-1zM136,400h1v1h-1zM42,391h1v2h-1zM243,381h1v2h-1zM209,381h1v2h-1zM25,374h1v1h-1zM122,373h1v3h-1zM119,379h1v3h-1zM89,373h1v2h-1zM69,373h1v2h-1zM89,398h1v3h-1zM381,381h1v1h-1zM236,393h1v3h-1zM36,391h1v2h-1zM267,372h1v1h-1zM366,379h1v1h-1zM90,376h1v1h-1zM200,382h1v1h-1zM411,380h1v3h-1zM131,372h1v2h-1zM395,372h1v2h-1zM172,374h1v2h-1zM239,372h1v1h-1zM363,372h1v3h-1zM49,372h1v3h-1zM37,373h1v2h-1zM109,387h1v1h-1zM165,372h1v2h-1zM444,378h1v1h-1zM195,395h1v1h-1zM16,383h1v3h-1zM126,373h1v2h-1zM73,379h1v3h-1zM85,396h1v1h-1zM116,377h1v3h-1zM422,390h1v1h-1zM32,388h1v3h-1zM191,398h1v2h-1zM248,373h1v1h-1zM133,372h1v1h-1zM308,376h1v1h-1zM171,379h1v1h-1zM107,394h1v3h-1zM244,391h1v2h-1zM408,376h1v1h-1zM97,396h1v3h-1zM209,373h1v3h-1zM317,372h1v1h-1zM75,386h1v2h-1zM95,374h1v2h-1zM255,396h1v2h-1zM409,399h1v3h-1zM417,382h1v3h-1zM228,373h1v1h-1zM103,373h1v2h-1zM280,380h1v2h-1zM171,382h1v1h-1zM393,381h1v2h-1zM57,396h1v2h-1zM229,375h1v1h-1zM363,377h1v2h-1zM306,374h1v2h-1zM412,375h1v1h-1zM352,373h1v2h-1zM445,376h1v1h-1zM185,386h1v1h-1zM49,373h1v2h-1zM287,373h1v2h-1zM112,380h1v2h-1zM83,391h1v2h-1zM178,377h1v1h-1zM389,373h1v3h-1zM131,400h1v3h-1zM328,392h1v2h-1zM26,376h1v3h-1zM178,372h1v2h-1zM33,396h1v2h-1zM350,378h1v1h-1zM184,373h1v1h-1zM265,376h1v2h-1zM279,394h1v1h-1zM233,375h1v2h-1zM292,372h1v1h-1zM439,380h1v1h-1zM15,372h1v2h-1zM273,395h1v1h-1zM146,388h1v1h-1zM289,384h1v2h-1zM376,381h1v1h-1zM73,392h1v2h-1zM23,372h1v2h-1zM160,380h1v3h-1zM368,375h1v2h-1zM364,392h1v1h-1zM442,372h1v2h-1zM212,372h1v3h-1zM112,372h1v1h-1zM348,373h1v2h-1zM292,372h1v3h-1zM247,372h1v1h-1zM57,393h1v1h-1zM415,384h1v2h-1zM259,376h1v1h-1zM117,387h1v3h-1zM271,374h1v1h-1zM325,373h1v3h-1zM136,372h1v2h-1zM434,397h1v2h-1zM411,398h1v1h-1zM330,379h1v1h-1zM228,386h1v1h-1zM283,392h1v3h-1zM420,377h1v2h-1zM447,372h1v3h-1zM266,384h1v1h-1zM383,387h1v1h-1zM189,395h1v1h-1zM461,392h1v2h-1zM337,380h1v2h-1zM345,375h1v2h-1zM189,373h1v3h-1zM195,374h1v1h-1zM192,375h1v2h-1zM157,372h1v1h-1zM295,373h1v1h-1zM348,381h1v1h-1zM407,379h1v3h-1zM210,373h1v2h-1zM208,372h1v1h-1zM367,377h1v3h-1zM8,385h1v2h-1zM263,382h1v2h-1zM118,385h1v3h-1zM33,376h1v2h-1zM203,383h1v2h-1zM259,392h1v1h-1zM276,373h1v1h-1zM98,375h1v2h-1zM353,374h1v1h-1zM388,372h1v1h-1zM160,372h1v3h-1zM152,375h1v2h-1zM304,384h1v2h-1zM112,394h1v1h-1zM156,377h1v1h-1zM420,379h1v2h-1zM140,373h1v1h-1zM160,372h1v2h-1zM423,379h1v2h-1zM323,387h1v1h-1zM251,381h1v1h-1zM15,392h1v3h-1zM43,385h1v2h-1zM80,372h1v2h-1zM310,373h1v1h-1zM119,374h1v2h-1zM171,373h1v1h-1zM38,375h1v2h-1zM108,375h1v2h-1zM276,382h1v3h-1zM256,383h1v1h-1zM364,377h1v1h-1zM240,372h1v1h-1zM280,372h1v2h-1zM284,372h1v1h-1zM72,372h1v3h-1zM354,379h1v1h-1zM311,395h1v3h-1zM97,373h1v3h-1zM50,379h1v1h-1zM260,373h1v2h-1zM131,383h1v2h-1zM130,378h1v1h-1zM331,372h1v2h-1zM227,379h1v2h-1zM294,381h1v1h-1zM95,373h1v2h-1zM93,398h1v1h-1zM130,377h1v2h-1zM426,391h1v2h-1zM141,375h1v1h-1zM148,375h1v1h-1zM165,379h1v2h-1zM169,375h1v2h-1zM163,373h1v1h-1zM320,373h1v3h-1zM129,390h1v3h-1zM140,389h1v2h-1zM92,372h1v3h-1zM39,397h1v1h-1zM435,372h1v2h-1zM238,380h1v2h-1zM243,372h1v1h-1zM318,376h1v3h-1zM279,376h1v2h-1zM258,375h1v1h-1zM254,374h1v3h-1zM206,379h1v2h-1zM211,372h1v2h-1zM142,375h1v1h-1zM301,373h1v2h-1zM234,398h1v1h-1zM221,374h1v1h-1zM31,389h1v2h-1zM368,374h1v2h-1zM240,372h1v1h-1zM438,372h1v1h-1zM240,376h1v1h-1zM65,372h1v1h-1zM76,383h1v1h-1zM203,373h1v2h-1zM234,373h1v1h-1zM340,387h1v3h-1zM240,372h1v1h-1zM123,398h1v1h-1zM277,393h1v2h-1zM264,388h1v1h-1zM304,384h1v2h-1zM249,396h1v2h-1zM18,377h1v1h-1zM425,372h1v2h-1zM172,374h1v2h-1zM207,374h1v1h-1zM38,372h1v2h-1zM422,382h1v2h-1zM176,374h1v2h-1zM163,374h1v1h-1zM339,377h1v1h-1zM159,372h1v2h-1zM377,389h1v1h-1zM338,393h1v1h-1zM254,372h1v1h-1zM215,373h1v2h-1zM158,372h1v1h-1zM382,380h1v3h-1zM202,387h1v2h-1zM329,372h1v2h-1zM244,393h1v2h-1zM47,380h1v2h-1zM210,376h1v1h-1zM331,393h1v2h-1zM186,374h1v2h-1zM361,372h1v3h-1zM308,386h1v1h-1zM170,374h1v1h-1zM113,372h1v3h-1zM92,383h1v3h-1zM446,372h1v2h-1zM222,397h1v2h-1zM181,387h1v3h-1zM164,393h1v1h-1zM177,372h1v2h-1zM360,389h1v3h-1zM248,383h1v2h-1zM329,391h1v3h-1zM193,384h1v3h-1zM316,374h1v1h-1zM411,390h1v3h-1zM97,389h1v1h-1zM88,373h1v1h-1zM324,380h1v1h-1zM309,393h1v1h-1zM103,398h1v3h-1zM369,387h1v2h-1zM389,372h1v1h-1zM82,380h1v2h-1zM20,388h1v1h-1zM67,373h1v1h-1zM310,387h1v1h-1zM30,372h1v1h-1zM161,398h1v1h-1zM40,378h1v1h-1zM365,372h1v3h-1zM447,387h1v1h-1zM285,386h1v2h-1zM389,388h1v2h-1zM74,372h1v3h-1zM137,372h1v2h-1zM215,388h1v2h-1zM255,373h1v1h-1zM242,372h1v1h-1zM83,380h1v2h-1zM233,393h1v3h-1zM307,372h1v1h-1zM359,398h1v1h-1zM324,382h1v1h-1zM288,376h1v3h-1zM286,374h1v3h-1zM126,389h1v2h-1zM312,386h1v2h-1zM243,394h1v3h-1zM269,392h1v1h-1zM250,373h1v1h-1zM64,374h1v2h-1zM344,372h1v2h-1zM183,376h1v1h-1zM57,400h1v1h-1zM214,397h1v2h-1zM100,393h1v2h-1zM289,380h1v1h-1zM122,380h1v3h-1zM45,398h1v2h-1zM149,387h1v2h-1zM53,381h1v1h-1zM410,372h1v1h-1zM282,373h1v3h-1zM267,399h1v1h-1zM334,378h1v1h-1zM314,376h1v3h-1zM58,372h1v2h-1zM302,372h1v2h-1zM404,372h1v3h-1zM364,375h1v3h-1zM201,373h1v2h-1zM359,395h1v2h-1zM141,383h1v2h-1zM430,378h1v1h-1zM83,372h1v2h-1zM127,383h1v2h-1zM16,400h1v3h-1zM94,384h1v2h-1zM51,375h1v2h-1zM58,375h1v1h-1zM192,373h1v1h-1zM428,382h1v1h-1zM442,372h1v2h-1zM190,380h1v2h-1zM62,381h1v2h-1zM429,373h1v1h-1zM250,374h1v2h-1zM97,372h1v2h-1zM153,386h1v1h-1zM378,385h1v2h-1zM257,373h1v2h-1zM433,378h1v2h-1zM432,396h1v2h-1zM66,374h1v3h-1zM375,372h1v2h-1zM284,398h1v2h-1zM146,376h1v1h-1zM173,387h1v2h-1zM415,372h1v2h-1zM261,373h1v2h-1zM166,399h1v3h-1zM225,375h1v2h-1zM108,372h1v1h-1zM218,376h1v2h-1zM123,393h1v3h-1zM239,375h1v2h-1zM57,379h1v1h-1zM193,373h1v2h-1zM56,384h1v1h-1zM191,378h1v2h-1zM200,374h1v2h-1zM173,373h1v1h-1zM182,372h1v1h-1zM57,394h1v2h-1zM284,393h1v3h-1zM428,377h1v1h-1zM344,395h1v2h-1zM359,389h1v1h-1zM38,377h1v1h-1zM379,373h1v2h-1zM158,379h1v3h-1zM99,378h1v3h-1zM112,374h1v1h-1zM186,385h1v2h-1zM297,378h1v2h-1zM44,383h1v2h-1zM394,372h1v2h-1zM127,372h1v2h-1zM60,372h1v2h-1zM119,374h1v2h-1zM221,391h1v1h-1zM317,398h1v2h-1zM206,373h1v1h-1zM160,374h1v1h-1zM310,385h1v1h-1zM377,394h1v2h-1zM301,376h1v1h-1zM73,401h1v2h-1zM379,373h1v2h-1zM200,373h1v2h-1zM401,373h1v3h-1zM160,392h1v2h-1zM149,372h1v1h-1zM319,375h1v1h-1zM425,374h1v3h-1zM241,373h1v1h-1zM118,382h1v1h-1zM379,388h1v2h-1zM64,379h1v1h-1zM265,373h1v2h-1zM391,374h1v3h-1zM148,387h1v1h-1zM271,372h1v2h-1zM283,372h1v3h-1zM449,376h1v3h-1zM100,373h1v1h-1zM426,385h1v1h-1z"/><path fill="#000" shape-rendering="crispEdges" d="M52,367h1v1h-1zM59,365h1v2h-1zM45,380h1v1h-1zM59,367h1v1h-1zM53,371h1v1h-1zM24,363h1v2h-1zM58,362h1v2h-1zM51,379h1v1h-1zM32,379h1v1h-1zM18,380h1v3h-1zM20,375h1v1h-1zM11,383h1v1h-1zM42,370h1v1h-1zM18,369h1v1h-1zM23,382h1v1h-1zM30,374h1v2h-1zM21,380h1v1h-1zM33,375h1v1h-1zM48,379h1v2h-1zM34,377h1v2h-1zM34,365h1v3h-1zM30,362h1v3h-1zM40,364h1v1h-1zM48,379h1v1h-1zM52,384h1v1h-1zM42,368h1v3h-1zM22,362h1v1h-1zM31,371h1v1h-1zM34,368h1v3h-1zM55,361h1v2h-1zM24,371h1v3h-1zM37,377h1v1h-1zM33,377h1v1h-1zM30,377h1v1h-1zM27,366h1v1h-1zM54,365h1v1h-1zM17,370h1v2h-1zM30,366h1v3h-1zM38,368h1v3h-1zM28,370h1v2h-1zM50,374h1v3h-1zM57,360h1v3h-1zM33,363h1v1h-1zM38,363h1v3h-1zM50,366h1v2h-1zM24,373h1v2h-1zM27,379h1v2h-1zM39,374h1v3h-1zM21,371h1v2h-1zM34,365h1v2h-1zM41,369h1v2h-1zM54,372h1v2h-1zM35,380h1v3h-1zM14,376h1v1h-1zM46,373h1v2h-1zM34,362h1v2h-1zM50,363h1v2h-1zM50,384h1v2h-1zM51,366h1v2h-1zM29,381h1v3h-1zM27,383h1v1h-1zM43,383h1v3h-1zM51,366h1v1h-1zM36,377h1v2h-1zM39,370h1v1h-1zM55,364h1v3h-1zM50,368h1v2h-1zM11,382h1v1h-1zM24,367h1v2h-1zM36,383h1v1h-1zM44,368h1v2h-1zM48,371h1v3h-1zM19,372h1v2h-1zM46,368h1v2h-1zM44,366h1v1h-1zM39,379h1v1h-1zM41,363h1v2h-1zM24,365h1v1h-1zM52,377h1v2h-1zM35,378h1v1h-1zM15,383h1v1h-1zM35,362h1v2h-1zM33,375h1v2h-1zM18,383h1v1h-1zM22,379h1v1h-1zM48,374h1v1h-1zM15,379h1v1h-1zM51,379h1v2h-1zM20,382h1v3h-1zM46,362h1v2h-1zM49,374h1v1h-1zM43,378h1v1h-1zM30,361h1v2h-1zM35,378h1v2h-1zM21,372h1v2h-1zM39,379h1v2h-1zM34,379h1v3h-1zM30,374h1v2h-1zM60,360h1v3h-1zM13,383h1v3h-1zM33,364h1v3h-1zM33,365h1v2h-1zM57,372h1v1h-1zM54,367h1v2h-1zM53,363h1v2h-1zM42,368h1v2h-1zM36,381h1v2h-1zM44,369h1v1h-1zM54,368h1v1h-1zM25,364h1v3h-1zM16,374h1v1h-1zM41,363h1v1h-1zM57,373h1v1h-1zM51,377h1v2h-1zM44,378h1v1h-1zM59,368h1v2h-1zM28,366h1v3h-1zM20,367h1v1h-1zM36,373h1v1h-1zM14,378h1v1h-1zM59,363h1v2h-1zM37,377h1v2h-1zM16,372h1v1h-1zM49,374h1v3h-1zM26,379h1v1h-1zM24,370h1v1h-1zM46,365h1v2h-1zM28,372h1v2h-1zM49,378h1v2h-1zM28,372h1v1h-1zM47,380h1v2h-1zM59,367h1v1h-1zM18,377h1v1h-1zM48,366h1v2h-1zM41,367h1v1h-1zM40,377h1v3h-1zM34,374h1v3h-1zM40,364h1v2h-1zM38,368h1v2h-1zM44,363h1v2h-1zM40,361h1v2h-1zM46,364h1v3h-1zM11,383h1v1h-1zM28,366h1v1h-1z"/><path fill="#000" shape-rendering="crispEdges" d="M459,398h1v3h-1zM444,393h1v2h-1zM428,367h1v1h-1zM451,391h1v3h-1zM434,370h1v1h-1zM421,390h1v1h-1zM434,360h1v1h-1zM421,373h1v1h-1zM451,378h1v2h-1zM437,369h1v1h-1zM421,369h1v2h-1zM426,383h1v4h-1zM427,383h1v4h-1zM445,384h1v4h-1zM439,375h1v1h-1zM461,396h1v1h-1zM432,376h1v4h-1zM422,383h1v2h-1zM434,380h1v2h-1zM426,374h1v3h-1zM451,387h1v1h-1zM424,389h1v3h-1zM451,391h1v4h-1zM445,374h1v4h-1zM442,386h1v3h-1zM447,385h1v4h-1zM436,366h1v4h-1zM428,396h1v2h-1zM426,377h1v1h-1zM436,365h1v1h-1zM429,368h1v1h-1zM442,380h1v4h-1zM435,380h1v3h-1zM438,396h1v1h-1zM434,371h1v4h-1zM436,379h1v3h-1zM434,365h1v1h-1zM447,383h1v1h-1zM435,365h1v1h-1zM424,374h1v2h-1zM441,394h1v2h-1zM440,395h1v1h-1zM439,372h1v3h-1zM456,397h1v4h-1zM440,389h1v1h-1zM448,375h1v1h-1zM456,388h1v4h-1zM443,379h1v1h-1zM448,385h1v2h-1zM420,381h1v1h-1zM424,383h1v4h-1zM459,392h1v4h-1zM425,367h1v1h-1zM420,387h1v1h-1zM431,364h1v2h-1zM434,362h1v1h-1zM431,369h1v1h-1zM445,398h1v1h-1zM434,366h1v2h-1zM435,374h1v4h-1zM434,378h1v3h-1zM446,397h1v4h-1zM441,374h1v2h-1zM449,399h1v4h-1zM440,385h1v2h-1zM431,372h1v2h-1zM456,397h1v1h-1zM429,358h1v1h-1zM434,363h1v4h-1zM431,365h1v2h-1zM428,399h1v3h-1zM426,379h1v1h-1zM421,369h1v4h-1zM440,376h1v3h-1zM450,385h1v4h-1zM451,384h1v2h-1zM443,373h1v1h-1zM459,394h1v1h-1zM444,389h1v3h-1zM453,384h1v1h-1zM450,394h1v3h-1zM442,388h1v1h-1zM430,363h1v3h-1zM425,395h1v1h-1zM422,368h1v1h-1zM431,362h1v1h-1zM428,355h1v4h-1zM423,390h1v1h-1zM443,391h1v4h-1zM431,382h1v4h-1zM428,348h1v3h-1zM438,372h1v4h-1zM453,399h1v1h-1zM439,400h1v4h-1zM447,392h1v3h-1zM463,400h1v4h-1zM446,398h1v1h-1zM428,356h1v3h-1zM443,372h1v1h-1zM427,396h1v1h-1zM444,395h1v2h-1zM434,364h1v4h-1zM422,364h1v1h-1zM460,396h1v1h-1zM427,370h1v2h-1zM426,376h1v1h-1zM422,373h1v2h-1zM447,394h1v4h-1zM449,386h1v4h-1zM437,382h1v2h-1zM447,397h1v1h-1zM424,380h1v1h-1zM439,370h1v1h-1zM428,378h1v1h-1zM430,367h1v4h-1zM456,387h1v3h-1zM446,378h1v1h-1zM428,368h1v1h-1zM452,394h1v1h-1zM423,398h1v1h-1zM435,380h1v2h-1zM452,393h1v1h-1zM438,364h1v1h-1zM453,382h1v4h-1zM438,363h1v1h-1zM459,397h1v1h-1zM442,380h1v4h-1zM442,371h1v1h-1zM429,372h1v1h-1zM429,351h1v1h-1zM453,384h1v1h-1zM454,398h1v3h-1zM421,362h1v4h-1zM439,374h1v1h-1zM432,396h1v1h-1zM425,347h1v4h-1zM435,358h1v1h-1zM426,361h1v2h-1zM427,382h1v1h-1zM442,398h1v4h-1zM441,397h1v3h-1zM454,387h1v4h-1zM438,377h1v1h-1zM425,365h1v1h-1zM437,380h1v4h-1zM424,378h1v1h-1zM433,388h1v1h-1zM427,382h1v1h-1zM428,390h1v4h-1zM440,383h1v3h-1zM428,373h1v1h-1zM461,397h1v2h-1zM422,365h1v3h-1zM431,365h1v1h-1zM422,372h1v1h-1zM444,396h1v1h-1zM428,387h1v1h-1zM451,386h1v4h-1zM423,388h1v2h-1zM439,376h1v3h-1zM446,375h1v2h-1zM460,393h1v2h-1zM447,379h1v2h-1zM441,387h1v2h-1zM430,376h1v2h-1zM421,393h1v3h-1zM436,374h1v3h-1zM460,395h1v4h-1zM454,391h1v1h-1zM453,391h1v4h-1zM425,349h1v4h-1zM424,361h1v1h-1zM420,361h1v1h-1zM441,379h1v2h-1zM438,389h1v1h-1zM431,361h1v4h-1zM465,397h1v1h-1zM424,364h1v1h-1zM421,367h1v3h-1zM429,383h1v2h-1zM441,372h1v2h-1zM437,375h1v4h-1zM428,395h1v3h-1zM445,370h1v4h-1zM424,383h1v2h-1zM434,389h1v1h-1zM433,380h1v2h-1zM425,363h1v3h-1zM442,383h1v1h-1zM435,382h1v2h-1zM431,365h1v1h-1zM428,381h1v1h-1zM430,380h1v2h-1zM423,387h1v3h-1zM428,397h1v3h-1zM427,390h1v1h-1zM423,357h1v3h-1zM421,382h1v2h-1zM435,393h1v2h-1zM444,369h1v4h-1zM424,367h1v1h-1zM442,373h1v2h-1zM426,382h1v2h-1zM424,396h1v3h-1zM424,382h1v4h-1zM428,383h1v2h-1zM437,395h1v3h-1zM422,366h1v1h-1zM451,397h1v2h-1zM428,379h1v1h-1zM427,362h1v3h-1zM438,397h1v4h-1zM441,398h1v1h-1zM426,393h1v4h-1zM422,361h1v1h-1zM433,365h1v3h-1zM437,365h1v2h-1zM430,351h1v1h-1zM436,378h1v1h-1zM434,383h1v4h-1zM426,398h1v4h-1zM428,362h1v1h-1zM438,365h1v4h-1zM440,367h1v3h-1zM438,394h1v2h-1zM430,349h1v1h-1zM431,353h1v2h-1zM441,382h1v4h-1zM439,375h1v4h-1zM433,358h1v2h-1zM432,369h1v4h-1zM422,387h1v1h-1zM420,387h1v4h-1zM439,366h1v1h-1zM447,398h1v1h-1zM453,385h1v3h-1zM460,400h1v2h-1zM421,366h1v1h-1zM428,388h1v3h-1zM439,366h1v1h-1zM426,388h1v1h-1zM444,391h1v2h-1zM457,390h1v2h-1zM451,392h1v1h-1zM451,396h1v3h-1zM422,383h1v2h-1zM457,391h1v1h-1zM446,377h1v3h-1zM444,395h1v1h-1zM432,388h1v4h-1zM426,388h1v1h-1zM462,399h1v2h-1zM431,354h1v3h-1zM453,391h1v2h-1zM435,373h1v1h-1zM447,381h1v2h-1zM457,392h1v2h-1zM433,390h1v3h-1zM448,378h1v2h-1zM426,372h1v1h-1zM453,399h1v1h-1z"/><path d="M3,395 L470,391.5 M3,384 L35,344 M426,331 L470,391" fill="none" stroke="#88c020" stroke-width="1.1"/><path d="M3,405 L472,402 M3,387 L37,346 M431,329 L472,402" fill="none" stroke="#50a050" stroke-width="1.1"/><path d="M20,291 L436,289 L434,300 L430,340 L426,377 L43,383 L39,370 L35,350 L31,330 L27,310 Z" fill="#080604"/><path d="M11,284 L216,284 L216,291 L8,291 Z" fill="#070504"/><path d="M14,287.5 H214" stroke="#2e2214" stroke-width="1.5"/><path d="M44,299 L224,298.7" stroke="#2a1f10" stroke-width="3"/><path d="M44,298 L224,297.7" stroke="#3a2a16" stroke-width="1"/><path d="M238,298.7 L410,298.4" stroke="#2a1f10" stroke-width="3"/><path d="M238,297.7 L410,297.4" stroke="#3a2a16" stroke-width="1"/><path d="M46,310.5 L224,310.2" stroke="#2a1f10" stroke-width="3"/><path d="M46,309.5 L224,309.2" stroke="#3a2a16" stroke-width="1"/><path d="M238,310.2 L410,309.9" stroke="#2a1f10" stroke-width="3"/><path d="M238,309.2 L410,308.9" stroke="#3a2a16" stroke-width="1"/><path d="M48,322 L224,321.7" stroke="#2a1f10" stroke-width="3"/><path d="M48,321 L224,320.7" stroke="#3a2a16" stroke-width="1"/><path d="M238,321.7 L410,321.4" stroke="#2a1f10" stroke-width="3"/><path d="M238,320.7 L410,320.4" stroke="#3a2a16" stroke-width="1"/><path d="M51,333.5 L224,333.2" stroke="#2a1f10" stroke-width="3"/><path d="M51,332.5 L224,332.2" stroke="#3a2a16" stroke-width="1"/><path d="M238,333.2 L410,332.9" stroke="#2a1f10" stroke-width="3"/><path d="M238,332.2 L410,331.9" stroke="#3a2a16" stroke-width="1"/><path d="M53,345 L224,344.7" stroke="#2a1f10" stroke-width="3"/><path d="M53,344 L224,343.7" stroke="#3a2a16" stroke-width="1"/><path d="M238,344.7 L410,344.4" stroke="#2a1f10" stroke-width="3"/><path d="M238,343.7 L410,343.4" stroke="#3a2a16" stroke-width="1"/><path d="M55,356 L224,355.7" stroke="#2a1f10" stroke-width="3"/><path d="M55,355 L224,354.7" stroke="#3a2a16" stroke-width="1"/><path d="M238,355.7 L410,355.4" stroke="#2a1f10" stroke-width="3"/><path d="M238,354.7 L410,354.4" stroke="#3a2a16" stroke-width="1"/><path d="M57,366.5 L224,366 M238,366 L405,365" stroke="#5a5448" stroke-width="2"/><rect x="224" y="272" width="14" height="96" fill="#040302"/><path d="M229,299 L225,302 L228,304" stroke="#9a7840" stroke-width="2" fill="none"/><path d="M229,311 L225,314 L228,316" stroke="#9a7840" stroke-width="2" fill="none"/><path d="M229,323 L225,326 L228,328" stroke="#9a7840" stroke-width="2" fill="none"/><path d="M229,335 L225,338 L228,340" stroke="#9a7840" stroke-width="2" fill="none"/><path d="M229,347 L225,350 L228,352" stroke="#9a7840" stroke-width="2" fill="none"/><path d="M229,359 L225,362 L228,364" stroke="#9a7840" stroke-width="2" fill="none"/><path d="M408,289 L436,289 L432,305 L428,340 L424,377 L404,377 L404,300 Z" fill="#040302"/><path d="M419,295 L414,301 L418,304" stroke="#b08850" stroke-width="2.6" fill="none"/><path d="M418,306 L413,312 L417,315" stroke="#b08850" stroke-width="2.6" fill="none"/><path d="M417,317 L412,323 L416,326" stroke="#b08850" stroke-width="2.6" fill="none"/><path d="M415,328 L410,334 L414,337" stroke="#b08850" stroke-width="2.6" fill="none"/><path d="M414,339 L409,345 L413,348" stroke="#b08850" stroke-width="2.6" fill="none"/><path d="M413,350 L408,356 L412,359" stroke="#b08850" stroke-width="2.6" fill="none"/><path d="M412,361 L407,367 L411,370" stroke="#b08850" stroke-width="2.6" fill="none"/><rect x="238" y="272" width="179" height="15" fill="#5e584c"/><path fill="#2a2820" shape-rendering="crispEdges" d="M327,282h1v3h-1zM363,280h1v1h-1zM238,281h1v1h-1zM401,280h1v1h-1zM304,280h1v2h-1zM290,278h1v2h-1zM336,284h1v2h-1zM325,277h1v1h-1zM322,279h1v2h-1zM307,278h1v2h-1zM244,276h1v2h-1zM318,282h1v1h-1zM312,275h1v2h-1zM277,280h1v2h-1zM282,277h1v1h-1zM309,276h1v2h-1zM296,275h1v1h-1zM395,284h1v2h-1zM401,278h1v2h-1zM359,273h1v1h-1zM350,277h1v3h-1zM363,277h1v1h-1zM260,274h1v2h-1zM370,284h1v2h-1zM254,286h1v2h-1zM376,272h1v3h-1zM268,285h1v2h-1zM300,283h1v1h-1zM352,272h1v1h-1zM277,282h1v2h-1zM316,286h1v1h-1zM301,286h1v3h-1zM311,283h1v2h-1zM239,282h1v1h-1zM397,272h1v2h-1zM396,276h1v1h-1zM348,284h1v3h-1zM407,283h1v1h-1zM342,283h1v1h-1zM284,276h1v3h-1zM392,275h1v1h-1zM281,284h1v1h-1zM358,279h1v2h-1zM280,286h1v1h-1zM392,277h1v1h-1zM254,283h1v2h-1zM362,275h1v1h-1zM247,285h1v2h-1zM319,284h1v3h-1zM304,277h1v1h-1zM278,282h1v2h-1zM397,273h1v1h-1zM329,283h1v2h-1zM245,281h1v1h-1zM274,286h1v2h-1zM393,277h1v3h-1zM395,286h1v2h-1zM359,279h1v1h-1zM417,284h1v2h-1zM311,274h1v3h-1zM252,275h1v2h-1zM275,281h1v3h-1zM359,284h1v2h-1zM356,284h1v2h-1zM363,281h1v1h-1zM364,276h1v2h-1zM256,281h1v1h-1zM395,277h1v1h-1zM403,286h1v2h-1zM359,283h1v1h-1zM346,283h1v1h-1zM343,278h1v3h-1zM405,277h1v3h-1zM342,280h1v2h-1zM277,279h1v2h-1zM265,277h1v3h-1zM404,281h1v1h-1zM289,274h1v2h-1zM393,272h1v3h-1zM416,273h1v1h-1zM251,284h1v2h-1zM335,285h1v1h-1zM336,276h1v2h-1zM399,275h1v1h-1zM364,273h1v2h-1zM384,274h1v1h-1zM296,276h1v2h-1zM352,275h1v1h-1zM349,276h1v1h-1zM289,286h1v2h-1zM346,275h1v2h-1zM398,278h1v1h-1zM293,287h1v2h-1zM403,280h1v2h-1zM259,278h1v1h-1zM396,285h1v3h-1zM324,286h1v1h-1zM392,282h1v2h-1zM399,280h1v2h-1zM291,285h1v2h-1zM307,277h1v2h-1zM327,273h1v2h-1zM311,275h1v2h-1zM349,278h1v1h-1zM244,273h1v1h-1zM259,285h1v2h-1zM395,284h1v1h-1zM323,275h1v1h-1zM305,276h1v1h-1zM403,284h1v1h-1zM359,272h1v3h-1zM326,281h1v3h-1zM301,287h1v3h-1zM253,286h1v2h-1zM275,284h1v1h-1zM351,287h1v1h-1zM243,279h1v2h-1zM299,273h1v1h-1zM352,278h1v1h-1zM404,272h1v3h-1zM281,281h1v3h-1zM401,286h1v2h-1zM413,287h1v1h-1zM391,283h1v1h-1zM318,285h1v1h-1zM253,283h1v1h-1zM316,276h1v3h-1zM309,282h1v3h-1zM412,283h1v1h-1zM345,276h1v3h-1zM401,277h1v2h-1zM291,273h1v2h-1zM304,283h1v2h-1zM333,282h1v1h-1zM319,274h1v2h-1zM386,280h1v2h-1zM341,286h1v3h-1zM249,282h1v1h-1zM306,286h1v3h-1zM246,280h1v2h-1zM373,281h1v1h-1zM271,284h1v1h-1zM285,283h1v2h-1zM375,278h1v3h-1zM388,276h1v2h-1zM378,279h1v2h-1zM271,283h1v1h-1zM267,281h1v1h-1zM304,277h1v3h-1zM294,273h1v2h-1zM327,273h1v2h-1zM246,285h1v2h-1zM380,280h1v2h-1zM384,278h1v2h-1zM254,280h1v3h-1zM326,281h1v2h-1zM295,274h1v1h-1zM286,285h1v3h-1zM322,274h1v3h-1zM284,281h1v2h-1zM371,280h1v2h-1zM406,275h1v2h-1zM367,283h1v2h-1zM393,276h1v2h-1zM276,278h1v2h-1zM410,272h1v2h-1zM321,277h1v1h-1zM326,277h1v2h-1zM391,285h1v2h-1zM395,279h1v3h-1zM335,285h1v2h-1zM343,279h1v1h-1zM289,280h1v2h-1zM281,275h1v3h-1zM260,275h1v1h-1zM406,281h1v2h-1zM274,276h1v2h-1zM409,273h1v1h-1zM386,285h1v1h-1zM358,284h1v3h-1zM396,286h1v3h-1zM258,286h1v3h-1zM358,284h1v1h-1zM328,283h1v1h-1zM242,277h1v1h-1zM263,283h1v1h-1zM381,278h1v2h-1zM317,273h1v2h-1zM296,283h1v3h-1zM254,278h1v2h-1zM328,275h1v1h-1zM317,277h1v2h-1zM289,282h1v2h-1zM241,283h1v2h-1zM242,279h1v2h-1zM287,283h1v1h-1zM389,274h1v1h-1zM334,283h1v2h-1zM414,278h1v1h-1zM416,276h1v1h-1zM397,276h1v2h-1zM309,278h1v3h-1zM397,279h1v2h-1zM339,281h1v2h-1zM393,282h1v1h-1zM298,273h1v2h-1zM272,279h1v1h-1zM417,272h1v1h-1zM255,285h1v2h-1zM316,278h1v2h-1zM292,276h1v1h-1zM409,272h1v1h-1zM353,278h1v2h-1zM368,273h1v1h-1zM301,282h1v2h-1zM391,282h1v3h-1zM396,274h1v1h-1zM297,275h1v1h-1zM409,284h1v1h-1zM260,278h1v3h-1zM343,279h1v2h-1zM356,284h1v1h-1zM284,280h1v1h-1zM241,274h1v3h-1zM358,273h1v2h-1zM377,283h1v2h-1zM397,275h1v2h-1zM356,287h1v2h-1zM322,273h1v2h-1zM241,276h1v3h-1zM357,279h1v2h-1zM408,277h1v2h-1zM278,277h1v1h-1zM257,284h1v1h-1zM328,278h1v1h-1zM357,279h1v1h-1zM240,279h1v1h-1zM398,286h1v2h-1zM306,278h1v3h-1zM292,278h1v2h-1zM312,277h1v1h-1zM362,275h1v2h-1zM324,281h1v1h-1zM263,277h1v3h-1zM332,280h1v1h-1zM322,277h1v2h-1zM302,282h1v1h-1zM273,280h1v1h-1zM271,283h1v3h-1zM390,281h1v3h-1zM406,284h1v1h-1zM344,286h1v2h-1zM321,281h1v1h-1zM311,283h1v1h-1zM400,278h1v1h-1zM262,275h1v2h-1zM290,283h1v2h-1zM263,280h1v1h-1zM266,273h1v2h-1zM249,278h1v1h-1zM354,279h1v2h-1zM335,281h1v2h-1zM254,285h1v1h-1zM390,284h1v3h-1zM267,280h1v3h-1zM370,285h1v2h-1zM327,276h1v2h-1zM415,283h1v2h-1zM331,278h1v2h-1zM246,285h1v3h-1zM320,274h1v3h-1zM255,284h1v3h-1zM353,282h1v2h-1zM324,286h1v2h-1zM344,281h1v3h-1zM353,275h1v1h-1zM346,280h1v3h-1zM323,284h1v1h-1zM382,279h1v1h-1zM345,275h1v2h-1zM328,273h1v2h-1zM375,282h1v2h-1zM286,276h1v1h-1zM416,286h1v2h-1zM266,273h1v2h-1zM296,279h1v1h-1zM401,287h1v2h-1zM272,283h1v2h-1zM314,281h1v2h-1zM391,276h1v3h-1zM263,280h1v3h-1zM394,287h1v1h-1zM339,283h1v1h-1zM361,287h1v2h-1zM319,282h1v3h-1zM359,282h1v1h-1zM282,283h1v2h-1zM394,279h1v1h-1zM398,273h1v2h-1zM327,282h1v1h-1zM307,280h1v2h-1zM366,275h1v1h-1zM377,275h1v2h-1zM329,274h1v2h-1zM281,274h1v1h-1zM320,279h1v2h-1zM413,286h1v1h-1zM243,275h1v2h-1zM337,284h1v3h-1zM258,284h1v3h-1zM329,274h1v3h-1zM284,279h1v3h-1zM344,272h1v2h-1zM260,278h1v3h-1zM296,283h1v1h-1zM345,286h1v2h-1zM403,274h1v3h-1zM247,280h1v1h-1zM399,287h1v3h-1zM393,272h1v2h-1zM335,280h1v1h-1zM376,279h1v1h-1zM405,278h1v2h-1zM366,280h1v1h-1zM321,276h1v3h-1zM301,280h1v1h-1zM413,276h1v3h-1zM268,277h1v1h-1zM296,281h1v3h-1zM262,274h1v3h-1zM416,273h1v2h-1zM307,281h1v1h-1zM356,273h1v1h-1zM282,274h1v1h-1zM266,287h1v2h-1zM278,283h1v2h-1zM392,275h1v1h-1zM370,281h1v2h-1zM289,278h1v1h-1zM377,274h1v3h-1zM258,281h1v1h-1zM345,285h1v2h-1zM387,278h1v2h-1zM404,277h1v1h-1zM291,282h1v1h-1zM336,285h1v1h-1zM387,273h1v3h-1zM369,284h1v3h-1zM297,274h1v1h-1zM242,284h1v1h-1zM368,284h1v1h-1zM387,274h1v3h-1zM274,285h1v1h-1zM361,275h1v3h-1zM289,279h1v1h-1zM402,281h1v2h-1zM257,285h1v3h-1zM311,275h1v1h-1zM312,283h1v2h-1zM362,273h1v2h-1zM359,279h1v2h-1zM405,284h1v1h-1zM363,281h1v1h-1zM383,273h1v3h-1zM346,286h1v2h-1zM284,280h1v2h-1zM276,283h1v2h-1zM329,282h1v2h-1zM299,277h1v3h-1zM347,273h1v1h-1zM331,279h1v3h-1zM330,274h1v1h-1zM241,286h1v1h-1zM326,285h1v2h-1zM320,285h1v1h-1zM343,284h1v1h-1zM317,274h1v3h-1zM353,272h1v1h-1zM257,280h1v1h-1zM385,274h1v1h-1zM414,274h1v2h-1zM240,281h1v1h-1zM382,274h1v1h-1zM410,283h1v3h-1zM263,273h1v1h-1zM296,273h1v2h-1zM284,275h1v1h-1zM368,278h1v1h-1zM280,286h1v2h-1zM258,279h1v2h-1zM313,277h1v2h-1zM302,282h1v2h-1zM260,275h1v1h-1zM330,285h1v2h-1zM283,273h1v1h-1zM353,272h1v3h-1zM340,282h1v1h-1zM329,287h1v3h-1zM361,274h1v2h-1zM348,273h1v1h-1zM355,281h1v2h-1zM377,280h1v1h-1zM391,273h1v1h-1zM351,274h1v1h-1zM263,279h1v2h-1zM343,277h1v2h-1zM243,275h1v2h-1zM248,278h1v1h-1zM308,284h1v2h-1zM309,285h1v2h-1zM263,274h1v1h-1zM320,287h1v2h-1zM316,276h1v3h-1zM378,280h1v2h-1zM265,283h1v3h-1zM273,275h1v2h-1zM361,286h1v1h-1zM345,286h1v1h-1zM347,284h1v1h-1zM292,286h1v3h-1zM269,284h1v2h-1zM259,284h1v1h-1zM379,278h1v2h-1zM364,280h1v2h-1zM328,280h1v2h-1zM264,274h1v1h-1zM257,284h1v1h-1zM246,282h1v2h-1zM361,280h1v1h-1zM326,281h1v1h-1zM367,283h1v2h-1zM411,273h1v3h-1zM264,279h1v2h-1zM401,284h1v2h-1zM243,284h1v1h-1zM373,287h1v2h-1zM375,279h1v3h-1zM304,276h1v3h-1zM398,285h1v1h-1zM267,275h1v1h-1zM355,282h1v1h-1zM385,282h1v1h-1zM408,277h1v2h-1zM298,277h1v3h-1zM363,281h1v3h-1zM244,274h1v3h-1zM260,283h1v3h-1zM364,280h1v2h-1zM298,278h1v2h-1zM249,279h1v3h-1zM268,287h1v1h-1zM332,280h1v1h-1zM389,273h1v3h-1zM410,274h1v1h-1zM273,276h1v3h-1zM238,277h1v2h-1zM322,286h1v1h-1zM248,278h1v1h-1zM257,277h1v2h-1zM348,277h1v3h-1zM277,276h1v3h-1zM289,284h1v1h-1zM317,280h1v1h-1zM350,283h1v1h-1zM311,272h1v1h-1zM303,287h1v1h-1zM369,286h1v2h-1zM309,272h1v1h-1zM258,273h1v1h-1zM262,277h1v2h-1zM410,275h1v3h-1zM323,285h1v2h-1zM371,286h1v2h-1zM408,282h1v1h-1zM273,282h1v2h-1zM374,282h1v2h-1zM346,287h1v1h-1zM325,285h1v3h-1zM336,286h1v3h-1zM333,276h1v2h-1zM297,276h1v3h-1zM307,280h1v1h-1zM398,274h1v2h-1zM257,281h1v1h-1zM269,272h1v3h-1zM281,285h1v2h-1zM374,282h1v2h-1zM355,285h1v2h-1zM310,287h1v3h-1zM325,276h1v3h-1zM334,282h1v1h-1zM401,273h1v1h-1zM306,272h1v2h-1zM347,281h1v2h-1zM409,274h1v1h-1zM341,275h1v2h-1zM260,285h1v1h-1zM349,286h1v1h-1zM377,286h1v2h-1zM382,275h1v3h-1zM319,278h1v1h-1zM361,285h1v2h-1zM368,286h1v1h-1zM367,280h1v1h-1zM412,274h1v2h-1zM400,276h1v2h-1zM415,286h1v3h-1zM314,274h1v3h-1zM382,286h1v2h-1zM260,276h1v2h-1zM337,273h1v3h-1zM277,277h1v2h-1zM276,276h1v2h-1zM263,275h1v2h-1zM278,284h1v1h-1zM244,280h1v1h-1zM354,287h1v2h-1zM274,281h1v1h-1zM258,280h1v2h-1zM320,275h1v2h-1zM274,274h1v3h-1zM333,273h1v2h-1zM308,286h1v1h-1zM244,283h1v1h-1zM385,281h1v1h-1zM381,286h1v1h-1zM361,285h1v2h-1zM312,279h1v1h-1zM277,279h1v2h-1zM302,280h1v1h-1zM350,279h1v2h-1zM288,283h1v3h-1zM375,283h1v1h-1zM297,275h1v2h-1zM338,274h1v1h-1zM384,274h1v2h-1zM367,277h1v1h-1zM324,283h1v1h-1zM265,274h1v2h-1zM357,286h1v2h-1zM387,279h1v2h-1zM335,282h1v2h-1zM301,286h1v2h-1zM333,285h1v2h-1zM256,284h1v1h-1zM391,280h1v1h-1zM242,285h1v1h-1zM266,283h1v1h-1zM373,273h1v2h-1zM247,281h1v2h-1zM377,281h1v2h-1zM414,282h1v3h-1zM341,284h1v1h-1zM296,280h1v1h-1zM349,285h1v2h-1zM325,281h1v2h-1zM387,286h1v1h-1zM312,283h1v2h-1zM304,283h1v2h-1zM360,287h1v1h-1zM252,286h1v3h-1zM338,286h1v1h-1zM396,278h1v2h-1zM383,280h1v2h-1zM357,274h1v1h-1zM247,280h1v2h-1zM368,285h1v2h-1zM262,277h1v3h-1zM246,273h1v2h-1zM284,272h1v2h-1zM241,283h1v2h-1zM325,281h1v3h-1zM265,272h1v3h-1zM284,285h1v3h-1zM249,282h1v2h-1zM411,273h1v2h-1zM375,281h1v3h-1zM330,274h1v1h-1zM285,280h1v2h-1zM361,274h1v3h-1zM325,286h1v1h-1zM299,272h1v2h-1zM401,280h1v2h-1zM239,283h1v1h-1zM316,281h1v3h-1zM340,279h1v3h-1zM268,281h1v1h-1zM290,275h1v2h-1zM369,277h1v1h-1zM361,285h1v1h-1zM257,283h1v1h-1zM323,280h1v2h-1zM341,275h1v2h-1zM271,282h1v3h-1zM279,279h1v3h-1zM324,286h1v1h-1zM389,280h1v1h-1zM348,282h1v3h-1zM245,275h1v3h-1zM242,282h1v2h-1zM339,282h1v1h-1zM249,284h1v3h-1zM239,276h1v1h-1zM291,280h1v3h-1zM382,274h1v1h-1zM346,281h1v1h-1zM329,277h1v3h-1zM352,286h1v3h-1zM247,278h1v2h-1zM239,286h1v1h-1zM265,281h1v2h-1zM278,275h1v1h-1zM287,282h1v1h-1zM295,275h1v3h-1zM296,274h1v3h-1zM398,282h1v2h-1zM367,274h1v3h-1zM393,278h1v1h-1zM298,274h1v1h-1zM319,279h1v3h-1zM310,284h1v2h-1zM319,279h1v3h-1zM365,280h1v1h-1zM248,281h1v1h-1zM392,278h1v2h-1zM281,277h1v1h-1zM331,286h1v1h-1zM410,274h1v3h-1zM386,280h1v2h-1zM344,287h1v1h-1zM344,285h1v1h-1zM345,278h1v3h-1zM330,272h1v3h-1zM314,286h1v2h-1zM392,286h1v1h-1zM286,284h1v3h-1zM293,283h1v3h-1zM307,277h1v3h-1zM409,281h1v1h-1zM390,280h1v2h-1zM257,278h1v1h-1zM392,287h1v3h-1zM242,276h1v2h-1zM260,279h1v2h-1zM283,275h1v2h-1zM318,286h1v2h-1zM351,272h1v1h-1zM271,284h1v2h-1zM320,283h1v1h-1zM400,285h1v2h-1zM337,287h1v3h-1zM299,286h1v2h-1zM276,274h1v2h-1zM324,283h1v1h-1zM284,284h1v2h-1zM279,284h1v3h-1zM310,282h1v2h-1zM288,285h1v1h-1zM413,273h1v1h-1zM294,274h1v1h-1zM357,279h1v2h-1zM293,282h1v1h-1zM404,278h1v2h-1zM393,273h1v3h-1zM389,285h1v2h-1zM379,280h1v2h-1zM305,279h1v2h-1zM278,282h1v2h-1zM358,272h1v1h-1zM248,276h1v2h-1zM249,286h1v2h-1zM355,275h1v3h-1zM290,278h1v1h-1zM413,278h1v2h-1zM329,285h1v2h-1zM336,273h1v2h-1zM376,286h1v2h-1zM413,276h1v2h-1zM403,284h1v3h-1zM318,282h1v3h-1zM290,283h1v1h-1zM260,275h1v1h-1zM387,277h1v2h-1zM318,279h1v2h-1zM386,273h1v2h-1zM371,283h1v3h-1zM290,274h1v3h-1zM358,272h1v3h-1zM243,273h1v1h-1zM316,286h1v2h-1zM263,273h1v1h-1zM312,286h1v3h-1zM410,275h1v1h-1zM244,275h1v2h-1zM321,275h1v1h-1zM384,275h1v3h-1zM301,279h1v2h-1zM379,283h1v1h-1zM326,287h1v1h-1zM287,281h1v1h-1zM262,286h1v1h-1zM259,285h1v1h-1zM294,277h1v2h-1zM321,286h1v1h-1zM339,276h1v1h-1zM364,276h1v1h-1zM288,273h1v2h-1zM345,285h1v2h-1zM357,284h1v3h-1zM335,278h1v1h-1zM342,275h1v2h-1zM271,283h1v3h-1zM367,279h1v1h-1zM251,274h1v1h-1zM308,287h1v1h-1zM306,284h1v2h-1zM322,281h1v1h-1zM362,273h1v3h-1zM301,286h1v1h-1zM364,280h1v1h-1zM247,273h1v3h-1zM349,276h1v2h-1zM244,276h1v2h-1zM330,274h1v3h-1zM402,281h1v1h-1zM338,286h1v2h-1zM394,275h1v3h-1zM377,284h1v1h-1zM315,276h1v1h-1zM378,277h1v2h-1zM341,285h1v2h-1zM278,276h1v1h-1zM383,286h1v2h-1zM246,279h1v2h-1zM320,274h1v1h-1zM273,280h1v2h-1zM350,277h1v3h-1zM243,274h1v3h-1zM357,283h1v2h-1zM258,274h1v2h-1zM258,276h1v2h-1zM307,279h1v1h-1zM333,275h1v1h-1zM292,273h1v3h-1zM255,280h1v1h-1zM240,287h1v1h-1zM368,282h1v1h-1zM389,274h1v1h-1zM298,284h1v2h-1zM341,273h1v1h-1zM285,275h1v1h-1zM276,278h1v1h-1zM340,274h1v2h-1zM367,280h1v2h-1zM272,286h1v1h-1zM239,282h1v2h-1zM296,286h1v1h-1zM395,284h1v2h-1zM288,278h1v3h-1zM309,276h1v2h-1zM378,283h1v1h-1zM260,282h1v2h-1zM381,286h1v2h-1zM298,280h1v3h-1zM274,273h1v1h-1zM287,273h1v1h-1zM385,274h1v2h-1zM302,286h1v2h-1zM254,282h1v2h-1zM288,286h1v2h-1zM251,286h1v2h-1zM391,280h1v2h-1zM310,286h1v2h-1zM373,279h1v1h-1zM333,285h1v1h-1zM381,275h1v1h-1zM335,280h1v2h-1zM289,283h1v1h-1zM356,279h1v1h-1zM268,279h1v3h-1zM374,287h1v2h-1zM331,279h1v3h-1zM282,281h1v1h-1zM363,273h1v2h-1zM387,284h1v2h-1zM367,279h1v3h-1zM399,283h1v2h-1zM363,273h1v3h-1zM360,278h1v3h-1zM382,279h1v2h-1zM393,286h1v2h-1zM284,278h1v3h-1zM300,283h1v1h-1zM360,280h1v3h-1zM241,286h1v1h-1zM416,281h1v2h-1zM255,282h1v3h-1zM323,277h1v1h-1zM345,283h1v1h-1zM253,278h1v3h-1zM366,286h1v1h-1zM344,280h1v1h-1zM360,277h1v2h-1zM392,273h1v1h-1zM401,277h1v1h-1zM278,273h1v2h-1zM283,280h1v2h-1zM367,282h1v2h-1zM415,281h1v1h-1zM343,282h1v1h-1zM308,279h1v2h-1zM308,279h1v2h-1zM311,275h1v2h-1zM289,280h1v2h-1zM413,281h1v2h-1zM368,273h1v2h-1zM401,272h1v3h-1zM382,277h1v2h-1zM316,282h1v1h-1zM277,281h1v3h-1zM286,282h1v1h-1zM320,280h1v2h-1zM370,277h1v2h-1zM255,283h1v2h-1zM382,281h1v1h-1zM382,276h1v1h-1zM400,275h1v1h-1zM276,287h1v1h-1zM342,283h1v1h-1zM378,275h1v1h-1zM398,275h1v2h-1zM321,278h1v2h-1zM402,287h1v3h-1zM304,282h1v3h-1zM265,283h1v2h-1zM307,275h1v2h-1zM378,283h1v1h-1zM245,282h1v2h-1zM348,282h1v1h-1zM295,286h1v1h-1zM275,279h1v2h-1zM255,285h1v3h-1zM273,280h1v1h-1zM402,278h1v1h-1zM376,286h1v3h-1zM414,283h1v3h-1zM363,274h1v2h-1zM371,272h1v2h-1zM417,276h1v2h-1zM350,275h1v1h-1zM280,284h1v2h-1zM332,284h1v1h-1zM404,273h1v2h-1zM391,284h1v1h-1zM369,283h1v2h-1zM386,274h1v1h-1zM360,283h1v3h-1zM306,279h1v2h-1zM249,279h1v1h-1zM266,278h1v3h-1zM347,272h1v2h-1zM366,286h1v1h-1zM390,285h1v3h-1zM376,285h1v2h-1zM258,284h1v1h-1zM325,272h1v1h-1zM342,276h1v2h-1zM391,280h1v1h-1zM369,282h1v2h-1zM274,286h1v1h-1zM331,287h1v3h-1zM323,276h1v1h-1zM337,274h1v3h-1zM329,274h1v2h-1zM260,279h1v1h-1zM275,286h1v1h-1zM362,273h1v2h-1zM260,283h1v1h-1zM262,283h1v1h-1zM282,274h1v2h-1zM320,278h1v2h-1zM302,277h1v1h-1zM329,281h1v2h-1zM319,287h1v1h-1zM392,282h1v2h-1zM329,276h1v1h-1zM267,278h1v2h-1zM287,278h1v1h-1zM413,273h1v3h-1zM384,279h1v1h-1zM365,277h1v3h-1zM369,275h1v3h-1zM399,279h1v1h-1zM282,281h1v2h-1zM313,280h1v2h-1zM344,272h1v1h-1zM328,281h1v1h-1zM373,286h1v1h-1zM275,283h1v2h-1zM244,280h1v1h-1z"/><path d="M238,273 H417" stroke="#7a7468" stroke-width="1.5"/><circle cx="426" cy="280" r="9" fill="#040302"/><path d="M418,283 Q418,273 428,272" stroke="#b08850" stroke-width="3" fill="none"/><rect x="212" y="270" width="26" height="20" fill="#040302"/><circle cx="231" cy="280" r="7.5" fill="#040302"/><path d="M224,283 Q224,273 233,272" stroke="#9a7840" stroke-width="2.5" fill="none"/><path d="M5,290 L438,288 L438,294 L5,297 Z" fill="#040302"/><path d="M8,292 L436,290" stroke="#3a2a16" stroke-width="1.2"/><path d="M213,286 H224" stroke="#3a2a16" stroke-width="1"/><rect x="85" y="305" width="28" height="31" fill="#0a0806"/><rect x="87" y="307" width="24" height="26" fill="#58544e"/><rect x="87" y="329" width="24" height="5" fill="#5a2c14"/><path d="M99.0,305 V336 M85,320.5 H113" stroke="#0a0806" stroke-width="2"/><rect x="354" y="303" width="31" height="31" fill="#0a0806"/><rect x="356" y="305" width="27" height="26" fill="#58544e"/><rect x="356" y="327" width="27" height="5" fill="#5a2c14"/><path d="M369.5,303 V334 M354,318.5 H385" stroke="#0a0806" stroke-width="2"/><path d="M37,140 L318,140 L228,245 L215,271 L215,286 L13,285 Z" fill="#0b0a08"/><path d="M298,127 L338,153 L215,271 L228,245 L318,140 L286,140 Z" fill="#8a8270"/><path d="M298,127 L338,153" stroke="#6a4a20" stroke-width="2"/><path d="M253,140 L260,133 L266,140 Z" fill="#8a8270"/><path d="M311,149 l23,-3" stroke="#4a4438" stroke-width="1.4"/><path d="M303,159 l22,-3" stroke="#4a4438" stroke-width="1.4"/><path d="M296,168 l20,-3" stroke="#4a4438" stroke-width="1.4"/><path d="M289,177 l19,-3" stroke="#4a4438" stroke-width="1.4"/><path d="M281,187 l17,-3" stroke="#4a4438" stroke-width="1.4"/><path d="M274,196 l16,-3" stroke="#4a4438" stroke-width="1.4"/><path d="M266,206 l14,-3" stroke="#4a4438" stroke-width="1.4"/><path d="M259,215 l12,-3" stroke="#4a4438" stroke-width="1.4"/><path d="M252,224 l11,-3" stroke="#4a4438" stroke-width="1.4"/><path d="M244,234 l9,-3" stroke="#4a4438" stroke-width="1.4"/><path d="M237,243 l8,-3" stroke="#4a4438" stroke-width="1.4"/><path d="M230,252 l6,-3" stroke="#4a4438" stroke-width="1.4"/><path d="M222,262 l5,-3" stroke="#4a4438" stroke-width="1.4"/><path d="M338,153 L446,280 L436,271 L215,272 Z" fill="#000"/><path d="M338,153 L446,280" stroke="#000" stroke-width="2"/><path d="M212.5,232 V310" stroke="#a0a0a0" stroke-width="1"/><path d="M207,240 L212.5,234 L218,240" stroke="#a0a0a0" fill="none"/><text x="208" y="231" font-size="12" fill="#a8a8a8" font-family="Liberation Sans">z</text><path d="M213,310.5 H293 M287,306 L293,310.5 L287,315 M213,310.5 L211,350" stroke="#e02020" stroke-width="1.2" fill="none"/><text x="291" y="307" font-size="14" fill="#e02020" font-family="Liberation Sans">y</text><path d="M206,346 L214,340 M208,338 L216,350 M202,347 Q210,352 218,346" stroke="#e02020" stroke-width="1.1" fill="none"/></g></g>
</svg>
<div class="t" style="left:8px;top:107px;font-size:16.5px;color:#ececec">Camera01</div>
<div class="t" style="left:502px;top:107px;font-size:16.5px;color:#ececec">Camera01</div>
<div class="t" style="left:8px;top:508px;font-size:16.5px;color:#ececec">Camera01</div>
<div class="t" style="left:502px;top:508px;font-size:16.5px;color:#ececec">Camera01</div>
<div class="a" style="left:988px;top:133px;width:291px;height:807px;border-left:1px solid #fff;border-top:1px solid #fff;border-right:1px solid #000;border-bottom:1px solid #000;box-shadow:inset -1px -1px 0 #808080"></div>
<div class="a" style="left:992px;top:218px;width:283px;height:718px;border-left:1px solid #808080;border-top:1px solid #808080;border-right:1px solid #fff;border-bottom:1px solid #fff"></div>
<div class="a" style="left:989px;top:105px;width:31px;height:29px;background:#c0c0c0;border-left:1px solid #fff;border-top:1px solid #fff;border-right:1px solid #000"></div>
<div class="a" style="left:1020px;top:107px;width:28px;height:26px;background:#c0c0c0;border-left:1px solid #fff;border-top:1px solid #fff;border-right:1px solid #000"></div>
<div class="a" style="left:1048px;top:107px;width:29px;height:26px;background:#c0c0c0;border-left:1px solid #fff;border-top:1px solid #fff;border-right:1px solid #000"></div>
<div class="a" style="left:1077px;top:107px;width:29px;height:26px;background:#c0c0c0;border-left:1px solid #fff;border-top:1px solid #fff;border-right:1px solid #000"></div>
<div class="a" style="left:1106px;top:107px;width:29px;height:26px;background:#c0c0c0;border-left:1px solid #fff;border-top:1px solid #fff;border-right:1px solid #000"></div>
<div class="a" style="left:1135px;top:107px;width:29px;height:26px;background:#c0c0c0;border-left:1px solid #fff;border-top:1px solid #fff;border-right:1px solid #000"></div>
<div class="a" style="left:990px;top:133px;width:29px;height:1px;background:#c0c0c0"></div>
<svg class="a" style="left:996px;top:109px" width="22" height="22" viewBox="0 0 22 22"><path d="M6 1L7.5 5.5L12 7L7.5 8.5L6 13L4.5 8.5L0 7L4.5 5.5Z" fill="#fff8c0"/><path d="M7 7L7 19L10 16L13 21L15 20L12 15L16 15Z" fill="#e0e0e0" stroke="#303030" stroke-width="0.9"/></svg>
<svg class="a" style="left:1023px;top:110px" width="22" height="20" viewBox="0 0 22 20"><rect x="1.5" y="1.5" width="18" height="17" fill="none" stroke="#606060" stroke-width="0.6" stroke-dasharray="0.8 1.6"/><path d="M2,18.5 Q2,2 19,2 V8 Q8,8 8,18.5 Z" fill="#384890" stroke="#101838" stroke-width="0.9"/><path d="M4.8,18 Q4.8,5 18.5,5" fill="none" stroke="#c8d4ff" stroke-width="1.3"/><circle cx="1.5" cy="1.5" r="0.9" fill="#000"/><circle cx="19.5" cy="18.5" r="0.9" fill="#000"/></svg>
<svg class="a" style="left:1052px;top:109px" width="22" height="22" viewBox="0 0 22 22"><rect x="7" y="1" width="8" height="8" fill="url(#lav)" stroke="#3838a0" stroke-width="1.3"/><path d="M11 9V14M11 11L4 16M11 11L18 16" stroke="#404040" stroke-width="1.3"/><rect x="1" y="15" width="5" height="5" fill="url(#lav)" stroke="#3838a0" stroke-width="1.2"/><rect x="8.5" y="15" width="5" height="5" fill="url(#lav)" stroke="#3838a0" stroke-width="1.2"/><rect x="16" y="15" width="5" height="5" fill="url(#lav)" stroke="#3838a0" stroke-width="1.2"/></svg>
<svg class="a" style="left:1080px;top:110px" width="24" height="20" viewBox="0 0 24 20"><path d="M5 3Q1 10 5 17M3 4Q0 10 3 16" fill="none" stroke="#303030" stroke-width="0.8"/><circle cx="13" cy="10" r="7.5" fill="#e0e0e0" stroke="#000" stroke-width="2"/><path d="M13 4V16M7 10H19M9 6L17 14M17 6L9 14" stroke="#808080" stroke-width="0.8"/><circle cx="13" cy="10" r="1.8" fill="#e01010"/></svg>
<svg class="a" style="left:1109px;top:110px" width="22" height="20" viewBox="0 0 22 20"><rect x="1" y="1" width="20" height="15" rx="1.5" fill="#303030"/><rect x="3" y="3" width="16" height="11" fill="#fff"/><rect x="6" y="5" width="3" height="7" fill="#3040c0"/><path d="M9 13L13 4L17 13Z" fill="#f00000"/><rect x="7" y="17" width="9" height="2" fill="#303030"/><rect x="11" y="16" width="2" height="1" fill="#20c020"/></svg>
<svg class="a" style="left:1139px;top:109px" width="22" height="22" viewBox="0 0 22 22"><path d="M2 3L6 1H17L20 4L18 6L14 4H10L8 6Z" fill="#404040"/><path d="M9 5H14L13 21H10Z" fill="#303030"/><path d="M10.5 6H12.5L12 17H11Z" fill="#d02020"/><path d="M6 1H16" stroke="#d0d0d0" stroke-width="1"/></svg>
<div class="a" style="left:1001px;top:150px;width:23px;height:23px;background:#e0e0e0;border-top:1px solid #808080;border-left:1px solid #808080;border-right:1px solid #fff;border-bottom:1px solid #fff"></div>
<svg class="a" style="left:1005px;top:154px" width="16" height="16" viewBox="0 0 16 16"><circle cx="8" cy="8" r="6.5" fill="url(#sph)"/></svg>
<svg class="a" style="left:1027px;top:153px" width="18" height="17" viewBox="0 0 18 17"><rect x="1" y="3" width="7" height="9.5" fill="#b8b8c0" stroke="#808088" stroke-width="0.6"/><path d="M12,1.5 L16.5,9.5 H8 Z" fill="#909090" stroke="#202020" stroke-width="0.8"/><circle cx="10.5" cy="11.5" r="4.3" fill="#f4f4f4" stroke="#000" stroke-width="1.1"/><circle cx="10.5" cy="11.5" r="0.9" fill="#000"/></svg>
<svg class="a" style="left:1050px;top:152px" width="19" height="18" viewBox="0 0 19 18"><path d="M10,8 L17.5,15.5 L13,17 L7,11 Z" fill="#f0f080" opacity="0.85"/><path d="M3,2 L5,1 L10,7 L8,10 Z" fill="#e8e8f0" stroke="#202030" stroke-width="0.9"/><path d="M8,10 L10,7 L13,9 L10,13 Z" fill="#8080a0" stroke="#202030" stroke-width="0.6"/><path d="M9,9 L17,16.5" stroke="#000" stroke-width="0.9"/></svg>
<svg class="a" style="left:1076px;top:154px" width="16" height="15" viewBox="0 0 16 15"><circle cx="4" cy="3.5" r="3" fill="#fff" stroke="#000" stroke-width="1.4"/><circle cx="11" cy="3.5" r="3" fill="#fff" stroke="#000" stroke-width="1.4"/><rect x="2" y="7" width="10" height="6" fill="#202020"/><path d="M12 8L15 7V13L12 12Z" fill="#202020"/><rect x="1" y="8" width="2" height="3" fill="#e01010"/><rect x="6" y="13" width="3" height="2" fill="#404040"/></svg>
<svg class="a" style="left:1100px;top:155px" width="17" height="14" viewBox="0 0 17 14"><rect x="1" y="1" width="11" height="10" fill="#e8e8f0" stroke="#808080"/><circle cx="6.5" cy="6" r="3" fill="none" stroke="#a0a0a0" stroke-width="1.5"/><rect x="10" y="7" width="2" height="4" fill="#e01010"/><path d="M11 12H16" stroke="#000" stroke-width="0.6"/></svg>
<svg class="a" style="left:1124px;top:155px" width="18" height="13" viewBox="0 0 18 13"><path d="M1 3Q5 0 9 3T17 3M1 7Q5 4 9 7T17 7M1 11Q5 8 9 11T17 11" fill="none" stroke="#4050a0" stroke-width="1.1"/></svg>
<svg class="a" style="left:1148px;top:153px" width="18" height="17" viewBox="0 0 18 17"><circle cx="6" cy="6" r="3.5" fill="none" stroke="#303030" stroke-width="2.2" stroke-dasharray="1.4 1"/><circle cx="11" cy="11" r="4" fill="none" stroke="#000" stroke-width="2.6" stroke-dasharray="1.6 1"/><circle cx="11" cy="11" r="1.5" fill="#000"/></svg>
<div class="a" style="left:1020px;top:190px;width:237px;height:21px;background:#fff;border-top:1px solid #808080;border-left:1px solid #808080;border-right:1px solid #fff;border-bottom:1px solid #fff"></div>
<div class="a" style="left:1021px;top:191px;width:235px;height:19px;border-top:1px solid #000;border-left:1px solid #000"></div>
<div class="t" style="left:1023px;top:195px">Standard Primitives</div>
<div class="rz" style="left:1237px;top:192px;width:18px;height:17px;background:#c0c0c0"></div>
<svg class="a" style="left:1242px;top:198px" width="8" height="5" viewBox="0 0 8 5"><path d="M0 0H8L4 4.5Z" fill="#000"/></svg>
<div class="a" style="left:995px;top:232px;width:274px;height:204px;border-top:1px solid #808080;border-left:1px solid #808080;border-right:1px solid #fff;border-bottom:1px solid #fff;box-shadow:inset 1px 1px 0 #fff, inset -1px -1px 0 #808080"></div>
<div class="a" style="left:999px;top:224px;width:267px;height:15px;background:#c0c0c0;border-top:1px solid #fff;border-left:1px solid #fff;border-right:1px solid #808080;border-bottom:1px solid #808080"></div>
<div class="a" style="left:1005px;top:234px;width:5px;height:1px;background:#000"></div>
<div class="t" style="left:999px;top:227px;width:266px;text-align:center">Object Type</div>
<div class="t" style="left:1089px;top:247px;font-size:16px;letter-spacing:1.2px;color:#808080;text-shadow:1px 1px 0 #fff">AutoGrid</div>
<div class="a" style="left:1182px;top:248px;width:13px;height:13px;border-top:1px solid #808080;border-left:1px solid #808080;border-right:1px solid #fff;border-bottom:1px solid #fff;box-shadow:inset 1px 1px 0 #000"></div>
<div class="rz" style="left:1010px;top:269px;width:115px;height:28px;background:#c0c0c0"></div>
<div class="t" style="left:1010px;top:278px;width:115px;text-align:center">Box</div>
<div class="rz" style="left:1140px;top:269px;width:115px;height:28px;background:#c0c0c0"></div>
<div class="t" style="left:1140px;top:278px;width:115px;text-align:center">Cone</div>
<div class="rz" style="left:1010px;top:301px;width:115px;height:28px;background:#c0c0c0"></div>
<div class="t" style="left:1010px;top:310px;width:115px;text-align:center">Sphere</div>
<div class="rz" style="left:1140px;top:301px;width:115px;height:28px;background:#c0c0c0"></div>
<div class="t" style="left:1140px;top:310px;width:115px;text-align:center">GeoSphere</div>
<div class="rz" style="left:1010px;top:334px;width:115px;height:28px;background:#c0c0c0"></div>
<div class="t" style="left:1010px;top:343px;width:115px;text-align:center">Cylinder</div>
<div class="rz" style="left:1140px;top:334px;width:115px;height:28px;background:#c0c0c0"></div>
<div class="t" style="left:1140px;top:343px;width:115px;text-align:center">Tube</div>
<div class="rz" style="left:1010px;top:367px;width:115px;height:28px;background:#c0c0c0"></div>
<div class="t" style="left:1010px;top:376px;width:115px;text-align:center">Torus</div>
<div class="rz" style="left:1140px;top:367px;width:115px;height:28px;background:#c0c0c0"></div>
<div class="t" style="left:1140px;top:376px;width:115px;text-align:center">Pyramid</div>
<div class="rz" style="left:1010px;top:399px;width:115px;height:28px;background:#c0c0c0"></div>
<div class="t" style="left:1010px;top:408px;width:115px;text-align:center">Teapot</div>
<div class="rz" style="left:1140px;top:399px;width:115px;height:28px;background:#c0c0c0"></div>
<div class="t" style="left:1140px;top:408px;width:115px;text-align:center">Plane</div>
<div class="a" style="left:995px;top:451px;width:274px;height:62px;border-top:1px solid #808080;border-left:1px solid #808080;border-right:1px solid #fff;border-bottom:1px solid #fff;box-shadow:inset 1px 1px 0 #fff, inset -1px -1px 0 #808080"></div>
<div class="a" style="left:999px;top:443px;width:267px;height:15px;background:#c0c0c0;border-top:1px solid #fff;border-left:1px solid #fff;border-right:1px solid #808080;border-bottom:1px solid #808080"></div>
<div class="a" style="left:1005px;top:453px;width:5px;height:1px;background:#000"></div>
<div class="t" style="left:999px;top:446px;width:266px;text-align:center">Name and Color</div>
<div class="a" style="left:1007px;top:468px;width:220px;height:30px;background:#fff;border-top:1px solid #808080;border-left:1px solid #808080;border-right:1px solid #fff;border-bottom:1px solid #fff;box-shadow:inset 1px 1px 0 #000"></div>
<div class="t" style="left:1012px;top:473px">Plane01</div>
<div class="a" style="left:1232px;top:468px;width:28px;height:30px;background:#000;border-right:1px solid #fff;border-bottom:1px solid #fff"></div>
<div class="a" style="left:0;top:908px;width:988px;height:17px;background:#e0e0e0"></div>
<div class="rz" style="left:1px;top:908px;width:15px;height:17px;background:#c8c8c8"></div>
<div class="t" style="left:5px;top:911px;font-size:10px">&lt;</div>
<div class="rz" style="left:17px;top:908px;width:124px;height:17px;background:#c0c0c0"></div>
<div class="t" style="left:17px;top:911px;width:124px;text-align:center">0 / 600</div>
<div class="rz" style="left:141px;top:908px;width:16px;height:17px;background:#c8c8c8"></div>
<div class="t" style="left:146px;top:911px;font-size:10px">&gt;</div>
<div class="a" style="left:0;top:925px;width:988px;height:1px;background:#fff"></div>
<div class="a" style="left:0;top:926px;width:988px;height:12px;background:#e0e0e0;border-top:1px solid #909090"></div>
<div class="a" style="left:0;top:928px;width:2px;height:10px;background:#000"></div>
<div class="a" style="left:0;top:938px;width:990px;height:1px;background:#808080"></div>
<div class="a" style="left:0;top:939px;width:1280px;height:1px;background:#fff"></div>
<div class="a" style="left:2px;top:944px;width:147px;height:21px;background:#dcc4c4;border-top:2px solid #000;border-left:1px solid #000;border-right:1px solid #fff;border-bottom:1px solid #fff"></div>
<div class="a" style="left:2px;top:967px;width:147px;height:21px;background:#fff;border-top:2px solid #000;border-left:1px solid #000;border-right:1px solid #e0e0e0;border-bottom:1px solid #e0e0e0"></div>
<div class="a" style="left:152px;top:941px;width:2px;height:50px;background:#fff"></div><div class="a" style="left:154px;top:941px;width:2px;height:50px;background:#808080"></div>
<div class="a" style="left:157px;top:945px;width:502px;height:21px;border-top:1px solid #808080;border-left:1px solid #808080;border-right:1px solid #fff;border-bottom:1px solid #fff"></div>
<div class="t" style="left:162px;top:950px">1 Object Selected</div>
<div class="a" style="left:690px;top:945px;width:69px;height:21px;border-top:1px solid #808080;border-left:1px solid #808080;border-right:1px solid #fff;border-bottom:1px solid #fff"></div>
<div class="a" style="left:762px;top:945px;width:69px;height:21px;border-top:1px solid #808080;border-left:1px solid #808080;border-right:1px solid #fff;border-bottom:1px solid #fff"></div>
<div class="a" style="left:834px;top:945px;width:69px;height:21px;border-top:1px solid #808080;border-left:1px solid #808080;border-right:1px solid #fff;border-bottom:1px solid #fff"></div>
<div class="a" style="left:906px;top:945px;width:98px;height:21px;border-top:1px solid #808080;border-left:1px solid #808080;border-right:1px solid #fff;border-bottom:1px solid #fff"></div>
<div class="t" style="left:911px;top:950px">Grid = 0,254m</div>
<div class="a" style="left:157px;top:970px;width:557px;height:21px;border-top:1px solid #808080;border-left:1px solid #808080;border-right:1px solid #fff;border-bottom:1px solid #fff"></div>
<div class="t" style="left:162px;top:975px">Click or click-and-drag to select objects</div>
<div class="a" style="left:716px;top:970px;width:99px;height:21px;border-top:1px solid #808080;border-left:1px solid #808080;border-right:1px solid #fff;border-bottom:1px solid #fff"></div>
<svg class="a" style="left:668px;top:947px" width="11" height="14" viewBox="0 0 11 14"><path d="M2.5 6V4Q2.5 1 5.5 1Q8.5 1 8.5 4V6" fill="none" stroke="#000" stroke-width="1.4"/><rect x="1" y="6" width="9" height="7" fill="#000"/><path d="M2 8H9M2 10H9" stroke="#c0c0c0" stroke-width="0.8"/></svg>
<svg class="a" style="left:822px;top:970px" width="18" height="16" viewBox="0 0 18 16"><path d="M2 7L8 3L16 5L16 11L9 15L2 12Z" fill="#fff" stroke="#303030"/><path d="M2 7L9 9L16 5M9 9V15" fill="none" stroke="#808080" stroke-width="0.8"/></svg>
<svg class="a" style="left:851px;top:969px" width="18" height="18" viewBox="0 0 18 18"><rect x="1" y="2" width="12" height="13" fill="none" stroke="#000" stroke-dasharray="1.5 1.5"/><circle cx="12" cy="9" r="4.5" fill="url(#sph)"/></svg>
<div class="a" style="left:876px;top:968px;width:26px;height:22px;background:#e0e0e0;border-top:1px solid #808080;border-left:1px solid #808080;border-right:1px solid #fff;border-bottom:1px solid #fff"></div>
<svg class="a" style="left:880px;top:970px" width="18" height="18" viewBox="0 0 18 18"><path d="M2 6L9 2L16 6V13L9 17L2 13Z" fill="#f0f0f0" stroke="#000"/><path d="M2 6L9 10L16 6M9 10V17" fill="none" stroke="#000"/><path d="M9 10L16 6V13L9 17Z" fill="#404040"/></svg>
<div class="a" style="left:904px;top:970px;width:1px;height:20px;background:#808080"></div><div class="a" style="left:905px;top:970px;width:1px;height:20px;background:#fff"></div>
<svg class="a" style="left:908px;top:966px" width="20" height="20" viewBox="0 0 20 20"><g transform="rotate(45 7 12)"><path d="M3,9 V13 A4,4 0 0 0 11,13 V9" stroke="#a00000" stroke-width="3.2" fill="none"/><path d="M3,8.5 V10.5 M11,8.5 V10.5" stroke="#f0f0f0" stroke-width="3.2"/></g><text x="12" y="9" font-size="9" font-family="Liberation Sans">3</text></svg>
<svg class="a" style="left:930px;top:966px" width="20" height="20" viewBox="0 0 20 20"><g transform="rotate(45 7 12)"><path d="M3,9 V13 A4,4 0 0 0 11,13 V9" stroke="#a00000" stroke-width="3.2" fill="none"/><path d="M3,8.5 V10.5 M11,8.5 V10.5" stroke="#f0f0f0" stroke-width="3.2"/></g><path d="M10 12H19M12 4L17 12M15 7V12" stroke="#000" fill="none" stroke-width="1"/></svg>
<svg class="a" style="left:954px;top:966px" width="20" height="20" viewBox="0 0 20 20"><g transform="rotate(45 7 12)"><path d="M3,9 V13 A4,4 0 0 0 11,13 V9" stroke="#a00000" stroke-width="3.2" fill="none"/><path d="M3,8.5 V10.5 M11,8.5 V10.5" stroke="#f0f0f0" stroke-width="3.2"/></g><text x="11" y="9" font-size="9" font-family="Liberation Sans">%</text></svg>
<div class="a" style="left:979px;top:970px;width:1px;height:20px;background:#808080"></div><div class="a" style="left:980px;top:970px;width:1px;height:20px;background:#fff"></div>
<svg class="a" style="left:984px;top:967px" width="20" height="20" viewBox="0 0 20 20"><g transform="rotate(45 7 12)"><path d="M3,9 V13 A4,4 0 0 0 11,13 V9" stroke="#a00000" stroke-width="3.2" fill="none"/><path d="M3,8.5 V10.5 M11,8.5 V10.5" stroke="#f0f0f0" stroke-width="3.2"/></g><rect x="13" y="2" width="6" height="12" fill="#d0d0d0" stroke="#808080" stroke-width="0.6"/><path d="M14 6L16 4L18 6M14 10L16 12L18 10" fill="none" stroke="#000" stroke-width="0.8"/></svg>
<div class="rz" style="left:1009px;top:944px;width:48px;height:44px;background:#c0c0c0"></div>
<div class="t" style="left:1009px;top:960px;width:48px;text-align:center">Anim.</div>
<svg class="a" style="left:1062px;top:947px" width="18" height="14" viewBox="0 0 18 14"><rect x="1" y="2" width="2.5" height="10" fill="#000080"/><path d="M10 2V12L4 7Z M16 2V12L10 7Z" fill="#000080"/></svg>
<div class="a" style="left:1084px;top:947px;width:1px;height:16px;background:#808080"></div><div class="a" style="left:1085px;top:947px;width:1px;height:16px;background:#fff"></div>
<svg class="a" style="left:1089px;top:947px" width="15" height="14" viewBox="0 0 15 14"><path d="M8 2V12L2 7Z" fill="#000080"/><rect x="10" y="2" width="3.5" height="10" fill="#000080"/></svg>
<svg class="a" style="left:1113px;top:947px" width="16" height="16" viewBox="0 0 16 16"><path d="M2 2V13L13 7.5Z" fill="#0000c0"/><path d="M15 12V16H11Z" fill="#000"/></svg>
<svg class="a" style="left:1136px;top:947px" width="15" height="14" viewBox="0 0 15 14"><rect x="2" y="2" width="3.5" height="10" fill="#000080"/><path d="M7 2V12L13 7Z" fill="#000080"/></svg>
<div class="a" style="left:1157px;top:947px;width:1px;height:16px;background:#808080"></div><div class="a" style="left:1158px;top:947px;width:1px;height:16px;background:#fff"></div>
<svg class="a" style="left:1160px;top:947px" width="18" height="14" viewBox="0 0 18 14"><path d="M1 2V12L7 7Z M7 2V12L13 7Z" fill="#000080"/><rect x="14" y="2" width="2.5" height="10" fill="#000080"/></svg>
<div class="a" style="left:1182px;top:946px;width:1px;height:42px;background:#808080"></div><div class="a" style="left:1183px;top:946px;width:1px;height:42px;background:#fff"></div>
<svg class="a" style="left:1185px;top:945px" width="20" height="20" viewBox="0 0 20 20"><path d="M2,8.5 H18" stroke="#000" stroke-width="1.3"/><path d="M10,2 V8 M7.5,4.5 H12.5" stroke="#000" stroke-width="1.2" fill="none"/><path d="M8.5,10 V13 H6 L10,17.5 L14,13 H11.5 V10 Z" fill="#fff" stroke="#ff0000" stroke-width="1.1"/></svg>
<svg class="a" style="left:1208px;top:945px" width="20" height="20" viewBox="0 0 20 20"><path d="M2.5,3 L9.5,0.8 L16.5,3 L16,9 L9.5,17.5 L3,9 Z" fill="#c0c0c0" stroke="#0000a0" stroke-width="1.1"/><path d="M2.5,3 L9.5,6 L16.5,3 L9.5,0.8 Z" fill="#fff" stroke="#0000a0" stroke-width="1"/><path d="M9.5,6 V17.5" stroke="#0000a0" stroke-width="1"/><path d="M10.5,8 L15,5 L14.5,9 L10.5,14 Z" fill="#a0a0a0" opacity="0.7"/></svg>
<svg class="a" style="left:1231px;top:945px" width="20" height="20" viewBox="0 0 20 20"><path d="M6,15 A6,6 0 1 1 14,15" fill="none" stroke="#000" stroke-width="1.2"/><path d="M10,1.5 V6" stroke="#ff0000" stroke-width="1.2"/><path d="M3.5,16.5 L8,16 L5,12.5 Z M16.5,16.5 L12,16 L15,12.5 Z" fill="#000"/></svg>
<svg class="a" style="left:1254px;top:944px" width="22" height="20" viewBox="0 0 22 20"><rect x="9" y="3" width="11" height="10" fill="none" stroke="#a00000" stroke-width="1.1"/><path d="M14.5,3 V13 M9,8 H20" stroke="#a00000" stroke-width="1"/><path d="M3,9 L5,7 H11 V14 L9,16 H3 Z" fill="#fff" stroke="#0000c0" stroke-width="1.1"/><path d="M3,9 H9 V16 M9,9 L11,7" fill="none" stroke="#0000c0" stroke-width="1"/></svg>
<svg class="a" style="left:1126px;top:960px" width="4" height="4" viewBox="0 0 4 4"><path d="M4 0V4H0Z" fill="#000"/></svg>
<svg class="a" style="left:1201px;top:961px" width="4" height="4" viewBox="0 0 4 4"><path d="M4 0V4H0Z" fill="#000"/></svg>
<svg class="a" style="left:1269px;top:961px" width="4" height="4" viewBox="0 0 4 4"><path d="M4 0V4H0Z" fill="#000"/></svg>
<svg class="a" style="left:1222px;top:983px" width="4" height="4" viewBox="0 0 4 4"><path d="M4 0V4H0Z" fill="#000"/></svg>
<svg class="a" style="left:1063px;top:970px" width="18" height="12" viewBox="0 0 18 12"><circle cx="4.5" cy="6" r="3.5" fill="none" stroke="#000080" stroke-width="2.2"/><path d="M8 6H17M13 6V10M16 6V9" stroke="#000080" stroke-width="2"/></svg>
<div class="a" style="left:1086px;top:968px;width:68px;height:20px;background:#fff;border-top:1px solid #808080;border-left:1px solid #808080;border-right:1px solid #fff;border-bottom:1px solid #fff;box-shadow:inset 1px 1px 0 #000"></div>
<div class="t" style="left:1090px;top:973px">0</div>
<div class="a" style="left:1158px;top:968px;width:1px;height:20px;background:#808080"></div><div class="a" style="left:1159px;top:968px;width:1px;height:20px;background:#fff"></div>
<svg class="a" style="left:1161px;top:966px" width="20" height="20" viewBox="0 0 20 20"><rect x="1" y="2" width="13" height="12" fill="#fff" stroke="#000080" stroke-width="1.2"/><rect x="1" y="2" width="13" height="3" fill="#000080"/><circle cx="13" cy="13" r="5" fill="#fff" stroke="#c01010" stroke-width="1.3"/><path d="M13 10V13H15" stroke="#000" fill="none"/></svg>
<div class="a" style="left:1183px;top:969px;width:1px;height:17px;background:#fff"></div>
<svg class="a" style="left:1186px;top:968px" width="20" height="18" viewBox="0 0 20 18"><defs><pattern id="chk" width="2" height="2" patternUnits="userSpaceOnUse"><rect width="1" height="1" fill="#fff"/><rect x="1" y="1" width="1" height="1" fill="#fff"/><rect x="1" width="1" height="1" fill="#a0a0a0"/><rect y="1" width="1" height="1" fill="#a0a0a0"/></pattern></defs><path d="M1.5,1.5 L17.5,8 L1.5,15 Z" fill="url(#chk)"/><path d="M1.5,1.5 L17.5,8 L1.5,15" fill="none" stroke="#000" stroke-width="1.2"/><path d="M7,4 Q11,8 7,12" fill="none" stroke="#000" stroke-width="1.1"/></svg>
<svg class="a" style="left:1209px;top:968px" width="20" height="18" viewBox="0 0 20 18"><path d="M5,17 L1,10 Q1,8.5 3,9.5 L5,11 V4 Q5,2.5 6.5,3 L7,8 V2 Q8,0.5 9.5,1.5 L10,8 V2.5 Q11,1.5 12.5,2.5 L13,8 V4.5 Q14,3.5 15.5,4.5 L15.5,12 L13,17 Z" fill="url(#chk)" stroke="#000" stroke-width="1.1"/></svg>
<svg class="a" style="left:1232px;top:967px" width="20" height="20" viewBox="0 0 20 20"><ellipse cx="9.5" cy="9" rx="8" ry="2.8" fill="none" stroke="#e00000" stroke-width="1.6"/><circle cx="9.5" cy="9" r="5" fill="#fff" stroke="#0000c0" stroke-width="1.1"/><path d="M4.5,9 H14.5" stroke="#e00000" stroke-width="1.6"/></svg>
<svg class="a" style="left:1256px;top:968px" width="20" height="20" viewBox="0 0 20 20"><rect x="8.5" y="7.5" width="9" height="8.5" fill="none" stroke="#a00000" stroke-width="1.2"/><rect x="1.5" y="1.5" width="11" height="11" fill="#c0c0c0" stroke="#0000a0" stroke-width="1.3"/><path d="M4,4 L10,10" stroke="#000" stroke-width="1"/><path d="M4,4 L4,7 M4,4 L7,4" stroke="#000" stroke-width="1.2"/><path d="M10,10 V8 M10,10 H8" stroke="#000" stroke-width="1" stroke-dasharray="1 1"/></svg>
</body></html>
